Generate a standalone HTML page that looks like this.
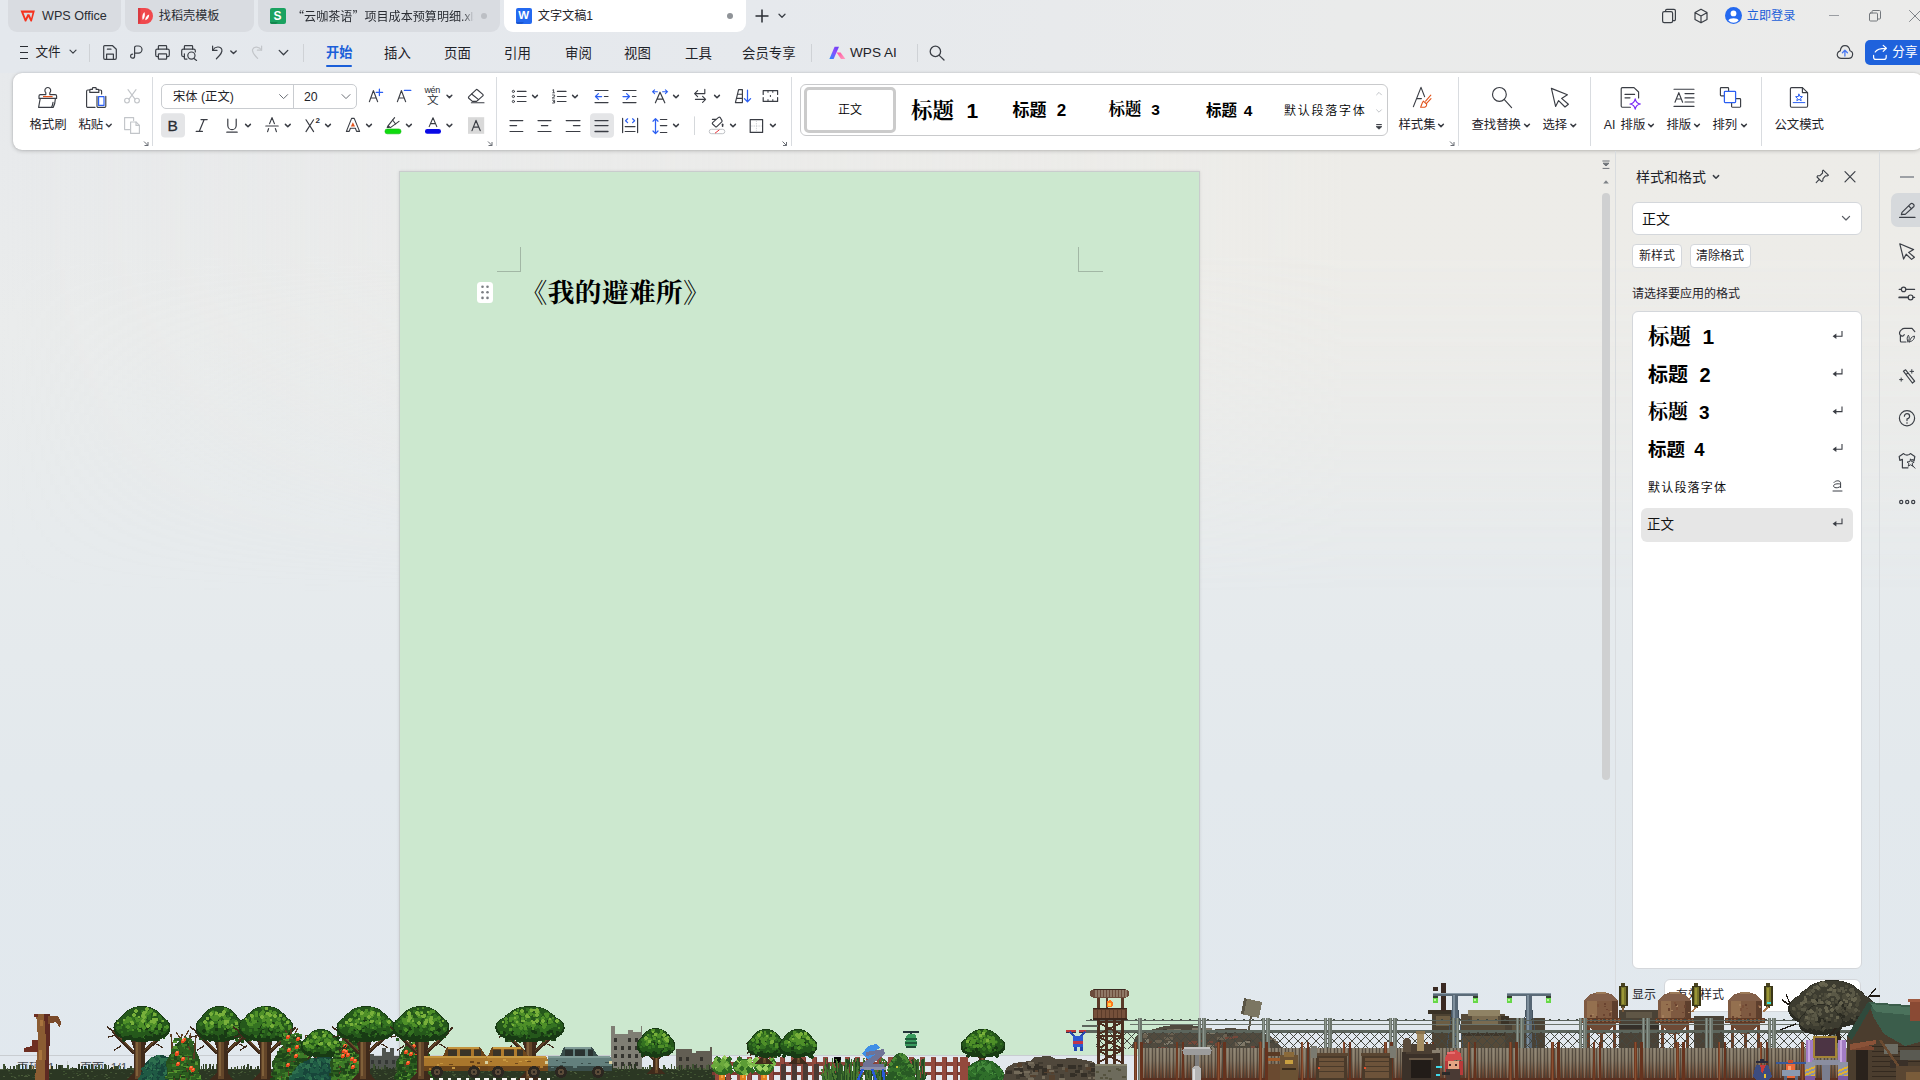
<!DOCTYPE html>
<html lang="zh-CN">
<head>
<meta charset="utf-8">
<title>文字文稿1 - WPS Office</title>
<style>
*{box-sizing:border-box;margin:0;padding:0}
html,body{width:1920px;height:1080px;overflow:hidden}
body{position:relative;font-family:"Liberation Sans","Noto Sans CJK SC",sans-serif;font-size:13px;color:#1f2329;
 background:linear-gradient(180deg,#e6e9ec 0%,#e8eaec 14%,#eaecec 30%,#e7ebed 50%,#e3e9ed 72%,#e1e8ee 100%)}
.abs{position:absolute}
.t{position:absolute;white-space:nowrap;line-height:1}
svg{position:absolute;overflow:visible}
.ic{fill:none;stroke:#3b3f46;stroke-width:1.2;stroke-linecap:round;stroke-linejoin:round}
/* ---------- tab row ---------- */
.tab{position:absolute;top:0;height:32px;background:#d9dce1;border-radius:0 0 9px 9px}
.tab.act{background:#fff}
.mt{top:46.6px;font-size:13.4px;color:#1f2329;margin-left:-1px}
/* ---------- ribbon ---------- */
#ribbon{position:absolute;left:13px;top:73px;width:1910px;height:77px;background:#fff;border-radius:9px;
 box-shadow:0 1px 4px rgba(0,0,0,.20),0 0 2px rgba(0,0,0,.12)}
.vsep{position:absolute;width:1px;background:#d9dce0}
.lbl{position:absolute;white-space:nowrap;font-size:12.4px;line-height:1;color:#1f2329}
/* ---------- document ---------- */
#page{position:absolute;left:399px;top:171px;width:801px;height:920px;background:#cce8cf;border:1px solid #c9cccd;
 box-shadow:0 0 3px rgba(0,0,0,.10)}
/* ---------- right panel ---------- */
#panel{position:absolute;left:1615px;top:151px;width:265px;height:933px;border-left:1px solid #d9dcdf;border-right:1px solid #d9dcdf;
 background:transparent}
.wbox{position:absolute;background:#fff;border:1px solid #d4d7db;border-radius:5px}
</style>
</head>
<body>

<div id="topbg" class="abs" style="left:0;top:0;width:1920px;height:73px;background:linear-gradient(90deg,#e4e8ed 0%,#e6e9ed 40%,#eaebeb 70%,#ebebea 100%)"></div>
<div id="warmbg" class="abs" style="left:0;top:73px;width:1920px;height:520px;background:linear-gradient(90deg,rgba(237,236,232,0) 0%,rgba(237,236,232,.55) 35%,rgba(237,236,232,.95) 70%,rgba(237,236,232,.95) 100%);-webkit-mask-image:linear-gradient(180deg,#000 0%,#000 35%,transparent 100%);mask-image:linear-gradient(180deg,#000 0%,#000 35%,transparent 100%)"></div>
<!-- ================= TAB ROW ================= -->
<div id="tabrow">
  <div class="tab" style="left:8px;width:113px"></div>
  <div class="tab" style="left:125px;width:129px"></div>
  <div class="tab" style="left:258px;width:242px"></div>
  <div class="tab act" style="left:504px;width:242px"></div>

  <!-- WPS logo -->
  <svg style="left:20.2px;top:10px" width="15.4" height="11.6" viewBox="0 0 17 13.4">
    <path d="M0.3 0.5 H16.7 L13.2 12.8 L9.6 6.6 L6 12.8 L3.2 6.2 M2.2 3.6 L6.2 8.6 L8 4.6 H11 L13 8.4 L14.4 3.6 Z" fill="none"/>
    <path d="M0.2 0.6 H16.8 L13.3 13.2 H11.9 L9.3 8.2 L6.7 13.2 H5.3 Z M3.6 3.2 L6.1 9.4 L8.2 5 H10.4 L12.5 9.4 L14 3.2 Z" fill="#f5321e" fill-rule="evenodd"/>
  </svg>
  <span class="t" style="left:42px;top:9.5px;font-size:12.6px;color:#2a2d33">WPS Office</span>

  <!-- docer icon -->
  <svg style="left:138px;top:8px" width="15" height="16" viewBox="0 0 15 16">
    <path d="M0 0 H7 A8 8 0 0 1 7 16 H0 Z" fill="#f0484d"/>
    <path d="M0 0 H2.4 V14.2 L0 16 Z" fill="#d93a40"/>
    <path d="M4.8 12 C3.6 8.6 4.8 5.6 6.4 4 C7.4 6.8 7 9.8 4.8 12 Z M7.2 12.2 C7.2 9.4 8.8 7.2 11.2 6.4 C11.2 9.2 9.8 11.4 7.2 12.2 Z" fill="#fff"/>
  </svg>
  <span class="t" style="left:158.8px;top:10px;font-size:12.15px;color:#2a2d33">找稻壳模板</span>

  <!-- S icon -->
  <svg style="left:270px;top:8px" width="16" height="16" viewBox="0 0 16 16">
    <rect width="16" height="16" rx="2" fill="#1aa260"/>
    <path d="M0 14 H8 L6 16 H2 A2 2 0 0 1 0 14 Z" fill="#12864d"/>
  </svg>
  <span class="t" style="left:273.6px;top:10px;font-size:12px;font-weight:bold;color:#fff">S</span>
  <span class="t" style="left:292px;top:10px;font-size:12.08px;color:#2a2d33;width:181.5px;height:15px;overflow:hidden;-webkit-mask-image:linear-gradient(90deg,#000 94%,transparent 100%)"><span style="font-family:'Noto Sans CJK SC',sans-serif">“</span>云咖茶语<span style="font-family:'Noto Sans CJK SC',sans-serif">”</span>项目成本预算明细.xlsx</span>
  <div class="abs" style="left:480.8px;top:12.8px;width:6px;height:6px;border-radius:50%;background:#bcbfc4"></div>

  <!-- W icon -->
  <svg style="left:516px;top:8px" width="16" height="16" viewBox="0 0 16 16">
    <rect width="16" height="16" rx="2" fill="#2469f0"/>
    <path d="M0 14 H8 L6 16 H2 A2 2 0 0 1 0 14 Z" fill="#1a55d0"/>
  </svg>
  <span class="t" style="left:518.2px;top:9.6px;font-size:11.5px;font-weight:bold;color:#fff">W</span>
  <span class="t" style="left:537.8px;top:10px;font-size:12.15px;color:#1f2329">文字文稿1</span>
  <div class="abs" style="left:727px;top:13px;width:6px;height:6px;border-radius:50%;background:#8f9398"></div>

  <!-- plus / chevron -->
  <svg style="left:755px;top:9px" width="14" height="14" viewBox="0 0 14 14"><path d="M7 0.5V13.5M0.5 7H13.5" stroke="#2a2d33" stroke-width="1.5" fill="none"/></svg>
  <svg style="left:778px;top:13px" width="8" height="6" viewBox="0 0 8 6"><path d="M1 1.2L4 4.2L7 1.2" class="ic" style="stroke-width:1.3"/></svg>

  <!-- right controls -->
  <svg style="left:1661px;top:8px" width="16" height="16" viewBox="0 0 16 16"><rect x="1.6" y="3.6" width="10" height="11" rx="1.6" class="ic"/><path d="M4.6 3.4V2.6A1.2 1.2 0 0 1 5.8 1.4H13A1.4 1.4 0 0 1 14.4 2.8V11.4A1.2 1.2 0 0 1 13.2 12.6H12" class="ic"/></svg>
  <svg style="left:1693px;top:8px" width="16" height="16" viewBox="0 0 16 16"><path d="M8 1.2L14 4.6V11.4L8 14.8L2 11.4V4.6Z M2.2 4.8L8 8L13.8 4.8M8 8V14.6" class="ic"/></svg>
  <svg style="left:1725px;top:7px" width="17" height="17" viewBox="0 0 17 17"><circle cx="8.5" cy="8.5" r="8.5" fill="#2469f0"/><circle cx="8.5" cy="6.4" r="2.9" fill="#fff"/><path d="M3.4 13.6C4 10.6 13 10.6 13.6 13.6A7 7 0 0 1 3.4 13.6Z" fill="#fff"/></svg>
  <span class="t" style="left:1746.8px;top:10px;font-size:12.15px;color:#1b5fd9">立即登录</span>
  <div class="abs" style="left:1829px;top:15px;width:10px;height:1px;background:#9a9da2"></div>
  <svg style="left:1869px;top:10px" width="12" height="12" viewBox="0 0 12 12"><rect x="0.5" y="3" width="8" height="8" rx="1" class="ic" style="stroke:#74787d;stroke-width:1"/><path d="M3 3V1.5A1 1 0 0 1 4 0.5H10.5A1 1 0 0 1 11.5 1.5V8A1 1 0 0 1 10.5 9H8.5" class="ic" style="stroke:#74787d;stroke-width:1"/></svg>
  <svg style="left:1909px;top:10px" width="12" height="12" viewBox="0 0 12 12"><path d="M0.5 0.5L11.5 11.5M11.5 0.5L0.5 11.5" class="ic" style="stroke:#7f8388;stroke-width:1"/></svg>
</div>

<!-- ================= MENU ROW ================= -->
<div id="menurow">
  <svg style="left:20px;top:45px" width="9" height="14" viewBox="0 0 9 14"><path d="M0 1.5H8M0 7.5H8M0 13.5H8" stroke="#2a2d33" stroke-width="1.1" fill="none"/></svg>
  <span class="t" style="left:35.5px;top:46px;font-size:12.6px;color:#1f2329">文件</span>
  <svg style="left:69px;top:49px" width="8" height="6" viewBox="0 0 8 6"><path d="M1 1.2L4 4.2L7 1.2" class="ic" style="stroke-width:1.2"/></svg>
  <div class="vsep" style="left:89px;top:44px;height:18px;background:#cfd2d6"></div>

  <!-- save -->
  <svg style="left:103px;top:45px" width="14" height="15" viewBox="0 0 14 15"><path d="M1.6 0.7H9.6L13.3 4.2V13A1.3 1.3 0 0 1 12 14.3H2A1.3 1.3 0 0 1 0.7 13V1.6A0.9 0.9 0 0 1 1.6 0.7Z" class="ic"/><path d="M3.6 14V9.2H10.4V14M4.4 4.2H8" class="ic"/></svg>
  <!-- pdf/link -->
  <svg style="left:130px;top:45px" width="13" height="15" viewBox="0 0 13 15"><path d="M4.6 8.2H8.4A3.6 3.6 0 0 0 8.4 1H6.2A1.6 1.6 0 0 0 4.6 2.6V11.2A2 2 0 1 1 2.6 9.2" class="ic"/></svg>
  <!-- print -->
  <svg style="left:155px;top:45px" width="15" height="15" viewBox="0 0 15 15"><path d="M3.4 4.2V1.4A0.8 0.8 0 0 1 4.2 0.6H10.8A0.8 0.8 0 0 1 11.6 1.4V4.2" class="ic"/><rect x="0.7" y="4.2" width="13.6" height="7.4" rx="1.6" class="ic"/><rect x="3.4" y="8.8" width="8.2" height="5.4" rx="0.6" class="ic" style="fill:#e6e9ee"/></svg>
  <!-- print preview -->
  <svg style="left:181px;top:45px" width="17" height="16" viewBox="0 0 17 16"><path d="M3.4 4.2V1.4A0.8 0.8 0 0 1 4.2 0.6H10.8A0.8 0.8 0 0 1 11.6 1.4V4.2" class="ic"/><path d="M3.4 11.6H2.2A1.5 1.5 0 0 1 0.7 10.1V5.8A1.6 1.6 0 0 1 2.3 4.2H12.7A1.6 1.6 0 0 1 14.3 5.8V7" class="ic"/><path d="M3.4 8.8V13.4A0.7 0.7 0 0 0 4.1 14.1H6" class="ic"/><circle cx="10.4" cy="10.6" r="3.6" class="ic"/><path d="M13 13.4L15.6 15.4" class="ic"/></svg>
  <!-- undo -->
  <svg style="left:211px;top:45px" width="13" height="15" viewBox="0 0 13 15"><path d="M1.6 1V5.4H6" class="ic"/><path d="M1.8 5.2C4 1.4 9.4 0.8 10.8 4.4C12 7.6 8.4 11 5.4 13.8" class="ic"/></svg>
  <svg style="left:229.5px;top:49.5px" width="7" height="5" viewBox="0 0 7 5"><path d="M0.8 1L3.5 3.6L6.2 1" class="ic" style="stroke-width:1.4"/></svg>
  <!-- redo (disabled) -->
  <svg style="left:251px;top:45px" width="12" height="15" viewBox="0 0 12 15"><path d="M10.6 1V5.2H6.4" class="ic" style="stroke:#c3c6ca"/><path d="M10.4 5C8.4 1.6 3 1 1.6 4.4C0.6 7.4 3.8 10.6 6.6 13.4" class="ic" style="stroke:#c3c6ca"/></svg>
  <svg style="left:277.5px;top:48.5px" width="11" height="8" viewBox="0 0 11 8"><path d="M1.2 1.4L5.5 5.8L9.8 1.4" class="ic" style="stroke-width:1.3"/></svg>
  <div class="vsep" style="left:303px;top:44px;height:18px;background:#cfd2d6"></div>

  <span class="t" style="left:326px;top:46.4px;font-size:13.2px;color:#1b5fd9;font-weight:bold">开始</span>
  <div class="abs" style="left:326px;top:65px;width:26px;height:2px;background:#1b5fd9;border-radius:1px"></div>
  <span class="t mt" style="left:385px">插入</span>
  <span class="t mt" style="left:445px">页面</span>
  <span class="t mt" style="left:505px">引用</span>
  <span class="t mt" style="left:566px">审阅</span>
  <span class="t mt" style="left:625px">视图</span>
  <span class="t mt" style="left:686px">工具</span>
  <span class="t mt" style="left:743px">会员专享</span>
  <div class="vsep" style="left:811px;top:44px;height:18px;background:#cfd2d6"></div>
  <!-- AI logo -->
  <svg style="left:829px;top:46px" width="17" height="14" viewBox="0 0 17 14">
    <defs><linearGradient id="ai1" x1="0" y1="1" x2="1" y2="0"><stop offset="0" stop-color="#1f8cff"/><stop offset="0.55" stop-color="#8a4dff"/><stop offset="1" stop-color="#6a3cf0"/></linearGradient>
    <linearGradient id="ai2" x1="0" y1="0" x2="1" y2="1"><stop offset="0" stop-color="#ff4fa0"/><stop offset="1" stop-color="#ffa0c0"/></linearGradient></defs>
    <path d="M0.4 13L5.6 0.8H10L4.6 13Z" fill="url(#ai1)"/>
    <path d="M7.6 6.6H11.6L16.4 13H12Z" fill="url(#ai2)"/>
  </svg>
  <span class="t" style="left:850px;top:46px;font-size:13.6px;color:#1f2329">WPS AI</span>
  <div class="vsep" style="left:917px;top:44px;height:18px;background:#cfd2d6"></div>
  <svg style="left:929px;top:45px" width="16" height="16" viewBox="0 0 16 16"><circle cx="6.4" cy="6.4" r="5.2" class="ic" style="stroke-width:1.3"/><path d="M10.2 10.4L15 15" class="ic" style="stroke-width:1.3"/></svg>

  <!-- cloud + share -->
  <svg style="left:1830px;top:40px" width="30" height="26" viewBox="1830 40 30 26"><path d="M1841 58.3C1838 58.3 1836.6 55.6 1837.5 53.3C1838 51.9 1839.2 51.2 1840.3 50.9C1840.6 47.9 1842.5 45.6 1845 45.6C1847.6 45.6 1849.5 47.8 1849.9 50.7C1851.8 51.2 1852.8 52.8 1852.6 54.6C1852.4 56.8 1850.8 58.3 1848.6 58.3Z" class="ic" style="stroke-width:1.15"/><path d="M1844.9 56V50.6M1842.4 52.8L1844.9 50.3L1847.4 52.8" fill="none" stroke="#4a78f0" stroke-width="1.3" stroke-linecap="round" stroke-linejoin="round"/></svg>
  <div class="abs" style="left:1865px;top:40px;width:62px;height:25px;background:#1f62dc;border-radius:5px"></div>
  <svg style="left:1865px;top:40px" width="30" height="25" viewBox="1865 40 30 25"><path d="M1873.6 55.4V57.2A2.2 2.2 0 0 0 1875.8 59.4H1884A2.2 2.2 0 0 0 1886.2 57.2V55.4" fill="none" stroke="#fff" stroke-width="1.2" stroke-linecap="round"/><path d="M1875.2 52C1876.4 49.6 1879.4 48.3 1886.2 48.3M1883.2 45.4L1886.4 48.3L1883.2 51.4" fill="none" stroke="#fff" stroke-width="1.2" stroke-linecap="round" stroke-linejoin="round"/></svg>
  <span class="t" style="left:1892.3px;top:46px;font-size:12.6px;color:#fff">分享</span>
</div>

<!-- ================= RIBBON ================= -->
<div id="ribbon">
  <div class="vsep" style="left:139px;top:4px;height:69px"></div>
  <div class="vsep" style="left:483px;top:4px;height:69px"></div>
  <div class="vsep" style="left:778px;top:4px;height:69px"></div>
  <div class="vsep" style="left:1445px;top:4px;height:69px"></div>
  <div class="vsep" style="left:1577px;top:4px;height:69px"></div>
  <div class="vsep" style="left:1748px;top:4px;height:69px"></div>
  <!-- font combos -->
  <div class="abs" style="left:148px;top:11px;width:196px;height:25px;border:1px solid #c9ccd0;border-radius:5px"></div>
  <div class="abs" style="left:280px;top:11px;width:1px;height:25px;background:#c9ccd0"></div>
  <!-- style gallery -->
  <div class="abs" style="left:787px;top:11px;width:588px;height:52px;border:1px solid #c9cacc;border-radius:6px"></div>
  <div class="abs" style="left:790.5px;top:14.4px;width:92px;height:45.2px;border:3.8px solid #cbcbcb;border-radius:5px"></div>
</div>
<svg id="ribsvg" style="left:0;top:0" width="1920" height="160" viewBox="0 0 1920 160">
<style>.k{fill:none;stroke:#3a3d44;stroke-width:1.15;stroke-linecap:round;stroke-linejoin:round}.b{fill:none;stroke:#2b5ff2;stroke-width:1.25;stroke-linecap:round;stroke-linejoin:round}.g{fill:none;stroke:#c2c5c9;stroke-width:1.15;stroke-linecap:round;stroke-linejoin:round}</style>
<g transform="translate(38,87)"><path d="M7.8 7.6V5.6C6.6 4.6 6.6 2.4 7.8 1.4A2.7 2.7 0 0 1 11.8 1.4C13 2.4 13 4.6 11.8 5.6V7.6H17.2A1.4 1.4 0 0 1 18.6 9V11.4H1V9A1.4 1.4 0 0 1 2.4 7.6Z" class="k"/><path d="M2.2 11.6L0.6 20.4H15.2C16.6 18 17.2 15 17.4 11.6" class="k"/><path d="M13.6 20.2C14.4 18.6 14.8 17 15 15.4" class="k"/><path d="M5 9.6H14.6" stroke="#e2541c" stroke-width="1.2" fill="none"/></g>
<g transform="translate(86,87)"><path d="M3.6 3H1.8A1.2 1.2 0 0 0 0.6 4.2V19.2A1.2 1.2 0 0 0 1.8 20.4H9" class="k"/><path d="M13.4 3H14.4A1.2 1.2 0 0 1 15.6 4.2V7" class="k"/><path d="M3.8 5.4V3.2A0.8 0.8 0 0 1 4.6 2.4H6.4V1.4A0.8 0.8 0 0 1 7.2 0.6H9.4A0.8 0.8 0 0 1 10.2 1.4V2.4H12A0.8 0.8 0 0 1 12.8 3.2V5.4Z" class="k"/><path d="M11 9.4V19.2A1.2 1.2 0 0 0 12.2 20.4H18.6A1.2 1.2 0 0 0 19.8 19.2V9.4" class="k"/><rect x="12.6" y="9.6" width="5.4" height="8.8" class="b" style="stroke-width:1.2"/></g>
<g transform="translate(124,89)"><path d="M4 0.6L11 10.2M12 0.6L5 10.2" class="g"/><circle cx="3" cy="11.6" r="2.4" class="g"/><circle cx="13" cy="11.6" r="2.4" class="g"/></g>
<g transform="translate(124,117)"><path d="M5.6 12.6H0.6V0.6H9.6V3.4" class="g"/><path d="M6.6 5H12L15.4 8.4V16.4H6.6Z" class="g"/><path d="M12 5V8.4H15.4" class="g"/></g>
<path d="M144.0 141.5L148.0 145.5M144.5 145.5H148.0V142" stroke="#6a6e75" stroke-width="1" fill="none"/>
<path d="M369.4 101.6L373.4 90.6L377.6 101.6M370.8 98H376.2" class="k" style="stroke-width:1.2"/>
<path d="M379.4 89.2V95.6M376.2 92.4H382.6" class="b"/>
<path d="M397.4 101.6L401.4 90.6L405.6 101.6M398.8 98H404.2" class="k" style="stroke-width:1.2"/>
<path d="M404.4 90.4H410.8" class="b"/>
<g transform="translate(468,89)"><path d="M9.4 0.8L14.8 5.4A1 1 0 0 1 14.8 6.9L8.6 12.4H4.4L0.8 9.2A1 1 0 0 1 0.8 7.7L8 0.8A1 1 0 0 1 9.4 0.8Z" class="k"/><path d="M3.6 5L10.6 10.6" class="k"/><path d="M3.4 13.7H16" class="k"/></g>
<path d="M447 95.2L449.4 97.6L451.8 95.2" class="k" style="stroke-width:1.5"/>
<rect x="161" y="113.2" width="24" height="24.4" rx="4" fill="#e4e5e7"/>
<path d="M201 119.6H207.2M196.2 131.4H202.4M204.2 119.6L199.2 131.4" class="k" style="stroke-width:1.2"/>
<path d="M227.8 119.2V125.4A4.2 4.2 0 0 0 236.2 125.4V119.2" class="k" style="stroke-width:1.2"/><path d="M226.8 132.2H237.2" class="k" style="stroke-width:1.2"/>
<path d="M245.6 124.4L248 126.8L250.4 124.4" class="k" style="stroke-width:1.5"/>
<path d="M267.6 131.6L268.6 128.6M276.4 131.6L275.4 128.6M269.6 123.6L272 117.6L274.4 123.6" class="k" style="stroke-width:1.2"/><path d="M265.8 126H278.2" class="k" style="stroke-width:1.2"/>
<path d="M285.4 124.4L287.8 126.8L290.2 124.4" class="k" style="stroke-width:1.5"/>
<path d="M306 119.8L313.6 131.6M313.6 119.8L306 131.6" class="k" style="stroke-width:1.2"/>
<path d="M325.6 124.4L328 126.8L330.4 124.4" class="k" style="stroke-width:1.5"/>
<path d="M346.4 131.4L351.6 118.4H354.2L359.6 131.4H356.6L355.4 128.2H350.4L349.2 131.4Z" class="k" style="stroke-width:1.1"/>
<path d="M352.9 122.2L355 126.6H350.8Z" fill="#e2541c"/>
<path d="M366.6 124.4L369 126.8L371.4 124.4" class="k" style="stroke-width:1.5"/>
<path d="M394.6 117.6L388 125.8L390.4 127.6L399 121.4M388 125.8L387.2 127.4L389 127.4" class="k" style="stroke-width:1.1"/><path d="M392.6 120L395.6 124" class="k" style="stroke-width:1.1"/>
<rect x="385" y="129" width="16" height="4.8" rx="2.2" fill="#0fdc0f" stroke="#08b808" stroke-width="0.6"/>
<path d="M406.5 124.4L408.9 126.8L411.3 124.4" class="k" style="stroke-width:1.5"/>
<path d="M429.2 126.6L433 117.8L436.8 126.6M430.6 123.6H435.4" class="k" style="stroke-width:1.1"/>
<rect x="425" y="129" width="16" height="4.8" rx="2.2" fill="#0a0ae6"/>
<path d="M447 124.4L449.4 126.8L451.8 124.4" class="k" style="stroke-width:1.5"/>
<rect x="468" y="117.2" width="16.2" height="16.6" fill="#d9d9d9"/>
<path d="M472 130.6L476 120.4L480.2 130.6M473.4 127.2H478.8" class="k" style="stroke-width:1.2"/>
<path d="M488.0 141.5L492.0 145.5M488.5 145.5H492.0V142" stroke="#6a6e75" stroke-width="1" fill="none"/>
<circle cx="513.4" cy="91.4" r="1.1" class="k" style="stroke-width:1"/><path d="M517.4 91.4H526" class="k" style="stroke-width:1.2"/>
<circle cx="513.4" cy="96.5" r="1.1" class="k" style="stroke-width:1"/><path d="M517.4 96.5H526" class="k" style="stroke-width:1.2"/>
<circle cx="513.4" cy="101.5" r="1.1" class="k" style="stroke-width:1"/><path d="M517.4 101.5H526" class="k" style="stroke-width:1.2"/>
<path d="M532.6 95.4L535 97.8L537.4 95.4" class="k" style="stroke-width:1.5"/>
<path d="M557.4 91.4H566" class="k" style="stroke-width:1.2"/>
<path d="M557.4 96.5H566" class="k" style="stroke-width:1.2"/>
<path d="M557.4 101.5H566" class="k" style="stroke-width:1.2"/>
<path d="M552.4 90.2L553.6 89.6V92.6M552.4 92.8H554.8" fill="none" stroke="#3a3d44" stroke-width="0.9"/>
<path d="M552.2 95H554.6V96.4L552.2 98H554.8" fill="none" stroke="#3a3d44" stroke-width="0.9"/>
<path d="M552.2 100.2H554.6V103H552.2M553 101.6H554.6" fill="none" stroke="#3a3d44" stroke-width="0.9"/>
<path d="M572.6 95.4L575 97.8L577.4 95.4" class="k" style="stroke-width:1.5"/>
<path d="M595 90.5H608M595 102.6H608M604.4 96.5H608" class="k" style="stroke-width:1.2"/>
<path d="M595.6 96.5H601.6M598.4 93.6L595.5 96.5L598.4 99.4" class="b"/>
<path d="M623 90.5H636M623 102.6H636M632.4 96.5H636" class="k" style="stroke-width:1.2"/>
<path d="M623 96.5H629.4M626.6 93.6L629.5 96.5L626.6 99.4" class="b"/>
<path d="M655.4 102.8L660 92.2L664.8 102.8M657 99.2H663.2" class="k" style="stroke-width:1.2"/>
<path d="M652.6 91.7H657.4M654.6 89.8L652.6 91.7L654.6 93.6M662.6 91.7H667.6M665.4 89.8L667.4 91.7L665.4 93.6" class="b" style="stroke-width:1.1"/>
<path d="M673.6 95.4L676 97.8L678.4 95.4" class="k" style="stroke-width:1.5"/>
<path d="M704.8 89.4V93.6H694.6M697.6 90.6L694.6 93.6L697.6 96.6" class="k"/>
<path d="M695.4 99.3H705.6M702.6 96.3L705.6 99.3L702.6 102.3" class="k"/>
<path d="M714.6 95.4L717 97.8L719.4 95.4" class="k" style="stroke-width:1.5"/>
<path d="M738.6 89.6H742.4V102.6H735.4Z M737.6 94.2H742.4M736.6 98.4H742.4" class="k"/>
<path d="M747.5 90.2V101.6M744.4 98.6L747.5 101.8L750.6 98.6" class="b"/>
<path d="M763.2 94.4V90.6H777.6V94.4M763.2 97.6V101.4H777.6V97.6" class="k" style="stroke-width:1.2"/>
<path d="M768 90.6V92.4M772.8 90.6V92.4M768 101.4V99.6M772.8 101.4V99.6M770.4 95.4V96.6" class="k" style="stroke-width:1"/>
<path d="M510 120.6H522.8M510 125.6H516.6M510 131.5H522.8" class="k" style="stroke-width:1.2"/>
<path d="M538 120.6H551M541.4 125.6H547.8M538 131.5H551" class="k" style="stroke-width:1.2"/>
<path d="M566.2 120.6H580M573.4 125.6H580M566.2 131.5H580" class="k" style="stroke-width:1.2"/>
<rect x="590" y="113.2" width="24" height="24.6" rx="4" fill="#e4e5e7"/>
<path d="M595 120.6H608M595 125.6H608M595 131.5H608" class="k" style="stroke-width:1.3"/>
<path d="M622.6 118.4V132.6M637.6 118.4V132.6M625.2 126.6H635M625.2 131.5H635" class="k" style="stroke-width:1.2"/>
<path d="M627.6 118.8L625.6 120.7L627.6 122.6M632.6 118.8L634.6 120.7L632.6 122.6" class="b"/>
<path d="M660.4 119.5H666.8M660.4 125.6H666.8M660.4 132.5H666.8" class="k" style="stroke-width:1.2"/>
<path d="M655.5 118.8V133.4M653 121.2L655.5 118.6L658 121.2M653 131L655.5 133.6L658 131" class="b"/>
<path d="M673.6 124.4L676 126.8L678.4 124.4" class="k" style="stroke-width:1.5"/>
<path d="M694.5 116.4V135" stroke="#d5d8db" stroke-width="1" fill="none"/>
<path d="M712.4 119.4H716.2M716.2 119.4L718.6 117.4A1.2 1.2 0 0 1 720.2 117.5L722 120.6M716.2 119.4L712.6 122.6A1 1 0 0 0 712.6 124L715.4 126.6A1 1 0 0 0 716.8 126.6L722 121.6V120.4" class="k"/>
<path d="M722.6 124.2V126.2" stroke="#3a3d44" stroke-width="1.6" fill="none" stroke-linecap="round"/>
<rect x="709.2" y="129.3" width="15.6" height="4.4" rx="2.2" fill="#fff" stroke="#b9bbbf" stroke-width="0.9"/><path d="M715 133.2L719.4 129.8" stroke="#e8373e" stroke-width="1" fill="none"/>
<path d="M730.6 124.4L733 126.8L735.4 124.4" class="k" style="stroke-width:1.5"/>
<rect x="750.2" y="119.6" width="12.4" height="12.8" class="k" style="stroke-width:1.2"/><path d="M756.4 120.6V131.6M751.2 126H761.6" stroke="#c4c6ca" stroke-width="0.8" stroke-dasharray="1.4 1" fill="none"/>
<path d="M770.5 124.4L772.9 126.8L775.3 124.4" class="k" style="stroke-width:1.5"/>
<path d="M782.5 141.5L786.5 145.5M783 145.5H786.5V142" stroke="#6a6e75" stroke-width="1" fill="none"/>
<path d="M106.4 124.3L108.8 126.7L111.2 124.3" class="k" style="stroke-width:1.5"/><path d="M279.6 94.6L283.6 98.6L287.6 94.6" class="k" style="stroke-width:1;stroke:#6a6e75"/><path d="M342 94.6L346 98.6L350 94.6" class="k" style="stroke-width:1;stroke:#6a6e75"/>
<path d="M1376.6 94.8L1379 92.4L1381.4 94.8" class="g" style="stroke-width:1"/>
<path d="M1376.6 109.8L1379 112.2L1381.4 109.8" class="g" style="stroke-width:1"/>
<path d="M1376.2 124.6H1381.8" stroke="#3a3d44" stroke-width="1.1" fill="none"/><path d="M1376.2 126.6L1379 129.2L1381.8 126.6Z" fill="#3a3d44" stroke="#3a3d44" stroke-width="0.8" stroke-linejoin="round"/>
<path d="M1413.4 106.6L1421 87.4L1424.6 96.6M1416.6 98.6H1421.4" class="k"/>
<path d="M1430.8 95.2L1425.6 101.2M1423.4 101.2L1426.6 104A2.6 2.6 0 0 1 1424.6 107.2H1420.6C1421.6 105.6 1421.6 103.4 1423.4 101.2ZM1431 98.6L1426.8 103.2" fill="none" stroke="#e2541c" stroke-width="1.1" stroke-linecap="round" stroke-linejoin="round"/>
<path d="M1438.6 124.2L1441 126.6L1443.4 124.2" class="k" style="stroke-width:1.5"/>
<path d="M1450.0 141.5L1454.0 145.5M1450.5 145.5H1454.0V142" stroke="#6a6e75" stroke-width="1" fill="none"/>
<circle cx="1499.4" cy="94.4" r="6.9" class="k"/><path d="M1504.4 99.6L1511.6 107.6" class="k"/>
<path d="M1524.6 124.2L1527 126.6L1529.4 124.2" class="k" style="stroke-width:1.5"/>
<path d="M1551.4 88.4L1567.4 94.8L1561.6 98.4L1568.4 104.2L1565 107L1558.6 100.6L1555.6 106.4Z" class="k"/>
<path d="M1570.9 124.2L1573.3 126.6L1575.7 124.2" class="k" style="stroke-width:1.5"/>
<path d="M1630.4 107.2H1622.4A1.2 1.2 0 0 1 1621.2 106V88.8A1.2 1.2 0 0 1 1622.4 87.6H1634L1638.6 92V98" class="k"/><path d="M1625 94.4H1634.6M1625 97.8H1630" class="k"/>
<path d="M1635.2 98.8C1635.8 102.2 1637 103.4 1640.4 104C1637 104.6 1635.8 105.8 1635.2 109.2C1634.6 105.8 1633.4 104.6 1630 104C1633.4 103.4 1634.6 102.2 1635.2 98.8Z" fill="#fff" stroke="#7a2cf5" stroke-width="1.2" stroke-linejoin="round"/>
<path d="M1648.6 124.2L1651 126.6L1653.4 124.2" class="k" style="stroke-width:1.5"/>
<path d="M1674 89.2H1694M1674 106.4H1694M1685 93.6H1694M1685 97.9H1694M1685 102H1694" class="k"/>
<path d="M1675 102.2L1678.8 92.6L1682.6 102.2M1676.4 99H1681.2" class="k"/>
<path d="M1694.6 124.2L1697 126.6L1699.4 124.2" class="k" style="stroke-width:1.5"/>
<path d="M1724.4 95.8H1721.2A0.8 0.8 0 0 1 1720.4 95V88.4A0.8 0.8 0 0 1 1721.2 87.6H1727.8A0.8 0.8 0 0 1 1728.6 88.4V91.2" class="k"/>
<path d="M1735.6 98.6H1739.8A0.8 0.8 0 0 1 1740.6 99.4V106.4A0.8 0.8 0 0 1 1739.8 107.2H1732.4A0.8 0.8 0 0 1 1731.6 106.4V102.6" class="k"/>
<rect x="1724.4" y="91.3" width="11.2" height="11.2" rx="0.8" class="b" style="fill:#fff"/>
<path d="M1741.6 124.2L1744 126.6L1746.4 124.2" class="k" style="stroke-width:1.5"/>
<path d="M1791.6 87.6H1802.4L1807.6 92.6V106A1.2 1.2 0 0 1 1806.4 107.2H1791.6A1.2 1.2 0 0 1 1790.4 106V88.8A1.2 1.2 0 0 1 1791.6 87.6Z" class="k"/><path d="M1802.4 87.8V92.6H1807.4" class="k"/>
<path d="M1799 94.2L1800 96.5L1802.4 96.7L1800.6 98.3L1801.2 100.7L1799 99.4L1796.8 100.7L1797.4 98.3L1795.6 96.7L1798 96.5Z" class="b" style="stroke-width:1"/><path d="M1793.2 102.6H1804.8" class="b" style="stroke-width:1"/>
</svg>
<div id="riblabels">
  <span class="lbl" style="left:29.4px;top:119.4px">格式刷</span>
  <span class="lbl" style="left:78.4px;top:119.4px">粘贴</span>
  <span class="lbl" style="left:173px;top:90.6px;font-size:12.3px">宋体 (正文)</span>
  <span class="lbl" style="left:304px;top:90.6px;font-size:12.3px">20</span>
  <span class="t" style="left:167.5px;top:118.2px;font-size:15.5px;color:#2a2d33;-webkit-text-stroke:0.3px #2a2d33">B</span>
  <span class="t" style="left:424.4px;top:86.2px;font-size:9px;color:#2a2d33;letter-spacing:-0.3px">wén</span>
  <span class="t" style="left:427px;top:95px;font-size:11.5px;color:#2a2d33">文</span>
  <span class="t" style="left:315.4px;top:116.6px;font-size:8px;color:#2a2d33;font-weight:bold">2</span>
  <span class="t" style="left:838px;top:104px;font-size:12px;font-weight:350;font-family:'Liberation Sans','Noto Sans CJK SC',sans-serif;color:#000">正文</span>
  <span class="t" style="left:911px;top:99.5px;font-size:21.5px;word-spacing:7px;font-weight:bold;font-family:'Liberation Serif','Noto Serif CJK SC',serif;color:#000">标题 <b style="font-family:'Liberation Sans',sans-serif;font-size:21px">1</b></span>
  <span class="t" style="left:1012.5px;top:102px;font-size:17px;word-spacing:5.5px;font-weight:bold;font-family:'Liberation Sans','Noto Sans CJK SC',sans-serif;color:#000">标题 2</span>
  <span class="t" style="left:1108.5px;top:102px;font-size:16.5px;word-spacing:5.5px;font-weight:bold;font-family:'Liberation Serif','Noto Serif CJK SC',serif;color:#000">标题 <b style="font-family:'Liberation Sans',sans-serif;font-size:15.5px">3</b></span>
  <span class="t" style="left:1206px;top:102.5px;font-size:15.5px;word-spacing:2.5px;font-weight:bold;font-family:'Liberation Sans','Noto Sans CJK SC',sans-serif;color:#000">标题 4</span>
  <span class="t" style="left:1284px;top:104.6px;font-size:12px;letter-spacing:1.75px;font-weight:350;font-family:'Liberation Sans','Noto Sans CJK SC',sans-serif;color:#000">默认段落字体</span>
  <span class="lbl" style="left:1398.4px;top:119.4px">样式集</span>
  <span class="lbl" style="left:1471.4px;top:119.4px">查找替换</span>
  <span class="lbl" style="left:1542.4px;top:119.4px">选择</span>
  <span class="lbl" style="left:1603.8px;top:119.4px;word-spacing:1.6px">AI 排版</span>
  <span class="lbl" style="left:1666.4px;top:119.4px">排版</span>
  <span class="lbl" style="left:1712.4px;top:119.4px">排列</span>
  <span class="lbl" style="left:1774.4px;top:119.4px">公文模式</span>
</div>


<!-- ================= DOCUMENT ================= -->
<div id="page">
  <div class="abs" style="left:97px;top:99px;width:24px;height:1px;background:#a2b7a5"></div>
  <div class="abs" style="left:120px;top:75px;width:1px;height:25px;background:#a2b7a5"></div>
  <div class="abs" style="left:678px;top:99px;width:25px;height:1px;background:#a2b7a5"></div>
  <div class="abs" style="left:678px;top:75px;width:1px;height:25px;background:#a2b7a5"></div>
  <div class="abs" style="left:77px;top:110px;width:16px;height:21px;background:#fff;border-radius:3.5px"></div>
  <svg style="left:77px;top:110px" width="16" height="21" viewBox="0 0 16 21"><g fill="#7b7e83"><circle cx="5.5" cy="4.8" r="1.3"/><circle cx="10.5" cy="4.8" r="1.3"/><circle cx="5.5" cy="10.3" r="1.3"/><circle cx="10.5" cy="10.3" r="1.3"/><circle cx="5.5" cy="15.9" r="1.3"/><circle cx="10.5" cy="15.9" r="1.3"/></g></svg>
  <span class="t" style="left:120.6px;top:108px;font-size:26.67px;letter-spacing:0.45px;font-weight:bold;color:#000;font-family:'Liberation Serif','Noto Serif CJK SC',serif">《我的避难所》</span>
</div>

<!-- scrollbar -->
<svg style="left:1600px;top:158px" width="12" height="30" viewBox="0 0 12 30"><path d="M2.4 3H9.6M3 5.2L6 8L9 5.2Z M2.6 10.4H9.4" stroke="#6f7378" stroke-width="1" fill="#6f7378"/><path d="M3.2 25.4L6 22.2L8.8 25.4Z" fill="#7d8186"/></svg>
<div class="abs" style="left:1602px;top:193px;width:8px;height:587px;border-radius:4px;background:#cfd0d1"></div>


<!-- ================= RIGHT PANEL ================= -->
<div id="panel"></div>
<div id="panelc">
  <span class="t" style="left:1636px;top:170px;font-size:14px;color:#1f2329">样式和格式</span>
  
  <div class="wbox" style="left:1632px;top:202px;width:230px;height:33px;border-radius:6px"></div>
  <span class="t" style="left:1642px;top:212px;font-size:14px;color:#111;font-family:'Liberation Sans','Noto Sans CJK SC',sans-serif">正文</span>
  <svg style="left:1838px;top:212px" width="16" height="12" viewBox="0 0 16 12"><path d="M4.4 4.4L8 8L11.6 4.4" class="ic" style="stroke-width:1.1"/></svg>
  <div class="wbox" style="left:1632px;top:244px;width:50px;height:24px;border-radius:4px"></div>
  <span class="t" style="left:1639px;top:250px;font-size:12px">新样式</span>
  <div class="wbox" style="left:1690px;top:244px;width:61px;height:24px;border-radius:4px"></div>
  <span class="t" style="left:1696px;top:250px;font-size:12px">清除格式</span>
  <span class="t" style="left:1632px;top:288px;font-size:12px">请选择要应用的格式</span>
  <div class="wbox" style="left:1632px;top:311px;width:230px;height:658px;border-radius:6px"></div>
  <div class="abs" style="left:1641px;top:508px;width:212px;height:34px;border-radius:6px;background:#e6e6e6"></div>
  <span class="t" style="left:1648px;top:326px;font-size:21.5px;word-spacing:6px;font-weight:bold;font-family:'Liberation Serif','Noto Serif CJK SC',serif;color:#000">标题 <b style="font-family:'Liberation Sans',sans-serif;font-size:21px">1</b></span>
  <span class="t" style="left:1648px;top:364.5px;font-size:20px;word-spacing:6px;font-weight:bold;font-family:'Liberation Sans','Noto Sans CJK SC',sans-serif;color:#000">标题 2</span>
  <span class="t" style="left:1648px;top:402px;font-size:20px;word-spacing:6px;font-weight:bold;font-family:'Liberation Serif','Noto Serif CJK SC',serif;color:#000">标题 <b style="font-family:'Liberation Sans',sans-serif;font-size:19px">3</b></span>
  <span class="t" style="left:1648px;top:441px;font-size:18.5px;word-spacing:4px;font-weight:bold;font-family:'Liberation Sans','Noto Sans CJK SC',sans-serif;color:#000">标题 4</span>
  <span class="t" style="left:1648px;top:481.5px;font-size:12px;letter-spacing:1.2px;color:#111">默认段落字体</span>
  <span class="t" style="left:1647px;top:518px;font-size:13.5px;color:#111">正文</span>
  <span class="t" style="left:1632px;top:989px;font-size:12px;color:#1f2329">显示</span>
  <div class="wbox" style="left:1664px;top:979px;width:197px;height:33px;border-radius:6px"></div>
  <span class="t" style="left:1676px;top:989px;font-size:12px;color:#1f2329">有效样式</span>
  <svg style="left:1600px;top:150px" width="320" height="420" viewBox="1600 150 320 420">
    <path d="M1713.4 175.6L1716 178.2L1718.6 175.6" class="ic" style="stroke-width:1.5"/>
    <path d="M1823.2 170.2L1828.4 175.2L1827 176L1825.4 175.8L1823 178.6L1822.8 181L1821.6 181.6L1817 177L1817.6 175.8L1820 175.6L1822.6 173L1822.4 171.2Z M1819.2 179.4L1816.2 182.6" class="ic" style="stroke-width:1.1"/>
    <path d="M1845 171.6L1855 181.8M1855 171.6L1845 181.8" class="ic" style="stroke-width:1.2"/>
    <path d="M1842.4 216.4L1846 220L1849.6 216.4" class="ic" style="stroke-width:1;stroke:#5a5e65"/>
    <path d="M1842 331.0V336.20000000000005H1834.4" stroke="#3a3d44" stroke-width="1.1" fill="none"/><path d="M1836.4 333.40000000000003L1832.6 336.20000000000005L1836.4 339.0Z" fill="#3a3d44"/><path d="M1842 368.7V373.90000000000003H1834.4" stroke="#3a3d44" stroke-width="1.1" fill="none"/><path d="M1836.4 371.1L1832.6 373.90000000000003L1836.4 376.7Z" fill="#3a3d44"/><path d="M1842 406.4V411.6H1834.4" stroke="#3a3d44" stroke-width="1.1" fill="none"/><path d="M1836.4 408.8L1832.6 411.6L1836.4 414.4Z" fill="#3a3d44"/><path d="M1842 444.0V449.20000000000005H1834.4" stroke="#3a3d44" stroke-width="1.1" fill="none"/><path d="M1836.4 446.40000000000003L1832.6 449.20000000000005L1836.4 452.0Z" fill="#3a3d44"/><path d="M1842 518.6V523.8000000000001H1834.4" stroke="#3a3d44" stroke-width="1.1" fill="none"/><path d="M1836.4 521.0L1832.6 523.8000000000001L1836.4 526.6Z" fill="#3a3d44"/>
    <path d="M1834 482.4C1835.6 480.2 1840.6 480 1840.6 483.2V487.6M1840.6 484C1837 483.4 1833.6 484 1833.6 486C1833.6 488.4 1838.6 488.4 1840.6 486.2" class="ic" style="stroke-width:1"/><path d="M1833 491H1842" class="ic" style="stroke-width:1"/>
  </svg>
</div>


<!-- ================= SIDEBAR ================= -->
<div id="sidebar">
  
  <div class="abs" style="left:1900px;top:176px;width:14px;height:2px;background:#9da0a5"></div>
  <div class="abs" style="left:1891px;top:193px;width:40px;height:34px;border-radius:7px;background:#d6d9dc"></div>
  <svg style="left:1880px;top:150px" width="40" height="380" viewBox="1880 150 40 380">
    <!-- pen -->
    <path d="M1903.2 214.4L1901.4 214.6L1902 212.4L1910.6 203.8A1.6 1.6 0 0 1 1912.9 203.8L1913.6 204.5A1.6 1.6 0 0 1 1913.6 206.8L1905.2 214.4Z M1908.6 205.8L1911.6 208.8" class="ic"/><path d="M1899.6 217.4H1915" class="ic"/>
    <!-- cursor -->
    <path d="M1899.8 243.8L1913.6 249.6L1908.6 252.4L1914.4 257.2L1911.6 259.4L1906.2 254.2L1903.6 259Z" class="ic"/>
    <!-- sliders -->
    <path d="M1899.2 289.4H1901.4M1905.8 289.4H1914.6" class="ic"/><circle cx="1903.6" cy="289.4" r="2.2" class="ic"/>
    <path d="M1899.2 297.4H1908.2" class="ic" style="stroke-width:1.8"/><path d="M1912.8 297.4H1914.6" class="ic"/><circle cx="1910.6" cy="297.4" r="2.4" class="ic"/>
    <!-- docer shop -->
    <path d="M1906 342H1901.4A1 1 0 0 1 1900.4 341V335.4C1898.6 333.6 1899.6 331.4 1901.6 329.6C1902.6 328.6 1903.6 328.4 1904.6 328.4H1912L1914.8 331.6" class="ic"/><path d="M1904.2 334.6A2 2 0 0 1 1900.6 335.2" class="ic"/>
    <path d="M1908 341.8C1906.6 339.2 1907 336.8 1908.4 335.2C1909.6 337.4 1909.6 339.6 1908 341.8ZM1909.6 341.8C1909.8 339 1911.6 336.6 1914.4 336C1914.6 338.8 1913 341.2 1909.6 341.8Z" class="ic" style="stroke-width:1"/>
    <!-- magic wand -->
    <path d="M1903.4 371.2L1905.6 369.8L1914.6 381.2L1912.4 383Z M1906.2 374.4L1908.2 372.8" class="ic"/>
    <path d="M1911.8 369.6V373.2M1910 371.4H1913.6M1901.2 378V381.2M1899.6 379.6H1902.8" class="ic" style="stroke-width:1"/>
    <!-- help -->
    <circle cx="1907" cy="418.3" r="7.6" class="ic"/><path d="M1904.4 416.2A2.6 2.6 0 1 1 1907 418.8V420.6" class="ic"/><circle cx="1907" cy="423" r="0.8" fill="#3b3f46"/>
    <!-- shirt -->
    <path d="M1908 467.8H1902.4V459.4L1899.8 460.4L1899.2 456.4L1903.6 453.6C1904.6 455.6 1909.4 455.6 1910.4 453.6L1914.8 456.4L1914.2 460.4L1911.8 459.6" class="ic"/>
    <path d="M1910.6 459.2L1911.6 461.6L1914.2 462L1912.2 463.6L1912.8 466.2L1910.6 464.8L1908.2 466.2L1909 463.6L1907 462L1909.6 461.6Z M1912.4 465.4L1915 468.2" class="ic" style="stroke-width:1"/>
    <!-- dots -->
    <circle cx="1901.2" cy="502" r="1.6" class="ic"/><circle cx="1907.2" cy="502" r="1.6" class="ic"/><circle cx="1913.2" cy="502" r="1.6" class="ic"/>
  </svg>
</div>


<!-- ================= STATUS BAR ================= -->
<div id="status" class="abs" style="left:0;top:1055px;width:1616px;height:25px;background:#e2e8ee;border-top:1px solid #c9cdd1">
  <span class="t" style="left:17px;top:6px;font-size:12px;color:#4a4e55">页码: 1</span>
  <div class="abs" style="left:67px;top:5px;width:1px;height:13px;background:#c9ccd0"></div>
  <span class="t" style="left:80px;top:6px;font-size:12px;color:#4a4e55">页面: 1/1</span>
</div>

<!-- ================= GAME OVERLAY ================= -->
<div id="game"><svg id="gamesvg" style="left:0;top:970px" width="1920" height="110" viewBox="0 0 1920 110" shape-rendering="crispEdges"><rect x="368" y="86" width="32" height="22" fill="#50544f"/><rect x="368" y="84" width="6" height="2" fill="#50544f"/><rect x="374" y="86" width="8" height="0" fill="#50544f"/><rect x="382" y="78" width="4" height="8" fill="#50544f"/><rect x="386" y="82" width="4" height="4" fill="#50544f"/><rect x="390" y="78" width="4" height="8" fill="#50544f"/><rect x="394" y="86" width="5" height="0" fill="#50544f"/><rect x="399" y="80" width="1" height="6" fill="#50544f"/><rect x="371" y="90" width="3" height="4" fill="#343734"/><rect x="378" y="90" width="3" height="4" fill="#343734"/><rect x="385" y="90" width="3" height="4" fill="#343734"/><rect x="392" y="90" width="3" height="4" fill="#343734"/><rect x="371" y="98" width="3" height="4" fill="#343734"/><rect x="385" y="98" width="3" height="4" fill="#343734"/><rect x="392" y="98" width="3" height="4" fill="#343734"/><rect x="611" y="64" width="31" height="44" fill="#7f7e74"/><rect x="611" y="56" width="4" height="8" fill="#7f7e74"/><rect x="615" y="64" width="8" height="0" fill="#7f7e74"/><rect x="623" y="64" width="5" height="0" fill="#7f7e74"/><rect x="628" y="60" width="5" height="4" fill="#7f7e74"/><rect x="633" y="62" width="8" height="2" fill="#7f7e74"/><rect x="641" y="56" width="1" height="8" fill="#7f7e74"/><rect x="614" y="68" width="3" height="4" fill="#34342f"/><rect x="628" y="68" width="3" height="4" fill="#34342f"/><rect x="635" y="68" width="3" height="4" fill="#34342f"/><rect x="614" y="76" width="3" height="4" fill="#34342f"/><rect x="621" y="76" width="3" height="4" fill="#34342f"/><rect x="628" y="76" width="3" height="4" fill="#34342f"/><rect x="635" y="76" width="3" height="4" fill="#34342f"/><rect x="614" y="84" width="3" height="4" fill="#34342f"/><rect x="621" y="84" width="3" height="4" fill="#34342f"/><rect x="628" y="84" width="3" height="4" fill="#34342f"/><rect x="635" y="84" width="3" height="4" fill="#34342f"/><rect x="614" y="92" width="3" height="4" fill="#34342f"/><rect x="621" y="92" width="3" height="4" fill="#34342f"/><rect x="628" y="92" width="3" height="4" fill="#34342f"/><rect x="635" y="92" width="3" height="4" fill="#34342f"/><rect x="621" y="100" width="3" height="4" fill="#34342f"/><rect x="628" y="100" width="3" height="4" fill="#34342f"/><rect x="635" y="100" width="3" height="4" fill="#34342f"/><rect x="676" y="83" width="36" height="25" fill="#625e53"/><rect x="676" y="79" width="8" height="4" fill="#625e53"/><rect x="684" y="79" width="8" height="4" fill="#625e53"/><rect x="692" y="83" width="4" height="0" fill="#625e53"/><rect x="696" y="81" width="8" height="2" fill="#625e53"/><rect x="704" y="81" width="6" height="2" fill="#625e53"/><rect x="710" y="77" width="2" height="6" fill="#625e53"/><rect x="679" y="87" width="3" height="4" fill="#35332d"/><rect x="686" y="87" width="3" height="4" fill="#35332d"/><rect x="700" y="87" width="3" height="4" fill="#35332d"/><rect x="679" y="95" width="3" height="4" fill="#35332d"/><rect x="686" y="95" width="3" height="4" fill="#35332d"/><rect x="693" y="95" width="3" height="4" fill="#35332d"/><rect x="700" y="95" width="3" height="4" fill="#35332d"/><rect x="707" y="95" width="3" height="4" fill="#35332d"/><rect x="0" y="99" width="720" height="11" fill="#2b3723"/><path fill="#4a5a3a" d="M0 99h2v1h-2zM1 99h2v1h-2zM7 98h1v2h-1zM16 95h2v5h-2zM27 99h1v1h-1zM30 96h2v4h-2zM33 96h1v4h-1zM47 97h2v3h-2zM48 99h2v1h-2zM68 99h2v1h-2zM70 98h2v2h-2zM79 96h1v4h-1zM106 95h1v5h-1zM118 95h1v5h-1zM120 96h1v4h-1zM132 98h2v2h-2zM138 95h2v5h-2zM143 97h1v3h-1zM145 96h1v4h-1zM166 99h1v1h-1zM168 96h1v4h-1zM200 99h1v1h-1zM213 94h1v6h-1zM216 94h1v6h-1zM220 98h2v2h-2zM234 97h2v3h-2zM241 96h1v4h-1zM252 99h2v1h-2zM255 97h1v3h-1zM279 94h2v6h-2zM281 94h2v6h-2zM287 97h2v3h-2zM289 97h2v3h-2zM295 97h2v3h-2zM302 99h2v1h-2zM305 94h1v6h-1zM307 97h1v3h-1zM314 96h2v4h-2zM319 94h2v6h-2zM320 99h2v1h-2zM325 98h1v2h-1zM330 94h2v6h-2zM334 99h2v1h-2zM336 97h1v3h-1zM342 98h2v2h-2zM343 97h1v3h-1zM353 98h1v2h-1zM381 97h2v3h-2zM400 99h2v1h-2zM403 97h2v3h-2zM410 95h1v5h-1zM417 98h1v2h-1zM422 98h2v2h-2zM447 95h1v5h-1zM466 94h1v6h-1zM477 96h1v4h-1zM482 95h1v5h-1zM487 99h1v1h-1zM497 95h1v5h-1zM502 95h1v5h-1zM510 97h1v3h-1zM513 94h2v6h-2zM519 96h1v4h-1zM522 98h2v2h-2zM526 97h1v3h-1zM539 97h2v3h-2zM552 94h2v6h-2zM557 97h1v3h-1zM583 94h2v6h-2zM587 99h1v1h-1zM598 94h1v6h-1zM618 97h1v3h-1zM650 96h1v4h-1zM673 99h2v1h-2zM676 97h2v3h-2zM678 96h1v4h-1zM682 95h1v5h-1zM684 98h2v2h-2zM699 97h2v3h-2zM703 98h2v2h-2zM704 99h2v1h-2zM706 95h2v5h-2zM707 98h2v2h-2zM708 94h1v6h-1zM714 94h1v6h-1zM373.838 100.809h2v1h-2zM369.93 107.462h2v1h-2zM452.567 105.399h2v1h-2zM190.913 101.795h2v1h-2zM337.033 102.355h2v1h-2zM488.749 103.853h2v1h-2zM575.217 102.864h2v1h-2zM570.006 101.343h2v1h-2zM438.024 106.25h2v1h-2zM649.183 104.388h2v1h-2zM603.938 101.579h2v1h-2zM177.528 101.317h2v1h-2zM336.931 104.501h2v1h-2zM129.974 102.883h2v1h-2zM20.5413 104.877h2v1h-2zM24.4058 105.745h2v1h-2zM91.3691 100.756h2v1h-2zM263.634 103.796h2v1h-2zM313.336 103.379h2v1h-2zM595.969 103.23h2v1h-2zM564.635 100.32h2v1h-2zM399.092 103.248h2v1h-2zM438.254 105.264h2v1h-2zM655.072 104.894h2v1h-2zM105.877 105.39h2v1h-2zM28.4214 105.069h2v1h-2zM557.12 103.369h2v1h-2zM489.573 104.751h2v1h-2zM307.44 100.075h2v1h-2zM263.429 105.978h2v1h-2zM8.2087 100.118h2v1h-2zM689.543 106.679h2v1h-2zM43.0409 102.941h2v1h-2zM680.344 106.277h2v1h-2zM240.398 102.239h2v1h-2zM701.245 105.626h2v1h-2zM271.207 105.479h2v1h-2zM207.735 101.125h2v1h-2zM105.839 107.803h2v1h-2zM574.12 101.603h2v1h-2zM670.84 101.872h2v1h-2zM41.4437 103.164h2v1h-2zM138.466 101.446h2v1h-2zM269.309 100.849h2v1h-2zM429.993 102.759h2v1h-2zM306.684 107.572h2v1h-2zM406.423 105.125h2v1h-2zM267.056 101.881h2v1h-2zM677.641 100.474h2v1h-2zM185.69 104.107h2v1h-2zM424.646 103.53h2v1h-2zM672.463 106.934h2v1h-2zM299.258 101.298h2v1h-2zM704.543 101.155h2v1h-2zM367.765 103.544h2v1h-2zM656.627 101.746h2v1h-2zM130.094 106.747h2v1h-2zM432.469 106.632h2v1h-2zM148.343 104.899h2v1h-2zM145.649 100.526h2v1h-2zM26.403 105.618h2v1h-2zM428.324 100.037h2v1h-2zM560.97 106.945h2v1h-2zM686.917 103.958h2v1h-2zM14.0048 107.41h2v1h-2zM140.461 100.141h2v1h-2zM105.999 104.583h2v1h-2zM515.181 106.744h2v1h-2zM610.294 100.428h2v1h-2zM179.485 103.377h2v1h-2zM49.8702 103.464h2v1h-2zM660.909 104.988h2v1h-2zM390.423 107.395h2v1h-2zM86.6745 104.754h2v1h-2zM649.023 100.676h2v1h-2zM415.688 102.193h2v1h-2zM439.166 104.561h2v1h-2zM331.836 104.384h2v1h-2zM174.423 101.773h2v1h-2zM40.9734 100.174h2v1h-2zM254.962 106.103h2v1h-2zM162.12 107.674h2v1h-2zM672.444 103.334h2v1h-2zM253.767 105.403h2v1h-2zM439.745 102.214h2v1h-2zM193.452 105.045h2v1h-2zM3.11314 106.125h2v1h-2zM84.5624 103.18h2v1h-2zM378.808 104.763h2v1h-2zM274.085 102.4h2v1h-2zM218.904 101.16h2v1h-2zM387.72 107.987h2v1h-2zM280.453 102.862h2v1h-2zM294.854 104.007h2v1h-2zM552.476 107.193h2v1h-2zM454.393 104.192h2v1h-2zM131.335 105.041h2v1h-2zM76.7666 104.559h2v1h-2zM7.72829 100.022h2v1h-2zM553.656 104.536h2v1h-2zM104.655 104.147h2v1h-2zM468.072 105.477h2v1h-2zM198.322 100.263h2v1h-2zM71.6081 107.231h2v1h-2zM45.3762 101.533h2v1h-2zM705.27 100.54h2v1h-2zM297.716 103.189h2v1h-2zM170.766 100.279h2v1h-2zM392.304 106.3h2v1h-2zM114.64 102.823h2v1h-2zM291.71 105.035h2v1h-2zM149.802 107.608h2v1h-2zM147.201 106.867h2v1h-2zM384.956 103.233h2v1h-2zM10.8003 105.686h2v1h-2zM404.633 102.892h2v1h-2zM546.087 101.543h2v1h-2z"/><path fill="#3e5230" d="M3 94h2v6h-2zM25 95h1v5h-1zM53 99h2v1h-2zM67 95h2v5h-2zM96 97h1v3h-1zM98 95h2v5h-2zM101 98h1v2h-1zM112 98h1v2h-1zM126 99h1v1h-1zM134 96h1v4h-1zM139 96h2v4h-2zM149 96h1v4h-1zM150 94h1v6h-1zM155 95h2v5h-2zM163 96h1v4h-1zM171 95h2v5h-2zM177 99h1v1h-1zM189 97h2v3h-2zM193 98h1v2h-1zM196 99h2v1h-2zM201 96h1v4h-1zM205 94h2v6h-2zM211 99h1v1h-1zM223 99h2v1h-2zM226 97h2v3h-2zM246 97h1v3h-1zM259 99h2v1h-2zM267 96h1v4h-1zM270 97h1v3h-1zM273 97h2v3h-2zM285 96h2v4h-2zM300 98h2v2h-2zM328 98h1v2h-1zM331 99h1v1h-1zM347 94h2v6h-2zM350 98h1v2h-1zM368 96h2v4h-2zM369 99h1v1h-1zM373 94h2v6h-2zM395 97h2v3h-2zM396 97h2v3h-2zM409 97h2v3h-2zM416 99h1v1h-1zM424 94h1v6h-1zM426 97h2v3h-2zM435 99h2v1h-2zM443 98h2v2h-2zM451 98h1v2h-1zM468 96h2v4h-2zM471 99h2v1h-2zM474 96h1v4h-1zM478 99h2v1h-2zM506 99h1v1h-1zM507 96h2v4h-2zM523 99h1v1h-1zM537 99h2v1h-2zM543 95h1v5h-1zM548 98h2v2h-2zM553 97h2v3h-2zM559 98h1v2h-1zM562 98h1v2h-1zM568 99h1v1h-1zM610 94h2v6h-2zM624 94h1v6h-1zM629 95h1v5h-1zM637 99h1v1h-1zM642 97h2v3h-2zM645 97h1v3h-1zM647 97h1v3h-1zM649 95h2v5h-2zM653 94h1v6h-1zM657 99h1v1h-1zM663 95h2v5h-2zM671 94h1v6h-1zM674 96h1v4h-1zM680 95h1v5h-1zM692 94h2v6h-2zM712 96h2v4h-2zM716 96h1v4h-1zM328.885 101.64h2v1h-2zM368.778 105.114h2v1h-2zM375.616 103.283h2v1h-2zM151.264 105.475h2v1h-2zM9.582 103.349h2v1h-2zM715.846 107.687h2v1h-2zM582.892 105.074h2v1h-2zM254.255 105.11h2v1h-2zM467.717 106.239h2v1h-2zM255.417 106.805h2v1h-2zM507.024 105.5h2v1h-2zM217.311 103.836h2v1h-2zM448.822 100.683h2v1h-2zM109.982 102.425h2v1h-2zM41.0853 106.623h2v1h-2zM564.508 101.123h2v1h-2zM151.02 100.576h2v1h-2zM615.005 101.485h2v1h-2zM249.44 101.221h2v1h-2zM153.433 100.629h2v1h-2zM340.734 104.458h2v1h-2zM336.308 101.155h2v1h-2zM621.272 100.053h2v1h-2zM213.709 103.726h2v1h-2zM398.97 107.299h2v1h-2zM37.9586 102.313h2v1h-2zM708.686 106.984h2v1h-2zM238.245 102.537h2v1h-2zM33.4056 106.576h2v1h-2zM658.14 105.246h2v1h-2zM627.784 101.11h2v1h-2zM404.713 102.064h2v1h-2zM706.165 103.804h2v1h-2zM395.14 100.663h2v1h-2zM157.137 100.971h2v1h-2zM211.063 104.46h2v1h-2zM331.617 107.459h2v1h-2zM494.38 104.946h2v1h-2zM104.333 106.379h2v1h-2zM686.803 101.312h2v1h-2zM343.413 106.225h2v1h-2zM598.528 104.809h2v1h-2zM555.441 101.875h2v1h-2zM203.983 100.013h2v1h-2zM492.94 107.31h2v1h-2zM384.881 104.32h2v1h-2zM167.664 104.637h2v1h-2zM637.268 104.175h2v1h-2zM208.653 104.623h2v1h-2zM177.339 107.381h2v1h-2zM333.672 100.654h2v1h-2zM713.091 106.929h2v1h-2zM422.432 101.709h2v1h-2zM589.558 107.708h2v1h-2zM401.314 106.965h2v1h-2zM508.591 100.72h2v1h-2zM159.64 100.309h2v1h-2zM676.354 105.415h2v1h-2zM75.9024 102.591h2v1h-2zM280.835 103h2v1h-2zM658.295 107.137h2v1h-2zM452.427 103.619h2v1h-2zM529.965 101.442h2v1h-2zM18.3024 104.568h2v1h-2zM240.846 101.342h2v1h-2zM78.6512 103.649h2v1h-2zM185.611 101.613h2v1h-2zM666.057 100.781h2v1h-2zM11.5405 106.456h2v1h-2zM452.48 101.537h2v1h-2zM373.291 102.781h2v1h-2zM606.174 106.916h2v1h-2zM65.0376 103.276h2v1h-2zM133.958 106.653h2v1h-2zM86.9558 105.717h2v1h-2zM445.737 101.343h2v1h-2zM334.689 104.687h2v1h-2zM675.058 103.11h2v1h-2zM284.856 107.53h2v1h-2zM243.755 101.923h2v1h-2zM579.152 107.302h2v1h-2zM105.573 105.441h2v1h-2zM481.781 101.804h2v1h-2zM698.181 106.213h2v1h-2zM24.749 105.133h2v1h-2zM312.258 107.607h2v1h-2zM368.375 107.082h2v1h-2zM63.25 104.371h2v1h-2zM278.389 104.389h2v1h-2zM393.059 107.757h2v1h-2zM233.246 102.604h2v1h-2zM205.07 107.9h2v1h-2zM48.0951 106.97h2v1h-2zM473.557 104.136h2v1h-2zM68.4373 106.85h2v1h-2zM107.736 106.8h2v1h-2zM628.388 104.859h2v1h-2zM613.213 105.541h2v1h-2zM520.604 102.343h2v1h-2zM231.836 106.297h2v1h-2zM271.439 101.855h2v1h-2zM690.31 101.634h2v1h-2zM34.1583 104.519h2v1h-2zM215.87 104.292h2v1h-2zM594.487 105.817h2v1h-2zM694.419 103.894h2v1h-2zM472.267 102.359h2v1h-2zM590.799 107.922h2v1h-2zM149.612 107.145h2v1h-2zM458.289 100.339h2v1h-2zM497.302 100.031h2v1h-2zM481.037 101.573h2v1h-2zM682.442 103.923h2v1h-2zM232.432 105.724h2v1h-2zM277.673 100.437h2v1h-2zM419.517 107.677h2v1h-2zM226.651 107.191h2v1h-2zM218.647 104.82h2v1h-2zM62.9753 101.359h2v1h-2zM134.318 107.772h2v1h-2zM285.139 102.903h2v1h-2zM384.3 103.085h2v1h-2zM468.923 107.69h2v1h-2zM278.902 103.736h2v1h-2zM508.227 100.741h2v1h-2zM94.2803 105.652h2v1h-2zM429.086 103.523h2v1h-2zM488.055 100.732h2v1h-2zM473.415 104.541h2v1h-2zM127.474 106.808h2v1h-2z"/><path fill="#34432b" d="M4 96h2v4h-2zM5 96h1v4h-1zM10 96h1v4h-1zM13 96h2v4h-2zM18 94h2v6h-2zM20 99h1v1h-1zM29 95h2v5h-2zM45 95h2v5h-2zM58 95h2v5h-2zM61 95h2v5h-2zM63 98h2v2h-2zM65 98h2v2h-2zM72 97h1v3h-1zM73 98h2v2h-2zM88 95h2v5h-2zM91 94h2v6h-2zM95 96h1v4h-1zM104 94h2v6h-2zM108 95h1v5h-1zM114 96h2v4h-2zM116 96h2v4h-2zM123 97h1v3h-1zM127 98h2v2h-2zM129 98h2v2h-2zM130 96h2v4h-2zM159 97h1v3h-1zM161 97h2v3h-2zM173 98h2v2h-2zM183 95h2v5h-2zM185 99h2v1h-2zM191 99h2v1h-2zM208 98h2v2h-2zM209 94h2v6h-2zM218 99h2v1h-2zM231 97h1v3h-1zM237 96h1v4h-1zM243 96h1v4h-1zM244 95h1v5h-1zM247 94h2v6h-2zM271 99h2v1h-2zM282 95h1v5h-1zM292 95h2v5h-2zM297 95h1v5h-1zM309 95h2v5h-2zM311 99h2v1h-2zM323 98h1v2h-1zM333 96h2v4h-2zM351 98h2v2h-2zM358 95h1v5h-1zM361 96h1v4h-1zM378 96h1v4h-1zM382 99h2v1h-2zM384 95h2v5h-2zM407 94h1v6h-1zM413 96h2v4h-2zM420 94h2v6h-2zM428 94h2v6h-2zM431 98h1v2h-1zM433 98h2v2h-2zM453 98h1v2h-1zM457 96h2v4h-2zM465 99h2v1h-2zM476 96h2v4h-2zM483 95h2v5h-2zM485 97h2v3h-2zM490 98h2v2h-2zM494 99h1v1h-1zM504 99h1v1h-1zM533 95h1v5h-1zM535 96h2v4h-2zM541 97h2v3h-2zM545 99h1v1h-1zM555 96h2v4h-2zM570 99h2v1h-2zM573 95h2v5h-2zM575 97h2v3h-2zM577 99h1v1h-1zM580 99h1v1h-1zM590 99h1v1h-1zM593 98h2v2h-2zM613 98h2v2h-2zM615 98h2v2h-2zM626 96h1v4h-1zM633 99h2v1h-2zM655 96h1v4h-1zM660 99h2v1h-2zM665 97h1v3h-1zM686 95h1v5h-1zM688 96h1v4h-1zM690 97h1v3h-1zM694 98h2v2h-2zM696 94h1v6h-1zM697 98h2v2h-2zM711 98h1v2h-1zM373.142 105.289h2v1h-2zM644.036 102.624h2v1h-2zM279.87 103.919h2v1h-2zM27.4648 104.347h2v1h-2zM515.676 107.611h2v1h-2zM708.817 102.844h2v1h-2zM181.77 103.055h2v1h-2zM288.344 107.629h2v1h-2zM152.649 101.034h2v1h-2zM462.383 105.766h2v1h-2zM455.877 100.12h2v1h-2zM180.019 100.812h2v1h-2zM483.285 100.936h2v1h-2zM190.436 101.873h2v1h-2zM301.548 107.685h2v1h-2zM530.31 107.992h2v1h-2zM367.65 103.877h2v1h-2zM701.997 105.236h2v1h-2zM91.8509 107.782h2v1h-2zM35.7837 102.403h2v1h-2zM429.342 105.448h2v1h-2zM549.126 100.811h2v1h-2zM625.828 103.373h2v1h-2zM133.039 100.274h2v1h-2zM310.086 105.134h2v1h-2zM358.391 104.177h2v1h-2zM661.413 103.572h2v1h-2zM152.839 101.214h2v1h-2zM87.603 107.731h2v1h-2zM12.7995 105.755h2v1h-2zM324.559 105.954h2v1h-2zM615.956 105.838h2v1h-2zM657.735 100.421h2v1h-2zM223.965 105.836h2v1h-2zM523.992 103.758h2v1h-2zM239.069 104.847h2v1h-2zM420.961 107.811h2v1h-2zM192.977 101.258h2v1h-2zM148.742 102.038h2v1h-2zM569.999 103.678h2v1h-2zM386.029 102.841h2v1h-2zM364.441 101.615h2v1h-2zM289.794 104.138h2v1h-2zM437.138 100.753h2v1h-2zM607.498 102.711h2v1h-2zM272.305 100.22h2v1h-2zM350.522 106.765h2v1h-2zM621.339 105.119h2v1h-2zM364.681 101.461h2v1h-2zM651.292 106.698h2v1h-2zM465.614 107.883h2v1h-2zM72.7609 102.541h2v1h-2zM121.376 101.908h2v1h-2zM516.403 101.561h2v1h-2zM113.008 106.663h2v1h-2zM100.629 103.578h2v1h-2zM666.677 103.081h2v1h-2zM232.247 101.871h2v1h-2zM452.292 101.142h2v1h-2zM398.429 101.158h2v1h-2zM191.806 103.294h2v1h-2zM82.2011 107.829h2v1h-2zM454.321 106.301h2v1h-2zM403.159 106.682h2v1h-2zM311.083 102.092h2v1h-2zM206.204 102.881h2v1h-2zM554.721 105.693h2v1h-2zM526.212 106.09h2v1h-2zM374.085 106.729h2v1h-2zM95.963 105.324h2v1h-2zM671.126 107.75h2v1h-2zM540.948 100.49h2v1h-2zM18.4621 106.436h2v1h-2zM14.8952 107.739h2v1h-2zM180.33 106.537h2v1h-2zM458.523 103.712h2v1h-2zM505.905 100.823h2v1h-2zM516.311 100.361h2v1h-2zM79.2288 100.972h2v1h-2zM389.95 101.819h2v1h-2zM285.561 107.586h2v1h-2zM429.869 104.822h2v1h-2zM8.31923 100.872h2v1h-2zM455.912 106.474h2v1h-2zM72.363 100.974h2v1h-2zM81.3916 102.78h2v1h-2zM384.359 101.187h2v1h-2zM344.056 106.551h2v1h-2zM8.55227 102.821h2v1h-2zM658.587 101.018h2v1h-2zM233.184 106.747h2v1h-2zM641.703 107.647h2v1h-2zM486.883 103.625h2v1h-2zM487.064 104.202h2v1h-2zM404.164 104.592h2v1h-2zM247.161 104.241h2v1h-2zM122.92 102.545h2v1h-2zM594.741 104.101h2v1h-2zM286.248 100.788h2v1h-2zM644.807 104.115h2v1h-2zM413.617 103.289h2v1h-2zM76.7852 100.801h2v1h-2zM441.363 106.453h2v1h-2zM39.3008 101.906h2v1h-2zM31.6647 107.447h2v1h-2zM280.653 105.748h2v1h-2zM348.76 106.342h2v1h-2zM594.594 102.81h2v1h-2zM18.2046 106.439h2v1h-2zM319.182 106.691h2v1h-2zM153.03 106.979h2v1h-2zM529.876 106.119h2v1h-2zM135.586 107.131h2v1h-2z"/><path fill="#2b3723" d="M22 94h1v6h-1zM36 99h1v1h-1zM38 96h1v4h-1zM40 95h1v5h-1zM41 95h1v5h-1zM43 95h1v5h-1zM51 96h2v4h-2zM56 94h1v6h-1zM59 95h2v5h-2zM75 98h2v2h-2zM78 94h2v6h-2zM81 96h2v4h-2zM84 96h2v4h-2zM86 98h1v2h-1zM93 99h1v1h-1zM110 98h2v2h-2zM111 97h2v3h-2zM113 99h2v1h-2zM136 99h2v1h-2zM140 99h1v1h-1zM141 97h2v3h-2zM147 99h2v1h-2zM151 95h1v5h-1zM153 99h2v1h-2zM157 99h1v1h-1zM165 99h2v1h-2zM175 96h2v4h-2zM180 98h1v2h-1zM187 97h2v3h-2zM198 98h1v2h-1zM203 94h1v6h-1zM210 94h1v6h-1zM212 96h2v4h-2zM215 99h2v1h-2zM224 95h1v5h-1zM228 99h2v1h-2zM239 99h2v1h-2zM250 96h2v4h-2zM257 96h2v4h-2zM262 99h1v1h-1zM264 97h2v3h-2zM275 97h2v3h-2zM278 95h1v5h-1zM290 98h1v2h-1zM298 98h2v2h-2zM316 99h1v1h-1zM326 95h1v5h-1zM338 95h1v5h-1zM341 94h2v6h-2zM345 98h2v2h-2zM355 97h2v3h-2zM364 99h1v1h-1zM366 96h1v4h-1zM371 98h2v2h-2zM375 96h1v4h-1zM376 99h2v1h-2zM386 97h2v3h-2zM389 98h2v2h-2zM392 99h2v1h-2zM393 97h1v3h-1zM398 99h1v1h-1zM405 96h1v4h-1zM412 98h2v2h-2zM437 95h1v5h-1zM440 99h1v1h-1zM444 97h1v3h-1zM445 98h1v2h-1zM449 94h1v6h-1zM455 99h1v1h-1zM459 99h1v1h-1zM462 95h2v5h-2zM481 98h1v2h-1zM491 96h2v4h-2zM499 95h1v5h-1zM516 98h1v2h-1zM527 99h1v1h-1zM529 94h1v6h-1zM532 94h1v6h-1zM551 98h2v2h-2zM561 97h2v3h-2zM565 96h2v4h-2zM567 96h1v4h-1zM582 96h2v4h-2zM586 98h1v2h-1zM589 98h1v2h-1zM595 99h2v1h-2zM601 94h2v6h-2zM604 98h1v2h-1zM606 98h1v2h-1zM608 94h2v6h-2zM612 94h1v6h-1zM621 96h1v4h-1zM628 99h1v1h-1zM631 94h1v6h-1zM632 98h1v2h-1zM634 94h2v6h-2zM636 98h1v2h-1zM640 99h1v1h-1zM651 97h2v3h-2zM668 98h1v2h-1zM701 98h1v2h-1zM719 96h2v4h-2z"/><polygon points="36,44 50,44 49,60 48,110 35,110 38,70 37,54" fill="#8b5c32"/><polygon points="44,44 50,44 49,110 45,110 46,70" fill="#5e2a22"/><polygon points="48,46 58,46 61,52 60,58 56,52 48,54" fill="#7a4a2a"/><polygon points="24,78 32,76 32,70 38,70 38,82 24,82" fill="#6e2f22"/><rect x="34" y="44" width="4" height="3" fill="#6e2f22"/><rect x="40" y="50" width="3" height="6" fill="#a8743e"/><rect x="39" y="80" width="3" height="10" fill="#a8743e"/><polygon points="129.1,64 148.9,64 144.5,77.8 144.5,103 150.5,110 126.5,110 133.5,103 133.5,77.8" fill="#3f2a1b"/><rect x="135" y="66" width="6.05" height="43" fill="#634529"/><rect x="136" y="70" width="2.42" height="36" fill="#80603a"/><line x1="134.5" y1="83.32" x2="112.6" y2="61" stroke="#3f2a1b" stroke-width="3.6"/><line x1="143.5" y1="82.4" x2="165.4" y2="62" stroke="#3f2a1b" stroke-width="3.6"/><line x1="134.5" y1="82.4" x2="113.7" y2="61" stroke="#634529" stroke-width="1.2"/><line x1="143.5" y1="81.48" x2="164.3" y2="62" stroke="#634529" stroke-width="1.2"/><line x1="135.7" y1="72" x2="124.7" y2="58" stroke="#3f2a1b" stroke-width="2.6"/><line x1="142.3" y1="72" x2="152.2" y2="58" stroke="#3f2a1b" stroke-width="2.6"/><line x1="112.6" y1="61" x2="107.1" y2="57" stroke="#3f2a1b" stroke-width="1.6"/><line x1="117" y1="65" x2="108.2" y2="67" stroke="#3f2a1b" stroke-width="1.3"/><line x1="121.4" y1="75.5" x2="113.7" y2="80.56" stroke="#3f2a1b" stroke-width="1.3"/><line x1="165.4" y1="62" x2="169.8" y2="57" stroke="#3f2a1b" stroke-width="1.6"/><line x1="156.6" y1="74.12" x2="163.2" y2="77.8" stroke="#3f2a1b" stroke-width="1.3"/><path fill="#1f4a18" d="M128 63h2v2h-2zM132.5 63.5h3v3h-3zM121 63h2v1h1v2h-1v1h-2v-1h-1v-2h1zM130 64h2v1h1v2h-1v1h-2v-1h-1v-2h1zM126 66h2v2h-2zM151 65h2v1h1v2h-1v1h-2v-1h-1v-2h1zM161 66h2v2h-2zM137.5 65.5h3v3h-3zM134 67h2v1h1v2h-1v1h-2v-1h-1v-2h1zM161.5 64.5h3v3h-3zM138 66h2v1h1v2h-1v1h-2v-1h-1v-2h1z"/><path fill="#25581b" d="M158 69h2v2h-2zM148.5 62.5h3v3h-3zM134 68h2v2h-2zM163 67h2v2h-2zM155 64h2v2h-2zM134 66h2v2h-2z"/><path fill="#183a14" d="M158.5 61.5h3v3h-3zM147 64h2v1h1v2h-1v1h-2v-1h-1v-2h1zM148 64h2v2h-2zM155.5 67.5h3v3h-3zM158 65h2v1h1v2h-1v1h-2v-1h-1v-2h1zM123 68h2v1h1v2h-1v1h-2v-1h-1v-2h1zM136 60h2v1h1v2h-1v1h-2v-1h-1v-2h1z"/><ellipse cx="142" cy="48.1" rx="18.82" ry="12.1" fill="#183a14"/><ellipse cx="128.5" cy="57.72" rx="15.04" ry="12.1" fill="#183a14"/><ellipse cx="155.5" cy="57.72" rx="15.04" ry="12.1" fill="#183a14"/><ellipse cx="142" cy="59.94" rx="22.6" ry="12.1" fill="#183a14"/><ellipse cx="135.52" cy="51.8" rx="16.12" ry="12.1" fill="#183a14"/><ellipse cx="148.48" cy="51.8" rx="16.12" ry="12.1" fill="#183a14"/><ellipse cx="142" cy="46.6" rx="17.32" ry="10.1" fill="#25581b"/><ellipse cx="128.5" cy="56.22" rx="13.54" ry="10.1" fill="#25581b"/><ellipse cx="155.5" cy="56.22" rx="13.54" ry="10.1" fill="#25581b"/><ellipse cx="142" cy="58.44" rx="21.1" ry="10.1" fill="#25581b"/><ellipse cx="135.52" cy="50.3" rx="14.62" ry="10.1" fill="#25581b"/><ellipse cx="148.48" cy="50.3" rx="14.62" ry="10.1" fill="#25581b"/><path fill="#25581b" d="M140 56h2v1h1v2h-1v1h-2v-1h-1v-2h1zM153 62h2v2h-2zM135 56h2v1h1v2h-1v1h-2v-1h-1v-2h1zM146 55h2v2h-2zM126 48h2v2h-2zM136.5 59.5h3v3h-3zM126 60h2v2h-2zM152 48h2v2h-2zM116 59h2v2h-2zM156.5 56.5h3v3h-3zM130 48h2v1h1v2h-1v1h-2v-1h-1v-2h1zM118.5 56.5h3v3h-3zM153 50h2v1h1v2h-1v1h-2v-1h-1v-2h1zM132 64h2v2h-2zM143 63h2v1h1v2h-1v1h-2v-1h-1v-2h1zM139 48h2v1h1v2h-1v1h-2v-1h-1v-2h1zM133 55h2v2h-2zM158 57h2v1h1v2h-1v1h-2v-1h-1v-2h1zM130 55h2v1h1v2h-1v1h-2v-1h-1v-2h1zM140.5 51.5h3v3h-3zM137.5 50.5h3v3h-3zM141 54h2v1h1v2h-1v1h-2v-1h-1v-2h1zM150 50h2v2h-2zM133 56h2v2h-2zM147 58h2v1h1v2h-1v1h-2v-1h-1v-2h1zM149 58h2v2h-2zM127 63h2v2h-2zM122 63h2v1h1v2h-1v1h-2v-1h-1v-2h1zM159 50h2v1h1v2h-1v1h-2v-1h-1v-2h1zM137.5 54.5h3v3h-3zM160 62h2v2h-2zM130 63h2v2h-2zM122 55h2v1h1v2h-1v1h-2v-1h-1v-2h1zM149 50h2v1h1v2h-1v1h-2v-1h-1v-2h1zM137 49h2v1h1v2h-1v1h-2v-1h-1v-2h1zM135.5 62.5h3v3h-3zM122 50h2v2h-2zM141.5 57.5h3v3h-3zM140.5 49.5h3v3h-3zM130.5 52.5h3v3h-3zM125 52h2v2h-2zM145.5 61.5h3v3h-3zM132 55h2v1h1v2h-1v1h-2v-1h-1v-2h1zM155 63h2v1h1v2h-1v1h-2v-1h-1v-2h1zM147.5 47.5h3v3h-3zM131 48h2v1h1v2h-1v1h-2v-1h-1v-2h1zM145 53h2v2h-2zM142 49h2v2h-2zM150 54h2v1h1v2h-1v1h-2v-1h-1v-2h1zM153 58h2v1h1v2h-1v1h-2v-1h-1v-2h1zM156 61h2v1h1v2h-1v1h-2v-1h-1v-2h1zM136 53h2v2h-2zM144 49h2v2h-2zM142.5 53.5h3v3h-3zM138 62h2v2h-2zM145.5 49.5h3v3h-3zM141 64h2v1h1v2h-1v1h-2v-1h-1v-2h1z"/><path fill="#183a14" d="M154.5 57.5h3v3h-3zM145 53h2v1h1v2h-1v1h-2v-1h-1v-2h1zM144.5 56.5h3v3h-3zM135 56h2v2h-2zM142 52h2v1h1v2h-1v1h-2v-1h-1v-2h1zM144 51h2v1h1v2h-1v1h-2v-1h-1v-2h1zM139.5 49.5h3v3h-3zM159 52h2v1h1v2h-1v1h-2v-1h-1v-2h1zM154 63h2v1h1v2h-1v1h-2v-1h-1v-2h1zM147.5 55.5h3v3h-3zM138.5 56.5h3v3h-3zM127 55h2v2h-2zM161 58h2v1h1v2h-1v1h-2v-1h-1v-2h1zM142 57h2v2h-2zM138 49h2v2h-2zM150 60h2v1h1v2h-1v1h-2v-1h-1v-2h1zM159 63h2v2h-2z"/><path fill="#347221" d="M137 55h2v1h1v2h-1v1h-2v-1h-1v-2h1zM153 51h2v1h1v2h-1v1h-2v-1h-1v-2h1zM148 42h2v1h1v2h-1v1h-2v-1h-1v-2h1zM132 56h2v2h-2zM139 49h2v1h1v2h-1v1h-2v-1h-1v-2h1zM118.5 55.5h3v3h-3zM131 48h2v2h-2zM149 39h2v2h-2zM145 44h2v1h1v2h-1v1h-2v-1h-1v-2h1zM147.5 51.5h3v3h-3zM143 45h2v1h1v2h-1v1h-2v-1h-1v-2h1zM143 42h2v1h1v2h-1v1h-2v-1h-1v-2h1zM121 61h2v2h-2zM139.5 46.5h3v3h-3zM154.5 59.5h3v3h-3zM127 60h2v2h-2zM124 53h2v2h-2zM148 45h2v2h-2zM138 49h2v2h-2zM151.5 48.5h3v3h-3zM124.5 54.5h3v3h-3zM126.5 51.5h3v3h-3zM133 45h2v1h1v2h-1v1h-2v-1h-1v-2h1zM132 56h2v2h-2zM124.5 53.5h3v3h-3zM129 54h2v1h1v2h-1v1h-2v-1h-1v-2h1zM134 55h2v1h1v2h-1v1h-2v-1h-1v-2h1zM129.5 55.5h3v3h-3zM147.5 46.5h3v3h-3zM137 51h2v1h1v2h-1v1h-2v-1h-1v-2h1zM148 59h2v2h-2zM157.5 44.5h3v3h-3zM162.5 57.5h3v3h-3zM140 56h2v2h-2zM150 57h2v1h1v2h-1v1h-2v-1h-1v-2h1zM147.5 44.5h3v3h-3zM126 52h2v1h1v2h-1v1h-2v-1h-1v-2h1zM132 49h2v1h1v2h-1v1h-2v-1h-1v-2h1zM129 50h2v2h-2zM158.5 46.5h3v3h-3zM130 65h2v2h-2zM154 52h2v1h1v2h-1v1h-2v-1h-1v-2h1zM131 47h2v1h1v2h-1v1h-2v-1h-1v-2h1zM143.5 49.5h3v3h-3zM145 54h2v1h1v2h-1v1h-2v-1h-1v-2h1zM140.5 39.5h3v3h-3zM152 45h2v2h-2zM155 62h2v2h-2zM128.5 57.5h3v3h-3zM155 61h2v1h1v2h-1v1h-2v-1h-1v-2h1zM141 53h2v1h1v2h-1v1h-2v-1h-1v-2h1zM129.5 48.5h3v3h-3zM145 55h2v2h-2zM132.5 49.5h3v3h-3zM137 46h2v1h1v2h-1v1h-2v-1h-1v-2h1zM134 47h2v2h-2zM144 65h2v1h1v2h-1v1h-2v-1h-1v-2h1zM143 60h2v2h-2zM148.5 53.5h3v3h-3zM150 55h2v2h-2zM144 42h2v1h1v2h-1v1h-2v-1h-1v-2h1zM117 56h2v1h1v2h-1v1h-2v-1h-1v-2h1zM163.5 56.5h3v3h-3zM137 53h2v2h-2zM144 49h2v2h-2zM133 50h2v1h1v2h-1v1h-2v-1h-1v-2h1zM135.5 47.5h3v3h-3zM126 52h2v1h1v2h-1v1h-2v-1h-1v-2h1zM151 58h2v1h1v2h-1v1h-2v-1h-1v-2h1z"/><path fill="#4e8f28" d="M137 58h2v2h-2zM145 41h2v1h1v2h-1v1h-2v-1h-1v-2h1zM141 53h2v1h1v2h-1v1h-2v-1h-1v-2h1zM147 53h2v2h-2zM150.5 56.5h3v3h-3zM166 55h2v1h1v2h-1v1h-2v-1h-1v-2h1zM144 46h2v1h1v2h-1v1h-2v-1h-1v-2h1zM122.5 50.5h3v3h-3zM121 54h2v2h-2zM132 59h2v2h-2zM127 55h2v1h1v2h-1v1h-2v-1h-1v-2h1zM151 51h2v1h1v2h-1v1h-2v-1h-1v-2h1zM153.5 49.5h3v3h-3zM125 49h2v1h1v2h-1v1h-2v-1h-1v-2h1zM164 56h2v2h-2zM153 42h2v2h-2zM135.5 48.5h3v3h-3zM153.5 48.5h3v3h-3zM139 52h2v2h-2zM140.5 51.5h3v3h-3zM145.5 41.5h3v3h-3zM145 53h2v2h-2zM126 47h2v2h-2zM159 53h2v1h1v2h-1v1h-2v-1h-1v-2h1zM150 39h2v1h1v2h-1v1h-2v-1h-1v-2h1zM143 56h2v1h1v2h-1v1h-2v-1h-1v-2h1zM151 50h2v2h-2zM129 47h2v1h1v2h-1v1h-2v-1h-1v-2h1zM142.5 48.5h3v3h-3zM128 49h2v2h-2zM124 51h2v2h-2zM153.5 42.5h3v3h-3zM143 47h2v2h-2zM127 46h2v2h-2zM143 43h2v2h-2zM139 54h2v1h1v2h-1v1h-2v-1h-1v-2h1zM145 40h2v1h1v2h-1v1h-2v-1h-1v-2h1zM141 44h2v2h-2zM134.5 46.5h3v3h-3zM141 47h2v1h1v2h-1v1h-2v-1h-1v-2h1zM157.5 56.5h3v3h-3zM153 52h2v2h-2zM144 44h2v1h1v2h-1v1h-2v-1h-1v-2h1zM160 56h2v2h-2zM149 51h2v1h1v2h-1v1h-2v-1h-1v-2h1zM137.5 58.5h3v3h-3zM127 49h2v1h1v2h-1v1h-2v-1h-1v-2h1zM146.5 40.5h3v3h-3zM145 44h2v2h-2zM140 48h2v1h1v2h-1v1h-2v-1h-1v-2h1zM153 54h2v1h1v2h-1v1h-2v-1h-1v-2h1zM158 56h2v2h-2zM131 50h2v1h1v2h-1v1h-2v-1h-1v-2h1zM128 49h2v2h-2zM153.5 51.5h3v3h-3zM161 50h2v2h-2z"/><path fill="#78b03a" d="M145 41h2v2h-2zM152.5 42.5h3v3h-3zM143 45h2v1h1v2h-1v1h-2v-1h-1v-2h1zM117 52h2v2h-2zM143 41h2v1h1v2h-1v1h-2v-1h-1v-2h1zM130.5 51.5h3v3h-3zM133 43h2v1h1v2h-1v1h-2v-1h-1v-2h1zM162 50h2v2h-2zM138 46h2v2h-2zM146 37h2v1h1v2h-1v1h-2v-1h-1v-2h1zM135 41h2v2h-2zM142 49h2v1h1v2h-1v1h-2v-1h-1v-2h1zM153 51h2v2h-2zM154.5 47.5h3v3h-3zM130 51h2v2h-2zM147 54h2v1h1v2h-1v1h-2v-1h-1v-2h1zM153 50h2v1h1v2h-1v1h-2v-1h-1v-2h1zM135 39h2v1h1v2h-1v1h-2v-1h-1v-2h1zM142 44h2v1h1v2h-1v1h-2v-1h-1v-2h1zM149.5 49.5h3v3h-3zM131 51h2v2h-2zM123 49h2v2h-2zM151.5 47.5h3v3h-3z"/><path fill="#183a14" d="M128.5 64.5h3v3h-3zM149.5 66.5h3v3h-3zM156.5 64.5h3v3h-3zM140.5 67.5h3v3h-3zM148.5 65.5h3v3h-3zM126.5 65.5h3v3h-3zM137.5 66.5h3v3h-3zM131.5 67.5h3v3h-3zM147.5 65.5h3v3h-3zM144.5 67.5h3v3h-3zM154 64h2v1h1v2h-1v1h-2v-1h-1v-2h1zM160.5 64.5h3v3h-3zM154 65h2v1h1v2h-1v1h-2v-1h-1v-2h1zM145 65h2v1h1v2h-1v1h-2v-1h-1v-2h1zM159 65h2v1h1v2h-1v1h-2v-1h-1v-2h1zM121.5 67.5h3v3h-3zM150.5 67.5h3v3h-3zM152.5 67.5h3v3h-3z"/><ellipse cx="160" cy="112" rx="20" ry="27" fill="#17453a"/><path fill="#2d6f4e" d="M147 94h2v1h1v2h-1v1h-2v-1h-1v-2h1zM178 109h2v2h-2zM170 91h2v1h1v2h-1v1h-2v-1h-1v-2h1zM145 108h2v2h-2zM155 87h2v1h1v2h-1v1h-2v-1h-1v-2h1zM156 100h2v2h-2zM151.5 90.5h3v3h-3zM142.5 99.5h3v3h-3zM165.5 87.5h3v3h-3zM147.5 106.5h3v3h-3zM155 86h2v2h-2zM153 89h2v2h-2zM176 108h2v2h-2zM159.5 92.5h3v3h-3zM153 100h2v1h1v2h-1v1h-2v-1h-1v-2h1zM170.5 91.5h3v3h-3zM175 105h2v2h-2zM175 100h2v2h-2zM171 97h2v2h-2zM169 92h2v2h-2zM146 97h2v2h-2zM164 107h2v2h-2zM176 104h2v1h1v2h-1v1h-2v-1h-1v-2h1zM150 99h2v2h-2zM150 95h2v1h1v2h-1v1h-2v-1h-1v-2h1zM156.5 84.5h3v3h-3zM174 95h2v1h1v2h-1v1h-2v-1h-1v-2h1zM143 98h2v1h1v2h-1v1h-2v-1h-1v-2h1zM163.5 101.5h3v3h-3zM167 90h2v1h1v2h-1v1h-2v-1h-1v-2h1zM175.5 100.5h3v3h-3zM139 108h2v1h1v2h-1v1h-2v-1h-1v-2h1zM156 89h2v1h1v2h-1v1h-2v-1h-1v-2h1zM174.5 105.5h3v3h-3zM144 103h2v1h1v2h-1v1h-2v-1h-1v-2h1zM150 88h2v1h1v2h-1v1h-2v-1h-1v-2h1zM171.5 93.5h3v3h-3zM164 93h2v1h1v2h-1v1h-2v-1h-1v-2h1zM161.5 89.5h3v3h-3zM169.5 89.5h3v3h-3zM143 97h2v1h1v2h-1v1h-2v-1h-1v-2h1zM177 104h2v2h-2zM164.5 98.5h3v3h-3zM178 108h2v2h-2zM153 91h2v2h-2zM152.5 89.5h3v3h-3zM151 87h2v1h1v2h-1v1h-2v-1h-1v-2h1zM153 107h2v2h-2zM157.5 86.5h3v3h-3zM160 91h2v2h-2zM150 104h2v1h1v2h-1v1h-2v-1h-1v-2h1zM168 91h2v2h-2zM145 95h2v2h-2zM152.5 98.5h3v3h-3zM162.5 87.5h3v3h-3zM157 99h2v2h-2zM162 102h2v2h-2zM165 101h2v1h1v2h-1v1h-2v-1h-1v-2h1zM145 108h2v2h-2zM140.5 104.5h3v3h-3zM141 105h2v2h-2zM159 108h2v2h-2zM155 86h2v2h-2zM146 100h2v2h-2zM154 93h2v2h-2zM166.5 99.5h3v3h-3zM167.5 87.5h3v3h-3zM170.5 90.5h3v3h-3zM148.5 90.5h3v3h-3zM146 107h2v1h1v2h-1v1h-2v-1h-1v-2h1zM159.5 87.5h3v3h-3z"/><path fill="#17453a" d="M159 103h2v1h1v2h-1v1h-2v-1h-1v-2h1zM177 106h2v2h-2zM161.5 106.5h3v3h-3zM150.5 99.5h3v3h-3zM165 105h2v2h-2zM154 107h2v1h1v2h-1v1h-2v-1h-1v-2h1zM176.5 103.5h3v3h-3zM144.5 101.5h3v3h-3zM161 94h2v1h1v2h-1v1h-2v-1h-1v-2h1zM171 99h2v2h-2zM145 107h2v2h-2zM170.5 105.5h3v3h-3zM166 106h2v1h1v2h-1v1h-2v-1h-1v-2h1zM165.5 103.5h3v3h-3zM165.5 107.5h3v3h-3zM139.5 106.5h3v3h-3zM161 103h2v1h1v2h-1v1h-2v-1h-1v-2h1zM173 106h2v2h-2zM176.5 103.5h3v3h-3zM138.5 108.5h3v3h-3zM170 107h2v2h-2zM147 97h2v2h-2zM169 107h2v2h-2zM161 99h2v1h1v2h-1v1h-2v-1h-1v-2h1zM160 100h2v1h1v2h-1v1h-2v-1h-1v-2h1zM149 107h2v2h-2zM163.5 93.5h3v3h-3z"/><path fill="#1f5a44" d="M163.5 90.5h3v3h-3zM149 103h2v2h-2zM168.5 105.5h3v3h-3zM154 100h2v1h1v2h-1v1h-2v-1h-1v-2h1zM178 108h2v2h-2zM148.5 100.5h3v3h-3zM165.5 94.5h3v3h-3zM163 105h2v2h-2zM172.5 102.5h3v3h-3zM150 108h2v2h-2zM159 108h2v2h-2zM177 103h2v1h1v2h-1v1h-2v-1h-1v-2h1zM144 99h2v1h1v2h-1v1h-2v-1h-1v-2h1zM146 101h2v1h1v2h-1v1h-2v-1h-1v-2h1zM168.5 94.5h3v3h-3zM165 96h2v1h1v2h-1v1h-2v-1h-1v-2h1zM159.5 105.5h3v3h-3zM162 107h2v1h1v2h-1v1h-2v-1h-1v-2h1zM165.5 94.5h3v3h-3zM163 94h2v2h-2zM172.5 104.5h3v3h-3zM155 104h2v2h-2zM171 106h2v2h-2zM175 104h2v1h1v2h-1v1h-2v-1h-1v-2h1zM147.5 93.5h3v3h-3zM147.5 98.5h3v3h-3zM154 107h2v1h1v2h-1v1h-2v-1h-1v-2h1zM149.5 91.5h3v3h-3zM169.5 104.5h3v3h-3zM147 103h2v1h1v2h-1v1h-2v-1h-1v-2h1zM170 90h2v2h-2zM153 95h2v1h1v2h-1v1h-2v-1h-1v-2h1zM152.5 105.5h3v3h-3zM158 105h2v2h-2zM153 100h2v1h1v2h-1v1h-2v-1h-1v-2h1zM169.5 93.5h3v3h-3zM155 100h2v1h1v2h-1v1h-2v-1h-1v-2h1zM167 105h2v2h-2zM155 103h2v1h1v2h-1v1h-2v-1h-1v-2h1zM169 102h2v2h-2zM175 99h2v2h-2zM158 94h2v1h1v2h-1v1h-2v-1h-1v-2h1zM145 102h2v2h-2zM142 97h2v1h1v2h-1v1h-2v-1h-1v-2h1zM140.5 104.5h3v3h-3zM144 103h2v1h1v2h-1v1h-2v-1h-1v-2h1zM156 87h2v1h1v2h-1v1h-2v-1h-1v-2h1zM159 99h2v2h-2zM139 107h2v1h1v2h-1v1h-2v-1h-1v-2h1zM178 108h2v1h1v2h-1v1h-2v-1h-1v-2h1zM169 90h2v2h-2zM139.5 104.5h3v3h-3zM171.5 108.5h3v3h-3zM170.5 90.5h3v3h-3zM148 107h2v2h-2zM170 105h2v2h-2z"/><polygon points="168,110 166,92 174.5,76 181,70 186,68 193.2,74 200,90 199,110" fill="#27501d"/><line x1="174.5" y1="110" x2="171.111" y2="64.2473" stroke="#5a3b22" stroke-width="1.6"/><line x1="180.28" y1="110" x2="181.779" y2="64.3073" stroke="#5a3b22" stroke-width="1.6"/><line x1="186.06" y1="110" x2="190.439" y2="63.26" stroke="#5a3b22" stroke-width="1.6"/><line x1="191.84" y1="110" x2="195.978" y2="65.5184" stroke="#5a3b22" stroke-width="1.6"/><line x1="183" y1="72" x2="176" y2="62" stroke="#5a3b22" stroke-width="1.2"/><line x1="183" y1="70" x2="189" y2="60" stroke="#5a3b22" stroke-width="1.2"/><path fill="#3d7a27" d="M171.5 77.5h3v3h-3zM188.5 108.5h3v3h-3zM186.5 94.5h5v3h-5zM176.5 68h5v2h-5zM180.5 107.5h5v3h-5zM173.5 83h5v2h-5zM180.5 85.5h3v3h-3zM188.5 68.5h3v3h-3zM181.5 79h3v2h-3zM187.5 80.5h3v3h-3zM179.5 98h5v2h-5zM187 71h4v2h-4zM174.5 79h3v2h-3zM181 107h4v2h-4zM172.5 101.5h3v3h-3zM170.5 83.5h3v3h-3zM181.5 102h5v2h-5zM171.5 93.5h5v3h-5zM192.5 107h5v2h-5zM186.5 96h5v2h-5zM172.5 83.5h3v3h-3zM191.5 95h5v2h-5zM194.5 91h3v2h-3zM168.5 106h3v2h-3zM175 87.5h4v3h-4zM183.5 72.5h5v3h-5zM179.5 97.5h5v3h-5zM189.5 100.5h5v3h-5zM179.5 76h5v2h-5zM176.5 84.5h5v3h-5zM167.5 106h3v2h-3zM185.5 77.5h3v3h-3zM172.5 97.5h5v3h-5zM191 98h4v2h-4zM193.5 104h3v2h-3zM195 96.5h4v3h-4zM183.5 84h5v2h-5zM194 109h4v2h-4zM173.5 79h5v2h-5zM182.5 87h5v2h-5zM183.5 67h3v2h-3zM180.5 90.5h3v3h-3zM191.5 94.5h3v3h-3zM181 72.5h4v3h-4zM181 107h4v2h-4zM193 96.5h4v3h-4zM195.5 99.5h3v3h-3zM183.5 106h3v2h-3zM182.5 94.5h3v3h-3zM184 89h4v2h-4zM170.5 86.5h5v3h-5zM186.5 81.5h3v3h-3zM167.5 102h3v2h-3zM168.5 94.5h5v3h-5zM194 104.5h4v3h-4zM181 76.5h4v3h-4zM180 106.5h4v3h-4zM189.5 105.5h5v3h-5zM173.5 96h5v2h-5zM184 94h4v2h-4zM185.5 71.5h5v3h-5zM169 104.5h4v3h-4zM180.5 89.5h5v3h-5zM172.5 93.5h3v3h-3zM188.5 84h3v2h-3zM188.5 94h3v2h-3zM173.5 95h3v2h-3z"/><path fill="#55932e" d="M172.5 76h3v2h-3zM192.5 93h5v2h-5zM174.5 82h3v2h-3zM172.5 87h5v2h-5zM173.5 90h3v2h-3zM175.5 88h5v2h-5zM189 92h4v2h-4zM197.5 104.5h3v3h-3zM180.5 103.5h5v3h-5zM177 107h4v2h-4zM186.5 71.5h3v3h-3zM173.5 77h3v2h-3zM164.5 106h3v2h-3zM182.5 97h3v2h-3zM174.5 99.5h5v3h-5zM188.5 88h3v2h-3zM174.5 85.5h5v3h-5zM181.5 71h5v2h-5zM174.5 99h3v2h-3zM192 98h4v2h-4zM176 75.5h4v3h-4zM188.5 102h5v2h-5zM189.5 99h5v2h-5zM197 106.5h4v3h-4zM175.5 81h5v2h-5zM189.5 100h5v2h-5zM184.5 105h3v2h-3zM176 83.5h4v3h-4zM184.5 72h5v2h-5zM181 97h4v2h-4zM177.5 93.5h5v3h-5zM182.5 104.5h5v3h-5zM173 69.5h4v3h-4zM179.5 80.5h3v3h-3zM188 92.5h4v3h-4zM193.5 92h3v2h-3zM169 109h4v2h-4zM178 86h4v2h-4zM171.5 87h3v2h-3zM184 96h4v2h-4zM173.5 98.5h3v3h-3zM167.5 102h5v2h-5z"/><path fill="#1f4519" d="M175 74h4v2h-4zM187.5 101.5h3v3h-3zM195 104.5h4v3h-4zM176 86h4v2h-4zM181.5 85.5h3v3h-3zM173 106h4v2h-4zM185.5 94h5v2h-5zM195.5 108.5h3v3h-3zM173 106h4v2h-4zM179.5 100.5h3v3h-3zM174.5 107.5h3v3h-3zM182 97h4v2h-4zM191.5 102h3v2h-3zM195.5 100h3v2h-3zM189 103h4v2h-4zM175 68h4v2h-4zM175.5 96.5h3v3h-3zM178.5 100.5h3v3h-3zM173.5 87.5h5v3h-5zM182.5 70.5h5v3h-5zM178 88h4v2h-4zM184.5 71h3v2h-3zM176.5 81.5h3v3h-3zM168.5 103h5v2h-5zM183 99.5h4v3h-4zM174.5 81.5h5v3h-5zM181 106h4v2h-4zM176.5 105.5h3v3h-3zM177.5 75.5h3v3h-3zM191 89.5h4v3h-4zM184 80h4v2h-4zM196.5 97.5h3v3h-3zM168.5 97.5h3v3h-3zM177 92h4v2h-4zM175 108h4v2h-4zM179.5 103h3v2h-3zM180 81.5h4v3h-4zM187 72.5h4v3h-4zM173.5 84.5h3v3h-3zM178.5 102h3v2h-3z"/><path fill="#2c5e1f" d="M192.5 99.5h5v3h-5zM185.5 102h3v2h-3zM191 93.5h4v3h-4zM184 68h4v2h-4zM188.5 70.5h5v3h-5zM176.5 88h3v2h-3zM176.5 80.5h5v3h-5zM191.5 93h3v2h-3zM190.5 107h5v2h-5zM184.5 104.5h3v3h-3zM176.5 85.5h3v3h-3zM180 78.5h4v3h-4zM177.5 95.5h5v3h-5zM178.5 89.5h5v3h-5zM173 89.5h4v3h-4zM166.5 103.5h5v3h-5zM175 104.5h4v3h-4zM188 81.5h4v3h-4zM176 95.5h4v3h-4zM172.5 90.5h3v3h-3zM180.5 71h5v2h-5zM166.5 93.5h5v3h-5zM171 97h4v2h-4zM170.5 78.5h5v3h-5zM174.5 79h3v2h-3zM196 104h4v2h-4zM182.5 102h3v2h-3zM176.5 100.5h5v3h-5zM169 102.5h4v3h-4zM175 103.5h4v3h-4zM185 82h4v2h-4zM190.5 109h5v2h-5zM186 82h4v2h-4zM182.5 79.5h3v3h-3zM176.5 76h3v2h-3zM194.5 105h3v2h-3zM189 73.5h4v3h-4zM191 106.5h4v3h-4zM164.5 107h3v2h-3zM172.5 98h3v2h-3zM186 68h4v2h-4zM196.5 109h5v2h-5zM195.5 104.5h3v3h-3zM178 90.5h4v3h-4zM191.5 89h3v2h-3zM181.5 83h5v2h-5zM172 102.5h4v3h-4zM175 93h4v2h-4zM192.5 100h5v2h-5zM183 94h4v2h-4zM178.5 77h5v2h-5zM177 82h4v2h-4zM172.5 97h5v2h-5zM193.5 98h5v2h-5zM188.5 92.5h3v3h-3zM177.5 95h3v2h-3zM187 80h4v2h-4zM187.5 91.5h3v3h-3zM185.5 89.5h5v3h-5zM174 67.5h4v3h-4zM183.5 103h5v2h-5zM184.5 103.5h3v3h-3zM170 87h4v2h-4zM177 94h4v2h-4zM176 69h4v2h-4zM183.5 78.5h3v3h-3zM181.5 103h5v2h-5zM193.5 94.5h5v3h-5zM169.5 91h3v2h-3zM179.5 98h5v2h-5zM178.5 75h3v2h-3zM167.5 97.5h3v3h-3zM182.5 97.5h3v3h-3zM167 94.5h4v3h-4z"/><circle cx="184" cy="70" r="2" fill="#e2481c"/><rect x="183" y="68" width="1.5" height="1.5" fill="#ff8248"/><circle cx="193" cy="100" r="2" fill="#e2481c"/><rect x="192" y="98" width="1.5" height="1.5" fill="#ff8248"/><circle cx="183" cy="71" r="2" fill="#e2481c"/><rect x="182" y="69" width="1.5" height="1.5" fill="#ff8248"/><circle cx="177" cy="84" r="2" fill="#e2481c"/><rect x="176" y="82" width="1.5" height="1.5" fill="#ff8248"/><circle cx="183" cy="89" r="2" fill="#e2481c"/><rect x="182" y="87" width="1.5" height="1.5" fill="#ff8248"/><circle cx="178" cy="94" r="2" fill="#e2481c"/><rect x="177" y="92" width="1.5" height="1.5" fill="#ff8248"/><circle cx="191" cy="98" r="2" fill="#e2481c"/><rect x="190" y="96" width="1.5" height="1.5" fill="#ff8248"/><circle cx="177" cy="83" r="2" fill="#e2481c"/><rect x="176" y="81" width="1.5" height="1.5" fill="#ff8248"/><polygon points="212.1,64 231.9,64 227.5,77.8 227.5,103 233.5,110 209.5,110 216.5,103 216.5,77.8" fill="#3f2a1b"/><rect x="218" y="66" width="6.05" height="43" fill="#634529"/><rect x="219" y="70" width="2.42" height="36" fill="#80603a"/><line x1="217.5" y1="83.32" x2="195.6" y2="61" stroke="#3f2a1b" stroke-width="3.6"/><line x1="226.5" y1="82.4" x2="248.4" y2="62" stroke="#3f2a1b" stroke-width="3.6"/><line x1="217.5" y1="82.4" x2="196.7" y2="61" stroke="#634529" stroke-width="1.2"/><line x1="226.5" y1="81.48" x2="247.3" y2="62" stroke="#634529" stroke-width="1.2"/><line x1="218.7" y1="72" x2="207.7" y2="58" stroke="#3f2a1b" stroke-width="2.6"/><line x1="225.3" y1="72" x2="235.2" y2="58" stroke="#3f2a1b" stroke-width="2.6"/><line x1="195.6" y1="61" x2="190.1" y2="57" stroke="#3f2a1b" stroke-width="1.6"/><line x1="200" y1="65" x2="191.2" y2="67" stroke="#3f2a1b" stroke-width="1.3"/><line x1="204.4" y1="75.5" x2="196.7" y2="80.56" stroke="#3f2a1b" stroke-width="1.3"/><line x1="248.4" y1="62" x2="252.8" y2="57" stroke="#3f2a1b" stroke-width="1.6"/><line x1="239.6" y1="74.12" x2="246.2" y2="77.8" stroke="#3f2a1b" stroke-width="1.3"/><path fill="#183a14" d="M220 61h2v1h1v2h-1v1h-2v-1h-1v-2h1zM231 65h2v1h1v2h-1v1h-2v-1h-1v-2h1zM236 68h2v2h-2zM237.5 64.5h3v3h-3zM246 65h2v2h-2zM205.5 61.5h3v3h-3zM210 64h2v1h1v2h-1v1h-2v-1h-1v-2h1z"/><path fill="#1f4a18" d="M237 63h2v2h-2zM245 63h2v2h-2zM199 68h2v2h-2zM242.5 66.5h3v3h-3zM201 68h2v2h-2zM240.5 69.5h3v3h-3zM246 66h2v1h1v2h-1v1h-2v-1h-1v-2h1zM204.5 65.5h3v3h-3zM212 63h2v1h1v2h-1v1h-2v-1h-1v-2h1zM225.5 62.5h3v3h-3zM236 66h2v2h-2zM242.5 65.5h3v3h-3zM238 64h2v1h1v2h-1v1h-2v-1h-1v-2h1z"/><path fill="#25581b" d="M236 68h2v1h1v2h-1v1h-2v-1h-1v-2h1zM220.5 65.5h3v3h-3zM230 62h2v1h1v2h-1v1h-2v-1h-1v-2h1zM209 67h2v1h1v2h-1v1h-2v-1h-1v-2h1z"/><ellipse cx="219.5" cy="48.1" rx="15.85" ry="12.1" fill="#183a14"/><ellipse cx="208.25" cy="57.72" rx="12.7" ry="12.1" fill="#183a14"/><ellipse cx="230.75" cy="57.72" rx="12.7" ry="12.1" fill="#183a14"/><ellipse cx="219.5" cy="59.94" rx="19" ry="12.1" fill="#183a14"/><ellipse cx="214.1" cy="51.8" rx="13.6" ry="12.1" fill="#183a14"/><ellipse cx="224.9" cy="51.8" rx="13.6" ry="12.1" fill="#183a14"/><ellipse cx="219.5" cy="46.6" rx="14.35" ry="10.1" fill="#25581b"/><ellipse cx="208.25" cy="56.22" rx="11.2" ry="10.1" fill="#25581b"/><ellipse cx="230.75" cy="56.22" rx="11.2" ry="10.1" fill="#25581b"/><ellipse cx="219.5" cy="58.44" rx="17.5" ry="10.1" fill="#25581b"/><ellipse cx="214.1" cy="50.3" rx="12.1" ry="10.1" fill="#25581b"/><ellipse cx="224.9" cy="50.3" rx="12.1" ry="10.1" fill="#25581b"/><path fill="#25581b" d="M235 59h2v2h-2zM227.5 57.5h3v3h-3zM225 57h2v1h1v2h-1v1h-2v-1h-1v-2h1zM212 63h2v2h-2zM211 61h2v1h1v2h-1v1h-2v-1h-1v-2h1zM234 58h2v1h1v2h-1v1h-2v-1h-1v-2h1zM209 56h2v1h1v2h-1v1h-2v-1h-1v-2h1zM220 52h2v1h1v2h-1v1h-2v-1h-1v-2h1zM213.5 52.5h3v3h-3zM219 46h2v1h1v2h-1v1h-2v-1h-1v-2h1zM212.5 59.5h3v3h-3zM232.5 51.5h3v3h-3zM216.5 56.5h3v3h-3zM204 60h2v1h1v2h-1v1h-2v-1h-1v-2h1zM226.5 49.5h3v3h-3zM224 54h2v2h-2zM224 50h2v2h-2zM227 63h2v2h-2zM215.5 46.5h3v3h-3zM215.5 58.5h3v3h-3zM227.5 52.5h3v3h-3zM220.5 48.5h3v3h-3zM222 53h2v2h-2zM213 56h2v2h-2zM230 45h2v2h-2zM225 59h2v1h1v2h-1v1h-2v-1h-1v-2h1zM238 57h2v1h1v2h-1v1h-2v-1h-1v-2h1zM208 52h2v1h1v2h-1v1h-2v-1h-1v-2h1zM217 44h2v1h1v2h-1v1h-2v-1h-1v-2h1zM233 53h2v1h1v2h-1v1h-2v-1h-1v-2h1zM211.5 44.5h3v3h-3zM212 52h2v1h1v2h-1v1h-2v-1h-1v-2h1zM216.5 66.5h3v3h-3zM212.5 48.5h3v3h-3zM214 51h2v1h1v2h-1v1h-2v-1h-1v-2h1zM218 62h2v1h1v2h-1v1h-2v-1h-1v-2h1zM231.5 48.5h3v3h-3zM216 51h2v2h-2zM215.5 64.5h3v3h-3zM220.5 49.5h3v3h-3zM228.5 49.5h3v3h-3zM213 54h2v2h-2zM216 54h2v2h-2zM218.5 53.5h3v3h-3zM207 55h2v1h1v2h-1v1h-2v-1h-1v-2h1zM224.5 51.5h3v3h-3zM206 56h2v2h-2zM210 52h2v1h1v2h-1v1h-2v-1h-1v-2h1zM237.5 52.5h3v3h-3zM215 53h2v2h-2zM208.5 62.5h3v3h-3zM215 53h2v2h-2zM221 63h2v2h-2zM232 55h2v1h1v2h-1v1h-2v-1h-1v-2h1zM220 48h2v2h-2zM221 52h2v1h1v2h-1v1h-2v-1h-1v-2h1zM233 52h2v1h1v2h-1v1h-2v-1h-1v-2h1zM219 56h2v2h-2z"/><path fill="#183a14" d="M217.5 47.5h3v3h-3zM209 49h2v2h-2zM223.5 60.5h3v3h-3zM215 65h2v1h1v2h-1v1h-2v-1h-1v-2h1zM214 51h2v1h1v2h-1v1h-2v-1h-1v-2h1zM217.5 54.5h3v3h-3zM215 53h2v2h-2zM203 59h2v1h1v2h-1v1h-2v-1h-1v-2h1zM225 59h2v1h1v2h-1v1h-2v-1h-1v-2h1zM214.5 57.5h3v3h-3zM226 57h2v1h1v2h-1v1h-2v-1h-1v-2h1zM223.5 63.5h3v3h-3z"/><path fill="#347221" d="M214 50h2v2h-2zM227.5 53.5h3v3h-3zM205.5 57.5h3v3h-3zM225.5 38.5h3v3h-3zM215 42h2v1h1v2h-1v1h-2v-1h-1v-2h1zM219 48h2v2h-2zM208.5 55.5h3v3h-3zM231.5 48.5h3v3h-3zM227 45h2v2h-2zM230 55h2v1h1v2h-1v1h-2v-1h-1v-2h1zM207 52h2v2h-2zM214 52h2v2h-2zM215 49h2v1h1v2h-1v1h-2v-1h-1v-2h1zM219 45h2v1h1v2h-1v1h-2v-1h-1v-2h1zM223 54h2v1h1v2h-1v1h-2v-1h-1v-2h1zM223 52h2v2h-2zM211 61h2v2h-2zM200 52h2v1h1v2h-1v1h-2v-1h-1v-2h1zM204.5 63.5h3v3h-3zM225 51h2v2h-2zM216.5 46.5h3v3h-3zM215 48h2v2h-2zM207 61h2v2h-2zM230 65h2v2h-2zM208.5 52.5h3v3h-3zM222 50h2v2h-2zM212.5 41.5h3v3h-3zM212 48h2v2h-2zM229 50h2v1h1v2h-1v1h-2v-1h-1v-2h1zM228 47h2v2h-2zM224 49h2v1h1v2h-1v1h-2v-1h-1v-2h1zM223 45h2v1h1v2h-1v1h-2v-1h-1v-2h1zM225 55h2v2h-2zM228 49h2v2h-2zM212.5 47.5h3v3h-3zM210 50h2v1h1v2h-1v1h-2v-1h-1v-2h1zM211 43h2v1h1v2h-1v1h-2v-1h-1v-2h1zM211 50h2v1h1v2h-1v1h-2v-1h-1v-2h1zM227.5 50.5h3v3h-3zM208 53h2v2h-2zM220.5 43.5h3v3h-3zM214 46h2v1h1v2h-1v1h-2v-1h-1v-2h1zM225.5 46.5h3v3h-3zM207 53h2v2h-2zM212 53h2v2h-2zM216.5 46.5h3v3h-3zM233.5 57.5h3v3h-3zM211 42h2v1h1v2h-1v1h-2v-1h-1v-2h1zM212 40h2v1h1v2h-1v1h-2v-1h-1v-2h1zM208.5 51.5h3v3h-3zM207 58h2v1h1v2h-1v1h-2v-1h-1v-2h1zM205 57h2v2h-2zM212 49h2v2h-2zM227 62h2v2h-2zM225 48h2v1h1v2h-1v1h-2v-1h-1v-2h1zM225 38h2v1h1v2h-1v1h-2v-1h-1v-2h1zM229 61h2v1h1v2h-1v1h-2v-1h-1v-2h1zM209.5 49.5h3v3h-3zM231 50h2v1h1v2h-1v1h-2v-1h-1v-2h1zM215 50h2v1h1v2h-1v1h-2v-1h-1v-2h1zM209 51h2v2h-2z"/><path fill="#4e8f28" d="M224 58h2v2h-2zM229.5 42.5h3v3h-3zM215 41h2v2h-2zM233.5 55.5h3v3h-3zM205.5 56.5h3v3h-3zM220 51h2v2h-2zM227 52h2v2h-2zM210.5 40.5h3v3h-3zM224 46h2v1h1v2h-1v1h-2v-1h-1v-2h1zM217 45h2v1h1v2h-1v1h-2v-1h-1v-2h1zM217.5 54.5h3v3h-3zM227 48h2v1h1v2h-1v1h-2v-1h-1v-2h1zM217.5 52.5h3v3h-3zM210 51h2v1h1v2h-1v1h-2v-1h-1v-2h1zM213 47h2v1h1v2h-1v1h-2v-1h-1v-2h1zM206 52h2v2h-2zM225.5 49.5h3v3h-3zM229 47h2v2h-2zM227 55h2v1h1v2h-1v1h-2v-1h-1v-2h1zM231.5 58.5h3v3h-3zM213.5 43.5h3v3h-3zM213.5 46.5h3v3h-3zM223 44h2v1h1v2h-1v1h-2v-1h-1v-2h1zM206 52h2v2h-2zM214.5 47.5h3v3h-3zM211 45h2v1h1v2h-1v1h-2v-1h-1v-2h1zM219 52h2v1h1v2h-1v1h-2v-1h-1v-2h1zM204.5 53.5h3v3h-3zM211 54h2v1h1v2h-1v1h-2v-1h-1v-2h1zM235 50h2v1h1v2h-1v1h-2v-1h-1v-2h1zM224 45h2v2h-2zM219 50h2v2h-2zM210.5 51.5h3v3h-3zM217.5 50.5h3v3h-3zM235.5 55.5h3v3h-3zM222 50h2v1h1v2h-1v1h-2v-1h-1v-2h1zM204 51h2v2h-2zM223.5 37.5h3v3h-3zM231 54h2v1h1v2h-1v1h-2v-1h-1v-2h1zM209 57h2v2h-2z"/><path fill="#78b03a" d="M205.5 46.5h3v3h-3zM211 51h2v1h1v2h-1v1h-2v-1h-1v-2h1zM204 50h2v1h1v2h-1v1h-2v-1h-1v-2h1zM223.5 51.5h3v3h-3zM223.5 49.5h3v3h-3zM203 51h2v2h-2zM214.5 41.5h3v3h-3zM210 42h2v1h1v2h-1v1h-2v-1h-1v-2h1zM225.5 49.5h3v3h-3zM234.5 51.5h3v3h-3zM231 54h2v2h-2zM223 40h2v1h1v2h-1v1h-2v-1h-1v-2h1zM219 43h2v1h1v2h-1v1h-2v-1h-1v-2h1zM222 42h2v1h1v2h-1v1h-2v-1h-1v-2h1z"/><path fill="#183a14" d="M202 65h2v1h1v2h-1v1h-2v-1h-1v-2h1zM202.5 64.5h3v3h-3zM214.5 66.5h3v3h-3zM213 64h2v1h1v2h-1v1h-2v-1h-1v-2h1zM205.5 65.5h3v3h-3zM221 64h2v1h1v2h-1v1h-2v-1h-1v-2h1zM218.5 64.5h3v3h-3zM209 68h2v1h1v2h-1v1h-2v-1h-1v-2h1zM209 64h2v1h1v2h-1v1h-2v-1h-1v-2h1zM205 67h2v1h1v2h-1v1h-2v-1h-1v-2h1zM223 67h2v1h1v2h-1v1h-2v-1h-1v-2h1zM234.5 64.5h3v3h-3zM211.5 67.5h3v3h-3zM230 66h2v1h1v2h-1v1h-2v-1h-1v-2h1zM228.5 66.5h3v3h-3z"/><polygon points="255.1,64 274.9,64 270.5,77.8 270.5,103 276.5,110 252.5,110 259.5,103 259.5,77.8" fill="#3f2a1b"/><rect x="261" y="66" width="6.05" height="43" fill="#634529"/><rect x="262" y="70" width="2.42" height="36" fill="#80603a"/><line x1="260.5" y1="83.32" x2="238.6" y2="61" stroke="#3f2a1b" stroke-width="3.6"/><line x1="269.5" y1="82.4" x2="291.4" y2="62" stroke="#3f2a1b" stroke-width="3.6"/><line x1="260.5" y1="82.4" x2="239.7" y2="61" stroke="#634529" stroke-width="1.2"/><line x1="269.5" y1="81.48" x2="290.3" y2="62" stroke="#634529" stroke-width="1.2"/><line x1="261.7" y1="72" x2="250.7" y2="58" stroke="#3f2a1b" stroke-width="2.6"/><line x1="268.3" y1="72" x2="278.2" y2="58" stroke="#3f2a1b" stroke-width="2.6"/><line x1="238.6" y1="61" x2="233.1" y2="57" stroke="#3f2a1b" stroke-width="1.6"/><line x1="243" y1="65" x2="234.2" y2="67" stroke="#3f2a1b" stroke-width="1.3"/><line x1="247.4" y1="75.5" x2="239.7" y2="80.56" stroke="#3f2a1b" stroke-width="1.3"/><line x1="291.4" y1="62" x2="295.8" y2="57" stroke="#3f2a1b" stroke-width="1.6"/><line x1="282.6" y1="74.12" x2="289.2" y2="77.8" stroke="#3f2a1b" stroke-width="1.3"/><path fill="#183a14" d="M245 69h2v2h-2zM274 61h2v2h-2zM279.5 65.5h3v3h-3zM243 65h2v2h-2zM249 69h2v2h-2zM286 65h2v2h-2zM260.5 60.5h3v3h-3zM279 65h2v1h1v2h-1v1h-2v-1h-1v-2h1zM254 67h2v2h-2zM277 68h2v1h1v2h-1v1h-2v-1h-1v-2h1z"/><path fill="#25581b" d="M278.5 67.5h3v3h-3zM243 63h2v1h1v2h-1v1h-2v-1h-1v-2h1zM250 67h2v1h1v2h-1v1h-2v-1h-1v-2h1zM283.5 61.5h3v3h-3zM252.5 61.5h3v3h-3zM261 62h2v1h1v2h-1v1h-2v-1h-1v-2h1zM260.5 65.5h3v3h-3zM275 66h2v1h1v2h-1v1h-2v-1h-1v-2h1zM247.5 60.5h3v3h-3zM253.5 65.5h3v3h-3zM261 64h2v1h1v2h-1v1h-2v-1h-1v-2h1z"/><path fill="#1f4a18" d="M261.5 60.5h3v3h-3zM264 65h2v2h-2zM257 61h2v1h1v2h-1v1h-2v-1h-1v-2h1z"/><ellipse cx="266" cy="48.1" rx="18.16" ry="12.1" fill="#183a14"/><ellipse cx="253" cy="57.72" rx="14.52" ry="12.1" fill="#183a14"/><ellipse cx="279" cy="57.72" rx="14.52" ry="12.1" fill="#183a14"/><ellipse cx="266" cy="59.94" rx="21.8" ry="12.1" fill="#183a14"/><ellipse cx="259.76" cy="51.8" rx="15.56" ry="12.1" fill="#183a14"/><ellipse cx="272.24" cy="51.8" rx="15.56" ry="12.1" fill="#183a14"/><ellipse cx="266" cy="46.6" rx="16.66" ry="10.1" fill="#25581b"/><ellipse cx="253" cy="56.22" rx="13.02" ry="10.1" fill="#25581b"/><ellipse cx="279" cy="56.22" rx="13.02" ry="10.1" fill="#25581b"/><ellipse cx="266" cy="58.44" rx="20.3" ry="10.1" fill="#25581b"/><ellipse cx="259.76" cy="50.3" rx="14.06" ry="10.1" fill="#25581b"/><ellipse cx="272.24" cy="50.3" rx="14.06" ry="10.1" fill="#25581b"/><path fill="#25581b" d="M260.5 59.5h3v3h-3zM258 53h2v2h-2zM268.5 53.5h3v3h-3zM283 59h2v1h1v2h-1v1h-2v-1h-1v-2h1zM248.5 56.5h3v3h-3zM271.5 60.5h3v3h-3zM281 55h2v2h-2zM264 48h2v1h1v2h-1v1h-2v-1h-1v-2h1zM268.5 65.5h3v3h-3zM269 64h2v1h1v2h-1v1h-2v-1h-1v-2h1zM275 62h2v2h-2zM248 53h2v1h1v2h-1v1h-2v-1h-1v-2h1zM263 56h2v1h1v2h-1v1h-2v-1h-1v-2h1zM282.5 52.5h3v3h-3zM278 56h2v2h-2zM257 60h2v2h-2zM272 43h2v1h1v2h-1v1h-2v-1h-1v-2h1zM259 47h2v1h1v2h-1v1h-2v-1h-1v-2h1zM279.5 63.5h3v3h-3zM259.5 52.5h3v3h-3zM273.5 62.5h3v3h-3zM248 59h2v2h-2zM262 46h2v1h1v2h-1v1h-2v-1h-1v-2h1zM278 58h2v2h-2zM246 60h2v1h1v2h-1v1h-2v-1h-1v-2h1zM263 53h2v2h-2zM278 56h2v1h1v2h-1v1h-2v-1h-1v-2h1zM260 60h2v2h-2zM253 57h2v1h1v2h-1v1h-2v-1h-1v-2h1zM263.5 52.5h3v3h-3zM278 56h2v2h-2zM266.5 53.5h3v3h-3zM261.5 46.5h3v3h-3zM274 57h2v2h-2zM259 48h2v1h1v2h-1v1h-2v-1h-1v-2h1zM267.5 56.5h3v3h-3zM272 45h2v1h1v2h-1v1h-2v-1h-1v-2h1zM249 46h2v1h1v2h-1v1h-2v-1h-1v-2h1zM267.5 47.5h3v3h-3zM270 57h2v1h1v2h-1v1h-2v-1h-1v-2h1zM271.5 53.5h3v3h-3zM263 55h2v2h-2zM252 61h2v2h-2zM246 63h2v2h-2z"/><path fill="#183a14" d="M254.5 51.5h3v3h-3zM270 54h2v1h1v2h-1v1h-2v-1h-1v-2h1zM267 66h2v2h-2zM262 59h2v1h1v2h-1v1h-2v-1h-1v-2h1zM262 60h2v1h1v2h-1v1h-2v-1h-1v-2h1zM263 54h2v2h-2zM259.5 60.5h3v3h-3zM269 61h2v1h1v2h-1v1h-2v-1h-1v-2h1zM272 52h2v1h1v2h-1v1h-2v-1h-1v-2h1zM271 61h2v2h-2zM242 59h2v2h-2zM283 63h2v1h1v2h-1v1h-2v-1h-1v-2h1zM258.5 54.5h3v3h-3zM267.5 57.5h3v3h-3zM255 50h2v1h1v2h-1v1h-2v-1h-1v-2h1zM278 60h2v2h-2zM256 54h2v2h-2zM277 61h2v2h-2zM258 57h2v2h-2zM258.5 62.5h3v3h-3z"/><path fill="#347221" d="M256 46h2v1h1v2h-1v1h-2v-1h-1v-2h1zM270.5 46.5h3v3h-3zM268 62h2v1h1v2h-1v1h-2v-1h-1v-2h1zM267 54h2v1h1v2h-1v1h-2v-1h-1v-2h1zM270 52h2v1h1v2h-1v1h-2v-1h-1v-2h1zM260 64h2v2h-2zM258 56h2v2h-2zM267 51h2v1h1v2h-1v1h-2v-1h-1v-2h1zM269 46h2v1h1v2h-1v1h-2v-1h-1v-2h1zM270 50h2v2h-2zM275 47h2v1h1v2h-1v1h-2v-1h-1v-2h1zM258 54h2v2h-2zM280 58h2v1h1v2h-1v1h-2v-1h-1v-2h1zM278 51h2v1h1v2h-1v1h-2v-1h-1v-2h1zM265 44h2v1h1v2h-1v1h-2v-1h-1v-2h1zM283 47h2v2h-2zM254 41h2v1h1v2h-1v1h-2v-1h-1v-2h1zM252.5 49.5h3v3h-3zM277.5 49.5h3v3h-3zM283 47h2v2h-2zM278.5 63.5h3v3h-3zM251 45h2v2h-2zM249.5 50.5h3v3h-3zM261.5 59.5h3v3h-3zM259.5 42.5h3v3h-3zM274.5 50.5h3v3h-3zM262.5 54.5h3v3h-3zM252 44h2v1h1v2h-1v1h-2v-1h-1v-2h1zM257.5 51.5h3v3h-3zM253.5 64.5h3v3h-3zM248.5 54.5h3v3h-3zM253.5 57.5h3v3h-3zM248.5 58.5h3v3h-3zM276.5 50.5h3v3h-3zM262 55h2v1h1v2h-1v1h-2v-1h-1v-2h1zM253.5 53.5h3v3h-3zM275 63h2v2h-2zM277 50h2v2h-2zM260 51h2v2h-2zM241.5 57.5h3v3h-3zM269 51h2v2h-2zM247 51h2v2h-2zM264 46h2v1h1v2h-1v1h-2v-1h-1v-2h1zM270.5 46.5h3v3h-3zM268.5 52.5h3v3h-3zM254 46h2v1h1v2h-1v1h-2v-1h-1v-2h1zM288 56h2v2h-2zM267.5 53.5h3v3h-3zM276 46h2v1h1v2h-1v1h-2v-1h-1v-2h1zM251.5 54.5h3v3h-3zM262 48h2v2h-2zM270 54h2v2h-2zM270 57h2v1h1v2h-1v1h-2v-1h-1v-2h1zM275.5 58.5h3v3h-3zM271 50h2v2h-2zM254 49h2v2h-2zM289 55h2v1h1v2h-1v1h-2v-1h-1v-2h1zM275 63h2v2h-2zM262 36h2v1h1v2h-1v1h-2v-1h-1v-2h1zM262.5 53.5h3v3h-3zM269 50h2v2h-2zM273 48h2v1h1v2h-1v1h-2v-1h-1v-2h1zM273 56h2v2h-2zM256 52h2v1h1v2h-1v1h-2v-1h-1v-2h1zM256.5 54.5h3v3h-3zM260 64h2v1h1v2h-1v1h-2v-1h-1v-2h1zM256 59h2v2h-2zM274 55h2v1h1v2h-1v1h-2v-1h-1v-2h1zM263 48h2v1h1v2h-1v1h-2v-1h-1v-2h1zM283.5 52.5h3v3h-3zM251.5 53.5h3v3h-3zM266 48h2v1h1v2h-1v1h-2v-1h-1v-2h1zM284 54h2v2h-2zM267 52h2v2h-2zM248 47h2v2h-2zM252 44h2v2h-2zM255 56h2v2h-2zM272 47h2v1h1v2h-1v1h-2v-1h-1v-2h1zM272 45h2v1h1v2h-1v1h-2v-1h-1v-2h1zM279 54h2v2h-2zM254.5 40.5h3v3h-3zM259.5 50.5h3v3h-3zM258 53h2v1h1v2h-1v1h-2v-1h-1v-2h1zM259 48h2v1h1v2h-1v1h-2v-1h-1v-2h1zM282 57h2v1h1v2h-1v1h-2v-1h-1v-2h1z"/><path fill="#4e8f28" d="M263 48h2v1h1v2h-1v1h-2v-1h-1v-2h1zM263.5 44.5h3v3h-3zM261.5 44.5h3v3h-3zM245.5 48.5h3v3h-3zM249.5 52.5h3v3h-3zM246.5 51.5h3v3h-3zM250.5 47.5h3v3h-3zM262 40h2v1h1v2h-1v1h-2v-1h-1v-2h1zM268.5 50.5h3v3h-3zM248 54h2v2h-2zM277.5 51.5h3v3h-3zM287.5 56.5h3v3h-3zM278.5 53.5h3v3h-3zM264 49h2v2h-2zM268 43h2v1h1v2h-1v1h-2v-1h-1v-2h1zM266.5 49.5h3v3h-3zM273.5 44.5h3v3h-3zM252 51h2v2h-2zM265.5 43.5h3v3h-3zM264.5 42.5h3v3h-3zM281 56h2v1h1v2h-1v1h-2v-1h-1v-2h1zM273 41h2v1h1v2h-1v1h-2v-1h-1v-2h1zM278 47h2v1h1v2h-1v1h-2v-1h-1v-2h1zM262 45h2v2h-2zM273 54h2v2h-2zM260 42h2v1h1v2h-1v1h-2v-1h-1v-2h1zM258.5 42.5h3v3h-3zM287 50h2v1h1v2h-1v1h-2v-1h-1v-2h1zM272 56h2v2h-2zM254.5 43.5h3v3h-3zM276 51h2v1h1v2h-1v1h-2v-1h-1v-2h1zM268.5 43.5h3v3h-3zM274 41h2v1h1v2h-1v1h-2v-1h-1v-2h1zM279 55h2v2h-2zM254.5 40.5h3v3h-3zM283 47h2v1h1v2h-1v1h-2v-1h-1v-2h1zM261 42h2v1h1v2h-1v1h-2v-1h-1v-2h1zM274.5 52.5h3v3h-3zM251.5 50.5h3v3h-3zM252 46h2v2h-2zM268.5 39.5h3v3h-3zM266.5 46.5h3v3h-3zM284 53h2v2h-2zM272 44h2v2h-2zM261.5 48.5h3v3h-3zM263 53h2v1h1v2h-1v1h-2v-1h-1v-2h1zM287.5 54.5h3v3h-3zM266.5 45.5h3v3h-3zM265.5 48.5h3v3h-3zM253.5 49.5h3v3h-3zM267 53h2v1h1v2h-1v1h-2v-1h-1v-2h1z"/><path fill="#78b03a" d="M278.5 43.5h3v3h-3zM265.5 41.5h3v3h-3zM261 45h2v1h1v2h-1v1h-2v-1h-1v-2h1zM249.5 43.5h3v3h-3zM245 48h2v2h-2zM264.5 36.5h3v3h-3zM270 49h2v2h-2zM274 44h2v1h1v2h-1v1h-2v-1h-1v-2h1zM269 43h2v1h1v2h-1v1h-2v-1h-1v-2h1zM251 44h2v1h1v2h-1v1h-2v-1h-1v-2h1zM271 54h2v1h1v2h-1v1h-2v-1h-1v-2h1zM285.5 50.5h3v3h-3zM265 38h2v2h-2z"/><path fill="#183a14" d="M283 67h2v1h1v2h-1v1h-2v-1h-1v-2h1zM244.5 64.5h3v3h-3zM265.5 65.5h3v3h-3zM253 67h2v1h1v2h-1v1h-2v-1h-1v-2h1zM257.5 65.5h3v3h-3zM266.5 65.5h3v3h-3zM281.5 68.5h3v3h-3zM246.5 65.5h3v3h-3zM246 68h2v1h1v2h-1v1h-2v-1h-1v-2h1zM274.5 65.5h3v3h-3zM282 67h2v1h1v2h-1v1h-2v-1h-1v-2h1zM251 64h2v1h1v2h-1v1h-2v-1h-1v-2h1zM258 65h2v1h1v2h-1v1h-2v-1h-1v-2h1zM246 65h2v1h1v2h-1v1h-2v-1h-1v-2h1zM245.5 67.5h3v3h-3zM280.5 67.5h3v3h-3zM266 67h2v1h1v2h-1v1h-2v-1h-1v-2h1z"/><polygon points="274,110 272,92 282,76 290,68 295,66 304,74 312,90 311,110" fill="#27501d"/><line x1="282" y1="110" x2="285.094" y2="64.315" stroke="#5a3b22" stroke-width="1.6"/><line x1="288.8" y1="110" x2="291.717" y2="58.9666" stroke="#5a3b22" stroke-width="1.6"/><line x1="295.6" y1="110" x2="290.734" y2="58.7428" stroke="#5a3b22" stroke-width="1.6"/><line x1="302.4" y1="110" x2="305.824" y2="64.6337" stroke="#5a3b22" stroke-width="1.6"/><line x1="292" y1="70" x2="285" y2="60" stroke="#5a3b22" stroke-width="1.2"/><line x1="292" y1="68" x2="298" y2="58" stroke="#5a3b22" stroke-width="1.2"/><path fill="#55932e" d="M291.5 74h3v2h-3zM282.5 62.5h5v3h-5zM287 69h4v2h-4zM278.5 107.5h3v3h-3zM291.5 85h5v2h-5zM281.5 104.5h5v3h-5zM282.5 69.5h5v3h-5zM285.5 84.5h5v3h-5zM298.5 89h5v2h-5zM287 74.5h4v3h-4zM298.5 96h3v2h-3zM272.5 103h3v2h-3zM301.5 84.5h3v3h-3zM293 66h4v2h-4zM274.5 107h5v2h-5zM283.5 65h5v2h-5zM305.5 102h5v2h-5zM302.5 102h3v2h-3zM275 88h4v2h-4zM302 101h4v2h-4zM296.5 82.5h5v3h-5zM282.5 69h5v2h-5zM287.5 72h3v2h-3zM303.5 86h5v2h-5zM279.5 101h3v2h-3zM279 104h4v2h-4zM299.5 108h5v2h-5zM286 106h4v2h-4zM287.5 106.5h5v3h-5zM278 96h4v2h-4zM302.5 99h5v2h-5zM275.5 103.5h3v3h-3zM290.5 105h3v2h-3zM272.5 107h3v2h-3zM295.5 69.5h5v3h-5zM289.5 80.5h3v3h-3zM297.5 78h3v2h-3zM281.5 95h3v2h-3zM274.5 98.5h5v3h-5zM293.5 68.5h3v3h-3zM302.5 104h5v2h-5zM297.5 81.5h3v3h-3zM286 85.5h4v3h-4zM288.5 102h3v2h-3zM286 106.5h4v3h-4z"/><path fill="#3d7a27" d="M300.5 100h5v2h-5zM300 72.5h4v3h-4zM298.5 64h3v2h-3zM296.5 69h3v2h-3zM278.5 101h3v2h-3zM294.5 93.5h5v3h-5zM295.5 92h5v2h-5zM300.5 73.5h5v3h-5zM299.5 72.5h5v3h-5zM289.5 96.5h3v3h-3zM281 94h4v2h-4zM291.5 76.5h3v3h-3zM289 75.5h4v3h-4zM301 77.5h4v3h-4zM285 81h4v2h-4zM282 81.5h4v3h-4zM281.5 105.5h3v3h-3zM301.5 85h3v2h-3zM278.5 78h5v2h-5zM273.5 95h5v2h-5zM302 98h4v2h-4zM293.5 63h5v2h-5zM289.5 64h3v2h-3zM287.5 65.5h5v3h-5zM289.5 76.5h5v3h-5zM291 101.5h4v3h-4zM292 105h4v2h-4zM284.5 63.5h3v3h-3zM294 78h4v2h-4zM282.5 105h5v2h-5zM292 75h4v2h-4zM294.5 85h5v2h-5zM281.5 101.5h5v3h-5zM285.5 84.5h3v3h-3zM286.5 79.5h3v3h-3zM283.5 95h5v2h-5zM297.5 94.5h3v3h-3zM278.5 91.5h3v3h-3zM303.5 87.5h5v3h-5zM278.5 86.5h3v3h-3zM300 82.5h4v3h-4zM290.5 68.5h5v3h-5zM295.5 77.5h3v3h-3zM291.5 95.5h5v3h-5zM285 108h4v2h-4zM308.5 102.5h5v3h-5zM292.5 75.5h3v3h-3zM275.5 106h5v2h-5zM291.5 82h5v2h-5zM307.5 98.5h5v3h-5zM292.5 69h3v2h-3zM295.5 90.5h5v3h-5zM303.5 85h3v2h-3zM297.5 70.5h5v3h-5zM291 63.5h4v3h-4zM274.5 97.5h5v3h-5zM300 100h4v2h-4zM303.5 85.5h3v3h-3zM297 72h4v2h-4zM274.5 93h3v2h-3zM287.5 88h5v2h-5zM291 65h4v2h-4zM281 90.5h4v3h-4zM273.5 96h3v2h-3zM282.5 101.5h5v3h-5zM298 73h4v2h-4zM288.5 79h5v2h-5zM301.5 87h3v2h-3zM290.5 85.5h5v3h-5zM279.5 100h5v2h-5zM290.5 107.5h5v3h-5zM303.5 95h5v2h-5zM295.5 71h5v2h-5zM302.5 99.5h3v3h-3zM299.5 82h3v2h-3zM274.5 105h3v2h-3zM299.5 102h5v2h-5zM280.5 104h5v2h-5zM290.5 102h3v2h-3zM273.5 100h5v2h-5zM304.5 99h5v2h-5zM279 100h4v2h-4zM290.5 95h5v2h-5zM306 107h4v2h-4zM297.5 84.5h5v3h-5zM283.5 83.5h5v3h-5zM272.5 103h5v2h-5zM273.5 96h5v2h-5zM276.5 99.5h5v3h-5zM288.5 109h3v2h-3zM277 102h4v2h-4zM293.5 98h3v2h-3zM300.5 97.5h5v3h-5zM277.5 102.5h3v3h-3zM283.5 108h5v2h-5zM299.5 74h3v2h-3zM307.5 107h5v2h-5zM279.5 100.5h5v3h-5zM291.5 84.5h5v3h-5zM291.5 107.5h5v3h-5z"/><path fill="#2c5e1f" d="M301.5 106h3v2h-3zM291 91.5h4v3h-4zM281 69.5h4v3h-4zM288 107h4v2h-4zM276 87.5h4v3h-4zM288.5 100h5v2h-5zM288.5 107.5h3v3h-3zM278 102.5h4v3h-4zM279.5 88.5h5v3h-5zM280 82h4v2h-4zM291.5 71h3v2h-3zM291.5 96h5v2h-5zM289.5 85.5h5v3h-5zM273 103.5h4v3h-4zM292 108h4v2h-4zM288.5 89h3v2h-3zM281.5 103.5h3v3h-3zM276.5 97h5v2h-5zM275 103.5h4v3h-4zM289 103.5h4v3h-4zM304.5 105h3v2h-3zM298 72h4v2h-4zM289.5 84.5h3v3h-3zM274.5 86.5h5v3h-5zM288.5 68.5h5v3h-5zM287.5 75h5v2h-5zM280.5 107.5h3v3h-3zM291.5 99h3v2h-3zM289.5 84.5h5v3h-5zM282.5 74h5v2h-5zM293.5 73h3v2h-3zM279.5 93h3v2h-3zM279.5 99.5h5v3h-5zM292.5 107.5h5v3h-5zM271 102.5h4v3h-4zM284 74.5h4v3h-4zM304 93.5h4v3h-4zM297.5 90h3v2h-3zM277.5 91.5h5v3h-5zM284.5 94h3v2h-3zM297.5 106h5v2h-5zM289 100h4v2h-4zM297.5 104h5v2h-5zM293 105h4v2h-4zM282 67h4v2h-4zM301.5 92.5h5v3h-5zM296.5 102h5v2h-5zM292 69h4v2h-4zM282 79.5h4v3h-4zM291.5 86.5h3v3h-3zM291.5 101h5v2h-5zM273 106.5h4v3h-4zM288 106.5h4v3h-4zM284 79h4v2h-4zM277 93h4v2h-4zM296.5 66.5h3v3h-3zM285 87h4v2h-4zM295.5 63.5h3v3h-3zM305 90h4v2h-4zM277 82h4v2h-4zM293.5 84.5h3v3h-3zM305.5 101h5v2h-5zM290.5 66h3v2h-3zM288.5 91.5h3v3h-3zM284.5 91h5v2h-5zM291 95.5h4v3h-4zM278.5 84.5h5v3h-5zM304.5 97h3v2h-3zM275.5 93.5h5v3h-5zM306.5 104h5v2h-5zM301 89h4v2h-4zM291.5 89h3v2h-3zM306 95h4v2h-4zM273.5 100.5h3v3h-3zM298.5 103h3v2h-3zM290 72.5h4v3h-4zM305 100h4v2h-4zM290.5 86.5h5v3h-5zM286.5 78h5v2h-5zM296.5 106h5v2h-5zM288.5 74.5h5v3h-5zM287.5 87.5h5v3h-5zM306 102.5h4v3h-4zM296.5 101h3v2h-3zM293.5 96.5h5v3h-5zM290.5 103h5v2h-5zM287 96.5h4v3h-4zM284 85.5h4v3h-4zM298.5 79.5h5v3h-5zM301 76h4v2h-4zM307.5 97.5h3v3h-3zM284 70.5h4v3h-4zM299.5 93h3v2h-3zM294.5 67h3v2h-3zM304.5 96h3v2h-3zM272.5 108.5h3v3h-3zM280.5 73h5v2h-5zM279.5 98h5v2h-5zM290 73h4v2h-4zM304.5 99.5h3v3h-3zM291 96.5h4v3h-4zM307 95h4v2h-4zM306 106h4v2h-4zM282.5 74h5v2h-5zM290.5 81.5h5v3h-5zM279.5 88.5h3v3h-3zM307.5 106.5h5v3h-5z"/><path fill="#1f4519" d="M285.5 73.5h5v3h-5zM269.5 108h5v2h-5zM293.5 93h5v2h-5zM304 103h4v2h-4zM296.5 108h3v2h-3zM296.5 89h5v2h-5zM289 102.5h4v3h-4zM299.5 95.5h3v3h-3zM289.5 73h5v2h-5zM293.5 92h5v2h-5zM287.5 86h3v2h-3zM271.5 101.5h5v3h-5zM281.5 90h5v2h-5zM297 70h4v2h-4zM307.5 97.5h3v3h-3zM285.5 81h3v2h-3zM285.5 87h3v2h-3zM305.5 95h3v2h-3zM306.5 101.5h5v3h-5zM305 87.5h4v3h-4zM275.5 84.5h5v3h-5zM303.5 87.5h3v3h-3zM287 86h4v2h-4zM297.5 79h5v2h-5zM308.5 102h3v2h-3zM296.5 92.5h3v3h-3zM277.5 95.5h5v3h-5zM300 72h4v2h-4zM291.5 101.5h5v3h-5zM297 90h4v2h-4zM293 102.5h4v3h-4zM296 89h4v2h-4zM302 90h4v2h-4zM281.5 83h5v2h-5zM294.5 87h3v2h-3zM282.5 88h3v2h-3zM291.5 82h3v2h-3zM271.5 107h3v2h-3zM298.5 65.5h3v3h-3zM299.5 77.5h3v3h-3zM282 82.5h4v3h-4zM294 99h4v2h-4zM304.5 104.5h3v3h-3zM279.5 85h5v2h-5zM301.5 101.5h5v3h-5zM302 88h4v2h-4zM280 84.5h4v3h-4zM286 107h4v2h-4zM276.5 81h5v2h-5zM287.5 64h3v2h-3zM285.5 109h3v2h-3zM289 95.5h4v3h-4zM293 67h4v2h-4zM284.5 97h3v2h-3zM296.5 99h3v2h-3zM280 89h4v2h-4z"/><circle cx="300" cy="98" r="2" fill="#e2481c"/><rect x="299" y="96" width="1.5" height="1.5" fill="#ff8248"/><circle cx="297" cy="77" r="2" fill="#e2481c"/><rect x="296" y="75" width="1.5" height="1.5" fill="#ff8248"/><circle cx="289" cy="80" r="2" fill="#e2481c"/><rect x="288" y="78" width="1.5" height="1.5" fill="#ff8248"/><circle cx="288" cy="67" r="2" fill="#e2481c"/><rect x="287" y="65" width="1.5" height="1.5" fill="#ff8248"/><circle cx="296" cy="86" r="2" fill="#e2481c"/><rect x="295" y="84" width="1.5" height="1.5" fill="#ff8248"/><circle cx="298" cy="69" r="2" fill="#e2481c"/><rect x="297" y="67" width="1.5" height="1.5" fill="#ff8248"/><circle cx="298" cy="98" r="2" fill="#e2481c"/><rect x="297" y="96" width="1.5" height="1.5" fill="#ff8248"/><circle cx="288" cy="95" r="2" fill="#e2481c"/><rect x="287" y="93" width="1.5" height="1.5" fill="#ff8248"/><polygon points="315.6,78 326.4,78 324,87 324,101 330,108 311,108 318,101 318,87" fill="#3f2a1b"/><rect x="319.5" y="80" width="3.3" height="27" fill="#634529"/><rect x="320.5" y="84" width="1.32" height="20" fill="#80603a"/><line x1="319" y1="90.6" x2="306.6" y2="75" stroke="#3f2a1b" stroke-width="3.6"/><line x1="323" y1="90" x2="335.4" y2="76" stroke="#3f2a1b" stroke-width="3.6"/><line x1="319" y1="90" x2="307.2" y2="75" stroke="#634529" stroke-width="1.2"/><line x1="323" y1="89.4" x2="334.8" y2="76" stroke="#634529" stroke-width="1.2"/><line x1="319.2" y1="86" x2="313.2" y2="72" stroke="#3f2a1b" stroke-width="2.6"/><line x1="322.8" y1="86" x2="328.2" y2="72" stroke="#3f2a1b" stroke-width="2.6"/><line x1="306.6" y1="75" x2="303.6" y2="71" stroke="#3f2a1b" stroke-width="1.6"/><line x1="309" y1="79" x2="304.2" y2="81" stroke="#3f2a1b" stroke-width="1.3"/><line x1="311.4" y1="85.5" x2="307.2" y2="88.8" stroke="#3f2a1b" stroke-width="1.3"/><line x1="335.4" y1="76" x2="337.8" y2="71" stroke="#3f2a1b" stroke-width="1.6"/><line x1="330.6" y1="84.6" x2="334.2" y2="87" stroke="#3f2a1b" stroke-width="1.3"/><path fill="#183a14" d="M329 76h2v1h1v2h-1v1h-2v-1h-1v-2h1zM311.5 74.5h3v3h-3zM311 79h2v2h-2z"/><path fill="#1f4a18" d="M312 78h2v2h-2zM314.5 80.5h3v3h-3zM319.5 76.5h3v3h-3z"/><path fill="#25581b" d="M325.5 79.5h3v3h-3zM329.5 81.5h3v3h-3zM316 84h2v2h-2zM319 83h2v1h1v2h-1v1h-2v-1h-1v-2h1zM322 75h2v1h1v2h-1v1h-2v-1h-1v-2h1zM321 77h2v2h-2zM327.5 81.5h3v3h-3z"/><ellipse cx="321" cy="68.7" rx="13.54" ry="9.7" fill="#183a14"/><ellipse cx="311.5" cy="76.24" rx="10.88" ry="9.7" fill="#183a14"/><ellipse cx="330.5" cy="76.24" rx="10.88" ry="9.7" fill="#183a14"/><ellipse cx="321" cy="77.98" rx="16.2" ry="9.7" fill="#183a14"/><ellipse cx="316.44" cy="71.6" rx="11.64" ry="9.7" fill="#183a14"/><ellipse cx="325.56" cy="71.6" rx="11.64" ry="9.7" fill="#183a14"/><ellipse cx="321" cy="67.2" rx="12.04" ry="7.7" fill="#25581b"/><ellipse cx="311.5" cy="74.74" rx="9.38" ry="7.7" fill="#25581b"/><ellipse cx="330.5" cy="74.74" rx="9.38" ry="7.7" fill="#25581b"/><ellipse cx="321" cy="76.48" rx="14.7" ry="7.7" fill="#25581b"/><ellipse cx="316.44" cy="70.1" rx="10.14" ry="7.7" fill="#25581b"/><ellipse cx="325.56" cy="70.1" rx="10.14" ry="7.7" fill="#25581b"/><path fill="#25581b" d="M320.5 78.5h3v3h-3zM317 72h2v2h-2zM327.5 79.5h3v3h-3zM319 70h2v1h1v2h-1v1h-2v-1h-1v-2h1zM317 82h2v2h-2zM322.5 69.5h3v3h-3zM314.5 70.5h3v3h-3zM328.5 66.5h3v3h-3zM318.5 72.5h3v3h-3zM329 72h2v1h1v2h-1v1h-2v-1h-1v-2h1zM324 69h2v1h1v2h-1v1h-2v-1h-1v-2h1zM327 67h2v2h-2zM305.5 75.5h3v3h-3zM332 77h2v2h-2zM326 67h2v2h-2zM317 70h2v2h-2zM316 72h2v1h1v2h-1v1h-2v-1h-1v-2h1zM331.5 66.5h3v3h-3zM322.5 69.5h3v3h-3zM322 73h2v1h1v2h-1v1h-2v-1h-1v-2h1zM312 77h2v1h1v2h-1v1h-2v-1h-1v-2h1zM312 75h2v1h1v2h-1v1h-2v-1h-1v-2h1zM304 78h2v2h-2zM312 65h2v2h-2zM321.5 67.5h3v3h-3zM304.5 76.5h3v3h-3zM309 78h2v2h-2zM328.5 79.5h3v3h-3zM320 68h2v1h1v2h-1v1h-2v-1h-1v-2h1zM322 72h2v1h1v2h-1v1h-2v-1h-1v-2h1zM324 71h2v2h-2zM331 72h2v1h1v2h-1v1h-2v-1h-1v-2h1zM322.5 73.5h3v3h-3zM325 76h2v2h-2zM335 78h2v2h-2zM315 73h2v1h1v2h-1v1h-2v-1h-1v-2h1z"/><path fill="#183a14" d="M329.5 75.5h3v3h-3zM326.5 79.5h3v3h-3zM317 74h2v1h1v2h-1v1h-2v-1h-1v-2h1zM313.5 69.5h3v3h-3zM306.5 77.5h3v3h-3zM318 69h2v1h1v2h-1v1h-2v-1h-1v-2h1zM327.5 70.5h3v3h-3z"/><path fill="#347221" d="M317 69h2v2h-2zM318 77h2v2h-2zM331 67h2v1h1v2h-1v1h-2v-1h-1v-2h1zM326.5 77.5h3v3h-3zM325.5 66.5h3v3h-3zM325 76h2v2h-2zM315 73h2v2h-2zM331.5 77.5h3v3h-3zM320 67h2v1h1v2h-1v1h-2v-1h-1v-2h1zM316 73h2v2h-2zM330 70h2v2h-2zM334.5 73.5h3v3h-3zM306 72h2v2h-2zM321.5 73.5h3v3h-3zM323.5 77.5h3v3h-3zM313.5 64.5h3v3h-3zM306.5 77.5h3v3h-3zM323 67h2v2h-2zM311.5 74.5h3v3h-3zM312.5 79.5h3v3h-3zM331 72h2v2h-2zM324 70h2v1h1v2h-1v1h-2v-1h-1v-2h1zM312 68h2v1h1v2h-1v1h-2v-1h-1v-2h1zM314.5 69.5h3v3h-3zM316 65h2v2h-2zM313 65h2v1h1v2h-1v1h-2v-1h-1v-2h1zM324 67h2v2h-2zM336 71h2v2h-2zM311.5 69.5h3v3h-3zM318 70h2v2h-2zM321.5 72.5h3v3h-3zM317 67h2v1h1v2h-1v1h-2v-1h-1v-2h1zM328 75h2v2h-2zM307 74h2v1h1v2h-1v1h-2v-1h-1v-2h1zM336 71h2v2h-2z"/><path fill="#4e8f28" d="M327 69h2v1h1v2h-1v1h-2v-1h-1v-2h1zM321.5 64.5h3v3h-3zM328.5 64.5h3v3h-3zM314 74h2v2h-2zM325 69h2v1h1v2h-1v1h-2v-1h-1v-2h1zM325 61h2v1h1v2h-1v1h-2v-1h-1v-2h1zM305.5 69.5h3v3h-3zM331 75h2v1h1v2h-1v1h-2v-1h-1v-2h1zM326 68h2v1h1v2h-1v1h-2v-1h-1v-2h1zM307 68h2v2h-2zM318 66h2v1h1v2h-1v1h-2v-1h-1v-2h1zM307 68h2v2h-2zM306 74h2v1h1v2h-1v1h-2v-1h-1v-2h1zM318 69h2v2h-2zM315.5 70.5h3v3h-3zM312 62h2v1h1v2h-1v1h-2v-1h-1v-2h1zM323.5 68.5h3v3h-3zM336.5 73.5h3v3h-3zM329.5 73.5h3v3h-3zM327.5 63.5h3v3h-3zM310.5 75.5h3v3h-3zM334 70h2v1h1v2h-1v1h-2v-1h-1v-2h1zM312 66h2v2h-2zM328 69h2v1h1v2h-1v1h-2v-1h-1v-2h1zM310 69h2v1h1v2h-1v1h-2v-1h-1v-2h1zM316 70h2v1h1v2h-1v1h-2v-1h-1v-2h1zM331.5 74.5h3v3h-3zM318.5 72.5h3v3h-3zM309 74h2v1h1v2h-1v1h-2v-1h-1v-2h1zM314.5 61.5h3v3h-3zM337 71h2v2h-2zM324 76h2v2h-2zM315 63h2v2h-2zM328.5 73.5h3v3h-3z"/><path fill="#78b03a" d="M318 73h2v2h-2zM314 65h2v1h1v2h-1v1h-2v-1h-1v-2h1zM322.5 63.5h3v3h-3zM328 72h2v1h1v2h-1v1h-2v-1h-1v-2h1zM305.5 70.5h3v3h-3zM322 61h2v2h-2zM329 72h2v2h-2zM333.5 70.5h3v3h-3zM302.5 71.5h3v3h-3zM319.5 71.5h3v3h-3z"/><path fill="#183a14" d="M307.5 80.5h3v3h-3zM330 84h2v1h1v2h-1v1h-2v-1h-1v-2h1zM329 80h2v1h1v2h-1v1h-2v-1h-1v-2h1zM323.5 84.5h3v3h-3zM310 83h2v1h1v2h-1v1h-2v-1h-1v-2h1zM332.5 84.5h3v3h-3zM331 83h2v1h1v2h-1v1h-2v-1h-1v-2h1zM306.5 82.5h3v3h-3zM316.5 81.5h3v3h-3zM312.5 82.5h3v3h-3zM313.5 81.5h3v3h-3zM325.5 82.5h3v3h-3z"/><ellipse cx="323.5" cy="112" rx="33.5" ry="25" fill="#17453a"/><path fill="#2d6f4e" d="M338.5 95.5h3v3h-3zM349 97h2v1h1v2h-1v1h-2v-1h-1v-2h1zM293 104h2v2h-2zM326 89h2v1h1v2h-1v1h-2v-1h-1v-2h1zM350 107h2v2h-2zM324.5 88.5h3v3h-3zM303 105h2v2h-2zM311 88h2v1h1v2h-1v1h-2v-1h-1v-2h1zM308 99h2v2h-2zM309 106h2v1h1v2h-1v1h-2v-1h-1v-2h1zM350 100h2v1h1v2h-1v1h-2v-1h-1v-2h1zM333 91h2v2h-2zM333 91h2v1h1v2h-1v1h-2v-1h-1v-2h1zM295.5 97.5h3v3h-3zM335 99h2v1h1v2h-1v1h-2v-1h-1v-2h1zM333 98h2v1h1v2h-1v1h-2v-1h-1v-2h1zM298 96h2v2h-2zM315 105h2v1h1v2h-1v1h-2v-1h-1v-2h1zM340 94h2v2h-2zM293.5 101.5h3v3h-3zM290 105h2v1h1v2h-1v1h-2v-1h-1v-2h1zM317.5 95.5h3v3h-3zM328.5 88.5h3v3h-3zM320 100h2v2h-2zM349 100h2v2h-2zM300.5 92.5h3v3h-3zM311 88h2v1h1v2h-1v1h-2v-1h-1v-2h1zM345.5 95.5h3v3h-3zM353.5 104.5h3v3h-3zM308 96h2v2h-2zM290 107h2v1h1v2h-1v1h-2v-1h-1v-2h1zM312 95h2v2h-2zM289.5 106.5h3v3h-3zM306.5 93.5h3v3h-3zM343 96h2v2h-2zM309.5 89.5h3v3h-3zM300 98h2v1h1v2h-1v1h-2v-1h-1v-2h1zM341.5 92.5h3v3h-3zM334.5 94.5h3v3h-3zM306.5 103.5h3v3h-3zM316.5 88.5h3v3h-3zM333.5 96.5h3v3h-3zM347 96h2v1h1v2h-1v1h-2v-1h-1v-2h1zM354 104h2v2h-2zM307.5 96.5h3v3h-3zM306.5 93.5h3v3h-3zM324.5 94.5h3v3h-3zM313.5 92.5h3v3h-3zM334.5 91.5h3v3h-3zM304 94h2v1h1v2h-1v1h-2v-1h-1v-2h1zM317.5 91.5h3v3h-3zM314 91h2v1h1v2h-1v1h-2v-1h-1v-2h1zM321 107h2v1h1v2h-1v1h-2v-1h-1v-2h1zM329.5 93.5h3v3h-3zM288.5 109.5h3v3h-3zM332 101h2v2h-2zM355.5 108.5h3v3h-3zM356 109h2v2h-2zM334 89h2v1h1v2h-1v1h-2v-1h-1v-2h1zM324.5 94.5h3v3h-3zM332.5 87.5h3v3h-3zM340 92h2v1h1v2h-1v1h-2v-1h-1v-2h1zM311 108h2v2h-2zM335.5 102.5h3v3h-3zM297 96h2v1h1v2h-1v1h-2v-1h-1v-2h1zM349 101h2v2h-2zM307 105h2v2h-2zM318 91h2v2h-2zM353.5 104.5h3v3h-3zM300 93h2v1h1v2h-1v1h-2v-1h-1v-2h1zM351 108h2v1h1v2h-1v1h-2v-1h-1v-2h1zM299 102h2v2h-2zM324 88h2v2h-2zM331 96h2v1h1v2h-1v1h-2v-1h-1v-2h1zM339 101h2v2h-2zM290 108h2v2h-2zM336 90h2v1h1v2h-1v1h-2v-1h-1v-2h1zM337 89h2v1h1v2h-1v1h-2v-1h-1v-2h1zM317.5 93.5h3v3h-3zM313 94h2v1h1v2h-1v1h-2v-1h-1v-2h1zM293.5 100.5h3v3h-3zM295 100h2v1h1v2h-1v1h-2v-1h-1v-2h1zM329 90h2v1h1v2h-1v1h-2v-1h-1v-2h1zM334 92h2v1h1v2h-1v1h-2v-1h-1v-2h1zM347 95h2v1h1v2h-1v1h-2v-1h-1v-2h1zM354 108h2v2h-2zM301.5 95.5h3v3h-3zM329.5 95.5h3v3h-3zM295.5 100.5h3v3h-3zM336.5 93.5h3v3h-3zM332.5 91.5h3v3h-3zM317.5 90.5h3v3h-3zM304 94h2v2h-2zM290.5 108.5h3v3h-3zM338.5 95.5h3v3h-3zM332 93h2v2h-2zM295.5 104.5h3v3h-3zM320 101h2v2h-2zM336.5 108.5h3v3h-3zM346 104h2v1h1v2h-1v1h-2v-1h-1v-2h1zM350 100h2v1h1v2h-1v1h-2v-1h-1v-2h1zM309 105h2v2h-2zM335 100h2v2h-2zM293 101h2v1h1v2h-1v1h-2v-1h-1v-2h1zM325 94h2v1h1v2h-1v1h-2v-1h-1v-2h1zM305.5 95.5h3v3h-3zM350 104h2v1h1v2h-1v1h-2v-1h-1v-2h1z"/><path fill="#17453a" d="M351 103h2v1h1v2h-1v1h-2v-1h-1v-2h1zM354.5 107.5h3v3h-3zM314.5 104.5h3v3h-3zM292 105h2v2h-2zM323 96h2v2h-2zM298.5 108.5h3v3h-3zM335 97h2v1h1v2h-1v1h-2v-1h-1v-2h1zM338 104h2v1h1v2h-1v1h-2v-1h-1v-2h1zM331.5 101.5h3v3h-3zM312 97h2v1h1v2h-1v1h-2v-1h-1v-2h1zM306 100h2v1h1v2h-1v1h-2v-1h-1v-2h1zM318 100h2v2h-2zM301 108h2v2h-2zM345.5 100.5h3v3h-3zM347 107h2v1h1v2h-1v1h-2v-1h-1v-2h1zM316 99h2v2h-2zM300 104h2v2h-2zM312.5 96.5h3v3h-3zM318 96h2v2h-2zM355 108h2v1h1v2h-1v1h-2v-1h-1v-2h1zM320 97h2v2h-2zM336.5 98.5h3v3h-3zM352 105h2v2h-2zM328.5 106.5h3v3h-3zM308 101h2v1h1v2h-1v1h-2v-1h-1v-2h1zM336.5 99.5h3v3h-3zM326.5 96.5h3v3h-3zM312 108h2v2h-2zM308.5 97.5h3v3h-3zM320 102h2v1h1v2h-1v1h-2v-1h-1v-2h1zM304 98h2v1h1v2h-1v1h-2v-1h-1v-2h1zM329 104h2v2h-2zM345.5 99.5h3v3h-3zM323 98h2v2h-2zM342 98h2v1h1v2h-1v1h-2v-1h-1v-2h1zM300.5 105.5h3v3h-3zM326 101h2v2h-2zM292 107h2v1h1v2h-1v1h-2v-1h-1v-2h1zM303.5 98.5h3v3h-3zM346 101h2v2h-2z"/><path fill="#1f5a44" d="M301.5 93.5h3v3h-3zM301 99h2v1h1v2h-1v1h-2v-1h-1v-2h1zM292 106h2v1h1v2h-1v1h-2v-1h-1v-2h1zM350.5 101.5h3v3h-3zM300 102h2v1h1v2h-1v1h-2v-1h-1v-2h1zM326 106h2v2h-2zM323 89h2v1h1v2h-1v1h-2v-1h-1v-2h1zM349 97h2v1h1v2h-1v1h-2v-1h-1v-2h1zM326 98h2v1h1v2h-1v1h-2v-1h-1v-2h1zM331 100h2v1h1v2h-1v1h-2v-1h-1v-2h1zM324 95h2v1h1v2h-1v1h-2v-1h-1v-2h1zM320.5 104.5h3v3h-3zM330.5 103.5h3v3h-3zM318.5 87.5h3v3h-3zM356 108h2v1h1v2h-1v1h-2v-1h-1v-2h1zM297.5 103.5h3v3h-3zM348.5 97.5h3v3h-3zM316 99h2v2h-2zM312 95h2v2h-2zM351 107h2v2h-2zM347 105h2v1h1v2h-1v1h-2v-1h-1v-2h1zM347.5 105.5h3v3h-3zM319 89h2v2h-2zM316 92h2v2h-2zM315.5 95.5h3v3h-3zM331.5 96.5h3v3h-3zM307 103h2v2h-2zM297 105h2v2h-2zM319.5 98.5h3v3h-3zM315.5 93.5h3v3h-3zM314.5 97.5h3v3h-3zM296 103h2v1h1v2h-1v1h-2v-1h-1v-2h1zM344 95h2v2h-2zM317 106h2v2h-2zM300 100h2v1h1v2h-1v1h-2v-1h-1v-2h1zM356 108h2v1h1v2h-1v1h-2v-1h-1v-2h1zM314 91h2v1h1v2h-1v1h-2v-1h-1v-2h1zM297.5 95.5h3v3h-3zM291.5 103.5h3v3h-3zM334 97h2v2h-2zM331 97h2v2h-2zM311 97h2v1h1v2h-1v1h-2v-1h-1v-2h1zM304.5 105.5h3v3h-3zM344 100h2v2h-2zM346 96h2v1h1v2h-1v1h-2v-1h-1v-2h1zM302 94h2v2h-2zM304 93h2v2h-2zM332.5 104.5h3v3h-3zM342 108h2v1h1v2h-1v1h-2v-1h-1v-2h1zM321.5 95.5h3v3h-3zM317.5 106.5h3v3h-3zM317 100h2v1h1v2h-1v1h-2v-1h-1v-2h1zM350.5 103.5h3v3h-3zM339 99h2v1h1v2h-1v1h-2v-1h-1v-2h1zM349 104h2v2h-2zM350.5 102.5h3v3h-3zM355 108h2v2h-2zM299 99h2v1h1v2h-1v1h-2v-1h-1v-2h1zM317 99h2v2h-2zM327 107h2v2h-2zM305.5 103.5h3v3h-3zM344.5 101.5h3v3h-3zM309.5 99.5h3v3h-3zM309 104h2v2h-2zM290 107h2v1h1v2h-1v1h-2v-1h-1v-2h1zM350.5 108.5h3v3h-3zM298.5 97.5h3v3h-3zM316 98h2v2h-2zM314 99h2v2h-2zM316.5 105.5h3v3h-3zM350 101h2v2h-2zM298 104h2v2h-2zM293 106h2v2h-2zM293 104h2v1h1v2h-1v1h-2v-1h-1v-2h1zM319.5 87.5h3v3h-3zM344.5 107.5h3v3h-3zM301 105h2v2h-2zM317 105h2v2h-2zM292.5 104.5h3v3h-3zM342 99h2v1h1v2h-1v1h-2v-1h-1v-2h1zM312.5 99.5h3v3h-3zM353 101h2v1h1v2h-1v1h-2v-1h-1v-2h1zM351 104h2v1h1v2h-1v1h-2v-1h-1v-2h1zM336.5 104.5h3v3h-3zM323 95h2v1h1v2h-1v1h-2v-1h-1v-2h1zM345.5 102.5h3v3h-3zM323.5 103.5h3v3h-3zM316 105h2v1h1v2h-1v1h-2v-1h-1v-2h1zM334.5 99.5h3v3h-3zM336 102h2v1h1v2h-1v1h-2v-1h-1v-2h1zM297 103h2v1h1v2h-1v1h-2v-1h-1v-2h1zM324 94h2v1h1v2h-1v1h-2v-1h-1v-2h1z"/><polygon points="332,110 330,92 339,76 346,72 351,70 358.8,74 366,90 365,110" fill="#27501d"/><line x1="339" y1="110" x2="343.036" y2="64.195" stroke="#5a3b22" stroke-width="1.6"/><line x1="345.12" y1="110" x2="347.836" y2="69.3411" stroke="#5a3b22" stroke-width="1.6"/><line x1="351.24" y1="110" x2="348.377" y2="65.1322" stroke="#5a3b22" stroke-width="1.6"/><line x1="357.36" y1="110" x2="360.065" y2="66.5887" stroke="#5a3b22" stroke-width="1.6"/><line x1="348" y1="74" x2="341" y2="64" stroke="#5a3b22" stroke-width="1.2"/><line x1="348" y1="72" x2="354" y2="62" stroke="#5a3b22" stroke-width="1.2"/><path fill="#2c5e1f" d="M344 73.5h4v3h-4zM334.5 101.5h3v3h-3zM339.5 89.5h5v3h-5zM340.5 104.5h5v3h-5zM335 91h4v2h-4zM347.5 101h5v2h-5zM341 90h4v2h-4zM352.5 80h5v2h-5zM349.5 106.5h5v3h-5zM348 73.5h4v3h-4zM348.5 71.5h5v3h-5zM337.5 105.5h3v3h-3zM344.5 95.5h3v3h-3zM338.5 93h3v2h-3zM348.5 101h5v2h-5zM345 82h4v2h-4zM341.5 93.5h3v3h-3zM356.5 99h3v2h-3zM342.5 75h3v2h-3zM339 91h4v2h-4zM329.5 102.5h5v3h-5zM352 105h4v2h-4zM341.5 96h3v2h-3zM346 82h4v2h-4zM333.5 85h5v2h-5zM353.5 102.5h3v3h-3zM336.5 84.5h5v3h-5zM342.5 101h5v2h-5zM349 91h4v2h-4zM355 83h4v2h-4zM346.5 77.5h3v3h-3zM353.5 106.5h5v3h-5zM342.5 81h3v2h-3zM348.5 85.5h3v3h-3zM353.5 69h3v2h-3zM346.5 86h5v2h-5zM353 82.5h4v3h-4zM341.5 81.5h3v3h-3zM354 77h4v2h-4zM338.5 89h5v2h-5zM354.5 84h3v2h-3zM349 94.5h4v3h-4zM334.5 85h5v2h-5zM342.5 105.5h5v3h-5zM337.5 105.5h5v3h-5zM341 72.5h4v3h-4zM337 77h4v2h-4zM342.5 93h5v2h-5zM343 96h4v2h-4zM346.5 108.5h3v3h-3zM360.5 96h3v2h-3zM355.5 104h5v2h-5zM354.5 85.5h5v3h-5zM343 77h4v2h-4zM344.5 107.5h3v3h-3zM340.5 72.5h3v3h-3zM343.5 88h5v2h-5zM331 105.5h4v3h-4zM341.5 94h3v2h-3zM355.5 101h3v2h-3zM351.5 106.5h5v3h-5zM334.5 93h3v2h-3zM355.5 77.5h3v3h-3zM357.5 99.5h5v3h-5zM349 79h4v2h-4zM352 78h4v2h-4zM352.5 68h5v2h-5zM335 105h4v2h-4zM338.5 107.5h3v3h-3zM340.5 103h5v2h-5zM338.5 88.5h3v3h-3zM345 83.5h4v3h-4zM354 84h4v2h-4zM356.5 105h3v2h-3zM350.5 78h5v2h-5zM355.5 95h5v2h-5zM349.5 102.5h3v3h-3zM349.5 74.5h3v3h-3zM353 89h4v2h-4zM339.5 109h3v2h-3zM330.5 105.5h3v3h-3zM333 103.5h4v3h-4zM341.5 95.5h5v3h-5zM339.5 75.5h3v3h-3zM335 104.5h4v3h-4zM348.5 107h3v2h-3zM332 108.5h4v3h-4zM350.5 77.5h3v3h-3zM344 99.5h4v3h-4zM341.5 77h5v2h-5zM340.5 107.5h3v3h-3zM343.5 107h3v2h-3zM342.5 85.5h3v3h-3zM349 101.5h4v3h-4zM344 95.5h4v3h-4zM331 101.5h4v3h-4zM344.5 99h3v2h-3zM341.5 100h3v2h-3zM342.5 77h5v2h-5zM345.5 85h3v2h-3zM343.5 79.5h3v3h-3zM340.5 77.5h3v3h-3zM358.5 102h3v2h-3zM334.5 99.5h3v3h-3zM342.5 106.5h5v3h-5zM353.5 83h3v2h-3zM352.5 83.5h3v3h-3zM357.5 100.5h5v3h-5zM335.5 87.5h3v3h-3z"/><path fill="#55932e" d="M353.5 80.5h3v3h-3zM342 105h4v2h-4zM337.5 83.5h5v3h-5zM347.5 81.5h5v3h-5zM345.5 104h3v2h-3zM355.5 88.5h3v3h-3zM343 71h4v2h-4zM345 76.5h4v3h-4zM342.5 75.5h3v3h-3zM342.5 69.5h3v3h-3zM347 94.5h4v3h-4zM362 102h4v2h-4zM349.5 91.5h3v3h-3zM336 92h4v2h-4zM347.5 100.5h3v3h-3zM352 106h4v2h-4zM351.5 81h3v2h-3zM335 81h4v2h-4zM346.5 71h3v2h-3zM345.5 72.5h3v3h-3zM356.5 92h3v2h-3zM339 90.5h4v3h-4zM339.5 86h5v2h-5zM341.5 73h3v2h-3zM333 88.5h4v3h-4zM342.5 71h3v2h-3zM359.5 94h5v2h-5zM346 68.5h4v3h-4zM340.5 93.5h3v3h-3zM352.5 78.5h3v3h-3zM347.5 109h3v2h-3zM355.5 89.5h3v3h-3zM356.5 85.5h5v3h-5z"/><path fill="#3d7a27" d="M348 67.5h4v3h-4zM346.5 86h3v2h-3zM339.5 108h5v2h-5zM336 105.5h4v3h-4zM350 85h4v2h-4zM355 76h4v2h-4zM337.5 103.5h5v3h-5zM347.5 74h5v2h-5zM350.5 86h5v2h-5zM334 84h4v2h-4zM345 95h4v2h-4zM331.5 107h3v2h-3zM340 76h4v2h-4zM332.5 96.5h3v3h-3zM342 106.5h4v3h-4zM350.5 78.5h5v3h-5zM334 93.5h4v3h-4zM346.5 102h3v2h-3zM353.5 105h5v2h-5zM355 94.5h4v3h-4zM355 99h4v2h-4zM353.5 101h3v2h-3zM349.5 107.5h5v3h-5zM337.5 97.5h5v3h-5zM356.5 87h3v2h-3zM350 95.5h4v3h-4zM350 94.5h4v3h-4zM352.5 86h3v2h-3zM333 107.5h4v3h-4zM347.5 69.5h5v3h-5zM339.5 71h5v2h-5zM341.5 91h5v2h-5zM346.5 85.5h3v3h-3zM338.5 91.5h5v3h-5zM338.5 94h3v2h-3zM357.5 84.5h5v3h-5zM354 70h4v2h-4zM360.5 106h3v2h-3zM354.5 96h3v2h-3zM341.5 94.5h3v3h-3zM347.5 98h3v2h-3zM351.5 73h3v2h-3zM345.5 98.5h5v3h-5zM339.5 86.5h3v3h-3zM353 87h4v2h-4zM345 79.5h4v3h-4zM345.5 70.5h5v3h-5zM352 101h4v2h-4zM340.5 98h3v2h-3zM347 88h4v2h-4zM348.5 106h3v2h-3zM335.5 83.5h3v3h-3zM342.5 68.5h3v3h-3zM336.5 89h3v2h-3zM359.5 92h5v2h-5zM335 98.5h4v3h-4zM349.5 108h3v2h-3zM339.5 76.5h3v3h-3zM361.5 97.5h3v3h-3zM356.5 97.5h5v3h-5zM360.5 97.5h5v3h-5zM350 78h4v2h-4zM349.5 89.5h5v3h-5zM357 94h4v2h-4zM336 89h4v2h-4zM361 99.5h4v3h-4zM347 89h4v2h-4zM330.5 107.5h5v3h-5zM344.5 89h3v2h-3zM347.5 72.5h3v3h-3zM349.5 88.5h3v3h-3zM353.5 93h3v2h-3zM339.5 71h5v2h-5zM333.5 104.5h5v3h-5zM337 77.5h4v3h-4zM362 105.5h4v3h-4zM349.5 74h5v2h-5zM342.5 86h3v2h-3zM353.5 100h3v2h-3zM360 92.5h4v3h-4zM335 88.5h4v3h-4zM332.5 93h3v2h-3zM344.5 98.5h5v3h-5zM354.5 78h3v2h-3zM364 105.5h4v3h-4z"/><path fill="#1f4519" d="M341.5 84.5h3v3h-3zM354.5 82h3v2h-3zM355.5 87.5h5v3h-5zM347.5 100.5h5v3h-5zM356.5 86.5h3v3h-3zM332.5 100h5v2h-5zM351 98.5h4v3h-4zM337.5 78h3v2h-3zM334.5 104h5v2h-5zM343 100.5h4v3h-4zM335.5 105h3v2h-3zM346.5 84h5v2h-5zM343.5 83.5h3v3h-3zM345 92.5h4v3h-4zM352.5 85h3v2h-3zM361 104.5h4v3h-4zM350.5 73h5v2h-5zM335.5 76.5h5v3h-5zM341.5 77.5h5v3h-5zM351.5 103h3v2h-3zM336.5 100h3v2h-3zM345 75.5h4v3h-4zM336.5 87h5v2h-5zM348.5 71.5h5v3h-5zM339.5 97.5h5v3h-5zM349.5 99h5v2h-5zM350.5 94h3v2h-3zM336 83h4v2h-4zM347.5 81h5v2h-5zM352.5 71.5h3v3h-3zM344.5 95.5h3v3h-3zM356.5 103h5v2h-5zM329 102.5h4v3h-4zM343.5 100.5h3v3h-3zM351.5 80h3v2h-3zM360.5 96.5h3v3h-3z"/><circle cx="348" cy="85" r="2" fill="#e2481c"/><rect x="347" y="83" width="1.5" height="1.5" fill="#ff8248"/><circle cx="352" cy="89" r="2" fill="#e2481c"/><rect x="351" y="87" width="1.5" height="1.5" fill="#ff8248"/><circle cx="344" cy="81" r="2" fill="#e2481c"/><rect x="343" y="79" width="1.5" height="1.5" fill="#ff8248"/><circle cx="355" cy="91" r="2" fill="#e2481c"/><rect x="354" y="89" width="1.5" height="1.5" fill="#ff8248"/><circle cx="353" cy="97" r="2" fill="#e2481c"/><rect x="352" y="95" width="1.5" height="1.5" fill="#ff8248"/><circle cx="346" cy="82" r="2" fill="#e2481c"/><rect x="345" y="80" width="1.5" height="1.5" fill="#ff8248"/><circle cx="345" cy="76" r="2" fill="#e2481c"/><rect x="344" y="74" width="1.5" height="1.5" fill="#ff8248"/><circle cx="343" cy="86" r="2" fill="#e2481c"/><rect x="342" y="84" width="1.5" height="1.5" fill="#ff8248"/><polygon points="354.1,64 373.9,64 369.5,77.8 369.5,103 375.5,110 351.5,110 358.5,103 358.5,77.8" fill="#3f2a1b"/><rect x="360" y="66" width="6.05" height="43" fill="#634529"/><rect x="361" y="70" width="2.42" height="36" fill="#80603a"/><line x1="359.5" y1="83.32" x2="337.6" y2="61" stroke="#3f2a1b" stroke-width="3.6"/><line x1="368.5" y1="82.4" x2="390.4" y2="62" stroke="#3f2a1b" stroke-width="3.6"/><line x1="359.5" y1="82.4" x2="338.7" y2="61" stroke="#634529" stroke-width="1.2"/><line x1="368.5" y1="81.48" x2="389.3" y2="62" stroke="#634529" stroke-width="1.2"/><line x1="360.7" y1="72" x2="349.7" y2="58" stroke="#3f2a1b" stroke-width="2.6"/><line x1="367.3" y1="72" x2="377.2" y2="58" stroke="#3f2a1b" stroke-width="2.6"/><line x1="337.6" y1="61" x2="332.1" y2="57" stroke="#3f2a1b" stroke-width="1.6"/><line x1="342" y1="65" x2="333.2" y2="67" stroke="#3f2a1b" stroke-width="1.3"/><line x1="346.4" y1="75.5" x2="338.7" y2="80.56" stroke="#3f2a1b" stroke-width="1.3"/><line x1="390.4" y1="62" x2="394.8" y2="57" stroke="#3f2a1b" stroke-width="1.6"/><line x1="381.6" y1="74.12" x2="388.2" y2="77.8" stroke="#3f2a1b" stroke-width="1.3"/><path fill="#25581b" d="M376.5 67.5h3v3h-3zM339.5 64.5h3v3h-3zM348.5 67.5h3v3h-3zM374 66h2v2h-2zM347 63h2v1h1v2h-1v1h-2v-1h-1v-2h1zM357 70h2v2h-2zM386 65h2v1h1v2h-1v1h-2v-1h-1v-2h1zM352 66h2v1h1v2h-1v1h-2v-1h-1v-2h1zM373 68h2v1h1v2h-1v1h-2v-1h-1v-2h1zM336.5 61.5h3v3h-3z"/><path fill="#1f4a18" d="M347.5 63.5h3v3h-3zM350.5 66.5h3v3h-3zM372 66h2v1h1v2h-1v1h-2v-1h-1v-2h1zM376 65h2v1h1v2h-1v1h-2v-1h-1v-2h1zM349 62h2v2h-2zM353 69h2v2h-2zM355 68h2v2h-2zM348.5 68.5h3v3h-3z"/><path fill="#183a14" d="M345 63h2v2h-2zM367.5 61.5h3v3h-3zM386 60h2v1h1v2h-1v1h-2v-1h-1v-2h1zM337 66h2v1h1v2h-1v1h-2v-1h-1v-2h1zM339 61h2v2h-2zM354.5 69.5h3v3h-3z"/><ellipse cx="366" cy="48.1" rx="19.48" ry="12.1" fill="#183a14"/><ellipse cx="352" cy="57.72" rx="15.56" ry="12.1" fill="#183a14"/><ellipse cx="380" cy="57.72" rx="15.56" ry="12.1" fill="#183a14"/><ellipse cx="366" cy="59.94" rx="23.4" ry="12.1" fill="#183a14"/><ellipse cx="359.28" cy="51.8" rx="16.68" ry="12.1" fill="#183a14"/><ellipse cx="372.72" cy="51.8" rx="16.68" ry="12.1" fill="#183a14"/><ellipse cx="366" cy="46.6" rx="17.98" ry="10.1" fill="#25581b"/><ellipse cx="352" cy="56.22" rx="14.06" ry="10.1" fill="#25581b"/><ellipse cx="380" cy="56.22" rx="14.06" ry="10.1" fill="#25581b"/><ellipse cx="366" cy="58.44" rx="21.9" ry="10.1" fill="#25581b"/><ellipse cx="359.28" cy="50.3" rx="15.18" ry="10.1" fill="#25581b"/><ellipse cx="372.72" cy="50.3" rx="15.18" ry="10.1" fill="#25581b"/><path fill="#25581b" d="M349.5 48.5h3v3h-3zM355 59h2v1h1v2h-1v1h-2v-1h-1v-2h1zM375 56h2v1h1v2h-1v1h-2v-1h-1v-2h1zM368 46h2v2h-2zM369 48h2v2h-2zM374.5 61.5h3v3h-3zM343.5 52.5h3v3h-3zM339.5 52.5h3v3h-3zM354.5 62.5h3v3h-3zM352 55h2v2h-2zM369 48h2v1h1v2h-1v1h-2v-1h-1v-2h1zM378.5 54.5h3v3h-3zM356 58h2v1h1v2h-1v1h-2v-1h-1v-2h1zM353 62h2v2h-2zM358 46h2v1h1v2h-1v1h-2v-1h-1v-2h1zM362 54h2v1h1v2h-1v1h-2v-1h-1v-2h1zM371 52h2v2h-2zM343 56h2v1h1v2h-1v1h-2v-1h-1v-2h1zM371 56h2v1h1v2h-1v1h-2v-1h-1v-2h1zM357 48h2v1h1v2h-1v1h-2v-1h-1v-2h1zM368.5 52.5h3v3h-3zM367.5 66.5h3v3h-3zM386 59h2v1h1v2h-1v1h-2v-1h-1v-2h1zM380.5 58.5h3v3h-3zM365 48h2v1h1v2h-1v1h-2v-1h-1v-2h1zM357 58h2v2h-2zM364 57h2v2h-2zM357 64h2v1h1v2h-1v1h-2v-1h-1v-2h1zM359 54h2v1h1v2h-1v1h-2v-1h-1v-2h1zM390 55h2v1h1v2h-1v1h-2v-1h-1v-2h1zM359 49h2v2h-2zM347 61h2v1h1v2h-1v1h-2v-1h-1v-2h1zM367.5 54.5h3v3h-3zM377 62h2v1h1v2h-1v1h-2v-1h-1v-2h1zM377 63h2v2h-2zM363.5 54.5h3v3h-3zM381.5 61.5h3v3h-3zM355.5 51.5h3v3h-3zM352 64h2v1h1v2h-1v1h-2v-1h-1v-2h1zM379 60h2v2h-2zM390 58h2v2h-2zM375 58h2v2h-2zM359 57h2v2h-2zM343 60h2v1h1v2h-1v1h-2v-1h-1v-2h1zM373 51h2v1h1v2h-1v1h-2v-1h-1v-2h1zM366 58h2v2h-2zM356 51h2v1h1v2h-1v1h-2v-1h-1v-2h1zM360 45h2v1h1v2h-1v1h-2v-1h-1v-2h1zM368 47h2v2h-2zM357.5 61.5h3v3h-3zM357.5 60.5h3v3h-3zM381 60h2v1h1v2h-1v1h-2v-1h-1v-2h1zM345 50h2v2h-2zM375.5 64.5h3v3h-3zM356.5 55.5h3v3h-3zM354 53h2v1h1v2h-1v1h-2v-1h-1v-2h1zM372.5 62.5h3v3h-3zM368 45h2v1h1v2h-1v1h-2v-1h-1v-2h1zM340 56h2v1h1v2h-1v1h-2v-1h-1v-2h1zM358 56h2v1h1v2h-1v1h-2v-1h-1v-2h1zM354.5 49.5h3v3h-3zM353 42h2v1h1v2h-1v1h-2v-1h-1v-2h1zM346 53h2v1h1v2h-1v1h-2v-1h-1v-2h1zM389.5 54.5h3v3h-3zM351.5 62.5h3v3h-3zM342 57h2v1h1v2h-1v1h-2v-1h-1v-2h1zM355 55h2v2h-2zM369 59h2v2h-2zM380 54h2v1h1v2h-1v1h-2v-1h-1v-2h1zM367 60h2v2h-2zM364 56h2v2h-2z"/><path fill="#183a14" d="M370 50h2v1h1v2h-1v1h-2v-1h-1v-2h1zM360 60h2v1h1v2h-1v1h-2v-1h-1v-2h1zM362 58h2v2h-2zM374 60h2v1h1v2h-1v1h-2v-1h-1v-2h1zM363.5 49.5h3v3h-3zM360.5 59.5h3v3h-3zM366 63h2v2h-2zM382.5 59.5h3v3h-3zM366 54h2v1h1v2h-1v1h-2v-1h-1v-2h1zM375.5 62.5h3v3h-3zM367.5 47.5h3v3h-3zM363 62h2v1h1v2h-1v1h-2v-1h-1v-2h1zM361.5 52.5h3v3h-3zM380 53h2v2h-2zM362 49h2v2h-2zM380 55h2v2h-2zM355 58h2v1h1v2h-1v1h-2v-1h-1v-2h1zM357 49h2v1h1v2h-1v1h-2v-1h-1v-2h1zM372 61h2v1h1v2h-1v1h-2v-1h-1v-2h1zM370 64h2v2h-2zM361 53h2v1h1v2h-1v1h-2v-1h-1v-2h1z"/><path fill="#347221" d="M353 53h2v2h-2zM357.5 44.5h3v3h-3zM378 49h2v2h-2zM352 52h2v1h1v2h-1v1h-2v-1h-1v-2h1zM360.5 50.5h3v3h-3zM361 54h2v1h1v2h-1v1h-2v-1h-1v-2h1zM382.5 54.5h3v3h-3zM349.5 57.5h3v3h-3zM340 55h2v1h1v2h-1v1h-2v-1h-1v-2h1zM372 49h2v1h1v2h-1v1h-2v-1h-1v-2h1zM362 55h2v2h-2zM347.5 53.5h3v3h-3zM356 60h2v1h1v2h-1v1h-2v-1h-1v-2h1zM389.5 57.5h3v3h-3zM367.5 45.5h3v3h-3zM387 52h2v1h1v2h-1v1h-2v-1h-1v-2h1zM350 57h2v1h1v2h-1v1h-2v-1h-1v-2h1zM370 45h2v1h1v2h-1v1h-2v-1h-1v-2h1zM352 50h2v1h1v2h-1v1h-2v-1h-1v-2h1zM370.5 47.5h3v3h-3zM347.5 59.5h3v3h-3zM375 44h2v1h1v2h-1v1h-2v-1h-1v-2h1zM355 56h2v2h-2zM384 61h2v1h1v2h-1v1h-2v-1h-1v-2h1zM366.5 64.5h3v3h-3zM368 44h2v1h1v2h-1v1h-2v-1h-1v-2h1zM363 54h2v2h-2zM360 43h2v2h-2zM374 56h2v1h1v2h-1v1h-2v-1h-1v-2h1zM389 55h2v2h-2zM375 63h2v2h-2zM359 56h2v1h1v2h-1v1h-2v-1h-1v-2h1zM367 49h2v2h-2zM365 52h2v1h1v2h-1v1h-2v-1h-1v-2h1zM361 50h2v1h1v2h-1v1h-2v-1h-1v-2h1zM368 41h2v1h1v2h-1v1h-2v-1h-1v-2h1zM353 54h2v1h1v2h-1v1h-2v-1h-1v-2h1zM347 53h2v1h1v2h-1v1h-2v-1h-1v-2h1zM377 52h2v1h1v2h-1v1h-2v-1h-1v-2h1zM367.5 40.5h3v3h-3zM345.5 50.5h3v3h-3zM366 53h2v1h1v2h-1v1h-2v-1h-1v-2h1zM367 56h2v2h-2zM355 58h2v2h-2zM357.5 54.5h3v3h-3zM376 52h2v1h1v2h-1v1h-2v-1h-1v-2h1zM356.5 50.5h3v3h-3zM367.5 46.5h3v3h-3zM352 56h2v2h-2zM381.5 61.5h3v3h-3zM390 53h2v2h-2zM369.5 55.5h3v3h-3zM382 46h2v1h1v2h-1v1h-2v-1h-1v-2h1zM355 40h2v1h1v2h-1v1h-2v-1h-1v-2h1zM383.5 52.5h3v3h-3zM360 48h2v1h1v2h-1v1h-2v-1h-1v-2h1zM358.5 46.5h3v3h-3zM379.5 46.5h3v3h-3zM355 54h2v2h-2zM351.5 55.5h3v3h-3zM371 37h2v1h1v2h-1v1h-2v-1h-1v-2h1zM365.5 46.5h3v3h-3zM386 49h2v1h1v2h-1v1h-2v-1h-1v-2h1zM377.5 54.5h3v3h-3zM368 46h2v1h1v2h-1v1h-2v-1h-1v-2h1zM382 61h2v1h1v2h-1v1h-2v-1h-1v-2h1zM371 53h2v1h1v2h-1v1h-2v-1h-1v-2h1zM357 49h2v2h-2zM354 49h2v1h1v2h-1v1h-2v-1h-1v-2h1zM367 47h2v2h-2zM374 47h2v1h1v2h-1v1h-2v-1h-1v-2h1zM384 55h2v2h-2zM349 49h2v2h-2zM383 50h2v1h1v2h-1v1h-2v-1h-1v-2h1zM367.5 42.5h3v3h-3zM371.5 55.5h3v3h-3zM361.5 58.5h3v3h-3zM361 55h2v2h-2z"/><path fill="#4e8f28" d="M359 56h2v2h-2zM357 55h2v1h1v2h-1v1h-2v-1h-1v-2h1zM378 45h2v1h1v2h-1v1h-2v-1h-1v-2h1zM367.5 41.5h3v3h-3zM354 43h2v1h1v2h-1v1h-2v-1h-1v-2h1zM372 57h2v2h-2zM343 55h2v2h-2zM377.5 51.5h3v3h-3zM357 51h2v2h-2zM362 44h2v1h1v2h-1v1h-2v-1h-1v-2h1zM354 53h2v1h1v2h-1v1h-2v-1h-1v-2h1zM367 43h2v1h1v2h-1v1h-2v-1h-1v-2h1zM369 44h2v1h1v2h-1v1h-2v-1h-1v-2h1zM371 44h2v1h1v2h-1v1h-2v-1h-1v-2h1zM358 48h2v2h-2zM362.5 51.5h3v3h-3zM361.5 51.5h3v3h-3zM363 43h2v1h1v2h-1v1h-2v-1h-1v-2h1zM364.5 43.5h3v3h-3zM358 39h2v1h1v2h-1v1h-2v-1h-1v-2h1zM378 49h2v1h1v2h-1v1h-2v-1h-1v-2h1zM365 51h2v1h1v2h-1v1h-2v-1h-1v-2h1zM370.5 41.5h3v3h-3zM371 41h2v1h1v2h-1v1h-2v-1h-1v-2h1zM386 50h2v2h-2zM376 50h2v1h1v2h-1v1h-2v-1h-1v-2h1zM351 48h2v2h-2zM355.5 54.5h3v3h-3zM348 53h2v2h-2zM373 41h2v1h1v2h-1v1h-2v-1h-1v-2h1zM376.5 41.5h3v3h-3zM364 41h2v1h1v2h-1v1h-2v-1h-1v-2h1zM360 45h2v2h-2zM367 50h2v1h1v2h-1v1h-2v-1h-1v-2h1zM360.5 46.5h3v3h-3zM349 48h2v1h1v2h-1v1h-2v-1h-1v-2h1zM338.5 53.5h3v3h-3zM360 52h2v2h-2zM357.5 56.5h3v3h-3zM364.5 38.5h3v3h-3zM370 40h2v2h-2zM356 49h2v1h1v2h-1v1h-2v-1h-1v-2h1zM354 42h2v2h-2z"/><path fill="#78b03a" d="M344.5 50.5h3v3h-3zM349.5 52.5h3v3h-3zM369.5 49.5h3v3h-3zM371 44h2v2h-2zM372 50h2v2h-2zM379 52h2v2h-2zM360 52h2v2h-2zM361 41h2v1h1v2h-1v1h-2v-1h-1v-2h1zM349 48h2v1h1v2h-1v1h-2v-1h-1v-2h1zM388 50h2v1h1v2h-1v1h-2v-1h-1v-2h1zM370.5 40.5h3v3h-3zM368 45h2v1h1v2h-1v1h-2v-1h-1v-2h1zM359.5 41.5h3v3h-3zM358 48h2v2h-2zM355 53h2v2h-2zM369.5 41.5h3v3h-3zM376.5 42.5h3v3h-3z"/><path fill="#183a14" d="M351 64h2v1h1v2h-1v1h-2v-1h-1v-2h1zM376 66h2v1h1v2h-1v1h-2v-1h-1v-2h1zM347.5 64.5h3v3h-3zM365.5 65.5h3v3h-3zM382 66h2v1h1v2h-1v1h-2v-1h-1v-2h1zM382.5 65.5h3v3h-3zM362 64h2v1h1v2h-1v1h-2v-1h-1v-2h1zM367.5 66.5h3v3h-3zM382 64h2v1h1v2h-1v1h-2v-1h-1v-2h1zM381 66h2v1h1v2h-1v1h-2v-1h-1v-2h1zM359.5 67.5h3v3h-3zM364.5 64.5h3v3h-3zM365 66h2v1h1v2h-1v1h-2v-1h-1v-2h1zM350 68h2v1h1v2h-1v1h-2v-1h-1v-2h1zM370 68h2v1h1v2h-1v1h-2v-1h-1v-2h1zM370.5 65.5h3v3h-3zM382 66h2v1h1v2h-1v1h-2v-1h-1v-2h1zM376.5 64.5h3v3h-3z"/><polygon points="398,110 396,92 405,76 412,76 417,74 424.8,74 432,90 431,110" fill="#27501d"/><line x1="405" y1="110" x2="405.844" y2="69.3405" stroke="#5a3b22" stroke-width="1.6"/><line x1="411.12" y1="110" x2="412.559" y2="68.4134" stroke="#5a3b22" stroke-width="1.6"/><line x1="417.24" y1="110" x2="414.407" y2="70.9583" stroke="#5a3b22" stroke-width="1.6"/><line x1="423.36" y1="110" x2="425.29" y2="68.6837" stroke="#5a3b22" stroke-width="1.6"/><line x1="414" y1="78" x2="407" y2="68" stroke="#5a3b22" stroke-width="1.2"/><line x1="414" y1="76" x2="420" y2="66" stroke="#5a3b22" stroke-width="1.2"/><path fill="#3d7a27" d="M400 98.5h4v3h-4zM410.5 88.5h3v3h-3zM400 97.5h4v3h-4zM395.5 102.5h5v3h-5zM407.5 73h3v2h-3zM417 103.5h4v3h-4zM412.5 87h5v2h-5zM400.5 92h5v2h-5zM416 106.5h4v3h-4zM420.5 98h3v2h-3zM426 98h4v2h-4zM424.5 108h3v2h-3zM407.5 88h3v2h-3zM420.5 100.5h5v3h-5zM414.5 79h5v2h-5zM420.5 85h3v2h-3zM410.5 77.5h3v3h-3zM402.5 90h5v2h-5zM405.5 104h5v2h-5zM408.5 83h5v2h-5zM424 100h4v2h-4zM397 103h4v2h-4zM423 85h4v2h-4zM398.5 104h3v2h-3zM418.5 79.5h5v3h-5zM406.5 104h5v2h-5zM402 97.5h4v3h-4zM418.5 96.5h3v3h-3zM405.5 100.5h5v3h-5zM418.5 75.5h3v3h-3zM399 89h4v2h-4zM403 105h4v2h-4zM410.5 92h3v2h-3zM416.5 78h3v2h-3zM428.5 105h3v2h-3zM407.5 107h3v2h-3zM407.5 101.5h3v3h-3zM406.5 91h3v2h-3zM405.5 83.5h5v3h-5zM418.5 86.5h3v3h-3zM404 91h4v2h-4zM424.5 108.5h3v3h-3zM411.5 86h5v2h-5zM408 101.5h4v3h-4zM399.5 92h5v2h-5zM409.5 85.5h5v3h-5zM402 96.5h4v3h-4zM406 102.5h4v3h-4zM401 108.5h4v3h-4zM418.5 82.5h3v3h-3zM397.5 102h3v2h-3zM412.5 102.5h3v3h-3zM418.5 79.5h3v3h-3zM409.5 75.5h5v3h-5zM421.5 86h5v2h-5zM414 102h4v2h-4zM406 76.5h4v3h-4zM408.5 100.5h3v3h-3zM401.5 85.5h5v3h-5zM411.5 104h5v2h-5zM407 77.5h4v3h-4zM419.5 77.5h3v3h-3zM403.5 102h3v2h-3zM423 89.5h4v3h-4zM412 77.5h4v3h-4zM401 107.5h4v3h-4zM418.5 108h5v2h-5zM410 109h4v2h-4zM423.5 90.5h3v3h-3zM398.5 100.5h5v3h-5zM401.5 95.5h3v3h-3zM408.5 95h3v2h-3zM424.5 107h3v2h-3zM402.5 79.5h5v3h-5zM422.5 88.5h3v3h-3zM424.5 97.5h5v3h-5zM428.5 103.5h5v3h-5zM412.5 97h3v2h-3z"/><path fill="#55932e" d="M409.5 102h3v2h-3zM403.5 91h5v2h-5zM419 80.5h4v3h-4zM405.5 83h5v2h-5zM400 91h4v2h-4zM427 100.5h4v3h-4zM418.5 87.5h5v3h-5zM418.5 106h5v2h-5zM414 81.5h4v3h-4zM407.5 101.5h5v3h-5zM402.5 102h3v2h-3zM422 95h4v2h-4zM417.5 78.5h3v3h-3zM395.5 107h5v2h-5zM408.5 95.5h5v3h-5zM417.5 86h5v2h-5zM406.5 87h5v2h-5zM403.5 92h5v2h-5zM411.5 72h3v2h-3zM409.5 106h5v2h-5zM401 85h4v2h-4zM399 91.5h4v3h-4zM399.5 104h3v2h-3zM425 92h4v2h-4zM406 83.5h4v3h-4zM419 75.5h4v3h-4zM405 104.5h4v3h-4zM418.5 86h5v2h-5zM412.5 98h5v2h-5zM415.5 95h3v2h-3zM407 107.5h4v3h-4zM423.5 88.5h5v3h-5zM401.5 99h5v2h-5zM414.5 90.5h5v3h-5zM407 83.5h4v3h-4z"/><path fill="#2c5e1f" d="M407.5 99.5h3v3h-3zM395 103.5h4v3h-4zM411 108h4v2h-4zM416.5 102.5h3v3h-3zM406.5 71.5h3v3h-3zM423 96.5h4v3h-4zM405 77h4v2h-4zM402.5 83h3v2h-3zM408 80h4v2h-4zM424.5 88.5h3v3h-3zM420.5 91.5h3v3h-3zM418.5 98h5v2h-5zM411.5 95.5h3v3h-3zM408.5 92h5v2h-5zM423 90h4v2h-4zM415.5 104.5h5v3h-5zM401 95h4v2h-4zM425 106h4v2h-4zM411.5 76.5h3v3h-3zM426 94.5h4v3h-4zM401 102h4v2h-4zM410.5 85.5h3v3h-3zM415.5 82h3v2h-3zM396.5 102h5v2h-5zM407.5 94.5h5v3h-5zM418.5 86.5h5v3h-5zM415 94h4v2h-4zM407 79h4v2h-4zM430 107.5h4v3h-4zM407.5 94.5h3v3h-3zM405 97.5h4v3h-4zM410.5 93.5h3v3h-3zM402.5 84.5h3v3h-3zM401.5 102h5v2h-5zM409 102h4v2h-4zM418 72.5h4v3h-4zM403 79.5h4v3h-4zM418.5 98h3v2h-3zM403.5 107h5v2h-5zM417.5 105.5h5v3h-5zM419.5 107h5v2h-5zM421 104.5h4v3h-4zM427.5 106.5h3v3h-3zM407.5 77.5h3v3h-3zM405.5 85h3v2h-3zM416.5 107h5v2h-5zM403 90.5h4v3h-4zM408.5 80.5h5v3h-5zM415.5 93.5h5v3h-5zM415 79h4v2h-4zM408.5 84.5h5v3h-5zM423.5 100.5h5v3h-5zM406.5 105.5h5v3h-5zM413.5 107.5h5v3h-5zM402 99h4v2h-4zM419.5 78h3v2h-3zM413.5 93h3v2h-3zM400 97.5h4v3h-4zM409.5 98h3v2h-3zM415.5 79h3v2h-3zM408 73h4v2h-4zM410.5 78.5h3v3h-3zM418.5 99.5h3v3h-3zM414 73.5h4v3h-4zM409.5 105h3v2h-3zM396 108.5h4v3h-4zM426.5 101.5h5v3h-5zM414.5 97h5v2h-5zM406 93.5h4v3h-4zM402.5 99h3v2h-3zM406 90h4v2h-4zM408.5 99.5h3v3h-3zM414.5 95.5h3v3h-3zM406 87.5h4v3h-4zM414.5 90.5h3v3h-3zM406.5 78.5h3v3h-3zM415 72.5h4v3h-4zM411.5 94h3v2h-3zM421.5 89h5v2h-5zM424.5 101.5h3v3h-3zM396 105h4v2h-4z"/><path fill="#1f4519" d="M411 79h4v2h-4zM410.5 102.5h3v3h-3zM401.5 109h5v2h-5zM425.5 104.5h3v3h-3zM404.5 73h5v2h-5zM420.5 83.5h3v3h-3zM410.5 88.5h3v3h-3zM403.5 82.5h3v3h-3zM422.5 88.5h5v3h-5zM399.5 100h5v2h-5zM412 76.5h4v3h-4zM411 107.5h4v3h-4zM397.5 103.5h3v3h-3zM411.5 73.5h3v3h-3zM410.5 89.5h5v3h-5zM415.5 107h5v2h-5zM423 100.5h4v3h-4zM403 107h4v2h-4zM408.5 95.5h3v3h-3zM398 96.5h4v3h-4zM414.5 86.5h3v3h-3zM414 94.5h4v3h-4zM409.5 84.5h3v3h-3zM398.5 93.5h5v3h-5zM408.5 74h3v2h-3zM430 105.5h4v3h-4zM417 90.5h4v3h-4zM415.5 72h5v2h-5zM415 83.5h4v3h-4zM393.5 105.5h5v3h-5zM401.5 102.5h5v3h-5zM402.5 102h5v2h-5zM421 96.5h4v3h-4zM417 87.5h4v3h-4zM413 87.5h4v3h-4zM405 84.5h4v3h-4z"/><circle cx="423" cy="98" r="2" fill="#e2481c"/><rect x="422" y="96" width="1.5" height="1.5" fill="#ff8248"/><circle cx="408" cy="93" r="2" fill="#e2481c"/><rect x="407" y="91" width="1.5" height="1.5" fill="#ff8248"/><circle cx="411" cy="84" r="2" fill="#e2481c"/><rect x="410" y="82" width="1.5" height="1.5" fill="#ff8248"/><circle cx="417" cy="83" r="2" fill="#e2481c"/><rect x="416" y="81" width="1.5" height="1.5" fill="#ff8248"/><circle cx="406" cy="82" r="2" fill="#e2481c"/><rect x="405" y="80" width="1.5" height="1.5" fill="#ff8248"/><circle cx="414" cy="76" r="2" fill="#e2481c"/><rect x="413" y="74" width="1.5" height="1.5" fill="#ff8248"/><circle cx="425" cy="99" r="2" fill="#e2481c"/><rect x="424" y="97" width="1.5" height="1.5" fill="#ff8248"/><circle cx="421" cy="99" r="2" fill="#e2481c"/><rect x="420" y="97" width="1.5" height="1.5" fill="#ff8248"/><polygon points="412.1,64 431.9,64 427.5,77.8 427.5,103 433.5,110 409.5,110 416.5,103 416.5,77.8" fill="#3f2a1b"/><rect x="418" y="66" width="6.05" height="43" fill="#634529"/><rect x="419" y="70" width="2.42" height="36" fill="#80603a"/><line x1="417.5" y1="83.32" x2="395.6" y2="61" stroke="#3f2a1b" stroke-width="3.6"/><line x1="426.5" y1="82.4" x2="448.4" y2="62" stroke="#3f2a1b" stroke-width="3.6"/><line x1="417.5" y1="82.4" x2="396.7" y2="61" stroke="#634529" stroke-width="1.2"/><line x1="426.5" y1="81.48" x2="447.3" y2="62" stroke="#634529" stroke-width="1.2"/><line x1="418.7" y1="72" x2="407.7" y2="58" stroke="#3f2a1b" stroke-width="2.6"/><line x1="425.3" y1="72" x2="435.2" y2="58" stroke="#3f2a1b" stroke-width="2.6"/><line x1="395.6" y1="61" x2="390.1" y2="57" stroke="#3f2a1b" stroke-width="1.6"/><line x1="400" y1="65" x2="391.2" y2="67" stroke="#3f2a1b" stroke-width="1.3"/><line x1="404.4" y1="75.5" x2="396.7" y2="80.56" stroke="#3f2a1b" stroke-width="1.3"/><line x1="448.4" y1="62" x2="452.8" y2="57" stroke="#3f2a1b" stroke-width="1.6"/><line x1="439.6" y1="74.12" x2="446.2" y2="77.8" stroke="#3f2a1b" stroke-width="1.3"/><path fill="#25581b" d="M395.5 67.5h3v3h-3zM425.5 68.5h3v3h-3zM439 61h2v1h1v2h-1v1h-2v-1h-1v-2h1zM413.5 60.5h3v3h-3zM397 63h2v1h1v2h-1v1h-2v-1h-1v-2h1zM436.5 64.5h3v3h-3zM432 64h2v1h1v2h-1v1h-2v-1h-1v-2h1zM425 67h2v1h1v2h-1v1h-2v-1h-1v-2h1zM418 61h2v1h1v2h-1v1h-2v-1h-1v-2h1z"/><path fill="#1f4a18" d="M423 62h2v2h-2zM440.5 64.5h3v3h-3zM442.5 64.5h3v3h-3zM437 68h2v2h-2zM423 60h2v1h1v2h-1v1h-2v-1h-1v-2h1zM420 67h2v1h1v2h-1v1h-2v-1h-1v-2h1zM422 67h2v2h-2z"/><path fill="#183a14" d="M401.5 67.5h3v3h-3zM430.5 67.5h3v3h-3zM435 67h2v1h1v2h-1v1h-2v-1h-1v-2h1zM413.5 65.5h3v3h-3zM416 64h2v2h-2zM410 68h2v1h1v2h-1v1h-2v-1h-1v-2h1zM434.5 60.5h3v3h-3zM413 61h2v1h1v2h-1v1h-2v-1h-1v-2h1z"/><ellipse cx="421" cy="48.1" rx="18.82" ry="12.1" fill="#183a14"/><ellipse cx="407.5" cy="57.72" rx="15.04" ry="12.1" fill="#183a14"/><ellipse cx="434.5" cy="57.72" rx="15.04" ry="12.1" fill="#183a14"/><ellipse cx="421" cy="59.94" rx="22.6" ry="12.1" fill="#183a14"/><ellipse cx="414.52" cy="51.8" rx="16.12" ry="12.1" fill="#183a14"/><ellipse cx="427.48" cy="51.8" rx="16.12" ry="12.1" fill="#183a14"/><ellipse cx="421" cy="46.6" rx="17.32" ry="10.1" fill="#25581b"/><ellipse cx="407.5" cy="56.22" rx="13.54" ry="10.1" fill="#25581b"/><ellipse cx="434.5" cy="56.22" rx="13.54" ry="10.1" fill="#25581b"/><ellipse cx="421" cy="58.44" rx="21.1" ry="10.1" fill="#25581b"/><ellipse cx="414.52" cy="50.3" rx="14.62" ry="10.1" fill="#25581b"/><ellipse cx="427.48" cy="50.3" rx="14.62" ry="10.1" fill="#25581b"/><path fill="#25581b" d="M407.5 43.5h3v3h-3zM417 52h2v1h1v2h-1v1h-2v-1h-1v-2h1zM403 55h2v1h1v2h-1v1h-2v-1h-1v-2h1zM410 55h2v1h1v2h-1v1h-2v-1h-1v-2h1zM400 63h2v2h-2zM412 62h2v1h1v2h-1v1h-2v-1h-1v-2h1zM424.5 51.5h3v3h-3zM422.5 51.5h3v3h-3zM424 51h2v1h1v2h-1v1h-2v-1h-1v-2h1zM429 44h2v2h-2zM429 57h2v2h-2zM420 54h2v1h1v2h-1v1h-2v-1h-1v-2h1zM424.5 51.5h3v3h-3zM430.5 48.5h3v3h-3zM411 58h2v1h1v2h-1v1h-2v-1h-1v-2h1zM427.5 59.5h3v3h-3zM433.5 62.5h3v3h-3zM439 60h2v1h1v2h-1v1h-2v-1h-1v-2h1zM427 51h2v1h1v2h-1v1h-2v-1h-1v-2h1zM428.5 57.5h3v3h-3zM425.5 56.5h3v3h-3zM430.5 51.5h3v3h-3zM417 57h2v2h-2zM436.5 47.5h3v3h-3zM411 54h2v2h-2zM416.5 55.5h3v3h-3zM434.5 52.5h3v3h-3zM415.5 50.5h3v3h-3zM428 56h2v2h-2zM404.5 56.5h3v3h-3zM418 50h2v2h-2zM396 55h2v1h1v2h-1v1h-2v-1h-1v-2h1zM417 58h2v2h-2zM410.5 52.5h3v3h-3zM414 48h2v2h-2zM427.5 54.5h3v3h-3zM403 61h2v1h1v2h-1v1h-2v-1h-1v-2h1zM414 62h2v2h-2zM414 60h2v1h1v2h-1v1h-2v-1h-1v-2h1zM424 54h2v1h1v2h-1v1h-2v-1h-1v-2h1zM424.5 47.5h3v3h-3zM405.5 55.5h3v3h-3zM429 63h2v1h1v2h-1v1h-2v-1h-1v-2h1zM417.5 50.5h3v3h-3zM429 61h2v1h1v2h-1v1h-2v-1h-1v-2h1zM424 48h2v1h1v2h-1v1h-2v-1h-1v-2h1zM417 49h2v2h-2zM416.5 49.5h3v3h-3zM407 64h2v2h-2zM412.5 58.5h3v3h-3zM403.5 62.5h3v3h-3zM419 52h2v1h1v2h-1v1h-2v-1h-1v-2h1zM436 57h2v1h1v2h-1v1h-2v-1h-1v-2h1zM424 59h2v1h1v2h-1v1h-2v-1h-1v-2h1zM408 57h2v2h-2zM433 49h2v2h-2zM401 58h2v1h1v2h-1v1h-2v-1h-1v-2h1zM405 55h2v1h1v2h-1v1h-2v-1h-1v-2h1zM402 57h2v1h1v2h-1v1h-2v-1h-1v-2h1zM433 48h2v1h1v2h-1v1h-2v-1h-1v-2h1zM426 49h2v2h-2zM418.5 54.5h3v3h-3zM404 63h2v1h1v2h-1v1h-2v-1h-1v-2h1zM416 54h2v2h-2zM419.5 55.5h3v3h-3zM409 55h2v2h-2zM429.5 59.5h3v3h-3z"/><path fill="#183a14" d="M419 52h2v1h1v2h-1v1h-2v-1h-1v-2h1zM444.5 57.5h3v3h-3zM434 63h2v1h1v2h-1v1h-2v-1h-1v-2h1zM412 63h2v2h-2zM438 58h2v1h1v2h-1v1h-2v-1h-1v-2h1zM436 60h2v2h-2zM398.5 59.5h3v3h-3zM428.5 56.5h3v3h-3zM405.5 60.5h3v3h-3zM417 56h2v2h-2zM418.5 51.5h3v3h-3zM430 58h2v1h1v2h-1v1h-2v-1h-1v-2h1zM413 54h2v1h1v2h-1v1h-2v-1h-1v-2h1zM411 57h2v1h1v2h-1v1h-2v-1h-1v-2h1zM408.5 56.5h3v3h-3zM432 62h2v1h1v2h-1v1h-2v-1h-1v-2h1zM425 48h2v1h1v2h-1v1h-2v-1h-1v-2h1zM443 59h2v2h-2z"/><path fill="#347221" d="M423 50h2v2h-2zM414.5 47.5h3v3h-3zM427.5 40.5h3v3h-3zM398 51h2v2h-2zM420 47h2v2h-2zM430 56h2v1h1v2h-1v1h-2v-1h-1v-2h1zM426 61h2v2h-2zM416 51h2v2h-2zM416 44h2v2h-2zM420 58h2v1h1v2h-1v1h-2v-1h-1v-2h1zM431.5 47.5h3v3h-3zM413 52h2v2h-2zM415 54h2v2h-2zM437 46h2v1h1v2h-1v1h-2v-1h-1v-2h1zM430 63h2v1h1v2h-1v1h-2v-1h-1v-2h1zM410 53h2v1h1v2h-1v1h-2v-1h-1v-2h1zM409 61h2v1h1v2h-1v1h-2v-1h-1v-2h1zM410 53h2v1h1v2h-1v1h-2v-1h-1v-2h1zM408 52h2v2h-2zM418 53h2v2h-2zM425 46h2v2h-2zM425.5 50.5h3v3h-3zM424 48h2v2h-2zM425.5 50.5h3v3h-3zM400 50h2v1h1v2h-1v1h-2v-1h-1v-2h1zM429 44h2v2h-2zM412 58h2v2h-2zM417.5 47.5h3v3h-3zM422.5 49.5h3v3h-3zM410.5 59.5h3v3h-3zM433.5 46.5h3v3h-3zM425 56h2v2h-2zM401 46h2v1h1v2h-1v1h-2v-1h-1v-2h1zM396 53h2v2h-2zM409 46h2v2h-2zM426 64h2v1h1v2h-1v1h-2v-1h-1v-2h1zM431 53h2v2h-2zM443 57h2v2h-2zM410.5 55.5h3v3h-3zM412.5 39.5h3v3h-3zM435 61h2v1h1v2h-1v1h-2v-1h-1v-2h1zM407 53h2v2h-2zM402.5 56.5h3v3h-3zM411.5 47.5h3v3h-3zM416 48h2v2h-2zM419.5 54.5h3v3h-3zM420 54h2v1h1v2h-1v1h-2v-1h-1v-2h1zM429 56h2v2h-2zM413.5 48.5h3v3h-3zM430 58h2v2h-2zM415 54h2v1h1v2h-1v1h-2v-1h-1v-2h1zM429 52h2v1h1v2h-1v1h-2v-1h-1v-2h1zM409.5 62.5h3v3h-3zM436 61h2v1h1v2h-1v1h-2v-1h-1v-2h1zM430 56h2v2h-2zM444 58h2v1h1v2h-1v1h-2v-1h-1v-2h1zM431.5 46.5h3v3h-3zM429 57h2v1h1v2h-1v1h-2v-1h-1v-2h1zM437 48h2v1h1v2h-1v1h-2v-1h-1v-2h1zM434 44h2v1h1v2h-1v1h-2v-1h-1v-2h1zM414 65h2v1h1v2h-1v1h-2v-1h-1v-2h1zM427.5 45.5h3v3h-3zM426.5 44.5h3v3h-3zM409.5 47.5h3v3h-3zM428 48h2v1h1v2h-1v1h-2v-1h-1v-2h1zM443.5 56.5h3v3h-3z"/><path fill="#4e8f28" d="M409.5 44.5h3v3h-3zM426.5 46.5h3v3h-3zM402 48h2v2h-2zM404 48h2v2h-2zM440 53h2v1h1v2h-1v1h-2v-1h-1v-2h1zM408 49h2v1h1v2h-1v1h-2v-1h-1v-2h1zM439 51h2v2h-2zM423 54h2v1h1v2h-1v1h-2v-1h-1v-2h1zM418.5 44.5h3v3h-3zM423.5 51.5h3v3h-3zM426.5 45.5h3v3h-3zM417 41h2v2h-2zM418 45h2v2h-2zM419 42h2v2h-2zM406 48h2v2h-2zM418 44h2v1h1v2h-1v1h-2v-1h-1v-2h1zM417 38h2v2h-2zM403.5 51.5h3v3h-3zM401.5 48.5h3v3h-3zM412 48h2v2h-2zM407 49h2v2h-2zM409.5 50.5h3v3h-3zM415 55h2v2h-2zM422 37h2v2h-2zM423 52h2v2h-2zM419.5 40.5h3v3h-3zM426 48h2v1h1v2h-1v1h-2v-1h-1v-2h1zM405.5 45.5h3v3h-3zM438 46h2v1h1v2h-1v1h-2v-1h-1v-2h1zM431.5 39.5h3v3h-3zM427.5 41.5h3v3h-3zM398 55h2v2h-2zM431 57h2v1h1v2h-1v1h-2v-1h-1v-2h1zM431.5 48.5h3v3h-3zM404.5 50.5h3v3h-3zM403 48h2v1h1v2h-1v1h-2v-1h-1v-2h1zM431.5 56.5h3v3h-3zM406 49h2v2h-2zM430 46h2v1h1v2h-1v1h-2v-1h-1v-2h1zM443 58h2v2h-2zM403 52h2v2h-2zM407 47h2v2h-2zM405 58h2v1h1v2h-1v1h-2v-1h-1v-2h1zM433.5 47.5h3v3h-3zM430 40h2v1h1v2h-1v1h-2v-1h-1v-2h1zM420 46h2v2h-2zM409 46h2v2h-2zM413 53h2v1h1v2h-1v1h-2v-1h-1v-2h1zM403 51h2v2h-2z"/><path fill="#78b03a" d="M431 51h2v1h1v2h-1v1h-2v-1h-1v-2h1zM423.5 51.5h3v3h-3zM407.5 43.5h3v3h-3zM408 41h2v1h1v2h-1v1h-2v-1h-1v-2h1zM406.5 48.5h3v3h-3zM418 44h2v2h-2zM421.5 44.5h3v3h-3zM430 47h2v1h1v2h-1v1h-2v-1h-1v-2h1zM427 41h2v2h-2zM407 43h2v2h-2zM424.5 48.5h3v3h-3zM421 42h2v2h-2zM425 50h2v1h1v2h-1v1h-2v-1h-1v-2h1zM418 51h2v1h1v2h-1v1h-2v-1h-1v-2h1zM416 41h2v1h1v2h-1v1h-2v-1h-1v-2h1zM421 45h2v2h-2zM412 50h2v2h-2zM428.5 49.5h3v3h-3zM409 46h2v1h1v2h-1v1h-2v-1h-1v-2h1zM442 50h2v2h-2zM429.5 45.5h3v3h-3zM422.5 43.5h3v3h-3z"/><path fill="#183a14" d="M413.5 65.5h3v3h-3zM412 64h2v1h1v2h-1v1h-2v-1h-1v-2h1zM440 65h2v1h1v2h-1v1h-2v-1h-1v-2h1zM439.5 65.5h3v3h-3zM426 65h2v1h1v2h-1v1h-2v-1h-1v-2h1zM405 64h2v1h1v2h-1v1h-2v-1h-1v-2h1zM409.5 67.5h3v3h-3zM421.5 64.5h3v3h-3zM432 65h2v1h1v2h-1v1h-2v-1h-1v-2h1zM408.5 67.5h3v3h-3zM440 67h2v1h1v2h-1v1h-2v-1h-1v-2h1zM418 65h2v1h1v2h-1v1h-2v-1h-1v-2h1zM408.5 67.5h3v3h-3zM435 64h2v1h1v2h-1v1h-2v-1h-1v-2h1zM411.5 68.5h3v3h-3zM410 67h2v1h1v2h-1v1h-2v-1h-1v-2h1zM402.5 67.5h3v3h-3zM405 65h2v1h1v2h-1v1h-2v-1h-1v-2h1z"/><polygon points="520.1,64 539.9,64 535.5,77.8 535.5,103 541.5,110 517.5,110 524.5,103 524.5,77.8" fill="#3f2a1b"/><rect x="526" y="66" width="6.05" height="43" fill="#634529"/><rect x="527" y="70" width="2.42" height="36" fill="#80603a"/><line x1="525.5" y1="83.32" x2="503.6" y2="61" stroke="#3f2a1b" stroke-width="3.6"/><line x1="534.5" y1="82.4" x2="556.4" y2="62" stroke="#3f2a1b" stroke-width="3.6"/><line x1="525.5" y1="82.4" x2="504.7" y2="61" stroke="#634529" stroke-width="1.2"/><line x1="534.5" y1="81.48" x2="555.3" y2="62" stroke="#634529" stroke-width="1.2"/><line x1="526.7" y1="72" x2="515.7" y2="58" stroke="#3f2a1b" stroke-width="2.6"/><line x1="533.3" y1="72" x2="543.2" y2="58" stroke="#3f2a1b" stroke-width="2.6"/><line x1="503.6" y1="61" x2="498.1" y2="57" stroke="#3f2a1b" stroke-width="1.6"/><line x1="508" y1="65" x2="499.2" y2="67" stroke="#3f2a1b" stroke-width="1.3"/><line x1="512.4" y1="75.5" x2="504.7" y2="80.56" stroke="#3f2a1b" stroke-width="1.3"/><line x1="556.4" y1="62" x2="560.8" y2="57" stroke="#3f2a1b" stroke-width="1.6"/><line x1="547.6" y1="74.12" x2="554.2" y2="77.8" stroke="#3f2a1b" stroke-width="1.3"/><path fill="#1f4a18" d="M512 63h2v2h-2zM541.5 68.5h3v3h-3zM539.5 64.5h3v3h-3zM506 65h2v2h-2zM519 69h2v1h1v2h-1v1h-2v-1h-1v-2h1zM551 67h2v1h1v2h-1v1h-2v-1h-1v-2h1zM512 70h2v2h-2zM551 63h2v1h1v2h-1v1h-2v-1h-1v-2h1zM510.5 63.5h3v3h-3zM515 66h2v1h1v2h-1v1h-2v-1h-1v-2h1zM533 64h2v1h1v2h-1v1h-2v-1h-1v-2h1z"/><path fill="#183a14" d="M523 69h2v2h-2zM521.5 66.5h3v3h-3zM507.5 67.5h3v3h-3zM512 67h2v2h-2zM553 61h2v1h1v2h-1v1h-2v-1h-1v-2h1z"/><path fill="#25581b" d="M516 61h2v1h1v2h-1v1h-2v-1h-1v-2h1zM537.5 63.5h3v3h-3zM514 63h2v2h-2zM549 64h2v1h1v2h-1v1h-2v-1h-1v-2h1zM541.5 62.5h3v3h-3zM507.5 68.5h3v3h-3zM533 66h2v2h-2zM509 67h2v1h1v2h-1v1h-2v-1h-1v-2h1z"/><ellipse cx="530" cy="48.1" rx="22.78" ry="12.1" fill="#183a14"/><ellipse cx="513.5" cy="57.72" rx="18.16" ry="12.1" fill="#183a14"/><ellipse cx="546.5" cy="57.72" rx="18.16" ry="12.1" fill="#183a14"/><ellipse cx="530" cy="59.94" rx="27.4" ry="12.1" fill="#183a14"/><ellipse cx="522.08" cy="51.8" rx="19.48" ry="12.1" fill="#183a14"/><ellipse cx="537.92" cy="51.8" rx="19.48" ry="12.1" fill="#183a14"/><ellipse cx="530" cy="46.6" rx="21.28" ry="10.1" fill="#25581b"/><ellipse cx="513.5" cy="56.22" rx="16.66" ry="10.1" fill="#25581b"/><ellipse cx="546.5" cy="56.22" rx="16.66" ry="10.1" fill="#25581b"/><ellipse cx="530" cy="58.44" rx="25.9" ry="10.1" fill="#25581b"/><ellipse cx="522.08" cy="50.3" rx="17.98" ry="10.1" fill="#25581b"/><ellipse cx="537.92" cy="50.3" rx="17.98" ry="10.1" fill="#25581b"/><path fill="#25581b" d="M534.5 60.5h3v3h-3zM535 52h2v2h-2zM509 61h2v1h1v2h-1v1h-2v-1h-1v-2h1zM536 61h2v2h-2zM534 56h2v2h-2zM541.5 51.5h3v3h-3zM515 65h2v2h-2zM522.5 54.5h3v3h-3zM506 61h2v2h-2zM533.5 58.5h3v3h-3zM521.5 57.5h3v3h-3zM529 62h2v2h-2zM540 54h2v1h1v2h-1v1h-2v-1h-1v-2h1zM549.5 60.5h3v3h-3zM542.5 56.5h3v3h-3zM527 50h2v1h1v2h-1v1h-2v-1h-1v-2h1zM511 57h2v2h-2zM531 51h2v2h-2zM545 53h2v1h1v2h-1v1h-2v-1h-1v-2h1zM514.5 62.5h3v3h-3zM516 52h2v1h1v2h-1v1h-2v-1h-1v-2h1zM539.5 55.5h3v3h-3zM517 63h2v1h1v2h-1v1h-2v-1h-1v-2h1zM519.5 54.5h3v3h-3zM499 59h2v2h-2zM527.5 43.5h3v3h-3zM513 58h2v2h-2zM510.5 62.5h3v3h-3zM548.5 55.5h3v3h-3zM519 47h2v2h-2zM527.5 56.5h3v3h-3zM521 65h2v2h-2zM517 45h2v2h-2zM508 49h2v1h1v2h-1v1h-2v-1h-1v-2h1zM529 50h2v1h1v2h-1v1h-2v-1h-1v-2h1zM534 47h2v1h1v2h-1v1h-2v-1h-1v-2h1zM512 49h2v1h1v2h-1v1h-2v-1h-1v-2h1zM537 61h2v1h1v2h-1v1h-2v-1h-1v-2h1zM508 54h2v2h-2zM525.5 59.5h3v3h-3zM538.5 59.5h3v3h-3zM504 54h2v2h-2zM547.5 58.5h3v3h-3zM500.5 56.5h3v3h-3zM516 64h2v2h-2zM531 56h2v1h1v2h-1v1h-2v-1h-1v-2h1zM521.5 58.5h3v3h-3zM550.5 52.5h3v3h-3zM549 53h2v1h1v2h-1v1h-2v-1h-1v-2h1zM520.5 58.5h3v3h-3zM533 53h2v1h1v2h-1v1h-2v-1h-1v-2h1zM527 52h2v2h-2zM524.5 59.5h3v3h-3zM523.5 57.5h3v3h-3zM545 57h2v2h-2zM508.5 62.5h3v3h-3zM525.5 57.5h3v3h-3zM519 55h2v2h-2zM538.5 54.5h3v3h-3zM516 55h2v1h1v2h-1v1h-2v-1h-1v-2h1zM510.5 59.5h3v3h-3zM507 63h2v1h1v2h-1v1h-2v-1h-1v-2h1zM541 62h2v1h1v2h-1v1h-2v-1h-1v-2h1zM507.5 59.5h3v3h-3zM554.5 57.5h3v3h-3zM513 60h2v2h-2zM538 61h2v1h1v2h-1v1h-2v-1h-1v-2h1zM549 62h2v2h-2zM505 64h2v2h-2zM517.5 47.5h3v3h-3zM502 53h2v1h1v2h-1v1h-2v-1h-1v-2h1z"/><path fill="#183a14" d="M549 60h2v1h1v2h-1v1h-2v-1h-1v-2h1zM515 51h2v2h-2zM540 52h2v1h1v2h-1v1h-2v-1h-1v-2h1zM532.5 52.5h3v3h-3zM512 61h2v1h1v2h-1v1h-2v-1h-1v-2h1zM503 61h2v1h1v2h-1v1h-2v-1h-1v-2h1zM522.5 65.5h3v3h-3zM524 54h2v1h1v2h-1v1h-2v-1h-1v-2h1zM518 61h2v2h-2zM551 60h2v2h-2zM532 55h2v1h1v2h-1v1h-2v-1h-1v-2h1zM540.5 61.5h3v3h-3zM519.5 56.5h3v3h-3zM533.5 60.5h3v3h-3zM540.5 65.5h3v3h-3zM555.5 60.5h3v3h-3zM551 62h2v1h1v2h-1v1h-2v-1h-1v-2h1zM528 65h2v2h-2zM545.5 48.5h3v3h-3zM546.5 60.5h3v3h-3zM532 59h2v1h1v2h-1v1h-2v-1h-1v-2h1zM541.5 52.5h3v3h-3zM514 61h2v1h1v2h-1v1h-2v-1h-1v-2h1zM541 53h2v2h-2zM522.5 63.5h3v3h-3zM516.5 61.5h3v3h-3z"/><path fill="#347221" d="M517 45h2v2h-2zM533.5 42.5h3v3h-3zM523 52h2v2h-2zM551 48h2v1h1v2h-1v1h-2v-1h-1v-2h1zM534 53h2v2h-2zM539 46h2v1h1v2h-1v1h-2v-1h-1v-2h1zM539.5 58.5h3v3h-3zM526 47h2v1h1v2h-1v1h-2v-1h-1v-2h1zM545 46h2v1h1v2h-1v1h-2v-1h-1v-2h1zM544.5 56.5h3v3h-3zM546 59h2v2h-2zM549 57h2v2h-2zM523 55h2v1h1v2h-1v1h-2v-1h-1v-2h1zM516.5 58.5h3v3h-3zM525.5 52.5h3v3h-3zM511.5 47.5h3v3h-3zM545 42h2v2h-2zM542 52h2v1h1v2h-1v1h-2v-1h-1v-2h1zM523 43h2v1h1v2h-1v1h-2v-1h-1v-2h1zM540.5 56.5h3v3h-3zM550 63h2v2h-2zM539 43h2v1h1v2h-1v1h-2v-1h-1v-2h1zM521 59h2v2h-2zM518 55h2v2h-2zM512.5 43.5h3v3h-3zM549 48h2v1h1v2h-1v1h-2v-1h-1v-2h1zM535 51h2v2h-2zM517 50h2v1h1v2h-1v1h-2v-1h-1v-2h1zM537 41h2v2h-2zM514 61h2v1h1v2h-1v1h-2v-1h-1v-2h1zM548 55h2v1h1v2h-1v1h-2v-1h-1v-2h1zM531 38h2v1h1v2h-1v1h-2v-1h-1v-2h1zM515.5 40.5h3v3h-3zM536 40h2v1h1v2h-1v1h-2v-1h-1v-2h1zM534.5 54.5h3v3h-3zM535 55h2v1h1v2h-1v1h-2v-1h-1v-2h1zM518.5 41.5h3v3h-3zM550.5 52.5h3v3h-3zM552 52h2v1h1v2h-1v1h-2v-1h-1v-2h1zM556.5 50.5h3v3h-3zM546.5 55.5h3v3h-3zM544 44h2v2h-2zM524 57h2v2h-2zM528 46h2v1h1v2h-1v1h-2v-1h-1v-2h1zM551 54h2v1h1v2h-1v1h-2v-1h-1v-2h1zM544 62h2v2h-2zM526 51h2v1h1v2h-1v1h-2v-1h-1v-2h1zM516.5 61.5h3v3h-3zM536 51h2v2h-2zM528 48h2v1h1v2h-1v1h-2v-1h-1v-2h1zM534.5 47.5h3v3h-3zM523 47h2v1h1v2h-1v1h-2v-1h-1v-2h1zM512.5 51.5h3v3h-3zM522 46h2v1h1v2h-1v1h-2v-1h-1v-2h1zM513 57h2v1h1v2h-1v1h-2v-1h-1v-2h1zM525.5 37.5h3v3h-3zM523 55h2v1h1v2h-1v1h-2v-1h-1v-2h1zM539.5 56.5h3v3h-3zM545.5 54.5h3v3h-3zM518 58h2v2h-2zM548.5 54.5h3v3h-3zM522.5 56.5h3v3h-3zM516 58h2v1h1v2h-1v1h-2v-1h-1v-2h1zM516.5 47.5h3v3h-3zM543 59h2v1h1v2h-1v1h-2v-1h-1v-2h1zM548 65h2v2h-2zM525 61h2v1h1v2h-1v1h-2v-1h-1v-2h1zM524 58h2v2h-2zM511 44h2v1h1v2h-1v1h-2v-1h-1v-2h1zM539 55h2v1h1v2h-1v1h-2v-1h-1v-2h1zM541 47h2v2h-2zM527 45h2v1h1v2h-1v1h-2v-1h-1v-2h1zM522 61h2v1h1v2h-1v1h-2v-1h-1v-2h1zM514.5 53.5h3v3h-3zM527.5 54.5h3v3h-3zM547 42h2v1h1v2h-1v1h-2v-1h-1v-2h1zM505.5 63.5h3v3h-3zM532.5 42.5h3v3h-3zM544 49h2v1h1v2h-1v1h-2v-1h-1v-2h1zM526 53h2v1h1v2h-1v1h-2v-1h-1v-2h1zM553.5 53.5h3v3h-3zM499.5 60.5h3v3h-3zM525 58h2v1h1v2h-1v1h-2v-1h-1v-2h1zM546 57h2v1h1v2h-1v1h-2v-1h-1v-2h1zM527 44h2v2h-2zM517.5 58.5h3v3h-3zM519 56h2v1h1v2h-1v1h-2v-1h-1v-2h1zM514 54h2v1h1v2h-1v1h-2v-1h-1v-2h1zM523.5 66.5h3v3h-3zM546.5 46.5h3v3h-3z"/><path fill="#4e8f28" d="M517 53h2v2h-2zM532 58h2v2h-2zM551 51h2v2h-2zM516 45h2v1h1v2h-1v1h-2v-1h-1v-2h1zM525 51h2v1h1v2h-1v1h-2v-1h-1v-2h1zM547 43h2v2h-2zM535.5 47.5h3v3h-3zM531 52h2v1h1v2h-1v1h-2v-1h-1v-2h1zM534 45h2v2h-2zM513.5 45.5h3v3h-3zM509 47h2v2h-2zM543 55h2v1h1v2h-1v1h-2v-1h-1v-2h1zM504 54h2v1h1v2h-1v1h-2v-1h-1v-2h1zM510.5 46.5h3v3h-3zM546 43h2v2h-2zM558 57h2v2h-2zM536.5 40.5h3v3h-3zM541.5 53.5h3v3h-3zM517 39h2v2h-2zM504.5 50.5h3v3h-3zM516 50h2v1h1v2h-1v1h-2v-1h-1v-2h1zM523.5 56.5h3v3h-3zM520 53h2v2h-2zM530 44h2v2h-2zM521 54h2v2h-2zM521 42h2v1h1v2h-1v1h-2v-1h-1v-2h1zM520 41h2v1h1v2h-1v1h-2v-1h-1v-2h1zM530 38h2v1h1v2h-1v1h-2v-1h-1v-2h1zM511 53h2v2h-2zM524.5 44.5h3v3h-3zM520 56h2v1h1v2h-1v1h-2v-1h-1v-2h1zM530 42h2v1h1v2h-1v1h-2v-1h-1v-2h1zM508.5 48.5h3v3h-3zM529 40h2v1h1v2h-1v1h-2v-1h-1v-2h1zM531 55h2v2h-2zM522 42h2v1h1v2h-1v1h-2v-1h-1v-2h1zM543.5 52.5h3v3h-3zM530 43h2v2h-2zM528 52h2v1h1v2h-1v1h-2v-1h-1v-2h1zM552 47h2v2h-2zM532.5 52.5h3v3h-3zM530 51h2v1h1v2h-1v1h-2v-1h-1v-2h1zM544 43h2v2h-2zM525.5 42.5h3v3h-3zM532.5 43.5h3v3h-3zM517.5 52.5h3v3h-3zM525 47h2v2h-2zM525 48h2v2h-2zM514 47h2v1h1v2h-1v1h-2v-1h-1v-2h1zM532 54h2v1h1v2h-1v1h-2v-1h-1v-2h1zM520.5 46.5h3v3h-3zM505 47h2v1h1v2h-1v1h-2v-1h-1v-2h1zM542 46h2v1h1v2h-1v1h-2v-1h-1v-2h1zM546 44h2v1h1v2h-1v1h-2v-1h-1v-2h1zM540.5 47.5h3v3h-3zM549 48h2v1h1v2h-1v1h-2v-1h-1v-2h1zM512.5 53.5h3v3h-3zM508.5 57.5h3v3h-3zM514 50h2v2h-2zM547.5 50.5h3v3h-3zM541 51h2v1h1v2h-1v1h-2v-1h-1v-2h1zM522.5 53.5h3v3h-3z"/><path fill="#78b03a" d="M528 46h2v2h-2zM533 39h2v2h-2zM516 51h2v2h-2zM512 54h2v2h-2zM521 50h2v2h-2zM536 49h2v1h1v2h-1v1h-2v-1h-1v-2h1zM514 41h2v1h1v2h-1v1h-2v-1h-1v-2h1zM521 39h2v1h1v2h-1v1h-2v-1h-1v-2h1zM502 51h2v2h-2zM531.5 50.5h3v3h-3zM536 43h2v1h1v2h-1v1h-2v-1h-1v-2h1zM516 42h2v2h-2zM514 47h2v2h-2zM536 38h2v1h1v2h-1v1h-2v-1h-1v-2h1zM526 44h2v1h1v2h-1v1h-2v-1h-1v-2h1zM531 50h2v2h-2zM523 50h2v2h-2zM529.5 38.5h3v3h-3zM549 48h2v2h-2zM536 40h2v1h1v2h-1v1h-2v-1h-1v-2h1zM556 49h2v1h1v2h-1v1h-2v-1h-1v-2h1zM542 49h2v1h1v2h-1v1h-2v-1h-1v-2h1z"/><path fill="#183a14" d="M524.5 68.5h3v3h-3zM553 65h2v1h1v2h-1v1h-2v-1h-1v-2h1zM552.5 67.5h3v3h-3zM539 67h2v1h1v2h-1v1h-2v-1h-1v-2h1zM514.5 65.5h3v3h-3zM515.5 68.5h3v3h-3zM512 67h2v1h1v2h-1v1h-2v-1h-1v-2h1zM504.5 68.5h3v3h-3zM521 67h2v1h1v2h-1v1h-2v-1h-1v-2h1zM523 68h2v1h1v2h-1v1h-2v-1h-1v-2h1zM508.5 66.5h3v3h-3zM505.5 66.5h3v3h-3zM541 65h2v1h1v2h-1v1h-2v-1h-1v-2h1zM508 64h2v1h1v2h-1v1h-2v-1h-1v-2h1zM522.5 66.5h3v3h-3zM545 66h2v1h1v2h-1v1h-2v-1h-1v-2h1zM538 67h2v1h1v2h-1v1h-2v-1h-1v-2h1zM504.5 66.5h3v3h-3zM505.5 65.5h3v3h-3zM538 67h2v1h1v2h-1v1h-2v-1h-1v-2h1zM506.5 65.5h3v3h-3zM541.5 66.5h3v3h-3z"/><polygon points="564,77 592,77 598,86 560,86" fill="#3a4e4b"/><rect x="565" y="77" width="26" height="2" fill="#7f9a96"/><rect x="565" y="80" width="28" height="6" fill="#2a3230"/><rect x="572.54" y="79" width="2.5" height="7" fill="#63807d"/><rect x="585.08" y="79" width="2.5" height="7" fill="#63807d"/><polygon points="548,88 551,86 610,86 612,90 612,101 548,101" fill="#63807d"/><rect x="548" y="86" width="62" height="2" fill="#7f9a96"/><rect x="548" y="96" width="64" height="5" fill="#3a4e4b"/><rect x="550.868" y="96.6812" width="3" height="1" fill="#63807d"/><rect x="600.071" y="97.0992" width="3" height="1" fill="#7f9a96"/><rect x="552.763" y="93.1568" width="3" height="1" fill="#63807d"/><rect x="606.345" y="88.3044" width="2" height="1" fill="#63807d"/><rect x="572.743" y="95.5468" width="4" height="2" fill="#63807d"/><rect x="588.253" y="92.7847" width="3" height="1" fill="#3a4e4b"/><rect x="604.605" y="92.4164" width="4" height="1" fill="#3a4e4b"/><rect x="580.587" y="92.5599" width="2" height="1" fill="#3a4e4b"/><rect x="598.154" y="96.8075" width="4" height="1" fill="#7f9a96"/><rect x="560.403" y="95.4948" width="3" height="2" fill="#3a4e4b"/><rect x="552.4" y="97.8373" width="4" height="1" fill="#3a4e4b"/><rect x="555.965" y="89.8451" width="2" height="1" fill="#3a4e4b"/><rect x="561.108" y="90.43" width="4" height="2" fill="#63807d"/><rect x="562.216" y="91.8226" width="4" height="1" fill="#3a4e4b"/><circle cx="561" cy="102" r="6" fill="#2b2620"/><circle cx="561" cy="102" r="3.2" fill="#5a4a38"/><circle cx="561" cy="102" r="1.4" fill="#2b2620"/><circle cx="598" cy="102" r="6" fill="#2b2620"/><circle cx="598" cy="102" r="3.2" fill="#5a4a38"/><circle cx="598" cy="102" r="1.4" fill="#2b2620"/><rect x="609" y="91" width="3" height="3" fill="#d8d0a0"/><polygon points="492,77 522,77 528,86 488,86" fill="#6e471c"/><rect x="493" y="77" width="28" height="2" fill="#c99a42"/><rect x="493" y="80" width="30" height="6" fill="#3a3428"/><rect x="501.2" y="79" width="2.5" height="7" fill="#b07c2e"/><rect x="514.4" y="79" width="2.5" height="7" fill="#b07c2e"/><polygon points="485,88 488,86 546,86 548,90 548,101 485,101" fill="#b07c2e"/><rect x="485" y="86" width="61" height="2" fill="#c99a42"/><rect x="485" y="96" width="63" height="5" fill="#6e471c"/><rect x="524.775" y="97.5144" width="2" height="2" fill="#6e471c"/><rect x="490.273" y="90.7182" width="2" height="1" fill="#6e471c"/><rect x="536.367" y="94.382" width="4" height="2" fill="#b07c2e"/><rect x="526.935" y="91.1871" width="4" height="1" fill="#6e471c"/><rect x="539.448" y="95.4605" width="3" height="1" fill="#b07c2e"/><rect x="539.807" y="88.3374" width="4" height="2" fill="#b07c2e"/><rect x="498.392" y="93.9579" width="2" height="1" fill="#b07c2e"/><rect x="515.185" y="92.5975" width="3" height="1" fill="#6e471c"/><rect x="525.181" y="90.1193" width="3" height="1" fill="#c99a42"/><rect x="502.84" y="89.2107" width="3" height="2" fill="#c99a42"/><rect x="539.659" y="95.9682" width="3" height="2" fill="#b07c2e"/><rect x="505.652" y="90.6496" width="2" height="1" fill="#c99a42"/><rect x="519.294" y="91.4507" width="3" height="1" fill="#c99a42"/><rect x="497.997" y="97.3347" width="2" height="2" fill="#6e471c"/><circle cx="498" cy="102" r="6" fill="#2b2620"/><circle cx="498" cy="102" r="3.2" fill="#5a4a38"/><circle cx="498" cy="102" r="1.4" fill="#2b2620"/><circle cx="534" cy="102" r="6" fill="#2b2620"/><circle cx="534" cy="102" r="3.2" fill="#5a4a38"/><circle cx="534" cy="102" r="1.4" fill="#2b2620"/><rect x="545" y="91" width="3" height="3" fill="#d8d0a0"/><polygon points="447,77 480,77 486,86 443,86" fill="#69431a"/><rect x="448" y="77" width="31" height="2" fill="#c4943e"/><rect x="448" y="80" width="33" height="6" fill="#3a3428"/><rect x="457.19" y="79" width="2.5" height="7" fill="#a9762c"/><rect x="471.38" y="79" width="2.5" height="7" fill="#a9762c"/><polygon points="424,88 427,86 486,86 488,90 488,101 424,101" fill="#a9762c"/><rect x="424" y="86" width="62" height="2" fill="#c4943e"/><rect x="424" y="96" width="64" height="5" fill="#69431a"/><rect x="449.124" y="93.5822" width="4" height="1" fill="#69431a"/><rect x="467.526" y="96.9673" width="4" height="2" fill="#69431a"/><rect x="428.546" y="97.7687" width="2" height="2" fill="#a9762c"/><rect x="477.274" y="97.0635" width="3" height="2" fill="#a9762c"/><rect x="426.696" y="93.7625" width="4" height="2" fill="#a9762c"/><rect x="440.125" y="93.2227" width="3" height="1" fill="#c4943e"/><rect x="451.556" y="97.4764" width="3" height="2" fill="#c4943e"/><rect x="469.119" y="97.9787" width="3" height="2" fill="#a9762c"/><rect x="442.018" y="96.2905" width="2" height="1" fill="#69431a"/><rect x="437.117" y="94.1017" width="2" height="2" fill="#c4943e"/><rect x="469.986" y="90.9116" width="4" height="2" fill="#69431a"/><rect x="476.632" y="92.0977" width="3" height="2" fill="#69431a"/><rect x="472.823" y="95.5569" width="2" height="2" fill="#a9762c"/><rect x="471.634" y="94.8424" width="3" height="1" fill="#69431a"/><circle cx="437" cy="102" r="6" fill="#2b2620"/><circle cx="437" cy="102" r="3.2" fill="#5a4a38"/><circle cx="437" cy="102" r="1.4" fill="#2b2620"/><circle cx="474" cy="102" r="6" fill="#2b2620"/><circle cx="474" cy="102" r="3.2" fill="#5a4a38"/><circle cx="474" cy="102" r="1.4" fill="#2b2620"/><rect x="485" y="91" width="3" height="3" fill="#d8d0a0"/><rect x="430" y="108" width="3" height="2" fill="#f4f4f0"/><rect x="439" y="108" width="4" height="2" fill="#f4f4f0"/><rect x="448" y="108" width="3" height="2" fill="#f4f4f0"/><rect x="457" y="108" width="4" height="2" fill="#f4f4f0"/><rect x="466" y="108" width="3" height="2" fill="#f4f4f0"/><rect x="475" y="108" width="5" height="2" fill="#f4f4f0"/><rect x="484" y="108" width="5" height="2" fill="#f4f4f0"/><rect x="493" y="108" width="3" height="2" fill="#f4f4f0"/><rect x="502" y="108" width="5" height="2" fill="#f4f4f0"/><rect x="511" y="108" width="5" height="2" fill="#f4f4f0"/><rect x="520" y="108" width="5" height="2" fill="#f4f4f0"/><rect x="529" y="108" width="4" height="2" fill="#f4f4f0"/><rect x="538" y="108" width="3" height="2" fill="#f4f4f0"/><rect x="547" y="108" width="3" height="2" fill="#f4f4f0"/><polygon points="650.6,78 661.4,78 659,85.8 659,97 665,104 646,104 653,97 653,85.8" fill="#3f2a1b"/><rect x="654.5" y="80" width="3.3" height="23" fill="#634529"/><rect x="655.5" y="84" width="1.32" height="16" fill="#80603a"/><line x1="654" y1="88.92" x2="641.6" y2="75" stroke="#3f2a1b" stroke-width="3.6"/><line x1="658" y1="88.4" x2="670.4" y2="76" stroke="#3f2a1b" stroke-width="3.6"/><line x1="654" y1="88.4" x2="642.2" y2="75" stroke="#634529" stroke-width="1.2"/><line x1="658" y1="87.88" x2="669.8" y2="76" stroke="#634529" stroke-width="1.2"/><line x1="654.2" y1="86" x2="648.2" y2="72" stroke="#3f2a1b" stroke-width="2.6"/><line x1="657.8" y1="86" x2="663.2" y2="72" stroke="#3f2a1b" stroke-width="2.6"/><line x1="641.6" y1="75" x2="638.6" y2="71" stroke="#3f2a1b" stroke-width="1.6"/><line x1="644" y1="79" x2="639.2" y2="81" stroke="#3f2a1b" stroke-width="1.3"/><line x1="646.4" y1="84.5" x2="642.2" y2="87.36" stroke="#3f2a1b" stroke-width="1.3"/><line x1="670.4" y1="76" x2="672.8" y2="71" stroke="#3f2a1b" stroke-width="1.6"/><line x1="665.6" y1="83.72" x2="669.2" y2="85.8" stroke="#3f2a1b" stroke-width="1.3"/><path fill="#1f4a18" d="M641.5 79.5h3v3h-3zM669 80h2v1h1v2h-1v1h-2v-1h-1v-2h1zM645.5 82.5h3v3h-3zM644.5 77.5h3v3h-3zM645.5 78.5h3v3h-3zM652 80h2v1h1v2h-1v1h-2v-1h-1v-2h1z"/><path fill="#25581b" d="M665.5 76.5h3v3h-3zM644 78h2v1h1v2h-1v1h-2v-1h-1v-2h1z"/><path fill="#183a14" d="M644 80h2v2h-2zM663 79h2v2h-2zM656 80h2v2h-2zM656.5 74.5h3v3h-3zM662 77h2v2h-2z"/><ellipse cx="656" cy="68" rx="12.88" ry="10" fill="#183a14"/><ellipse cx="647" cy="75.8" rx="10.36" ry="10" fill="#183a14"/><ellipse cx="665" cy="75.8" rx="10.36" ry="10" fill="#183a14"/><ellipse cx="656" cy="77.6" rx="15.4" ry="10" fill="#183a14"/><ellipse cx="651.68" cy="71" rx="11.08" ry="10" fill="#183a14"/><ellipse cx="660.32" cy="71" rx="11.08" ry="10" fill="#183a14"/><ellipse cx="656" cy="66.5" rx="11.38" ry="8" fill="#25581b"/><ellipse cx="647" cy="74.3" rx="8.86" ry="8" fill="#25581b"/><ellipse cx="665" cy="74.3" rx="8.86" ry="8" fill="#25581b"/><ellipse cx="656" cy="76.1" rx="13.9" ry="8" fill="#25581b"/><ellipse cx="651.68" cy="69.5" rx="9.58" ry="8" fill="#25581b"/><ellipse cx="660.32" cy="69.5" rx="9.58" ry="8" fill="#25581b"/><path fill="#25581b" d="M644.5 79.5h3v3h-3zM650 71h2v1h1v2h-1v1h-2v-1h-1v-2h1zM652 77h2v1h1v2h-1v1h-2v-1h-1v-2h1zM661.5 74.5h3v3h-3zM660 79h2v1h1v2h-1v1h-2v-1h-1v-2h1zM654 71h2v2h-2zM658 74h2v2h-2zM648 74h2v2h-2zM645 78h2v2h-2zM649 71h2v2h-2zM663.5 74.5h3v3h-3zM650.5 76.5h3v3h-3zM667 75h2v2h-2zM651 73h2v2h-2zM648 73h2v2h-2zM647 80h2v1h1v2h-1v1h-2v-1h-1v-2h1zM671 75h2v1h1v2h-1v1h-2v-1h-1v-2h1zM662.5 75.5h3v3h-3zM664 74h2v2h-2zM664.5 75.5h3v3h-3zM655 74h2v2h-2zM667.5 71.5h3v3h-3zM654 70h2v1h1v2h-1v1h-2v-1h-1v-2h1zM646.5 77.5h3v3h-3zM660.5 73.5h3v3h-3zM669 79h2v1h1v2h-1v1h-2v-1h-1v-2h1zM647 76h2v2h-2zM638 72h2v2h-2zM650 76h2v1h1v2h-1v1h-2v-1h-1v-2h1zM642 76h2v2h-2zM650 68h2v2h-2zM651 81h2v2h-2zM642 78h2v1h1v2h-1v1h-2v-1h-1v-2h1zM647.5 79.5h3v3h-3zM662.5 80.5h3v3h-3zM657.5 70.5h3v3h-3z"/><path fill="#183a14" d="M645 73h2v2h-2zM656.5 71.5h3v3h-3zM653 72h2v1h1v2h-1v1h-2v-1h-1v-2h1zM662.5 77.5h3v3h-3zM658.5 74.5h3v3h-3zM658.5 69.5h3v3h-3zM663 78h2v2h-2zM666.5 70.5h3v3h-3zM661 80h2v1h1v2h-1v1h-2v-1h-1v-2h1z"/><path fill="#347221" d="M642 68h2v1h1v2h-1v1h-2v-1h-1v-2h1zM650 73h2v2h-2zM643 73h2v1h1v2h-1v1h-2v-1h-1v-2h1zM666 66h2v1h1v2h-1v1h-2v-1h-1v-2h1zM664.5 70.5h3v3h-3zM647.5 65.5h3v3h-3zM644 72h2v1h1v2h-1v1h-2v-1h-1v-2h1zM663 80h2v1h1v2h-1v1h-2v-1h-1v-2h1zM663 71h2v1h1v2h-1v1h-2v-1h-1v-2h1zM645 69h2v2h-2zM660 68h2v1h1v2h-1v1h-2v-1h-1v-2h1zM640 76h2v2h-2zM649.5 67.5h3v3h-3zM656 69h2v1h1v2h-1v1h-2v-1h-1v-2h1zM647.5 75.5h3v3h-3zM660.5 74.5h3v3h-3zM659 74h2v1h1v2h-1v1h-2v-1h-1v-2h1zM646.5 70.5h3v3h-3zM667.5 74.5h3v3h-3zM649 72h2v2h-2zM659 70h2v1h1v2h-1v1h-2v-1h-1v-2h1zM666.5 79.5h3v3h-3zM665.5 69.5h3v3h-3zM663 76h2v2h-2zM651.5 74.5h3v3h-3zM655 73h2v2h-2zM661.5 63.5h3v3h-3zM663.5 77.5h3v3h-3zM642 72h2v1h1v2h-1v1h-2v-1h-1v-2h1zM645 72h2v1h1v2h-1v1h-2v-1h-1v-2h1zM666 67h2v1h1v2h-1v1h-2v-1h-1v-2h1zM647.5 63.5h3v3h-3zM670.5 76.5h3v3h-3zM660.5 73.5h3v3h-3zM644 69h2v1h1v2h-1v1h-2v-1h-1v-2h1zM656.5 65.5h3v3h-3zM667 66h2v1h1v2h-1v1h-2v-1h-1v-2h1zM655 62h2v2h-2zM652.5 65.5h3v3h-3z"/><path fill="#4e8f28" d="M660 75h2v2h-2zM650.5 58.5h3v3h-3zM648 70h2v2h-2zM656 63h2v1h1v2h-1v1h-2v-1h-1v-2h1zM652 73h2v2h-2zM652 65h2v2h-2zM647 64h2v2h-2zM657.5 74.5h3v3h-3zM657 66h2v2h-2zM657.5 70.5h3v3h-3zM652.5 66.5h3v3h-3zM648 68h2v2h-2zM665 69h2v1h1v2h-1v1h-2v-1h-1v-2h1zM657.5 64.5h3v3h-3zM665.5 69.5h3v3h-3zM663 67h2v1h1v2h-1v1h-2v-1h-1v-2h1zM660.5 74.5h3v3h-3zM646 72h2v1h1v2h-1v1h-2v-1h-1v-2h1zM663 63h2v2h-2zM647 69h2v1h1v2h-1v1h-2v-1h-1v-2h1zM651.5 58.5h3v3h-3zM649 68h2v1h1v2h-1v1h-2v-1h-1v-2h1zM659.5 59.5h3v3h-3zM658.5 62.5h3v3h-3zM643.5 67.5h3v3h-3zM646.5 69.5h3v3h-3zM664.5 73.5h3v3h-3z"/><path fill="#78b03a" d="M658 70h2v2h-2zM665 67h2v1h1v2h-1v1h-2v-1h-1v-2h1zM652 61h2v2h-2zM645 66h2v1h1v2h-1v1h-2v-1h-1v-2h1zM667 66h2v2h-2zM647.5 69.5h3v3h-3zM653.5 62.5h3v3h-3zM665.5 68.5h3v3h-3zM663 63h2v1h1v2h-1v1h-2v-1h-1v-2h1z"/><path fill="#183a14" d="M645.5 81.5h3v3h-3zM648 82h2v1h1v2h-1v1h-2v-1h-1v-2h1zM668 80h2v1h1v2h-1v1h-2v-1h-1v-2h1zM645 81h2v1h1v2h-1v1h-2v-1h-1v-2h1zM660 83h2v1h1v2h-1v1h-2v-1h-1v-2h1zM649.5 83.5h3v3h-3zM640.5 83.5h3v3h-3zM665 82h2v1h1v2h-1v1h-2v-1h-1v-2h1zM663 82h2v1h1v2h-1v1h-2v-1h-1v-2h1zM653 81h2v1h1v2h-1v1h-2v-1h-1v-2h1zM644.5 81.5h3v3h-3zM653.5 81.5h3v3h-3z"/><rect x="712" y="107" width="18" height="3" fill="#2b3723"/><path fill="#2b3723" d="M712 104h2v4h-2zM718 103h1v5h-1zM721 107h2v1h-2z"/><path fill="#34432b" d="M713 103h2v5h-2zM716 106h2v2h-2zM725 107h2v1h-2zM729 106h1v2h-1zM722.742 108h2v1h-2zM716.561 108h2v1h-2zM723.286 108h2v1h-2zM716.778 108h2v1h-2z"/><path fill="#3e5230" d="M722 105h1v3h-1zM724.604 108h2v1h-2z"/><path fill="#4a5a3a" d="M728 102h1v6h-1zM729.525 108h2v1h-2zM726.391 108h2v1h-2zM717.059 108h2v1h-2zM729.381 108h2v1h-2z"/><rect x="712" y="92" width="258" height="4" fill="#8a4439"/><rect x="712" y="102" width="258" height="3" fill="#7a3b32"/><rect x="715" y="87" width="5" height="23" fill="#93493d"/><rect x="719" y="88" width="1" height="22" fill="#6e342c"/><rect x="725.8" y="87" width="5" height="23" fill="#93493d"/><rect x="729.8" y="88" width="1" height="22" fill="#6e342c"/><rect x="736.6" y="87" width="5" height="23" fill="#93493d"/><rect x="740.6" y="88" width="1" height="22" fill="#6e342c"/><rect x="747.4" y="87" width="5" height="23" fill="#93493d"/><rect x="751.4" y="88" width="1" height="22" fill="#6e342c"/><rect x="758.2" y="87" width="5" height="23" fill="#93493d"/><rect x="762.2" y="88" width="1" height="22" fill="#6e342c"/><rect x="769" y="87" width="5" height="23" fill="#93493d"/><rect x="773" y="88" width="1" height="22" fill="#6e342c"/><rect x="779.8" y="87" width="5" height="23" fill="#93493d"/><rect x="783.8" y="88" width="1" height="22" fill="#6e342c"/><rect x="790.6" y="87" width="5" height="23" fill="#93493d"/><rect x="794.6" y="88" width="1" height="22" fill="#6e342c"/><rect x="801.4" y="87" width="5" height="23" fill="#93493d"/><rect x="805.4" y="88" width="1" height="22" fill="#6e342c"/><rect x="812.2" y="87" width="5" height="23" fill="#93493d"/><rect x="816.2" y="88" width="1" height="22" fill="#6e342c"/><rect x="823" y="87" width="5" height="23" fill="#93493d"/><rect x="827" y="88" width="1" height="22" fill="#6e342c"/><rect x="833.8" y="87" width="5" height="23" fill="#93493d"/><rect x="837.8" y="88" width="1" height="22" fill="#6e342c"/><rect x="844.6" y="87" width="5" height="23" fill="#93493d"/><rect x="848.6" y="88" width="1" height="22" fill="#6e342c"/><rect x="855.4" y="87" width="5" height="23" fill="#93493d"/><rect x="859.4" y="88" width="1" height="22" fill="#6e342c"/><rect x="866.2" y="87" width="5" height="23" fill="#93493d"/><rect x="870.2" y="88" width="1" height="22" fill="#6e342c"/><rect x="877" y="87" width="5" height="23" fill="#93493d"/><rect x="881" y="88" width="1" height="22" fill="#6e342c"/><rect x="887.8" y="87" width="5" height="23" fill="#93493d"/><rect x="891.8" y="88" width="1" height="22" fill="#6e342c"/><rect x="898.6" y="87" width="5" height="23" fill="#93493d"/><rect x="902.6" y="88" width="1" height="22" fill="#6e342c"/><rect x="909.4" y="87" width="5" height="23" fill="#93493d"/><rect x="913.4" y="88" width="1" height="22" fill="#6e342c"/><rect x="920.2" y="87" width="5" height="23" fill="#93493d"/><rect x="924.2" y="88" width="1" height="22" fill="#6e342c"/><rect x="931" y="87" width="5" height="23" fill="#93493d"/><rect x="935" y="88" width="1" height="22" fill="#6e342c"/><rect x="941.8" y="87" width="5" height="23" fill="#93493d"/><rect x="945.8" y="88" width="1" height="22" fill="#6e342c"/><rect x="952.6" y="87" width="5" height="23" fill="#93493d"/><rect x="956.6" y="88" width="1" height="22" fill="#6e342c"/><rect x="963.4" y="87" width="5" height="23" fill="#93493d"/><rect x="967.4" y="88" width="1" height="22" fill="#6e342c"/><rect x="781" y="94" width="5" height="16" fill="#4a3a34"/><rect x="792" y="94" width="5" height="16" fill="#4a3a34"/><rect x="803" y="94" width="5" height="16" fill="#4a3a34"/><rect x="814" y="94" width="5" height="16" fill="#4a3a34"/><rect x="825" y="94" width="5" height="16" fill="#4a3a34"/><ellipse cx="722" cy="97" rx="10" ry="8.5" fill="#2f6a22"/><ellipse cx="722" cy="96" rx="8" ry="6.5" fill="#5c9c36"/><polygon points="730.874,98.5462 733.874,101.546 730.874,104.546 727.874,101.546" fill="#2f6a22"/><polygon points="715.563,92.7469 718.563,95.7469 715.563,98.7469 712.563,95.7469" fill="#9ccf62"/><polygon points="730.066,95.25 733.066,98.25 730.066,101.25 727.066,98.25" fill="#2f6a22"/><polygon points="724.513,85.0434 727.513,88.0434 724.513,91.0434 721.513,88.0434" fill="#9ccf62"/><polygon points="715.676,89.0603 718.676,92.0603 715.676,95.0603 712.676,92.0603" fill="#6aa83c"/><polygon points="717.408,91.4228 720.408,94.4228 717.408,97.4228 714.408,94.4228" fill="#6aa83c"/><polygon points="717.086,85.7175 720.086,88.7175 717.086,91.7175 714.086,88.7175" fill="#2f6a22"/><polygon points="722.332,90.8876 725.332,93.8876 722.332,96.8876 719.332,93.8876" fill="#6aa83c"/><polygon points="725.154,98.8872 728.154,101.887 725.154,104.887 722.154,101.887" fill="#2f6a22"/><polygon points="716.509,86.9123 719.509,89.9123 716.509,92.9123 713.509,89.9123" fill="#7ab648"/><polygon points="724.193,98.186 727.193,101.186 724.193,104.186 721.193,101.186" fill="#2f6a22"/><polygon points="726.501,91.6416 729.501,94.6416 726.501,97.6416 723.501,94.6416" fill="#7ab648"/><polygon points="729.324,86.0402 732.324,89.0402 729.324,92.0402 726.324,89.0402" fill="#2f6a22"/><polygon points="719.289,86.7323 722.289,89.7323 719.289,92.7323 716.289,89.7323" fill="#2f6a22"/><polygon points="713.66,93.1738 716.66,96.1738 713.66,99.1738 710.66,96.1738" fill="#6aa83c"/><polygon points="723.073,87.2775 726.073,90.2775 723.073,93.2775 720.073,90.2775" fill="#6aa83c"/><rect x="719" y="105" width="6" height="5" fill="#e0801e"/><rect x="721" y="105" width="2" height="3" fill="#f4a840"/><ellipse cx="743" cy="97" rx="10" ry="8.5" fill="#2f6a22"/><ellipse cx="743" cy="96" rx="8" ry="6.5" fill="#5c9c36"/><polygon points="741.798,95.4434 744.798,98.4434 741.798,101.443 738.798,98.4434" fill="#2f6a22"/><polygon points="750.604,92.5481 753.604,95.5481 750.604,98.5481 747.604,95.5481" fill="#9ccf62"/><polygon points="748.458,95.5887 751.458,98.5887 748.458,101.589 745.458,98.5887" fill="#2f6a22"/><polygon points="752.215,97.9799 755.215,100.98 752.215,103.98 749.215,100.98" fill="#2f6a22"/><polygon points="745.736,100.751 748.736,103.751 745.736,106.751 742.736,103.751" fill="#9ccf62"/><polygon points="744.046,99.4117 747.046,102.412 744.046,105.412 741.046,102.412" fill="#6aa83c"/><polygon points="738.691,88.2978 741.691,91.2978 738.691,94.2978 735.691,91.2978" fill="#9ccf62"/><polygon points="736.571,94.872 739.571,97.872 736.571,100.872 733.571,97.872" fill="#6aa83c"/><polygon points="736.043,91.7121 739.043,94.7121 736.043,97.7121 733.043,94.7121" fill="#2f6a22"/><polygon points="749.509,90.4746 752.509,93.4746 749.509,96.4746 746.509,93.4746" fill="#7ab648"/><polygon points="746.285,95.781 749.285,98.781 746.285,101.781 743.285,98.781" fill="#6aa83c"/><polygon points="738.422,92.0512 741.422,95.0512 738.422,98.0512 735.422,95.0512" fill="#7ab648"/><polygon points="736.237,90.4122 739.237,93.4122 736.237,96.4122 733.237,93.4122" fill="#2f6a22"/><polygon points="750.289,87.3428 753.289,90.3428 750.289,93.3428 747.289,90.3428" fill="#9ccf62"/><polygon points="748.577,95.7473 751.577,98.7473 748.577,101.747 745.577,98.7473" fill="#2f6a22"/><polygon points="739.399,86.1346 742.399,89.1346 739.399,92.1346 736.399,89.1346" fill="#2f6a22"/><rect x="740" y="105" width="6" height="5" fill="#e0801e"/><rect x="742" y="105" width="2" height="3" fill="#f4a840"/><ellipse cx="764" cy="97" rx="10" ry="8.5" fill="#2f6a22"/><ellipse cx="764" cy="96" rx="8" ry="6.5" fill="#5c9c36"/><polygon points="764.253,98.3532 767.253,101.353 764.253,104.353 761.253,101.353" fill="#2f6a22"/><polygon points="756.793,86.022 759.793,89.022 756.793,92.022 753.793,89.022" fill="#9ccf62"/><polygon points="762.685,85.7386 765.685,88.7386 762.685,91.7386 759.685,88.7386" fill="#9ccf62"/><polygon points="764.157,94.2838 767.157,97.2838 764.157,100.284 761.157,97.2838" fill="#2f6a22"/><polygon points="767.944,92.0663 770.944,95.0663 767.944,98.0663 764.944,95.0663" fill="#2f6a22"/><polygon points="771.731,86.5928 774.731,89.5928 771.731,92.5928 768.731,89.5928" fill="#6aa83c"/><polygon points="757.988,88.8895 760.988,91.8895 757.988,94.8895 754.988,91.8895" fill="#9ccf62"/><polygon points="758.608,94.5276 761.608,97.5276 758.608,100.528 755.608,97.5276" fill="#9ccf62"/><polygon points="754.831,87.3717 757.831,90.3717 754.831,93.3717 751.831,90.3717" fill="#7ab648"/><polygon points="766.391,90.767 769.391,93.767 766.391,96.767 763.391,93.767" fill="#9ccf62"/><polygon points="754.094,91.8118 757.094,94.8118 754.094,97.8118 751.094,94.8118" fill="#7ab648"/><polygon points="765.386,96.226 768.386,99.226 765.386,102.226 762.386,99.226" fill="#9ccf62"/><polygon points="773.754,88.8544 776.754,91.8544 773.754,94.8544 770.754,91.8544" fill="#2f6a22"/><polygon points="765.583,95.05 768.583,98.05 765.583,101.05 762.583,98.05" fill="#9ccf62"/><polygon points="760.159,95.5055 763.159,98.5055 760.159,101.506 757.159,98.5055" fill="#9ccf62"/><polygon points="773.702,91.1791 776.702,94.1791 773.702,97.1791 770.702,94.1791" fill="#7ab648"/><rect x="761" y="105" width="6" height="5" fill="#e0801e"/><rect x="763" y="105" width="2" height="3" fill="#f4a840"/><polygon points="758.6,80 769.4,80 767,84.2 767,87 773,94 754,94 761,87 761,84.2" fill="#3f2a1b"/><rect x="762.5" y="82" width="3.3" height="11" fill="#634529"/><rect x="763.5" y="86" width="1.32" height="4" fill="#80603a"/><line x1="762" y1="85.88" x2="749.6" y2="77" stroke="#3f2a1b" stroke-width="3.6"/><line x1="766" y1="85.6" x2="778.4" y2="78" stroke="#3f2a1b" stroke-width="3.6"/><line x1="762" y1="85.6" x2="750.2" y2="77" stroke="#634529" stroke-width="1.2"/><line x1="766" y1="85.32" x2="777.8" y2="78" stroke="#634529" stroke-width="1.2"/><line x1="762.2" y1="88" x2="756.2" y2="74" stroke="#3f2a1b" stroke-width="2.6"/><line x1="765.8" y1="88" x2="771.2" y2="74" stroke="#3f2a1b" stroke-width="2.6"/><line x1="749.6" y1="77" x2="746.6" y2="73" stroke="#3f2a1b" stroke-width="1.6"/><line x1="752" y1="81" x2="747.2" y2="83" stroke="#3f2a1b" stroke-width="1.3"/><line x1="754.4" y1="83.5" x2="750.2" y2="85.04" stroke="#3f2a1b" stroke-width="1.3"/><line x1="778.4" y1="78" x2="780.8" y2="73" stroke="#3f2a1b" stroke-width="1.6"/><line x1="773.6" y1="83.08" x2="777.2" y2="84.2" stroke="#3f2a1b" stroke-width="1.3"/><path fill="#25581b" d="M753 82h2v2h-2zM763 79h2v2h-2zM771.5 80.5h3v3h-3zM776.5 82.5h3v3h-3z"/><path fill="#1f4a18" d="M771 82h2v2h-2zM766 80h2v1h1v2h-1v1h-2v-1h-1v-2h1zM771 84h2v1h1v2h-1v1h-2v-1h-1v-2h1zM773.5 84.5h3v3h-3zM761 77h2v1h1v2h-1v1h-2v-1h-1v-2h1z"/><path fill="#183a14" d="M777 81h2v2h-2zM772 79h2v1h1v2h-1v1h-2v-1h-1v-2h1zM770 83h2v2h-2zM761 81h2v1h1v2h-1v1h-2v-1h-1v-2h1z"/><polygon points="792.6,80 803.4,80 801,84.2 801,87 807,94 788,94 795,87 795,84.2" fill="#3f2a1b"/><rect x="796.5" y="82" width="3.3" height="11" fill="#634529"/><rect x="797.5" y="86" width="1.32" height="4" fill="#80603a"/><line x1="796" y1="85.88" x2="783.6" y2="77" stroke="#3f2a1b" stroke-width="3.6"/><line x1="800" y1="85.6" x2="812.4" y2="78" stroke="#3f2a1b" stroke-width="3.6"/><line x1="796" y1="85.6" x2="784.2" y2="77" stroke="#634529" stroke-width="1.2"/><line x1="800" y1="85.32" x2="811.8" y2="78" stroke="#634529" stroke-width="1.2"/><line x1="796.2" y1="88" x2="790.2" y2="74" stroke="#3f2a1b" stroke-width="2.6"/><line x1="799.8" y1="88" x2="805.2" y2="74" stroke="#3f2a1b" stroke-width="2.6"/><line x1="783.6" y1="77" x2="780.6" y2="73" stroke="#3f2a1b" stroke-width="1.6"/><line x1="786" y1="81" x2="781.2" y2="83" stroke="#3f2a1b" stroke-width="1.3"/><line x1="788.4" y1="83.5" x2="784.2" y2="85.04" stroke="#3f2a1b" stroke-width="1.3"/><line x1="812.4" y1="78" x2="814.8" y2="73" stroke="#3f2a1b" stroke-width="1.6"/><line x1="807.6" y1="83.08" x2="811.2" y2="84.2" stroke="#3f2a1b" stroke-width="1.3"/><path fill="#1f4a18" d="M802 83h2v2h-2zM786.5 81.5h3v3h-3zM811 77h2v1h1v2h-1v1h-2v-1h-1v-2h1zM796.5 81.5h3v3h-3zM809 84h2v1h1v2h-1v1h-2v-1h-1v-2h1zM800 84h2v2h-2zM805 82h2v1h1v2h-1v1h-2v-1h-1v-2h1zM811 85h2v1h1v2h-1v1h-2v-1h-1v-2h1zM808 78h2v1h1v2h-1v1h-2v-1h-1v-2h1z"/><path fill="#183a14" d="M783 84h2v1h1v2h-1v1h-2v-1h-1v-2h1zM806 81h2v2h-2zM791 82h2v1h1v2h-1v1h-2v-1h-1v-2h1z"/><path fill="#25581b" d="M804 79h2v1h1v2h-1v1h-2v-1h-1v-2h1z"/><ellipse cx="766" cy="68.7" rx="12.88" ry="9.7" fill="#183a14"/><ellipse cx="757" cy="76.24" rx="10.36" ry="9.7" fill="#183a14"/><ellipse cx="775" cy="76.24" rx="10.36" ry="9.7" fill="#183a14"/><ellipse cx="766" cy="77.98" rx="15.4" ry="9.7" fill="#183a14"/><ellipse cx="761.68" cy="71.6" rx="11.08" ry="9.7" fill="#183a14"/><ellipse cx="770.32" cy="71.6" rx="11.08" ry="9.7" fill="#183a14"/><ellipse cx="766" cy="67.2" rx="11.38" ry="7.7" fill="#25581b"/><ellipse cx="757" cy="74.74" rx="8.86" ry="7.7" fill="#25581b"/><ellipse cx="775" cy="74.74" rx="8.86" ry="7.7" fill="#25581b"/><ellipse cx="766" cy="76.48" rx="13.9" ry="7.7" fill="#25581b"/><ellipse cx="761.68" cy="70.1" rx="9.58" ry="7.7" fill="#25581b"/><ellipse cx="770.32" cy="70.1" rx="9.58" ry="7.7" fill="#25581b"/><path fill="#25581b" d="M773 73h2v1h1v2h-1v1h-2v-1h-1v-2h1zM769 77h2v2h-2zM766.5 71.5h3v3h-3zM760.5 65.5h3v3h-3zM753 77h2v2h-2zM750 77h2v1h1v2h-1v1h-2v-1h-1v-2h1zM762 67h2v1h1v2h-1v1h-2v-1h-1v-2h1zM774 71h2v2h-2zM768.5 74.5h3v3h-3zM753.5 66.5h3v3h-3zM761 78h2v2h-2zM752.5 74.5h3v3h-3zM767.5 67.5h3v3h-3zM776.5 79.5h3v3h-3zM772 80h2v2h-2zM773.5 67.5h3v3h-3zM749.5 75.5h3v3h-3zM766.5 74.5h3v3h-3zM761.5 81.5h3v3h-3zM779 74h2v2h-2zM770 76h2v1h1v2h-1v1h-2v-1h-1v-2h1zM759 75h2v1h1v2h-1v1h-2v-1h-1v-2h1zM758.5 77.5h3v3h-3zM771.5 79.5h3v3h-3zM766.5 73.5h3v3h-3zM755.5 67.5h3v3h-3zM774 81h2v2h-2zM769 71h2v2h-2zM762 81h2v1h1v2h-1v1h-2v-1h-1v-2h1zM771 72h2v1h1v2h-1v1h-2v-1h-1v-2h1zM764.5 79.5h3v3h-3zM769 74h2v1h1v2h-1v1h-2v-1h-1v-2h1z"/><path fill="#183a14" d="M776.5 75.5h3v3h-3zM758 79h2v2h-2zM765 72h2v2h-2zM764 71h2v1h1v2h-1v1h-2v-1h-1v-2h1zM776 80h2v2h-2zM758 70h2v2h-2zM756.5 73.5h3v3h-3zM765 72h2v2h-2z"/><path fill="#347221" d="M761 65h2v2h-2zM764 66h2v1h1v2h-1v1h-2v-1h-1v-2h1zM776 75h2v1h1v2h-1v1h-2v-1h-1v-2h1zM760.5 75.5h3v3h-3zM767 64h2v2h-2zM767 66h2v1h1v2h-1v1h-2v-1h-1v-2h1zM763 74h2v1h1v2h-1v1h-2v-1h-1v-2h1zM774.5 66.5h3v3h-3zM765.5 68.5h3v3h-3zM763 75h2v1h1v2h-1v1h-2v-1h-1v-2h1zM760.5 75.5h3v3h-3zM761 74h2v1h1v2h-1v1h-2v-1h-1v-2h1zM761.5 72.5h3v3h-3zM753 73h2v1h1v2h-1v1h-2v-1h-1v-2h1zM772 78h2v2h-2zM765 69h2v2h-2zM768 71h2v2h-2zM763.5 62.5h3v3h-3zM757 79h2v1h1v2h-1v1h-2v-1h-1v-2h1zM757.5 75.5h3v3h-3zM749 73h2v2h-2zM755.5 74.5h3v3h-3zM755 80h2v1h1v2h-1v1h-2v-1h-1v-2h1zM770 74h2v1h1v2h-1v1h-2v-1h-1v-2h1zM763 67h2v2h-2zM779.5 70.5h3v3h-3zM777.5 68.5h3v3h-3zM771 76h2v2h-2zM771 72h2v2h-2zM772.5 76.5h3v3h-3zM768 68h2v2h-2zM767 71h2v1h1v2h-1v1h-2v-1h-1v-2h1zM763 74h2v2h-2zM775 67h2v1h1v2h-1v1h-2v-1h-1v-2h1zM769 75h2v2h-2zM765.5 71.5h3v3h-3zM767 80h2v1h1v2h-1v1h-2v-1h-1v-2h1zM753 78h2v2h-2zM756 64h2v1h1v2h-1v1h-2v-1h-1v-2h1zM760.5 63.5h3v3h-3zM769.5 72.5h3v3h-3zM759 66h2v1h1v2h-1v1h-2v-1h-1v-2h1zM756 70h2v1h1v2h-1v1h-2v-1h-1v-2h1z"/><path fill="#4e8f28" d="M757 65h2v1h1v2h-1v1h-2v-1h-1v-2h1zM757.5 63.5h3v3h-3zM755.5 69.5h3v3h-3zM764 63h2v2h-2zM762 70h2v2h-2zM762 71h2v2h-2zM761 62h2v2h-2zM774.5 72.5h3v3h-3zM761 67h2v1h1v2h-1v1h-2v-1h-1v-2h1zM770 67h2v2h-2zM764 61h2v2h-2zM757 75h2v1h1v2h-1v1h-2v-1h-1v-2h1zM762 70h2v1h1v2h-1v1h-2v-1h-1v-2h1zM769.5 66.5h3v3h-3zM773 62h2v1h1v2h-1v1h-2v-1h-1v-2h1zM773 66h2v1h1v2h-1v1h-2v-1h-1v-2h1zM765.5 64.5h3v3h-3zM764 72h2v1h1v2h-1v1h-2v-1h-1v-2h1zM770 67h2v1h1v2h-1v1h-2v-1h-1v-2h1zM771.5 63.5h3v3h-3zM763 68h2v1h1v2h-1v1h-2v-1h-1v-2h1zM765 66h2v1h1v2h-1v1h-2v-1h-1v-2h1zM765 69h2v2h-2zM756 66h2v1h1v2h-1v1h-2v-1h-1v-2h1zM752 68h2v1h1v2h-1v1h-2v-1h-1v-2h1zM774.5 74.5h3v3h-3z"/><path fill="#78b03a" d="M766 65h2v2h-2zM760 61h2v2h-2zM769.5 70.5h3v3h-3zM770.5 69.5h3v3h-3zM770 62h2v2h-2zM759 63h2v2h-2zM758 63h2v1h1v2h-1v1h-2v-1h-1v-2h1z"/><path fill="#183a14" d="M754.5 83.5h3v3h-3zM774 81h2v1h1v2h-1v1h-2v-1h-1v-2h1zM769.5 82.5h3v3h-3zM756.5 81.5h3v3h-3zM763.5 82.5h3v3h-3zM763.5 83.5h3v3h-3zM767 82h2v1h1v2h-1v1h-2v-1h-1v-2h1zM778 83h2v1h1v2h-1v1h-2v-1h-1v-2h1zM760.5 82.5h3v3h-3zM760.5 83.5h3v3h-3zM759.5 80.5h3v3h-3zM759.5 81.5h3v3h-3z"/><ellipse cx="798" cy="68.7" rx="12.88" ry="9.7" fill="#183a14"/><ellipse cx="789" cy="76.24" rx="10.36" ry="9.7" fill="#183a14"/><ellipse cx="807" cy="76.24" rx="10.36" ry="9.7" fill="#183a14"/><ellipse cx="798" cy="77.98" rx="15.4" ry="9.7" fill="#183a14"/><ellipse cx="793.68" cy="71.6" rx="11.08" ry="9.7" fill="#183a14"/><ellipse cx="802.32" cy="71.6" rx="11.08" ry="9.7" fill="#183a14"/><ellipse cx="798" cy="67.2" rx="11.38" ry="7.7" fill="#25581b"/><ellipse cx="789" cy="74.74" rx="8.86" ry="7.7" fill="#25581b"/><ellipse cx="807" cy="74.74" rx="8.86" ry="7.7" fill="#25581b"/><ellipse cx="798" cy="76.48" rx="13.9" ry="7.7" fill="#25581b"/><ellipse cx="793.68" cy="70.1" rx="9.58" ry="7.7" fill="#25581b"/><ellipse cx="802.32" cy="70.1" rx="9.58" ry="7.7" fill="#25581b"/><path fill="#25581b" d="M806.5 73.5h3v3h-3zM800 73h2v1h1v2h-1v1h-2v-1h-1v-2h1zM804 71h2v1h1v2h-1v1h-2v-1h-1v-2h1zM806.5 73.5h3v3h-3zM794.5 71.5h3v3h-3zM808 81h2v2h-2zM800 76h2v2h-2zM810.5 76.5h3v3h-3zM804.5 79.5h3v3h-3zM805 68h2v1h1v2h-1v1h-2v-1h-1v-2h1zM783 79h2v2h-2zM798 66h2v1h1v2h-1v1h-2v-1h-1v-2h1zM805 73h2v2h-2zM787 77h2v2h-2zM804 73h2v1h1v2h-1v1h-2v-1h-1v-2h1zM799 67h2v2h-2zM800.5 78.5h3v3h-3zM807 80h2v2h-2zM788.5 77.5h3v3h-3zM805.5 67.5h3v3h-3zM781 74h2v2h-2zM808 75h2v1h1v2h-1v1h-2v-1h-1v-2h1zM796.5 73.5h3v3h-3zM794.5 68.5h3v3h-3zM785 74h2v2h-2zM798.5 72.5h3v3h-3zM782.5 72.5h3v3h-3zM804 75h2v2h-2zM797 68h2v1h1v2h-1v1h-2v-1h-1v-2h1zM807 73h2v2h-2zM800 81h2v2h-2zM794.5 71.5h3v3h-3zM801 71h2v2h-2zM808 74h2v2h-2zM795 68h2v1h1v2h-1v1h-2v-1h-1v-2h1z"/><path fill="#183a14" d="M792 76h2v1h1v2h-1v1h-2v-1h-1v-2h1zM790.5 76.5h3v3h-3zM793 69h2v2h-2zM798 75h2v2h-2zM804 72h2v1h1v2h-1v1h-2v-1h-1v-2h1zM799 69h2v2h-2z"/><path fill="#347221" d="M794 65h2v1h1v2h-1v1h-2v-1h-1v-2h1zM794 70h2v1h1v2h-1v1h-2v-1h-1v-2h1zM796.5 68.5h3v3h-3zM794 66h2v2h-2zM788 71h2v1h1v2h-1v1h-2v-1h-1v-2h1zM792.5 67.5h3v3h-3zM788.5 71.5h3v3h-3zM813.5 73.5h3v3h-3zM800 71h2v2h-2zM796.5 64.5h3v3h-3zM809.5 68.5h3v3h-3zM800 73h2v1h1v2h-1v1h-2v-1h-1v-2h1zM792.5 67.5h3v3h-3zM801 69h2v1h1v2h-1v1h-2v-1h-1v-2h1zM804.5 65.5h3v3h-3zM783.5 72.5h3v3h-3zM789 75h2v2h-2zM781 73h2v2h-2zM811 72h2v1h1v2h-1v1h-2v-1h-1v-2h1zM806 73h2v1h1v2h-1v1h-2v-1h-1v-2h1zM791 73h2v1h1v2h-1v1h-2v-1h-1v-2h1zM791.5 67.5h3v3h-3zM801 77h2v2h-2zM793.5 75.5h3v3h-3zM811.5 77.5h3v3h-3zM799 71h2v2h-2zM802 71h2v2h-2zM795 71h2v1h1v2h-1v1h-2v-1h-1v-2h1zM795 71h2v2h-2zM795 61h2v1h1v2h-1v1h-2v-1h-1v-2h1z"/><path fill="#4e8f28" d="M801.5 64.5h3v3h-3zM794 63h2v1h1v2h-1v1h-2v-1h-1v-2h1zM804 64h2v2h-2zM798 65h2v1h1v2h-1v1h-2v-1h-1v-2h1zM797.5 65.5h3v3h-3zM796.5 63.5h3v3h-3zM797 69h2v1h1v2h-1v1h-2v-1h-1v-2h1zM797 64h2v1h1v2h-1v1h-2v-1h-1v-2h1zM787.5 72.5h3v3h-3zM801 73h2v2h-2zM790 67h2v1h1v2h-1v1h-2v-1h-1v-2h1zM783.5 70.5h3v3h-3zM787 76h2v2h-2zM795.5 71.5h3v3h-3zM797.5 65.5h3v3h-3zM794 68h2v1h1v2h-1v1h-2v-1h-1v-2h1zM791 65h2v2h-2zM796 65h2v1h1v2h-1v1h-2v-1h-1v-2h1zM799 68h2v1h1v2h-1v1h-2v-1h-1v-2h1zM812.5 73.5h3v3h-3zM799 70h2v1h1v2h-1v1h-2v-1h-1v-2h1zM788 71h2v1h1v2h-1v1h-2v-1h-1v-2h1zM802.5 64.5h3v3h-3zM802 69h2v1h1v2h-1v1h-2v-1h-1v-2h1zM808.5 68.5h3v3h-3zM810 70h2v1h1v2h-1v1h-2v-1h-1v-2h1zM806 73h2v2h-2zM784.5 69.5h3v3h-3zM790.5 68.5h3v3h-3zM805.5 66.5h3v3h-3zM805 64h2v1h1v2h-1v1h-2v-1h-1v-2h1zM801.5 72.5h3v3h-3zM798 76h2v1h1v2h-1v1h-2v-1h-1v-2h1zM797.5 62.5h3v3h-3zM792.5 60.5h3v3h-3zM811.5 70.5h3v3h-3z"/><path fill="#78b03a" d="M788 71h2v2h-2zM800 62h2v1h1v2h-1v1h-2v-1h-1v-2h1zM805 62h2v2h-2zM798 65h2v1h1v2h-1v1h-2v-1h-1v-2h1zM808 68h2v2h-2zM796 63h2v1h1v2h-1v1h-2v-1h-1v-2h1zM792 68h2v2h-2zM803.5 61.5h3v3h-3zM807 66h2v1h1v2h-1v1h-2v-1h-1v-2h1z"/><path fill="#183a14" d="M803.5 81.5h3v3h-3zM794.5 84.5h3v3h-3zM809.5 82.5h3v3h-3zM792.5 81.5h3v3h-3zM804.5 82.5h3v3h-3zM794 83h2v1h1v2h-1v1h-2v-1h-1v-2h1zM809.5 84.5h3v3h-3zM790.5 80.5h3v3h-3zM792.5 84.5h3v3h-3zM810 82h2v1h1v2h-1v1h-2v-1h-1v-2h1zM802.5 82.5h3v3h-3zM801.5 82.5h3v3h-3z"/><rect x="834" y="87" width="7" height="6" fill="#050505"/><line x1="907.095" y1="110" x2="907.683" y2="95.3475" stroke="#2c5426" stroke-width="1.3"/><line x1="845.947" y1="110" x2="848.074" y2="93.8327" stroke="#3a6a2c" stroke-width="1.3"/><line x1="917.914" y1="110" x2="916.102" y2="101.352" stroke="#244a22" stroke-width="1.3"/><line x1="840.735" y1="110" x2="840.246" y2="89.7634" stroke="#2c5426" stroke-width="1.3"/><line x1="885.28" y1="110" x2="884.414" y2="99.8783" stroke="#2c5426" stroke-width="1.3"/><line x1="843.537" y1="110" x2="841.088" y2="94.0901" stroke="#244a22" stroke-width="1.3"/><line x1="833.615" y1="110" x2="835.28" y2="97.5279" stroke="#3a6a2c" stroke-width="1.3"/><line x1="830.936" y1="110" x2="831.186" y2="99.6475" stroke="#2c5426" stroke-width="1.3"/><line x1="912.177" y1="110" x2="913.182" y2="96.2716" stroke="#244a22" stroke-width="1.3"/><line x1="893.644" y1="110" x2="893.258" y2="97.7363" stroke="#4a7a30" stroke-width="1.3"/><line x1="891.888" y1="110" x2="893.951" y2="103.891" stroke="#4a7a30" stroke-width="1.3"/><line x1="900.89" y1="110" x2="900.246" y2="95.8235" stroke="#4a7a30" stroke-width="1.3"/><line x1="892.66" y1="110" x2="893.672" y2="91.9215" stroke="#3a6a2c" stroke-width="1.3"/><line x1="856.92" y1="110" x2="858.478" y2="96.7196" stroke="#244a22" stroke-width="1.3"/><line x1="842.119" y1="110" x2="839.214" y2="92.6199" stroke="#3a6a2c" stroke-width="1.3"/><line x1="898.82" y1="110" x2="897.701" y2="100.891" stroke="#2c5426" stroke-width="1.3"/><line x1="843.508" y1="110" x2="842.424" y2="97.488" stroke="#3a6a2c" stroke-width="1.3"/><line x1="833.794" y1="110" x2="831.363" y2="105.354" stroke="#2c5426" stroke-width="1.3"/><line x1="918.208" y1="110" x2="916.326" y2="105.079" stroke="#4a7a30" stroke-width="1.3"/><line x1="839.728" y1="110" x2="842.635" y2="95.2668" stroke="#3a6a2c" stroke-width="1.3"/><line x1="836.412" y1="110" x2="834.495" y2="101.249" stroke="#244a22" stroke-width="1.3"/><line x1="856.132" y1="110" x2="858.615" y2="94.6424" stroke="#4a7a30" stroke-width="1.3"/><line x1="913.212" y1="110" x2="912.59" y2="93.6932" stroke="#2c5426" stroke-width="1.3"/><line x1="891.541" y1="110" x2="889.043" y2="93.7544" stroke="#244a22" stroke-width="1.3"/><line x1="831.533" y1="110" x2="832.502" y2="88.2359" stroke="#3a6a2c" stroke-width="1.3"/><line x1="922.969" y1="110" x2="920.11" y2="95.7023" stroke="#244a22" stroke-width="1.3"/><line x1="855.852" y1="110" x2="858.263" y2="100.085" stroke="#3a6a2c" stroke-width="1.3"/><line x1="841.953" y1="110" x2="843.719" y2="101.187" stroke="#3a6a2c" stroke-width="1.3"/><line x1="920.364" y1="110" x2="917.961" y2="100.701" stroke="#244a22" stroke-width="1.3"/><line x1="904.446" y1="110" x2="906.013" y2="95.9074" stroke="#3a6a2c" stroke-width="1.3"/><line x1="876.991" y1="110" x2="876.06" y2="98.0853" stroke="#4a7a30" stroke-width="1.3"/><line x1="900.683" y1="110" x2="901.595" y2="103.592" stroke="#4a7a30" stroke-width="1.3"/><line x1="855.296" y1="110" x2="856.289" y2="88.9951" stroke="#4a7a30" stroke-width="1.3"/><line x1="826.866" y1="110" x2="827.261" y2="104.598" stroke="#2c5426" stroke-width="1.3"/><line x1="904.576" y1="110" x2="906.036" y2="99.0501" stroke="#244a22" stroke-width="1.3"/><line x1="896.403" y1="110" x2="894.66" y2="100.198" stroke="#244a22" stroke-width="1.3"/><line x1="853.116" y1="110" x2="852.233" y2="105.314" stroke="#244a22" stroke-width="1.3"/><line x1="854.065" y1="110" x2="853.893" y2="92.1585" stroke="#3a6a2c" stroke-width="1.3"/><line x1="910.178" y1="110" x2="912.962" y2="99.4383" stroke="#4a7a30" stroke-width="1.3"/><line x1="846.625" y1="110" x2="847.1" y2="102.826" stroke="#3a6a2c" stroke-width="1.3"/><line x1="860.98" y1="110" x2="862.32" y2="95.7395" stroke="#4a7a30" stroke-width="1.3"/><line x1="892.412" y1="110" x2="890.748" y2="96.9085" stroke="#244a22" stroke-width="1.3"/><line x1="878.594" y1="110" x2="880.312" y2="91.7683" stroke="#244a22" stroke-width="1.3"/><line x1="894.779" y1="110" x2="894.279" y2="93.6938" stroke="#244a22" stroke-width="1.3"/><line x1="835.463" y1="110" x2="832.56" y2="101.269" stroke="#3a6a2c" stroke-width="1.3"/><line x1="882.765" y1="110" x2="881.725" y2="98.2556" stroke="#244a22" stroke-width="1.3"/><line x1="866.228" y1="110" x2="863.659" y2="98.0929" stroke="#244a22" stroke-width="1.3"/><line x1="857.526" y1="110" x2="855.434" y2="94.9015" stroke="#4a7a30" stroke-width="1.3"/><line x1="843.808" y1="110" x2="842.569" y2="104.626" stroke="#2c5426" stroke-width="1.3"/><line x1="823.232" y1="110" x2="826.05" y2="88.555" stroke="#3a6a2c" stroke-width="1.3"/><line x1="924.635" y1="110" x2="924.646" y2="88.4168" stroke="#3a6a2c" stroke-width="1.3"/><line x1="879.795" y1="110" x2="879.621" y2="100.64" stroke="#2c5426" stroke-width="1.3"/><line x1="901.372" y1="110" x2="903.029" y2="93.6836" stroke="#244a22" stroke-width="1.3"/><line x1="896.249" y1="110" x2="897.266" y2="88.7876" stroke="#3a6a2c" stroke-width="1.3"/><line x1="877.142" y1="110" x2="879.836" y2="90.246" stroke="#3a6a2c" stroke-width="1.3"/><line x1="833.677" y1="110" x2="833.939" y2="97.1988" stroke="#4a7a30" stroke-width="1.3"/><line x1="924.234" y1="110" x2="927.111" y2="103.449" stroke="#244a22" stroke-width="1.3"/><line x1="851.865" y1="110" x2="851.221" y2="95.1594" stroke="#2c5426" stroke-width="1.3"/><line x1="881.169" y1="110" x2="878.566" y2="94.4324" stroke="#3a6a2c" stroke-width="1.3"/><line x1="823.173" y1="110" x2="826.056" y2="103.331" stroke="#4a7a30" stroke-width="1.3"/><line x1="888.011" y1="110" x2="889.253" y2="95.6422" stroke="#244a22" stroke-width="1.3"/><line x1="867.596" y1="110" x2="866.317" y2="93.2218" stroke="#244a22" stroke-width="1.3"/><line x1="845.053" y1="110" x2="844.844" y2="99.6472" stroke="#244a22" stroke-width="1.3"/><line x1="865.599" y1="110" x2="866.13" y2="98.3147" stroke="#2c5426" stroke-width="1.3"/><line x1="846.734" y1="110" x2="848.884" y2="89.9285" stroke="#2c5426" stroke-width="1.3"/><line x1="867.182" y1="110" x2="867.06" y2="103.564" stroke="#3a6a2c" stroke-width="1.3"/><line x1="823.798" y1="110" x2="825.726" y2="103.062" stroke="#4a7a30" stroke-width="1.3"/><line x1="861.527" y1="110" x2="863.979" y2="88.4198" stroke="#4a7a30" stroke-width="1.3"/><line x1="923.38" y1="110" x2="923.061" y2="89.1121" stroke="#244a22" stroke-width="1.3"/><line x1="891.681" y1="110" x2="889.384" y2="98.4521" stroke="#3a6a2c" stroke-width="1.3"/><line x1="826.856" y1="110" x2="825.803" y2="98.4691" stroke="#4a7a30" stroke-width="1.3"/><line x1="824.831" y1="110" x2="825.184" y2="105.292" stroke="#2c5426" stroke-width="1.3"/><line x1="882.954" y1="110" x2="883.944" y2="89.1861" stroke="#3a6a2c" stroke-width="1.3"/><line x1="881.208" y1="110" x2="880.095" y2="105.582" stroke="#4a7a30" stroke-width="1.3"/><line x1="861.717" y1="110" x2="860.366" y2="101.522" stroke="#4a7a30" stroke-width="1.3"/><line x1="857.432" y1="110" x2="858.088" y2="88.2691" stroke="#2c5426" stroke-width="1.3"/><line x1="850.09" y1="110" x2="850.62" y2="92.2993" stroke="#3a6a2c" stroke-width="1.3"/><line x1="919.694" y1="110" x2="917.363" y2="95.7097" stroke="#2c5426" stroke-width="1.3"/><line x1="856.786" y1="110" x2="854.21" y2="88.4777" stroke="#244a22" stroke-width="1.3"/><line x1="846.006" y1="110" x2="844.432" y2="95.4323" stroke="#3a6a2c" stroke-width="1.3"/><line x1="860.409" y1="110" x2="861.888" y2="96.2408" stroke="#3a6a2c" stroke-width="1.3"/><line x1="878.711" y1="110" x2="880.937" y2="94.5885" stroke="#2c5426" stroke-width="1.3"/><line x1="895.758" y1="110" x2="893.068" y2="93.5276" stroke="#2c5426" stroke-width="1.3"/><line x1="873.633" y1="110" x2="874.689" y2="102.669" stroke="#3a6a2c" stroke-width="1.3"/><line x1="900.356" y1="110" x2="899.291" y2="102.492" stroke="#4a7a30" stroke-width="1.3"/><line x1="902.968" y1="110" x2="903.167" y2="92.2468" stroke="#2c5426" stroke-width="1.3"/><line x1="882.217" y1="110" x2="883.715" y2="103.146" stroke="#2c5426" stroke-width="1.3"/><line x1="847.223" y1="110" x2="849.397" y2="88.3471" stroke="#244a22" stroke-width="1.3"/><line x1="835.676" y1="110" x2="837.39" y2="91.495" stroke="#4a7a30" stroke-width="1.3"/><line x1="866.979" y1="110" x2="869.232" y2="99.2787" stroke="#4a7a30" stroke-width="1.3"/><line x1="858.355" y1="110" x2="857.349" y2="96.6378" stroke="#4a7a30" stroke-width="1.3"/><line x1="905.352" y1="110" x2="903.849" y2="88.3251" stroke="#244a22" stroke-width="1.3"/><line x1="912.573" y1="110" x2="914.021" y2="90.9964" stroke="#244a22" stroke-width="1.3"/><line x1="890.424" y1="110" x2="889.928" y2="92.6544" stroke="#3a6a2c" stroke-width="1.3"/><line x1="824.654" y1="110" x2="824.711" y2="99.2987" stroke="#2c5426" stroke-width="1.3"/><line x1="876.397" y1="110" x2="875.01" y2="93.9228" stroke="#2c5426" stroke-width="1.3"/><line x1="892.714" y1="110" x2="890.537" y2="103.8" stroke="#3a6a2c" stroke-width="1.3"/><line x1="831.961" y1="110" x2="829.184" y2="95.3328" stroke="#2c5426" stroke-width="1.3"/><line x1="847.744" y1="110" x2="845.635" y2="96.5887" stroke="#4a7a30" stroke-width="1.3"/><line x1="828.14" y1="110" x2="828.466" y2="92.8504" stroke="#2c5426" stroke-width="1.3"/><line x1="831.5" y1="110" x2="833.151" y2="93.6075" stroke="#4a7a30" stroke-width="1.3"/><line x1="894.013" y1="110" x2="891.21" y2="90.9518" stroke="#4a7a30" stroke-width="1.3"/><line x1="850.162" y1="110" x2="849.975" y2="103.06" stroke="#3a6a2c" stroke-width="1.3"/><line x1="846.556" y1="110" x2="847.478" y2="98.2532" stroke="#4a7a30" stroke-width="1.3"/><line x1="917.796" y1="110" x2="915.099" y2="89.3218" stroke="#2c5426" stroke-width="1.3"/><line x1="913.113" y1="110" x2="911.19" y2="102.355" stroke="#3a6a2c" stroke-width="1.3"/><line x1="826.831" y1="110" x2="826.774" y2="96.7967" stroke="#3a6a2c" stroke-width="1.3"/><line x1="838.84" y1="110" x2="841.401" y2="104.825" stroke="#4a7a30" stroke-width="1.3"/><line x1="919.172" y1="110" x2="917.859" y2="89.4688" stroke="#3a6a2c" stroke-width="1.3"/><line x1="894.93" y1="110" x2="891.948" y2="93.9622" stroke="#4a7a30" stroke-width="1.3"/><line x1="845.685" y1="110" x2="847.829" y2="105.446" stroke="#3a6a2c" stroke-width="1.3"/><line x1="917.381" y1="110" x2="914.498" y2="96.1353" stroke="#3a6a2c" stroke-width="1.3"/><line x1="912.975" y1="110" x2="912.558" y2="89.5937" stroke="#2c5426" stroke-width="1.3"/><line x1="826.748" y1="110" x2="825.268" y2="89.5741" stroke="#3a6a2c" stroke-width="1.3"/><line x1="845.519" y1="110" x2="847.287" y2="88.692" stroke="#3a6a2c" stroke-width="1.3"/><line x1="883.011" y1="110" x2="885.491" y2="90.1422" stroke="#4a7a30" stroke-width="1.3"/><line x1="895.681" y1="110" x2="892.782" y2="97.3046" stroke="#4a7a30" stroke-width="1.3"/><line x1="855.776" y1="110" x2="857.939" y2="98.6627" stroke="#3a6a2c" stroke-width="1.3"/><line x1="827.033" y1="110" x2="824.612" y2="94.8485" stroke="#4a7a30" stroke-width="1.3"/><line x1="832.254" y1="110" x2="833.334" y2="104.18" stroke="#4a7a30" stroke-width="1.3"/><line x1="895.486" y1="110" x2="896.075" y2="97.6994" stroke="#2c5426" stroke-width="1.3"/><line x1="838.513" y1="110" x2="835.984" y2="88.8907" stroke="#4a7a30" stroke-width="1.3"/><line x1="862.486" y1="110" x2="860.259" y2="104.213" stroke="#4a7a30" stroke-width="1.3"/><line x1="830.319" y1="110" x2="829.645" y2="94.9909" stroke="#4a7a30" stroke-width="1.3"/><line x1="912.579" y1="110" x2="910.672" y2="97.8229" stroke="#2c5426" stroke-width="1.3"/><line x1="829.28" y1="110" x2="829.725" y2="92.6051" stroke="#3a6a2c" stroke-width="1.3"/><line x1="854.62" y1="110" x2="855.442" y2="100.91" stroke="#2c5426" stroke-width="1.3"/><line x1="868.951" y1="110" x2="866.104" y2="92.1426" stroke="#4a7a30" stroke-width="1.3"/><line x1="912.02" y1="110" x2="913.68" y2="105.547" stroke="#4a7a30" stroke-width="1.3"/><line x1="853.763" y1="110" x2="853.148" y2="105.232" stroke="#3a6a2c" stroke-width="1.3"/><line x1="860.826" y1="110" x2="861.005" y2="103.63" stroke="#2c5426" stroke-width="1.3"/><line x1="912.502" y1="110" x2="909.647" y2="91.9519" stroke="#4a7a30" stroke-width="1.3"/><line x1="830.556" y1="110" x2="827.556" y2="99.2971" stroke="#3a6a2c" stroke-width="1.3"/><line x1="867.507" y1="110" x2="870.04" y2="100.858" stroke="#244a22" stroke-width="1.3"/><line x1="892.371" y1="110" x2="895.019" y2="105.198" stroke="#2c5426" stroke-width="1.3"/><line x1="879.131" y1="110" x2="881.861" y2="105.323" stroke="#4a7a30" stroke-width="1.3"/><line x1="869.751" y1="110" x2="870.902" y2="99.21" stroke="#3a6a2c" stroke-width="1.3"/><line x1="895.801" y1="110" x2="896.979" y2="100.779" stroke="#4a7a30" stroke-width="1.3"/><line x1="892.42" y1="110" x2="894.921" y2="98.212" stroke="#2c5426" stroke-width="1.3"/><line x1="849.806" y1="110" x2="852.063" y2="93.8118" stroke="#244a22" stroke-width="1.3"/><line x1="837.762" y1="110" x2="835.802" y2="92.7671" stroke="#244a22" stroke-width="1.3"/><line x1="824.169" y1="110" x2="821.39" y2="103.914" stroke="#3a6a2c" stroke-width="1.3"/><line x1="907.808" y1="110" x2="905.354" y2="90.5241" stroke="#2c5426" stroke-width="1.3"/><line x1="915.059" y1="110" x2="912.45" y2="100.003" stroke="#3a6a2c" stroke-width="1.3"/><line x1="921.497" y1="110" x2="921.767" y2="89.6617" stroke="#2c5426" stroke-width="1.3"/><line x1="917.844" y1="110" x2="915.998" y2="89.6909" stroke="#3a6a2c" stroke-width="1.3"/><line x1="899.266" y1="110" x2="901.652" y2="88.2552" stroke="#244a22" stroke-width="1.3"/><line x1="848.219" y1="110" x2="848.039" y2="96.7146" stroke="#4a7a30" stroke-width="1.3"/><line x1="840.083" y1="110" x2="839.995" y2="95.2886" stroke="#2c5426" stroke-width="1.3"/><line x1="856.773" y1="110" x2="857.075" y2="89.6251" stroke="#4a7a30" stroke-width="1.3"/><line x1="914.613" y1="110" x2="914.553" y2="88.0042" stroke="#4a7a30" stroke-width="1.3"/><line x1="855.958" y1="110" x2="853.592" y2="90.1965" stroke="#4a7a30" stroke-width="1.3"/><line x1="855.187" y1="110" x2="857.392" y2="89.7888" stroke="#3a6a2c" stroke-width="1.3"/><line x1="844.711" y1="110" x2="844.502" y2="94.988" stroke="#244a22" stroke-width="1.3"/><line x1="914.009" y1="110" x2="915.805" y2="95.7708" stroke="#3a6a2c" stroke-width="1.3"/><line x1="853.794" y1="110" x2="852.179" y2="101.214" stroke="#2c5426" stroke-width="1.3"/><line x1="880.049" y1="110" x2="878.205" y2="102.263" stroke="#244a22" stroke-width="1.3"/><line x1="867.062" y1="110" x2="869.913" y2="88.5133" stroke="#2c5426" stroke-width="1.3"/><line x1="902.801" y1="110" x2="902.26" y2="94.8049" stroke="#2c5426" stroke-width="1.3"/><line x1="851.424" y1="110" x2="851.195" y2="89.4478" stroke="#3a6a2c" stroke-width="1.3"/><line x1="914.465" y1="110" x2="914.538" y2="98.8574" stroke="#3a6a2c" stroke-width="1.3"/><line x1="868.711" y1="110" x2="866.034" y2="102.516" stroke="#4a7a30" stroke-width="1.3"/><line x1="828.569" y1="110" x2="828.37" y2="101.701" stroke="#4a7a30" stroke-width="1.3"/><line x1="898.817" y1="110" x2="897.209" y2="102.076" stroke="#3a6a2c" stroke-width="1.3"/><line x1="880.353" y1="110" x2="882.133" y2="88.147" stroke="#4a7a30" stroke-width="1.3"/><line x1="823.022" y1="110" x2="821.975" y2="99.0908" stroke="#4a7a30" stroke-width="1.3"/><line x1="891.824" y1="110" x2="889.368" y2="102.573" stroke="#3a6a2c" stroke-width="1.3"/><line x1="909.54" y1="110" x2="910.292" y2="94.2484" stroke="#244a22" stroke-width="1.3"/><line x1="882.504" y1="110" x2="883.364" y2="95.8878" stroke="#2c5426" stroke-width="1.3"/><line x1="881.639" y1="110" x2="883.654" y2="105.573" stroke="#244a22" stroke-width="1.3"/><line x1="890.54" y1="110" x2="891.61" y2="103.68" stroke="#4a7a30" stroke-width="1.3"/><line x1="897.641" y1="110" x2="900.42" y2="89.9327" stroke="#244a22" stroke-width="1.3"/><line x1="902.09" y1="110" x2="900.203" y2="98.1282" stroke="#3a6a2c" stroke-width="1.3"/><line x1="871.788" y1="110" x2="872.172" y2="92.4196" stroke="#244a22" stroke-width="1.3"/><line x1="893.601" y1="110" x2="892.7" y2="103.135" stroke="#4a7a30" stroke-width="1.3"/><line x1="883.624" y1="110" x2="886.623" y2="91.2933" stroke="#2c5426" stroke-width="1.3"/><line x1="823.478" y1="110" x2="822.452" y2="104.916" stroke="#3a6a2c" stroke-width="1.3"/><line x1="855.035" y1="110" x2="856.196" y2="91.4376" stroke="#244a22" stroke-width="1.3"/><line x1="852.492" y1="110" x2="855.401" y2="105.511" stroke="#2c5426" stroke-width="1.3"/><line x1="877.936" y1="110" x2="875.384" y2="102.376" stroke="#2c5426" stroke-width="1.3"/><line x1="870.55" y1="110" x2="871.004" y2="89.7485" stroke="#4a7a30" stroke-width="1.3"/><line x1="901.398" y1="110" x2="902.743" y2="99.8379" stroke="#2c5426" stroke-width="1.3"/><line x1="846.659" y1="110" x2="847.038" y2="89.1757" stroke="#244a22" stroke-width="1.3"/><line x1="913.996" y1="110" x2="913.877" y2="105.334" stroke="#3a6a2c" stroke-width="1.3"/><line x1="845.177" y1="110" x2="846.436" y2="93.4098" stroke="#4a7a30" stroke-width="1.3"/><line x1="902.074" y1="110" x2="904.473" y2="102.146" stroke="#4a7a30" stroke-width="1.3"/><line x1="854.443" y1="110" x2="853.645" y2="100.363" stroke="#3a6a2c" stroke-width="1.3"/><line x1="879.296" y1="110" x2="881.667" y2="98.271" stroke="#4a7a30" stroke-width="1.3"/><line x1="835.116" y1="110" x2="832.531" y2="97.4277" stroke="#4a7a30" stroke-width="1.3"/><line x1="870.202" y1="110" x2="869.323" y2="94.8151" stroke="#3a6a2c" stroke-width="1.3"/><line x1="847.823" y1="110" x2="845.105" y2="88.7557" stroke="#3a6a2c" stroke-width="1.3"/><line x1="900.799" y1="110" x2="899.638" y2="103.426" stroke="#3a6a2c" stroke-width="1.3"/><line x1="897.624" y1="110" x2="897.856" y2="89.4727" stroke="#3a6a2c" stroke-width="1.3"/><line x1="860.761" y1="110" x2="859.58" y2="92.2087" stroke="#244a22" stroke-width="1.3"/><line x1="907.394" y1="110" x2="908.873" y2="103.198" stroke="#2c5426" stroke-width="1.3"/><line x1="842.736" y1="110" x2="841.098" y2="97.1779" stroke="#2c5426" stroke-width="1.3"/><line x1="888.595" y1="110" x2="888.52" y2="96.2954" stroke="#2c5426" stroke-width="1.3"/><line x1="826.394" y1="110" x2="823.999" y2="101.55" stroke="#4a7a30" stroke-width="1.3"/><line x1="834.129" y1="110" x2="831.857" y2="103.099" stroke="#244a22" stroke-width="1.3"/><line x1="877.74" y1="110" x2="878.854" y2="103.416" stroke="#3a6a2c" stroke-width="1.3"/><line x1="915.945" y1="110" x2="917.374" y2="91.5488" stroke="#2c5426" stroke-width="1.3"/><line x1="875.007" y1="110" x2="875.057" y2="97.7226" stroke="#4a7a30" stroke-width="1.3"/><line x1="841.5" y1="110" x2="841.585" y2="104.184" stroke="#4a7a30" stroke-width="1.3"/><line x1="891.015" y1="110" x2="888.102" y2="103.378" stroke="#4a7a30" stroke-width="1.3"/><line x1="865.966" y1="110" x2="864.22" y2="90.2142" stroke="#2c5426" stroke-width="1.3"/><line x1="838.347" y1="110" x2="839.565" y2="92.061" stroke="#2c5426" stroke-width="1.3"/><line x1="831.309" y1="110" x2="831.328" y2="104.408" stroke="#3a6a2c" stroke-width="1.3"/><line x1="830.001" y1="110" x2="832.213" y2="97.941" stroke="#3a6a2c" stroke-width="1.3"/><line x1="840.632" y1="110" x2="839.23" y2="94.9606" stroke="#2c5426" stroke-width="1.3"/><line x1="897.301" y1="110" x2="899.742" y2="99.309" stroke="#3a6a2c" stroke-width="1.3"/><line x1="883.456" y1="110" x2="885.213" y2="103.376" stroke="#2c5426" stroke-width="1.3"/><line x1="913.638" y1="110" x2="912.075" y2="105.139" stroke="#4a7a30" stroke-width="1.3"/><line x1="901.694" y1="110" x2="901.468" y2="105.249" stroke="#2c5426" stroke-width="1.3"/><line x1="918.916" y1="110" x2="920.363" y2="97.9362" stroke="#3a6a2c" stroke-width="1.3"/><line x1="853.224" y1="110" x2="853.868" y2="97.3665" stroke="#4a7a30" stroke-width="1.3"/><line x1="916.517" y1="110" x2="916.703" y2="91.935" stroke="#244a22" stroke-width="1.3"/><line x1="910.293" y1="110" x2="909.914" y2="95.3065" stroke="#244a22" stroke-width="1.3"/><line x1="851.865" y1="110" x2="851.606" y2="97.6234" stroke="#4a7a30" stroke-width="1.3"/><line x1="904.163" y1="110" x2="903.932" y2="88.911" stroke="#4a7a30" stroke-width="1.3"/><line x1="907.829" y1="110" x2="910.819" y2="100.552" stroke="#3a6a2c" stroke-width="1.3"/><line x1="904.387" y1="110" x2="904.018" y2="93.7181" stroke="#3a6a2c" stroke-width="1.3"/><line x1="881.33" y1="110" x2="882.843" y2="93.932" stroke="#244a22" stroke-width="1.3"/><line x1="912.091" y1="110" x2="913.307" y2="99.1721" stroke="#244a22" stroke-width="1.3"/><line x1="914.929" y1="110" x2="911.99" y2="89.4662" stroke="#244a22" stroke-width="1.3"/><ellipse cx="900.5" cy="112" rx="13.5" ry="29" fill="#285a24"/><path fill="#4a8a34" d="M886.5 105.5h3v3h-3zM886 109h2v2h-2zM900.5 101.5h3v3h-3zM912 106h2v2h-2zM900 83h2v1h1v2h-1v1h-2v-1h-1v-2h1zM897.5 102.5h3v3h-3zM894 87h2v1h1v2h-1v1h-2v-1h-1v-2h1zM888 98h2v1h1v2h-1v1h-2v-1h-1v-2h1zM896.5 101.5h3v3h-3zM902 88h2v2h-2zM912 104h2v2h-2zM908 94h2v2h-2zM906.5 94.5h3v3h-3zM912 99h2v1h1v2h-1v1h-2v-1h-1v-2h1zM892.5 87.5h3v3h-3zM895.5 96.5h3v3h-3zM892.5 104.5h3v3h-3zM908 95h2v1h1v2h-1v1h-2v-1h-1v-2h1zM910.5 97.5h3v3h-3zM899 96h2v2h-2zM887 108h2v2h-2zM896 108h2v2h-2zM907.5 103.5h3v3h-3zM898.5 101.5h3v3h-3zM903.5 86.5h3v3h-3zM887.5 100.5h3v3h-3zM903 87h2v1h1v2h-1v1h-2v-1h-1v-2h1zM911 107h2v1h1v2h-1v1h-2v-1h-1v-2h1zM910 101h2v1h1v2h-1v1h-2v-1h-1v-2h1zM897 96h2v2h-2zM902 85h2v1h1v2h-1v1h-2v-1h-1v-2h1zM913 107h2v2h-2zM887.5 108.5h3v3h-3zM903 84h2v1h1v2h-1v1h-2v-1h-1v-2h1zM905 107h2v2h-2zM910 94h2v1h1v2h-1v1h-2v-1h-1v-2h1zM890 92h2v1h1v2h-1v1h-2v-1h-1v-2h1zM910 97h2v2h-2zM892 89h2v2h-2zM907.5 93.5h3v3h-3zM904 91h2v2h-2zM906 89h2v1h1v2h-1v1h-2v-1h-1v-2h1z"/><path fill="#34702a" d="M903 89h2v2h-2zM886 109h2v2h-2zM886.5 105.5h3v3h-3zM892 104h2v1h1v2h-1v1h-2v-1h-1v-2h1zM894 101h2v2h-2zM893 91h2v2h-2zM906.5 105.5h3v3h-3zM891 97h2v1h1v2h-1v1h-2v-1h-1v-2h1zM902.5 104.5h3v3h-3zM903 95h2v2h-2zM895.5 94.5h3v3h-3zM895 89h2v2h-2zM905.5 108.5h3v3h-3zM908 103h2v2h-2zM893 109h2v2h-2zM891.5 102.5h3v3h-3zM912 107h2v1h1v2h-1v1h-2v-1h-1v-2h1zM897 94h2v1h1v2h-1v1h-2v-1h-1v-2h1zM907 98h2v1h1v2h-1v1h-2v-1h-1v-2h1zM908 101h2v1h1v2h-1v1h-2v-1h-1v-2h1zM898 103h2v2h-2zM901 95h2v1h1v2h-1v1h-2v-1h-1v-2h1zM910 107h2v1h1v2h-1v1h-2v-1h-1v-2h1zM887.5 99.5h3v3h-3zM894 98h2v1h1v2h-1v1h-2v-1h-1v-2h1zM904 90h2v2h-2zM890 100h2v2h-2zM912 103h2v2h-2zM910 102h2v2h-2zM910.5 100.5h3v3h-3zM907 100h2v1h1v2h-1v1h-2v-1h-1v-2h1zM903 108h2v1h1v2h-1v1h-2v-1h-1v-2h1zM896.5 98.5h3v3h-3zM910 104h2v2h-2zM896 98h2v1h1v2h-1v1h-2v-1h-1v-2h1zM895 100h2v2h-2zM902 91h2v1h1v2h-1v1h-2v-1h-1v-2h1zM901 84h2v2h-2zM897 97h2v1h1v2h-1v1h-2v-1h-1v-2h1zM902 100h2v1h1v2h-1v1h-2v-1h-1v-2h1zM895.5 95.5h3v3h-3zM899.5 103.5h3v3h-3zM888.5 104.5h3v3h-3z"/><path fill="#285a24" d="M908.5 101.5h3v3h-3zM911.5 102.5h3v3h-3zM893.5 107.5h3v3h-3zM895.5 105.5h3v3h-3zM899 106h2v2h-2zM909 97h2v1h1v2h-1v1h-2v-1h-1v-2h1zM887.5 107.5h3v3h-3zM910 99h2v1h1v2h-1v1h-2v-1h-1v-2h1zM891 109h2v2h-2zM889 105h2v1h1v2h-1v1h-2v-1h-1v-2h1zM896 93h2v1h1v2h-1v1h-2v-1h-1v-2h1zM891 105h2v1h1v2h-1v1h-2v-1h-1v-2h1zM895.5 105.5h3v3h-3zM888.5 101.5h3v3h-3zM905.5 100.5h3v3h-3zM886 106h2v1h1v2h-1v1h-2v-1h-1v-2h1zM886.5 107.5h3v3h-3zM902 101h2v1h1v2h-1v1h-2v-1h-1v-2h1zM887.5 104.5h3v3h-3zM894 102h2v1h1v2h-1v1h-2v-1h-1v-2h1zM907.5 103.5h3v3h-3zM902 92h2v1h1v2h-1v1h-2v-1h-1v-2h1zM888 104h2v1h1v2h-1v1h-2v-1h-1v-2h1zM906 96h2v2h-2zM889.5 105.5h3v3h-3zM890.5 102.5h3v3h-3z"/><rect x="896" y="96" width="2" height="2" fill="#c8c838"/><polygon points="868,76 876,74 880,78 872,82 878,86 868,90 862,84" fill="#3f8fe6"/><polygon points="866,82 884,79 885,84 872,94 884,94 884,98 862,98 864,92 876,84 866,86" fill="#6f7396"/><rect x="860" y="97" width="26" height="3" fill="#8a8ea8"/><line x1="863" y1="99" x2="858" y2="110" stroke="#2a5ad6" stroke-width="2.5"/><line x1="872" y1="99" x2="876" y2="110" stroke="#2a5ad6" stroke-width="2.5"/><line x1="883" y1="99" x2="884" y2="110" stroke="#2a5ad6" stroke-width="2.5"/><rect x="903" y="61" width="16" height="2" fill="#24343a"/><rect x="910" y="63" width="2" height="2" fill="#24343a"/><polygon points="906,66 908,64 914,64 916,66 917,76 905,76" fill="#3a9a5e"/><rect x="905" y="68" width="12" height="1.5" fill="#1f5a3a"/><rect x="905" y="72" width="12" height="1.5" fill="#1f5a3a"/><rect x="906" y="76" width="10" height="1.5" fill="#1f4a34"/><polygon points="976.6,80 987.4,80 985,84.8 985,89 991,96 972,96 979,89 979,84.8" fill="#3f2a1b"/><rect x="980.5" y="82" width="3.3" height="13" fill="#634529"/><rect x="981.5" y="86" width="1.32" height="6" fill="#80603a"/><line x1="980" y1="86.72" x2="967.6" y2="77" stroke="#3f2a1b" stroke-width="3.6"/><line x1="984" y1="86.4" x2="996.4" y2="78" stroke="#3f2a1b" stroke-width="3.6"/><line x1="980" y1="86.4" x2="968.2" y2="77" stroke="#634529" stroke-width="1.2"/><line x1="984" y1="86.08" x2="995.8" y2="78" stroke="#634529" stroke-width="1.2"/><line x1="980.2" y1="88" x2="974.2" y2="74" stroke="#3f2a1b" stroke-width="2.6"/><line x1="983.8" y1="88" x2="989.2" y2="74" stroke="#3f2a1b" stroke-width="2.6"/><line x1="967.6" y1="77" x2="964.6" y2="73" stroke="#3f2a1b" stroke-width="1.6"/><line x1="970" y1="81" x2="965.2" y2="83" stroke="#3f2a1b" stroke-width="1.3"/><line x1="972.4" y1="84" x2="968.2" y2="85.76" stroke="#3f2a1b" stroke-width="1.3"/><line x1="996.4" y1="78" x2="998.8" y2="73" stroke="#3f2a1b" stroke-width="1.6"/><line x1="991.6" y1="83.52" x2="995.2" y2="84.8" stroke="#3f2a1b" stroke-width="1.3"/><path fill="#1f4a18" d="M981.5 83.5h3v3h-3zM978 81h2v2h-2zM969 77h2v1h1v2h-1v1h-2v-1h-1v-2h1zM967 84h2v1h1v2h-1v1h-2v-1h-1v-2h1z"/><path fill="#183a14" d="M974 82h2v2h-2zM969.5 82.5h3v3h-3zM980 78h2v1h1v2h-1v1h-2v-1h-1v-2h1zM968 79h2v1h1v2h-1v1h-2v-1h-1v-2h1zM994 77h2v1h1v2h-1v1h-2v-1h-1v-2h1z"/><path fill="#25581b" d="M980 84h2v1h1v2h-1v1h-2v-1h-1v-2h1zM974 78h2v1h1v2h-1v1h-2v-1h-1v-2h1zM981.5 77.5h3v3h-3zM979 79h2v1h1v2h-1v1h-2v-1h-1v-2h1z"/><ellipse cx="983" cy="68.7" rx="14.86" ry="9.7" fill="#183a14"/><ellipse cx="972.5" cy="76.24" rx="11.92" ry="9.7" fill="#183a14"/><ellipse cx="993.5" cy="76.24" rx="11.92" ry="9.7" fill="#183a14"/><ellipse cx="983" cy="77.98" rx="17.8" ry="9.7" fill="#183a14"/><ellipse cx="977.96" cy="71.6" rx="12.76" ry="9.7" fill="#183a14"/><ellipse cx="988.04" cy="71.6" rx="12.76" ry="9.7" fill="#183a14"/><ellipse cx="983" cy="67.2" rx="13.36" ry="7.7" fill="#25581b"/><ellipse cx="972.5" cy="74.74" rx="10.42" ry="7.7" fill="#25581b"/><ellipse cx="993.5" cy="74.74" rx="10.42" ry="7.7" fill="#25581b"/><ellipse cx="983" cy="76.48" rx="16.3" ry="7.7" fill="#25581b"/><ellipse cx="977.96" cy="70.1" rx="11.26" ry="7.7" fill="#25581b"/><ellipse cx="988.04" cy="70.1" rx="11.26" ry="7.7" fill="#25581b"/><path fill="#25581b" d="M969 75h2v1h1v2h-1v1h-2v-1h-1v-2h1zM985.5 77.5h3v3h-3zM987 78h2v2h-2zM983.5 82.5h3v3h-3zM986.5 72.5h3v3h-3zM980 68h2v1h1v2h-1v1h-2v-1h-1v-2h1zM973 76h2v2h-2zM991 70h2v2h-2zM974 79h2v1h1v2h-1v1h-2v-1h-1v-2h1zM983.5 74.5h3v3h-3zM985 73h2v1h1v2h-1v1h-2v-1h-1v-2h1zM994.5 71.5h3v3h-3zM990 68h2v1h1v2h-1v1h-2v-1h-1v-2h1zM982.5 66.5h3v3h-3zM991 78h2v2h-2zM977 71h2v2h-2zM982 72h2v2h-2zM990.5 71.5h3v3h-3zM962.5 75.5h3v3h-3zM993 78h2v2h-2zM996.5 77.5h3v3h-3zM972.5 68.5h3v3h-3zM973.5 69.5h3v3h-3zM993.5 73.5h3v3h-3zM974.5 78.5h3v3h-3zM981 69h2v2h-2zM984 82h2v2h-2zM982.5 80.5h3v3h-3zM978.5 77.5h3v3h-3zM977 79h2v2h-2zM965.5 75.5h3v3h-3zM981 76h2v2h-2zM983 78h2v1h1v2h-1v1h-2v-1h-1v-2h1z"/><path fill="#183a14" d="M992 79h2v2h-2zM974.5 77.5h3v3h-3zM974 70h2v2h-2zM975.5 80.5h3v3h-3zM968.5 71.5h3v3h-3zM965 77h2v1h1v2h-1v1h-2v-1h-1v-2h1zM978.5 71.5h3v3h-3zM979 73h2v2h-2zM978 72h2v2h-2zM984.5 71.5h3v3h-3zM972 80h2v1h1v2h-1v1h-2v-1h-1v-2h1zM988 72h2v2h-2zM995 76h2v1h1v2h-1v1h-2v-1h-1v-2h1zM976 70h2v1h1v2h-1v1h-2v-1h-1v-2h1z"/><path fill="#347221" d="M973.5 73.5h3v3h-3zM973 64h2v1h1v2h-1v1h-2v-1h-1v-2h1zM969.5 74.5h3v3h-3zM974 69h2v1h1v2h-1v1h-2v-1h-1v-2h1zM980 70h2v1h1v2h-1v1h-2v-1h-1v-2h1zM994 79h2v2h-2zM979.5 71.5h3v3h-3zM967 78h2v1h1v2h-1v1h-2v-1h-1v-2h1zM974.5 73.5h3v3h-3zM994 70h2v2h-2zM989 76h2v1h1v2h-1v1h-2v-1h-1v-2h1zM965.5 73.5h3v3h-3zM995 71h2v2h-2zM985 68h2v2h-2zM975.5 65.5h3v3h-3zM991.5 73.5h3v3h-3zM986 67h2v1h1v2h-1v1h-2v-1h-1v-2h1zM984 65h2v2h-2zM977 64h2v2h-2zM981 68h2v2h-2zM984 71h2v2h-2zM980 68h2v2h-2zM983 77h2v1h1v2h-1v1h-2v-1h-1v-2h1zM990 66h2v1h1v2h-1v1h-2v-1h-1v-2h1zM990 63h2v2h-2zM979 64h2v2h-2zM977 69h2v1h1v2h-1v1h-2v-1h-1v-2h1zM981.5 82.5h3v3h-3zM995 70h2v1h1v2h-1v1h-2v-1h-1v-2h1zM984 67h2v2h-2zM971 64h2v1h1v2h-1v1h-2v-1h-1v-2h1zM977.5 61.5h3v3h-3zM965 79h2v2h-2zM1000 73h2v2h-2zM985.5 66.5h3v3h-3zM968.5 80.5h3v3h-3zM989 78h2v1h1v2h-1v1h-2v-1h-1v-2h1zM991 70h2v2h-2zM987 72h2v1h1v2h-1v1h-2v-1h-1v-2h1zM965.5 70.5h3v3h-3zM989.5 66.5h3v3h-3zM979 73h2v2h-2zM970.5 66.5h3v3h-3z"/><path fill="#4e8f28" d="M981.5 63.5h3v3h-3zM985.5 69.5h3v3h-3zM982.5 69.5h3v3h-3zM976 68h2v2h-2zM980 74h2v1h1v2h-1v1h-2v-1h-1v-2h1zM977 74h2v1h1v2h-1v1h-2v-1h-1v-2h1zM995 71h2v2h-2zM968.5 72.5h3v3h-3zM992 66h2v1h1v2h-1v1h-2v-1h-1v-2h1zM980 67h2v2h-2zM992 69h2v1h1v2h-1v1h-2v-1h-1v-2h1zM991.5 68.5h3v3h-3zM988 70h2v1h1v2h-1v1h-2v-1h-1v-2h1zM972.5 74.5h3v3h-3zM979 66h2v2h-2zM981 64h2v2h-2zM975 66h2v2h-2zM983 72h2v2h-2zM988 75h2v1h1v2h-1v1h-2v-1h-1v-2h1zM987 65h2v2h-2zM984 59h2v1h1v2h-1v1h-2v-1h-1v-2h1zM986 68h2v1h1v2h-1v1h-2v-1h-1v-2h1zM980.5 63.5h3v3h-3zM991 69h2v1h1v2h-1v1h-2v-1h-1v-2h1zM978 61h2v2h-2zM984 68h2v1h1v2h-1v1h-2v-1h-1v-2h1zM991.5 71.5h3v3h-3zM968 67h2v1h1v2h-1v1h-2v-1h-1v-2h1zM974 66h2v2h-2zM987.5 65.5h3v3h-3zM972.5 68.5h3v3h-3zM971.5 70.5h3v3h-3zM986 69h2v2h-2zM970.5 69.5h3v3h-3zM978 60h2v1h1v2h-1v1h-2v-1h-1v-2h1zM970 72h2v2h-2zM981 64h2v1h1v2h-1v1h-2v-1h-1v-2h1zM971 70h2v1h1v2h-1v1h-2v-1h-1v-2h1zM972 64h2v2h-2zM980 70h2v2h-2zM969.5 66.5h3v3h-3z"/><path fill="#78b03a" d="M985.5 68.5h3v3h-3zM978.5 63.5h3v3h-3zM981.5 61.5h3v3h-3zM965.5 69.5h3v3h-3z"/><path fill="#183a14" d="M967 84h2v1h1v2h-1v1h-2v-1h-1v-2h1zM990 83h2v1h1v2h-1v1h-2v-1h-1v-2h1zM968.5 81.5h3v3h-3zM970 82h2v1h1v2h-1v1h-2v-1h-1v-2h1zM970 82h2v1h1v2h-1v1h-2v-1h-1v-2h1zM976.5 80.5h3v3h-3zM995 81h2v1h1v2h-1v1h-2v-1h-1v-2h1zM973.5 83.5h3v3h-3zM979.5 84.5h3v3h-3zM996 84h2v1h1v2h-1v1h-2v-1h-1v-2h1zM970.5 83.5h3v3h-3zM977.5 82.5h3v3h-3zM985.5 83.5h3v3h-3zM989.5 83.5h3v3h-3z"/><ellipse cx="984" cy="112" rx="22" ry="22" fill="#245a24"/><path fill="#43883a" d="M973 101h2v2h-2zM985.5 95.5h3v3h-3zM980 93h2v1h1v2h-1v1h-2v-1h-1v-2h1zM991.5 99.5h3v3h-3zM975 94h2v2h-2zM1002 103h2v2h-2zM969 97h2v1h1v2h-1v1h-2v-1h-1v-2h1zM963 106h2v2h-2zM964 100h2v2h-2zM978 100h2v1h1v2h-1v1h-2v-1h-1v-2h1zM1004 108h2v2h-2zM986 97h2v1h1v2h-1v1h-2v-1h-1v-2h1zM983 102h2v1h1v2h-1v1h-2v-1h-1v-2h1zM963 105h2v2h-2zM994 103h2v1h1v2h-1v1h-2v-1h-1v-2h1zM1000.5 106.5h3v3h-3zM989.5 96.5h3v3h-3zM976.5 97.5h3v3h-3zM994 97h2v1h1v2h-1v1h-2v-1h-1v-2h1zM1005 109h2v2h-2zM997 98h2v2h-2zM969.5 96.5h3v3h-3zM984 95h2v1h1v2h-1v1h-2v-1h-1v-2h1zM988 99h2v1h1v2h-1v1h-2v-1h-1v-2h1zM995 98h2v1h1v2h-1v1h-2v-1h-1v-2h1zM979 95h2v1h1v2h-1v1h-2v-1h-1v-2h1zM1005 108h2v1h1v2h-1v1h-2v-1h-1v-2h1zM973 101h2v1h1v2h-1v1h-2v-1h-1v-2h1zM964.5 101.5h3v3h-3zM964 107h2v1h1v2h-1v1h-2v-1h-1v-2h1zM990 92h2v2h-2zM987 94h2v2h-2zM982 101h2v1h1v2h-1v1h-2v-1h-1v-2h1zM982 95h2v2h-2zM988 95h2v1h1v2h-1v1h-2v-1h-1v-2h1zM961.5 107.5h3v3h-3zM980.5 90.5h3v3h-3zM1004 106h2v2h-2zM983 95h2v1h1v2h-1v1h-2v-1h-1v-2h1zM977 97h2v2h-2zM979.5 93.5h3v3h-3zM978 92h2v1h1v2h-1v1h-2v-1h-1v-2h1zM990 92h2v1h1v2h-1v1h-2v-1h-1v-2h1zM1000 99h2v2h-2zM974 94h2v2h-2zM993 96h2v2h-2zM962 104h2v1h1v2h-1v1h-2v-1h-1v-2h1zM992 95h2v1h1v2h-1v1h-2v-1h-1v-2h1zM980 94h2v2h-2zM999 107h2v2h-2zM982.5 90.5h3v3h-3zM998 100h2v2h-2zM963 105h2v2h-2zM997 107h2v2h-2zM968 98h2v2h-2zM991.5 103.5h3v3h-3zM989.5 100.5h3v3h-3zM972 96h2v1h1v2h-1v1h-2v-1h-1v-2h1zM972.5 103.5h3v3h-3z"/><path fill="#245a24" d="M978 103h2v2h-2zM990 108h2v2h-2zM963 106h2v1h1v2h-1v1h-2v-1h-1v-2h1zM982 100h2v2h-2zM993 99h2v1h1v2h-1v1h-2v-1h-1v-2h1zM1004 106h2v1h1v2h-1v1h-2v-1h-1v-2h1zM978 106h2v1h1v2h-1v1h-2v-1h-1v-2h1zM965 104h2v2h-2zM963 107h2v1h1v2h-1v1h-2v-1h-1v-2h1zM979.5 101.5h3v3h-3zM984 107h2v2h-2zM996 103h2v1h1v2h-1v1h-2v-1h-1v-2h1zM965 105h2v2h-2zM970 107h2v2h-2zM979 106h2v1h1v2h-1v1h-2v-1h-1v-2h1zM1003 106h2v1h1v2h-1v1h-2v-1h-1v-2h1zM998.5 106.5h3v3h-3zM982 97h2v1h1v2h-1v1h-2v-1h-1v-2h1zM994.5 106.5h3v3h-3z"/><path fill="#2f6e2a" d="M998 102h2v2h-2zM974 105h2v2h-2zM988 103h2v2h-2zM998 103h2v1h1v2h-1v1h-2v-1h-1v-2h1zM970.5 103.5h3v3h-3zM987 108h2v1h1v2h-1v1h-2v-1h-1v-2h1zM986 103h2v1h1v2h-1v1h-2v-1h-1v-2h1zM988.5 99.5h3v3h-3zM985 103h2v2h-2zM978.5 106.5h3v3h-3zM988 108h2v1h1v2h-1v1h-2v-1h-1v-2h1zM981.5 101.5h3v3h-3zM979 100h2v1h1v2h-1v1h-2v-1h-1v-2h1zM983.5 106.5h3v3h-3zM983 90h2v2h-2zM992 96h2v1h1v2h-1v1h-2v-1h-1v-2h1zM981 101h2v2h-2zM976 102h2v2h-2zM993 104h2v1h1v2h-1v1h-2v-1h-1v-2h1zM974 101h2v2h-2zM995 98h2v1h1v2h-1v1h-2v-1h-1v-2h1zM981 108h2v2h-2zM979 108h2v2h-2zM966 105h2v1h1v2h-1v1h-2v-1h-1v-2h1zM1001 107h2v2h-2zM999 101h2v1h1v2h-1v1h-2v-1h-1v-2h1zM974 98h2v2h-2zM985 101h2v1h1v2h-1v1h-2v-1h-1v-2h1zM982 103h2v2h-2zM970 102h2v1h1v2h-1v1h-2v-1h-1v-2h1zM996.5 97.5h3v3h-3zM978.5 92.5h3v3h-3zM961.5 106.5h3v3h-3zM999 108h2v2h-2zM981 105h2v1h1v2h-1v1h-2v-1h-1v-2h1zM985 107h2v2h-2zM968 100h2v2h-2zM998 99h2v2h-2zM967 105h2v1h1v2h-1v1h-2v-1h-1v-2h1zM966 107h2v1h1v2h-1v1h-2v-1h-1v-2h1zM981 102h2v2h-2zM987 106h2v2h-2zM969 101h2v1h1v2h-1v1h-2v-1h-1v-2h1zM974 93h2v1h1v2h-1v1h-2v-1h-1v-2h1zM991 91h2v1h1v2h-1v1h-2v-1h-1v-2h1zM1003 108h2v2h-2zM990.5 91.5h3v3h-3zM971.5 108.5h3v3h-3zM981.5 104.5h3v3h-3zM973 98h2v1h1v2h-1v1h-2v-1h-1v-2h1zM990 105h2v1h1v2h-1v1h-2v-1h-1v-2h1zM992 94h2v1h1v2h-1v1h-2v-1h-1v-2h1zM992 96h2v2h-2zM1004.5 107.5h3v3h-3zM970 101h2v2h-2zM984.5 102.5h3v3h-3zM1005 109h2v1h1v2h-1v1h-2v-1h-1v-2h1zM985 92h2v1h1v2h-1v1h-2v-1h-1v-2h1zM997 101h2v1h1v2h-1v1h-2v-1h-1v-2h1zM973 99h2v1h1v2h-1v1h-2v-1h-1v-2h1z"/><rect x="960" y="87" width="8" height="23" fill="#93493d"/><polygon points="1003,110 1006,98 1014,93 1030,91 1034,87 1050,86 1056,89 1075,88 1094,92 1098,110" fill="#4f473b"/><rect x="1019" y="99" width="3" height="4" fill="#3f392f"/><rect x="1028" y="108" width="6" height="2" fill="#746b5a"/><rect x="1060" y="104" width="3" height="2" fill="#3f392f"/><rect x="1038" y="92" width="5" height="2" fill="#3f392f"/><rect x="1019" y="103" width="6" height="4" fill="#342f27"/><rect x="1057" y="94" width="6" height="3" fill="#342f27"/><rect x="1033" y="94" width="6" height="4" fill="#342f27"/><rect x="1070" y="103" width="5" height="4" fill="#342f27"/><rect x="1020" y="96" width="3" height="3" fill="#746b5a"/><rect x="1060" y="104" width="4" height="4" fill="#3f392f"/><rect x="1088" y="101" width="3" height="3" fill="#3f392f"/><rect x="1030" y="104" width="4" height="3" fill="#655d4e"/><rect x="1029" y="94" width="4" height="2" fill="#342f27"/><rect x="1032" y="101" width="6" height="4" fill="#655d4e"/><rect x="1049" y="105" width="6" height="4" fill="#54412f"/><rect x="1016" y="101" width="6" height="3" fill="#746b5a"/><rect x="1085" y="94" width="3" height="3" fill="#746b5a"/><rect x="1037" y="96" width="6" height="3" fill="#342f27"/><rect x="1049" y="107" width="6" height="3" fill="#54412f"/><rect x="1028" y="98" width="6" height="2" fill="#3f392f"/><rect x="1055" y="101" width="3" height="2" fill="#3f392f"/><rect x="1027" y="95" width="5" height="4" fill="#342f27"/><rect x="1025" y="93" width="5" height="2" fill="#3f392f"/><rect x="1054" y="96" width="4" height="2" fill="#746b5a"/><rect x="1026" y="105" width="4" height="3" fill="#655d4e"/><rect x="1014" y="101" width="3" height="3" fill="#746b5a"/><rect x="1007" y="100" width="5" height="2" fill="#3f392f"/><rect x="1042" y="106" width="3" height="3" fill="#746b5a"/><rect x="1090" y="99" width="3" height="2" fill="#54412f"/><rect x="1078" y="97" width="4" height="4" fill="#3f392f"/><rect x="1028" y="92" width="6" height="3" fill="#746b5a"/><rect x="1086" y="97" width="6" height="3" fill="#54412f"/><rect x="1090" y="92" width="3" height="4" fill="#746b5a"/><rect x="1047" y="95" width="4" height="4" fill="#746b5a"/><rect x="1024" y="101" width="6" height="2" fill="#746b5a"/><rect x="1053" y="96" width="5" height="3" fill="#3f392f"/><rect x="1027" y="106" width="6" height="2" fill="#655d4e"/><rect x="1014" y="97" width="4" height="3" fill="#746b5a"/><rect x="1030" y="105" width="6" height="2" fill="#54412f"/><rect x="1051" y="100" width="3" height="4" fill="#54412f"/><rect x="1016" y="105" width="4" height="4" fill="#3f392f"/><rect x="1062" y="97" width="3" height="3" fill="#655d4e"/><rect x="1033" y="98" width="6" height="4" fill="#342f27"/><rect x="1024" y="103" width="5" height="3" fill="#655d4e"/><rect x="1029" y="94" width="6" height="2" fill="#655d4e"/><rect x="1068" y="95" width="3" height="4" fill="#342f27"/><rect x="1017" y="93" width="5" height="4" fill="#54412f"/><rect x="1088" y="107" width="3" height="2" fill="#746b5a"/><rect x="1070" y="95" width="6" height="4" fill="#342f27"/><rect x="1014" y="98" width="6" height="2" fill="#342f27"/><rect x="1019" y="93" width="3" height="4" fill="#54412f"/><rect x="1042" y="102" width="5" height="3" fill="#342f27"/><rect x="1093" y="107" width="6" height="2" fill="#746b5a"/><rect x="1075" y="100" width="5" height="3" fill="#342f27"/><rect x="1059" y="108" width="6" height="2" fill="#746b5a"/><rect x="1065" y="98" width="3" height="4" fill="#54412f"/><rect x="1006" y="101" width="6" height="3" fill="#342f27"/><rect x="1080" y="100" width="3" height="3" fill="#655d4e"/><rect x="1031" y="96" width="3" height="2" fill="#655d4e"/><rect x="1078" y="95" width="4" height="2" fill="#342f27"/><rect x="1091" y="103" width="6" height="3" fill="#3f392f"/><rect x="1044" y="99" width="6" height="4" fill="#54412f"/><rect x="1020" y="98" width="3" height="4" fill="#342f27"/><rect x="1091" y="98" width="4" height="4" fill="#342f27"/><rect x="1072" y="104" width="5" height="2" fill="#342f27"/><rect x="1035" y="100" width="3" height="2" fill="#54412f"/><rect x="1049" y="100" width="5" height="2" fill="#746b5a"/><rect x="1042" y="98" width="5" height="4" fill="#342f27"/><rect x="1081" y="103" width="6" height="4" fill="#342f27"/><rect x="1090" y="93" width="5" height="4" fill="#3f392f"/><rect x="1066" y="60" width="10" height="1.5" fill="#c03a3a"/><rect x="1079" y="60" width="10" height="1.5" fill="#c03a3a"/><rect x="1066" y="61.5" width="10" height="1" fill="#30304a"/><rect x="1079" y="61.5" width="10" height="1" fill="#30304a"/><line x1="1070" y1="62" x2="1075" y2="67" stroke="#2a4ab0" stroke-width="1.5"/><line x1="1085" y1="62" x2="1080" y2="67" stroke="#2a4ab0" stroke-width="1.5"/><rect x="1073" y="66" width="10" height="5" fill="#2c5ad2"/><rect x="1073" y="71" width="10" height="3" fill="#c2364a"/><rect x="1073" y="74" width="10" height="3" fill="#2c5ad2"/><rect x="1074" y="77" width="3" height="4" fill="#2448b0"/><rect x="1080" y="77" width="3" height="4" fill="#2448b0"/><polygon points="1131,78 1136,66 1150,60 1165,56 1185,54 1196,56 1210,60 1230,58 1252,60 1270,66 1282,78" fill="#514a3e"/><rect x="1224" y="62" width="9" height="4" fill="#403a31"/><rect x="1203" y="59" width="7" height="2" fill="#7f7868"/><rect x="1247" y="70" width="4" height="2" fill="#403a31"/><rect x="1174" y="74" width="7" height="2" fill="#5a4235"/><rect x="1157" y="77" width="9" height="3" fill="#403a31"/><rect x="1269" y="68" width="4" height="3" fill="#6b6151"/><rect x="1192" y="58" width="7" height="4" fill="#7f7868"/><rect x="1205" y="58" width="7" height="4" fill="#7f7868"/><rect x="1168" y="62" width="7" height="3" fill="#6b6151"/><rect x="1208" y="71" width="5" height="2" fill="#74483a"/><rect x="1163" y="59" width="4" height="4" fill="#403a31"/><rect x="1171" y="59" width="5" height="4" fill="#6b6151"/><rect x="1207" y="75" width="7" height="3" fill="#7f7868"/><rect x="1188" y="71" width="9" height="3" fill="#74483a"/><rect x="1251" y="76" width="9" height="2" fill="#74483a"/><rect x="1261" y="78" width="5" height="3" fill="#74483a"/><rect x="1227" y="60" width="5" height="2" fill="#74483a"/><rect x="1241" y="71" width="7" height="4" fill="#4a4537"/><rect x="1217" y="67" width="9" height="3" fill="#6b6151"/><rect x="1176" y="74" width="7" height="2" fill="#4a4537"/><rect x="1231" y="67" width="4" height="3" fill="#4a4537"/><rect x="1215" y="73" width="7" height="3" fill="#74483a"/><rect x="1164" y="73" width="5" height="2" fill="#7f7868"/><rect x="1240" y="74" width="5" height="3" fill="#4a4537"/><rect x="1167" y="59" width="9" height="3" fill="#6b6151"/><rect x="1260" y="71" width="4" height="4" fill="#74483a"/><rect x="1139" y="75" width="4" height="2" fill="#403a31"/><rect x="1233" y="66" width="5" height="2" fill="#74483a"/><rect x="1235" y="72" width="4" height="4" fill="#6b6151"/><rect x="1271" y="69" width="5" height="3" fill="#7f7868"/><rect x="1267" y="70" width="7" height="3" fill="#403a31"/><rect x="1143" y="71" width="9" height="3" fill="#5a4235"/><rect x="1202" y="61" width="9" height="2" fill="#74483a"/><rect x="1143" y="63" width="5" height="3" fill="#7f7868"/><rect x="1212" y="61" width="5" height="2" fill="#6b6151"/><rect x="1145" y="69" width="4" height="4" fill="#7f7868"/><rect x="1238" y="72" width="7" height="4" fill="#7f7868"/><rect x="1158" y="77" width="9" height="2" fill="#74483a"/><rect x="1255" y="76" width="5" height="3" fill="#403a31"/><rect x="1261" y="69" width="7" height="2" fill="#4a4537"/><rect x="1257" y="78" width="9" height="4" fill="#7f7868"/><rect x="1258" y="72" width="5" height="4" fill="#5a4235"/><rect x="1164" y="67" width="9" height="3" fill="#6b6151"/><rect x="1258" y="74" width="7" height="4" fill="#4a4537"/><rect x="1245" y="71" width="5" height="2" fill="#7f7868"/><rect x="1174" y="59" width="7" height="4" fill="#7f7868"/><rect x="1193" y="72" width="5" height="3" fill="#74483a"/><rect x="1153" y="70" width="9" height="3" fill="#6b6151"/><rect x="1273" y="71" width="5" height="2" fill="#6b6151"/><rect x="1207" y="60" width="9" height="4" fill="#7f7868"/><rect x="1182" y="60" width="7" height="2" fill="#5a4235"/><rect x="1177" y="61" width="9" height="2" fill="#4a4537"/><rect x="1225" y="67" width="9" height="2" fill="#74483a"/><rect x="1223" y="64" width="4" height="3" fill="#6b6151"/><rect x="1199" y="70" width="5" height="2" fill="#74483a"/><rect x="1217" y="70" width="4" height="4" fill="#403a31"/><rect x="1143" y="64" width="4" height="4" fill="#6b6151"/><rect x="1168" y="71" width="5" height="3" fill="#7f7868"/><rect x="1271" y="71" width="4" height="2" fill="#4a4537"/><rect x="1263" y="74" width="4" height="3" fill="#74483a"/><polygon points="1244,28 1262,32 1259,48 1241,44" fill="#7b7662"/><polygon points="1244,28 1247,29 1244,44 1241,44" fill="#5a5546"/><line x1="1251" y1="46" x2="1249" y2="60" stroke="#5a5546" stroke-width="2"/><rect x="1432" y="40" width="22" height="38" fill="#4c4232"/><rect x="1428" y="40" width="30" height="4" fill="#3a3226"/><rect x="1436" y="46" width="14" height="10" fill="#6d5d43"/><rect x="1461" y="44" width="44" height="34" fill="#564a38"/><rect x="1468" y="40" width="32" height="6" fill="#8f8264"/><rect x="1472" y="46" width="26" height="8" fill="#7a6b50"/><rect x="1461" y="60" width="44" height="6" fill="#3e362a"/><rect x="1505" y="48" width="40" height="30" fill="#4a4134"/><rect x="1501" y="46" width="8" height="8" fill="#3a3226"/><rect x="1512" y="54" width="20" height="8" fill="#5f5340"/><rect x="1441" y="13" width="5" height="28" fill="#3a2a22"/><rect x="1433" y="17" width="5" height="4" fill="#3a2a22"/><rect x="1433" y="22.5" width="45" height="3" fill="#5b6b78"/><rect x="1433" y="22.5" width="45" height="1" fill="#8a9aa6"/><rect x="1452" y="25" width="6" height="53" fill="#566674"/><rect x="1453" y="25" width="2" height="53" fill="#7d8e9b"/><line x1="1452" y1="40" x2="1447" y2="78" stroke="#44525e" stroke-width="1"/><line x1="1458" y1="40" x2="1463" y2="78" stroke="#44525e" stroke-width="1"/><rect x="1433" y="26" width="5" height="2" fill="#33402e"/><rect x="1433" y="28" width="5" height="5" fill="#66d848"/><rect x="1434" y="29" width="2" height="2" fill="#b8f898"/><rect x="1473" y="26" width="5" height="2" fill="#33402e"/><rect x="1473" y="28" width="5" height="5" fill="#66d848"/><rect x="1474" y="29" width="2" height="2" fill="#b8f898"/><rect x="1507" y="22.5" width="44" height="3" fill="#5b6b78"/><rect x="1507" y="22.5" width="44" height="1" fill="#8a9aa6"/><rect x="1526" y="25" width="6" height="53" fill="#566674"/><rect x="1527" y="25" width="2" height="53" fill="#7d8e9b"/><line x1="1526" y1="40" x2="1521" y2="78" stroke="#44525e" stroke-width="1"/><line x1="1532" y1="40" x2="1537" y2="78" stroke="#44525e" stroke-width="1"/><rect x="1507" y="26" width="5" height="2" fill="#33402e"/><rect x="1507" y="28" width="5" height="5" fill="#66d848"/><rect x="1508" y="29" width="2" height="2" fill="#b8f898"/><rect x="1546" y="26" width="5" height="2" fill="#33402e"/><rect x="1546" y="28" width="5" height="5" fill="#66d848"/><rect x="1547" y="29" width="2" height="2" fill="#b8f898"/><rect x="1619" y="40" width="40" height="38" fill="#4a4236"/><rect x="1626" y="42" width="26" height="6" fill="#5f5646"/><rect x="1619" y="54" width="40" height="5" fill="#35302a"/><rect x="1694" y="46" width="30" height="32" fill="#4a4236"/><rect x="1587" y="52" width="2.5" height="28" fill="#6a3f28"/><rect x="1613" y="52" width="2.5" height="28" fill="#6a3f28"/><rect x="1600" y="60" width="2.5" height="20" fill="#6a3f28"/><polygon points="1585,52 1617,52 1606,64 1596,64" fill="#6e4a36"/><rect x="1584" y="31" width="34" height="18" fill="#7f5a41"/><rect x="1587" y="31" width="10.2" height="18" fill="#94704f"/><rect x="1612" y="31" width="6" height="18" fill="#5e3f2d"/><polygon points="1584,31 1589,25 1597,22 1605,22 1613,25 1618,31" fill="#83604a"/><rect x="1596" y="22" width="10" height="2" fill="#9c7a58"/><rect x="1591.98" y="43.5474" width="2" height="1" fill="#a57f5d"/><rect x="1605.86" y="39.4919" width="2" height="1" fill="#6a4330"/><rect x="1603.71" y="33.46" width="2" height="2" fill="#6a4330"/><rect x="1596" y="46.0589" width="2" height="2" fill="#6a4330"/><rect x="1590.35" y="44.7999" width="2" height="2" fill="#6a4330"/><rect x="1609.15" y="42.555" width="2" height="3" fill="#6a4330"/><rect x="1596.72" y="33.8892" width="2" height="3" fill="#7a5038"/><rect x="1609.99" y="40.6687" width="2" height="1" fill="#a57f5d"/><rect x="1604.13" y="36.268" width="2" height="1" fill="#6a4330"/><rect x="1603.13" y="43.7416" width="2" height="2" fill="#6a4330"/><rect x="1603.8" y="46.5188" width="2" height="1" fill="#7a5038"/><rect x="1608.05" y="40.0253" width="2" height="1" fill="#7a5038"/><rect x="1581" y="48" width="40" height="5" fill="#5e3a26"/><rect x="1582" y="49" width="2" height="3" fill="#8a5a3a"/><rect x="1586" y="49" width="2" height="3" fill="#8a5a3a"/><rect x="1590" y="49" width="2" height="3" fill="#8a5a3a"/><rect x="1594" y="49" width="2" height="3" fill="#8a5a3a"/><rect x="1598" y="49" width="2" height="3" fill="#8a5a3a"/><rect x="1602" y="49" width="2" height="3" fill="#8a5a3a"/><rect x="1606" y="49" width="2" height="3" fill="#8a5a3a"/><rect x="1610" y="49" width="2" height="3" fill="#8a5a3a"/><rect x="1614" y="49" width="2" height="3" fill="#8a5a3a"/><rect x="1618" y="49" width="2" height="3" fill="#8a5a3a"/><rect x="1661" y="52" width="2.5" height="28" fill="#6a3f28"/><rect x="1686" y="52" width="2.5" height="28" fill="#6a3f28"/><rect x="1673.5" y="60" width="2.5" height="20" fill="#6a3f28"/><polygon points="1659,52 1690,52 1679.5,64 1669.5,64" fill="#6e4a36"/><rect x="1658" y="31" width="33" height="18" fill="#7f5a41"/><rect x="1661" y="31" width="9.9" height="18" fill="#94704f"/><rect x="1685" y="31" width="6" height="18" fill="#5e3f2d"/><polygon points="1658,31 1663,25 1670.5,22 1678.5,22 1686,25 1691,31" fill="#83604a"/><rect x="1669.5" y="22" width="10" height="2" fill="#9c7a58"/><rect x="1681.55" y="42.3337" width="2" height="1" fill="#6a4330"/><rect x="1687.75" y="42.0404" width="2" height="1" fill="#a57f5d"/><rect x="1670.85" y="39.6614" width="2" height="1" fill="#a57f5d"/><rect x="1684.47" y="35.335" width="2" height="3" fill="#6a4330"/><rect x="1673.79" y="32.0486" width="2" height="2" fill="#7a5038"/><rect x="1675.72" y="36.8833" width="2" height="3" fill="#7a5038"/><rect x="1665.63" y="33.6458" width="2" height="1" fill="#7a5038"/><rect x="1675.86" y="35.3436" width="2" height="2" fill="#a57f5d"/><rect x="1683.62" y="46.7722" width="2" height="3" fill="#6a4330"/><rect x="1667.54" y="38.3423" width="2" height="3" fill="#6a4330"/><rect x="1661.72" y="45.2369" width="2" height="3" fill="#a57f5d"/><rect x="1675.21" y="33.8719" width="2" height="2" fill="#6a4330"/><rect x="1655" y="48" width="39" height="5" fill="#5e3a26"/><rect x="1656" y="49" width="2" height="3" fill="#8a5a3a"/><rect x="1660" y="49" width="2" height="3" fill="#8a5a3a"/><rect x="1664" y="49" width="2" height="3" fill="#8a5a3a"/><rect x="1668" y="49" width="2" height="3" fill="#8a5a3a"/><rect x="1672" y="49" width="2" height="3" fill="#8a5a3a"/><rect x="1676" y="49" width="2" height="3" fill="#8a5a3a"/><rect x="1680" y="49" width="2" height="3" fill="#8a5a3a"/><rect x="1684" y="49" width="2" height="3" fill="#8a5a3a"/><rect x="1688" y="49" width="2" height="3" fill="#8a5a3a"/><rect x="1692" y="49" width="2" height="3" fill="#8a5a3a"/><rect x="1731" y="52" width="2.5" height="28" fill="#6a3f28"/><rect x="1757" y="52" width="2.5" height="28" fill="#6a3f28"/><rect x="1744" y="60" width="2.5" height="20" fill="#6a3f28"/><polygon points="1729,52 1761,52 1750,64 1740,64" fill="#6e4a36"/><rect x="1728" y="31" width="34" height="18" fill="#7f5a41"/><rect x="1731" y="31" width="10.2" height="18" fill="#94704f"/><rect x="1756" y="31" width="6" height="18" fill="#5e3f2d"/><polygon points="1728,31 1733,25 1741,22 1749,22 1757,25 1762,31" fill="#83604a"/><rect x="1740" y="22" width="10" height="2" fill="#9c7a58"/><rect x="1744.51" y="33.5099" width="2" height="2" fill="#6a4330"/><rect x="1736.18" y="46.8385" width="2" height="1" fill="#7a5038"/><rect x="1741.58" y="34.6638" width="2" height="3" fill="#7a5038"/><rect x="1746.48" y="37.7505" width="2" height="1" fill="#7a5038"/><rect x="1757.89" y="35.3359" width="2" height="2" fill="#7a5038"/><rect x="1741.99" y="34.7294" width="2" height="2" fill="#7a5038"/><rect x="1731.68" y="45.7182" width="2" height="3" fill="#6a4330"/><rect x="1740.3" y="45.0803" width="2" height="1" fill="#6a4330"/><rect x="1749.02" y="43.1955" width="2" height="3" fill="#6a4330"/><rect x="1758.82" y="36.199" width="2" height="2" fill="#a57f5d"/><rect x="1738.89" y="34.3148" width="2" height="2" fill="#a57f5d"/><rect x="1740.23" y="37.7188" width="2" height="3" fill="#7a5038"/><rect x="1725" y="48" width="40" height="5" fill="#5e3a26"/><rect x="1726" y="49" width="2" height="3" fill="#8a5a3a"/><rect x="1730" y="49" width="2" height="3" fill="#8a5a3a"/><rect x="1734" y="49" width="2" height="3" fill="#8a5a3a"/><rect x="1738" y="49" width="2" height="3" fill="#8a5a3a"/><rect x="1742" y="49" width="2" height="3" fill="#8a5a3a"/><rect x="1746" y="49" width="2" height="3" fill="#8a5a3a"/><rect x="1750" y="49" width="2" height="3" fill="#8a5a3a"/><rect x="1754" y="49" width="2" height="3" fill="#8a5a3a"/><rect x="1758" y="49" width="2" height="3" fill="#8a5a3a"/><rect x="1762" y="49" width="2" height="3" fill="#8a5a3a"/><rect x="1621" y="13" width="4" height="3" fill="#4a4420"/><rect x="1619" y="16" width="8.5" height="20" fill="#3a3618"/><rect x="1620.5" y="17" width="5.5" height="18" fill="#77742a"/><rect x="1621.5" y="18" width="2" height="16" fill="#9a9636"/><rect x="1621" y="36" width="4" height="2" fill="#4a4420"/><rect x="1694" y="13" width="4" height="3" fill="#4a4420"/><rect x="1692" y="16" width="8.5" height="20" fill="#3a3618"/><rect x="1693.5" y="17" width="5.5" height="18" fill="#77742a"/><rect x="1694.5" y="18" width="2" height="16" fill="#9a9636"/><rect x="1694" y="36" width="4" height="2" fill="#4a4420"/><rect x="1766" y="13" width="4" height="3" fill="#4a4420"/><rect x="1764" y="16" width="8.5" height="20" fill="#3a3618"/><rect x="1765.5" y="17" width="5.5" height="18" fill="#77742a"/><rect x="1766.5" y="18" width="2" height="16" fill="#9a9636"/><rect x="1766" y="36" width="4" height="2" fill="#4a4420"/><rect x="1766.5" y="32" width="4" height="1.5" fill="#38e0e0"/><line x1="1623" y1="37" x2="1623" y2="42" stroke="#7a5a3a" stroke-width="2"/><line x1="1696" y1="37" x2="1692" y2="42" stroke="#a8764a" stroke-width="2"/><line x1="1768" y1="37" x2="1763" y2="42" stroke="#a8764a" stroke-width="2"/><rect x="1086" y="49.5" width="764" height="1" fill="#59615a"/><rect x="1130" y="53.5" width="720" height="1" fill="#6b736b"/><rect x="1086" y="60" width="764" height="2.5" fill="#5c655c"/><rect x="1090" y="48.5" width="2" height="1" fill="#3f463f"/><rect x="1099" y="48.5" width="2" height="1" fill="#3f463f"/><rect x="1108" y="48.5" width="2" height="1" fill="#3f463f"/><rect x="1117" y="48.5" width="2" height="1" fill="#3f463f"/><rect x="1126" y="48.5" width="2" height="1" fill="#3f463f"/><rect x="1135" y="48.5" width="2" height="1" fill="#3f463f"/><rect x="1144" y="48.5" width="2" height="1" fill="#3f463f"/><rect x="1153" y="48.5" width="2" height="1" fill="#3f463f"/><rect x="1162" y="48.5" width="2" height="1" fill="#3f463f"/><rect x="1171" y="48.5" width="2" height="1" fill="#3f463f"/><rect x="1180" y="48.5" width="2" height="1" fill="#3f463f"/><rect x="1189" y="48.5" width="2" height="1" fill="#3f463f"/><rect x="1198" y="48.5" width="2" height="1" fill="#3f463f"/><rect x="1207" y="48.5" width="2" height="1" fill="#3f463f"/><rect x="1216" y="48.5" width="2" height="1" fill="#3f463f"/><rect x="1225" y="48.5" width="2" height="1" fill="#3f463f"/><rect x="1234" y="48.5" width="2" height="1" fill="#3f463f"/><rect x="1243" y="48.5" width="2" height="1" fill="#3f463f"/><rect x="1252" y="48.5" width="2" height="1" fill="#3f463f"/><rect x="1261" y="48.5" width="2" height="1" fill="#3f463f"/><rect x="1270" y="48.5" width="2" height="1" fill="#3f463f"/><rect x="1279" y="48.5" width="2" height="1" fill="#3f463f"/><rect x="1288" y="48.5" width="2" height="1" fill="#3f463f"/><rect x="1297" y="48.5" width="2" height="1" fill="#3f463f"/><rect x="1306" y="48.5" width="2" height="1" fill="#3f463f"/><rect x="1315" y="48.5" width="2" height="1" fill="#3f463f"/><rect x="1324" y="48.5" width="2" height="1" fill="#3f463f"/><rect x="1333" y="48.5" width="2" height="1" fill="#3f463f"/><rect x="1342" y="48.5" width="2" height="1" fill="#3f463f"/><rect x="1351" y="48.5" width="2" height="1" fill="#3f463f"/><rect x="1360" y="48.5" width="2" height="1" fill="#3f463f"/><rect x="1369" y="48.5" width="2" height="1" fill="#3f463f"/><rect x="1378" y="48.5" width="2" height="1" fill="#3f463f"/><rect x="1387" y="48.5" width="2" height="1" fill="#3f463f"/><rect x="1396" y="48.5" width="2" height="1" fill="#3f463f"/><rect x="1405" y="48.5" width="2" height="1" fill="#3f463f"/><rect x="1414" y="48.5" width="2" height="1" fill="#3f463f"/><rect x="1423" y="48.5" width="2" height="1" fill="#3f463f"/><rect x="1432" y="48.5" width="2" height="1" fill="#3f463f"/><rect x="1441" y="48.5" width="2" height="1" fill="#3f463f"/><rect x="1450" y="48.5" width="2" height="1" fill="#3f463f"/><rect x="1459" y="48.5" width="2" height="1" fill="#3f463f"/><rect x="1468" y="48.5" width="2" height="1" fill="#3f463f"/><rect x="1477" y="48.5" width="2" height="1" fill="#3f463f"/><rect x="1486" y="48.5" width="2" height="1" fill="#3f463f"/><rect x="1495" y="48.5" width="2" height="1" fill="#3f463f"/><rect x="1504" y="48.5" width="2" height="1" fill="#3f463f"/><rect x="1513" y="48.5" width="2" height="1" fill="#3f463f"/><rect x="1522" y="48.5" width="2" height="1" fill="#3f463f"/><rect x="1531" y="48.5" width="2" height="1" fill="#3f463f"/><rect x="1540" y="48.5" width="2" height="1" fill="#3f463f"/><rect x="1549" y="48.5" width="2" height="1" fill="#3f463f"/><rect x="1558" y="48.5" width="2" height="1" fill="#3f463f"/><rect x="1567" y="48.5" width="2" height="1" fill="#3f463f"/><rect x="1576" y="48.5" width="2" height="1" fill="#3f463f"/><rect x="1585" y="48.5" width="2" height="1" fill="#3f463f"/><rect x="1594" y="48.5" width="2" height="1" fill="#3f463f"/><rect x="1603" y="48.5" width="2" height="1" fill="#3f463f"/><rect x="1612" y="48.5" width="2" height="1" fill="#3f463f"/><rect x="1621" y="48.5" width="2" height="1" fill="#3f463f"/><rect x="1630" y="48.5" width="2" height="1" fill="#3f463f"/><rect x="1639" y="48.5" width="2" height="1" fill="#3f463f"/><rect x="1648" y="48.5" width="2" height="1" fill="#3f463f"/><rect x="1657" y="48.5" width="2" height="1" fill="#3f463f"/><rect x="1666" y="48.5" width="2" height="1" fill="#3f463f"/><rect x="1675" y="48.5" width="2" height="1" fill="#3f463f"/><rect x="1684" y="48.5" width="2" height="1" fill="#3f463f"/><rect x="1693" y="48.5" width="2" height="1" fill="#3f463f"/><rect x="1702" y="48.5" width="2" height="1" fill="#3f463f"/><rect x="1711" y="48.5" width="2" height="1" fill="#3f463f"/><rect x="1720" y="48.5" width="2" height="1" fill="#3f463f"/><rect x="1729" y="48.5" width="2" height="1" fill="#3f463f"/><rect x="1738" y="48.5" width="2" height="1" fill="#3f463f"/><rect x="1747" y="48.5" width="2" height="1" fill="#3f463f"/><rect x="1756" y="48.5" width="2" height="1" fill="#3f463f"/><rect x="1765" y="48.5" width="2" height="1" fill="#3f463f"/><rect x="1774" y="48.5" width="2" height="1" fill="#3f463f"/><rect x="1783" y="48.5" width="2" height="1" fill="#3f463f"/><rect x="1792" y="48.5" width="2" height="1" fill="#3f463f"/><rect x="1801" y="48.5" width="2" height="1" fill="#3f463f"/><rect x="1810" y="48.5" width="2" height="1" fill="#3f463f"/><rect x="1819" y="48.5" width="2" height="1" fill="#3f463f"/><rect x="1828" y="48.5" width="2" height="1" fill="#3f463f"/><rect x="1837" y="48.5" width="2" height="1" fill="#3f463f"/><rect x="1846" y="48.5" width="2" height="1" fill="#3f463f"/><defs><pattern id="mesh" width="9" height="9" patternUnits="userSpaceOnUse" patternTransform="translate(2 62)"><path d="M0 0L4.5 4.5L9 0M0 9L4.5 4.5L9 9" stroke="#45473f" stroke-width="1.15" fill="none"/></pattern></defs><rect x="1096" y="62" width="754" height="17" fill="url(#mesh)"/><rect x="1138" y="48" width="4" height="62" fill="#6c756c"/><rect x="1139" y="48" width="1.2" height="62" fill="#8d968d"/><rect x="1198" y="48" width="3.2" height="32" fill="#6c756c"/><rect x="1202.4" y="48" width="3.2" height="32" fill="#6c756c"/><rect x="1199" y="48" width="1" height="32" fill="#8d968d"/><rect x="1203.4" y="48" width="1" height="32" fill="#8d968d"/><rect x="1262" y="48" width="3.2" height="32" fill="#6c756c"/><rect x="1266.4" y="48" width="3.2" height="32" fill="#6c756c"/><rect x="1263" y="48" width="1" height="32" fill="#8d968d"/><rect x="1267.4" y="48" width="1" height="32" fill="#8d968d"/><rect x="1324" y="48" width="3.2" height="32" fill="#6c756c"/><rect x="1328.4" y="48" width="3.2" height="32" fill="#6c756c"/><rect x="1325" y="48" width="1" height="32" fill="#8d968d"/><rect x="1329.4" y="48" width="1" height="32" fill="#8d968d"/><rect x="1389" y="48" width="3.2" height="32" fill="#6c756c"/><rect x="1393.4" y="48" width="3.2" height="32" fill="#6c756c"/><rect x="1390" y="48" width="1" height="32" fill="#8d968d"/><rect x="1394.4" y="48" width="1" height="32" fill="#8d968d"/><rect x="1451.5" y="48" width="3.2" height="32" fill="#6c756c"/><rect x="1455.9" y="48" width="3.2" height="32" fill="#6c756c"/><rect x="1452.5" y="48" width="1" height="32" fill="#8d968d"/><rect x="1456.9" y="48" width="1" height="32" fill="#8d968d"/><rect x="1516" y="48" width="3.2" height="32" fill="#6c756c"/><rect x="1520.4" y="48" width="3.2" height="32" fill="#6c756c"/><rect x="1517" y="48" width="1" height="32" fill="#8d968d"/><rect x="1521.4" y="48" width="1" height="32" fill="#8d968d"/><rect x="1579" y="48" width="3.2" height="32" fill="#6c756c"/><rect x="1583.4" y="48" width="3.2" height="32" fill="#6c756c"/><rect x="1580" y="48" width="1" height="32" fill="#8d968d"/><rect x="1584.4" y="48" width="1" height="32" fill="#8d968d"/><rect x="1642" y="48" width="3.2" height="32" fill="#6c756c"/><rect x="1646.4" y="48" width="3.2" height="32" fill="#6c756c"/><rect x="1643" y="48" width="1" height="32" fill="#8d968d"/><rect x="1647.4" y="48" width="1" height="32" fill="#8d968d"/><rect x="1705" y="48" width="3.2" height="32" fill="#6c756c"/><rect x="1709.4" y="48" width="3.2" height="32" fill="#6c756c"/><rect x="1706" y="48" width="1" height="32" fill="#8d968d"/><rect x="1710.4" y="48" width="1" height="32" fill="#8d968d"/><rect x="1768" y="48" width="3.2" height="32" fill="#6c756c"/><rect x="1772.4" y="48" width="3.2" height="32" fill="#6c756c"/><rect x="1769" y="48" width="1" height="32" fill="#8d968d"/><rect x="1773.4" y="48" width="1" height="32" fill="#8d968d"/><rect x="1831" y="48" width="3.2" height="32" fill="#6c756c"/><rect x="1835.4" y="48" width="3.2" height="32" fill="#6c756c"/><rect x="1832" y="48" width="1" height="32" fill="#8d968d"/><rect x="1836.4" y="48" width="1" height="32" fill="#8d968d"/><polygon points="1090,21 1094,19 1125,19 1129,21 1129,26 1125,28 1094,28 1090,26" fill="#6b4c3b"/><rect x="1094" y="18.5" width="31" height="1.5" fill="#3a2820"/><rect x="1095" y="20" width="1.5" height="7" fill="#8f7966"/><rect x="1098" y="20" width="1.5" height="7" fill="#8f7966"/><rect x="1101" y="20" width="1.5" height="7" fill="#8f7966"/><rect x="1104" y="20" width="1.5" height="7" fill="#8f7966"/><rect x="1107" y="20" width="1.5" height="7" fill="#8f7966"/><rect x="1110" y="20" width="1.5" height="7" fill="#8f7966"/><rect x="1113" y="20" width="1.5" height="7" fill="#8f7966"/><rect x="1116" y="20" width="1.5" height="7" fill="#8f7966"/><rect x="1119" y="20" width="1.5" height="7" fill="#8f7966"/><rect x="1122" y="20" width="1.5" height="7" fill="#8f7966"/><rect x="1125" y="20" width="1.5" height="7" fill="#8f7966"/><rect x="1097" y="28" width="2.5" height="10" fill="#5a3a28"/><rect x="1121" y="28" width="2.5" height="10" fill="#5a3a28"/><rect x="1106" y="28" width="1.5" height="10" fill="#5a3a28"/><circle cx="1109.7" cy="34" r="3.2" fill="#ff7a1e"/><circle cx="1109.7" cy="34.6" r="1.8" fill="#ffd24a"/><rect x="1108.7" y="30" width="2" height="2" fill="#ff7a1e"/><rect x="1092.5" y="37.5" width="34" height="12" fill="#5c3c2a"/><rect x="1092.5" y="37.5" width="34" height="1.5" fill="#3a261c"/><rect x="1092.5" y="47.5" width="34" height="2" fill="#3a261c"/><rect x="1094" y="39.5" width="2.5" height="8" fill="#75503a"/><rect x="1098" y="39.5" width="2.5" height="8" fill="#75503a"/><rect x="1102" y="39.5" width="2.5" height="8" fill="#75503a"/><rect x="1106" y="39.5" width="2.5" height="8" fill="#75503a"/><rect x="1110" y="39.5" width="2.5" height="8" fill="#75503a"/><rect x="1114" y="39.5" width="2.5" height="8" fill="#75503a"/><rect x="1118" y="39.5" width="2.5" height="8" fill="#75503a"/><rect x="1122" y="39.5" width="2.5" height="8" fill="#75503a"/><rect x="1097" y="49.5" width="2.5" height="45" fill="#4a2e20"/><rect x="1105" y="49.5" width="2.5" height="45" fill="#4a2e20"/><rect x="1113" y="49.5" width="2.5" height="45" fill="#4a2e20"/><rect x="1121" y="49.5" width="2.5" height="45" fill="#4a2e20"/><line x1="1097" y1="52" x2="1123" y2="65" stroke="#4a2e20" stroke-width="1.6"/><line x1="1123" y1="52" x2="1097" y2="65" stroke="#4a2e20" stroke-width="1.6"/><rect x="1097" y="51" width="26" height="1.8" fill="#4a2e20"/><line x1="1097" y1="66" x2="1123" y2="79" stroke="#4a2e20" stroke-width="1.6"/><line x1="1123" y1="66" x2="1097" y2="79" stroke="#4a2e20" stroke-width="1.6"/><rect x="1097" y="65" width="26" height="1.8" fill="#4a2e20"/><line x1="1097" y1="80" x2="1123" y2="93" stroke="#4a2e20" stroke-width="1.6"/><line x1="1123" y1="80" x2="1097" y2="93" stroke="#4a2e20" stroke-width="1.6"/><rect x="1097" y="79" width="26" height="1.8" fill="#4a2e20"/><rect x="1095" y="94" width="32" height="16" fill="#6d6b5c"/><rect x="1095" y="94" width="32" height="2" fill="#86846f"/><rect x="1096.29" y="101.051" width="3" height="2" fill="#55533f"/><rect x="1123.32" y="105.734" width="3" height="2" fill="#55533f"/><rect x="1102.83" y="103.727" width="3" height="2" fill="#55533f"/><rect x="1108.67" y="107.764" width="3" height="2" fill="#55533f"/><rect x="1122.33" y="105.597" width="3" height="2" fill="#55533f"/><rect x="1117.61" y="98.5632" width="3" height="2" fill="#55533f"/><rect x="1116.04" y="98.0113" width="3" height="2" fill="#55533f"/><rect x="1100.46" y="106.721" width="3" height="2" fill="#55533f"/><rect x="1105.17" y="107.142" width="3" height="2" fill="#55533f"/><rect x="1107.72" y="99.571" width="3" height="2" fill="#55533f"/><line x1="1082" y1="56" x2="1098" y2="56" stroke="#5c655c" stroke-width="1.5"/><defs><linearGradient id="rust" x1="0" y1="0" x2="0" y2="1"><stop offset="0" stop-color="#857b6a"/><stop offset="0.4" stop-color="#7c6f5d"/><stop offset="0.75" stop-color="#6c4d39"/><stop offset="1" stop-color="#5a3423"/></linearGradient></defs><rect x="1141" y="78" width="709" height="32" fill="url(#rust)"/><defs><pattern id="corr" width="7" height="32" patternUnits="userSpaceOnUse" patternTransform="translate(1141 78)"><rect x="0" y="0" width="1" height="32" fill="#463f35" fill-opacity=".75"/><rect x="2" y="0" width="1" height="32" fill="#a39a88" fill-opacity=".45"/><rect x="3.5" y="0" width="1" height="32" fill="#463f35" fill-opacity=".75"/></pattern></defs><rect x="1141" y="78" width="709" height="32" fill="url(#corr)"/><rect x="1141" y="108" width="709" height="2" fill="#5a3020"/><rect x="1134" y="72" width="2.5" height="38" fill="#6f3a22"/><rect x="1140" y="72" width="2.5" height="38" fill="#66331e"/><rect x="1134.8" y="72" width="0.9" height="38" fill="#8c4f30"/><rect x="1175.7" y="72" width="2.5" height="38" fill="#6f3a22"/><rect x="1181.7" y="72" width="2.5" height="38" fill="#66331e"/><rect x="1176.5" y="72" width="0.9" height="38" fill="#8c4f30"/><rect x="1217.4" y="72" width="2.5" height="38" fill="#6f3a22"/><rect x="1223.4" y="72" width="2.5" height="38" fill="#66331e"/><rect x="1218.2" y="72" width="0.9" height="38" fill="#8c4f30"/><rect x="1259.1" y="72" width="2.5" height="38" fill="#6f3a22"/><rect x="1265.1" y="72" width="2.5" height="38" fill="#66331e"/><rect x="1259.9" y="72" width="0.9" height="38" fill="#8c4f30"/><rect x="1300.8" y="72" width="2.5" height="38" fill="#6f3a22"/><rect x="1306.8" y="72" width="2.5" height="38" fill="#66331e"/><rect x="1301.6" y="72" width="0.9" height="38" fill="#8c4f30"/><rect x="1342.5" y="72" width="2.5" height="38" fill="#6f3a22"/><rect x="1348.5" y="72" width="2.5" height="38" fill="#66331e"/><rect x="1343.3" y="72" width="0.9" height="38" fill="#8c4f30"/><rect x="1384.2" y="72" width="2.5" height="38" fill="#6f3a22"/><rect x="1390.2" y="72" width="2.5" height="38" fill="#66331e"/><rect x="1385" y="72" width="0.9" height="38" fill="#8c4f30"/><rect x="1425.9" y="72" width="2.5" height="38" fill="#6f3a22"/><rect x="1431.9" y="72" width="2.5" height="38" fill="#66331e"/><rect x="1426.7" y="72" width="0.9" height="38" fill="#8c4f30"/><rect x="1467.6" y="72" width="2.5" height="38" fill="#6f3a22"/><rect x="1473.6" y="72" width="2.5" height="38" fill="#66331e"/><rect x="1468.4" y="72" width="0.9" height="38" fill="#8c4f30"/><rect x="1509.3" y="72" width="2.5" height="38" fill="#6f3a22"/><rect x="1515.3" y="72" width="2.5" height="38" fill="#66331e"/><rect x="1510.1" y="72" width="0.9" height="38" fill="#8c4f30"/><rect x="1551" y="72" width="2.5" height="38" fill="#6f3a22"/><rect x="1557" y="72" width="2.5" height="38" fill="#66331e"/><rect x="1551.8" y="72" width="0.9" height="38" fill="#8c4f30"/><rect x="1592.7" y="72" width="2.5" height="38" fill="#6f3a22"/><rect x="1598.7" y="72" width="2.5" height="38" fill="#66331e"/><rect x="1593.5" y="72" width="0.9" height="38" fill="#8c4f30"/><rect x="1634.4" y="72" width="2.5" height="38" fill="#6f3a22"/><rect x="1640.4" y="72" width="2.5" height="38" fill="#66331e"/><rect x="1635.2" y="72" width="0.9" height="38" fill="#8c4f30"/><rect x="1676.1" y="72" width="2.5" height="38" fill="#6f3a22"/><rect x="1682.1" y="72" width="2.5" height="38" fill="#66331e"/><rect x="1676.9" y="72" width="0.9" height="38" fill="#8c4f30"/><rect x="1717.8" y="72" width="2.5" height="38" fill="#6f3a22"/><rect x="1723.8" y="72" width="2.5" height="38" fill="#66331e"/><rect x="1718.6" y="72" width="0.9" height="38" fill="#8c4f30"/><rect x="1759.5" y="72" width="2.5" height="38" fill="#6f3a22"/><rect x="1765.5" y="72" width="2.5" height="38" fill="#66331e"/><rect x="1760.3" y="72" width="0.9" height="38" fill="#8c4f30"/><rect x="1801.2" y="72" width="2.5" height="38" fill="#6f3a22"/><rect x="1807.2" y="72" width="2.5" height="38" fill="#66331e"/><rect x="1802" y="72" width="0.9" height="38" fill="#8c4f30"/><rect x="1842.9" y="72" width="2.5" height="38" fill="#6f3a22"/><rect x="1848.9" y="72" width="2.5" height="38" fill="#66331e"/><rect x="1843.7" y="72" width="0.9" height="38" fill="#8c4f30"/><polygon points="1182,80 1186,77 1208,77 1212,80 1210,85 1184,85" fill="#9c9c9c"/><rect x="1184" y="77" width="26" height="2" fill="#c4c4c4"/><rect x="1195" y="85" width="4" height="12" fill="#7e7e7e"/><polygon points="1192,99 1194,96 1199,96 1201,99 1201,110 1192,110" fill="#b4b4b4"/><rect x="1193" y="99" width="2" height="11" fill="#dcdcdc"/><rect x="1268" y="82" width="12" height="4" fill="#5a3a24"/><rect x="1268" y="88" width="12" height="3" fill="#a05a28"/><rect x="1268" y="94" width="12" height="16" fill="#6a4a30"/><rect x="1280" y="85" width="18" height="25" fill="#6b5234"/><rect x="1284" y="82" width="10" height="5" fill="#8a6a3a"/><rect x="1285" y="90" width="8" height="4" fill="#c8a040"/><rect x="1282" y="98" width="14" height="2" fill="#3a2c1c"/><rect x="1316" y="85" width="31" height="25" fill="#4a3a2a"/><rect x="1319" y="88" width="25" height="20" fill="#6d533a"/><rect x="1319" y="91" width="25" height="1" fill="#4a3a2a"/><rect x="1319" y="96" width="25" height="1" fill="#4a3a2a"/><rect x="1319" y="101" width="25" height="1" fill="#4a3a2a"/><rect x="1315" y="83" width="33" height="3" fill="#5a4632"/><rect x="1318" y="97" width="2" height="2" fill="#e8502a"/><rect x="1362" y="85" width="30" height="25" fill="#4a3a2a"/><rect x="1365" y="88" width="24" height="20" fill="#6d533a"/><rect x="1365" y="91" width="24" height="1" fill="#4a3a2a"/><rect x="1365" y="96" width="24" height="1" fill="#4a3a2a"/><rect x="1365" y="101" width="24" height="1" fill="#4a3a2a"/><rect x="1361" y="83" width="32" height="3" fill="#5a4632"/><rect x="1364" y="97" width="2" height="2" fill="#e8502a"/><rect x="1311" y="76" width="6" height="12" fill="#7a7a70"/><rect x="1390" y="76" width="6" height="12" fill="#7a7a70"/><rect x="1402" y="82" width="38" height="28" fill="#3b3129"/><rect x="1406" y="74" width="30" height="10" fill="#4a3e32"/><rect x="1417" y="63" width="7" height="18" fill="#a38c62"/><rect x="1416" y="61" width="9" height="3" fill="#8a744e"/><rect x="1411" y="90" width="20" height="18" fill="#221c18"/><rect x="1409" y="88" width="24" height="2" fill="#6a5a48"/><rect x="1403" y="72" width="8" height="10" fill="#5a4c3c"/><circle cx="1407" cy="72" r="4" fill="#5a4c3c"/><rect x="1432" y="80" width="8" height="3" fill="#8a8070"/><rect x="1436" y="96" width="6" height="2" fill="#40d8e8"/><rect x="1436" y="104" width="4" height="2" fill="#40d8e8"/><polygon points="1445,88 1448,82 1456,80 1461,83 1462,90 1445,91" fill="#d24a4a"/><rect x="1447" y="82" width="8" height="2" fill="#e87070"/><rect x="1447" y="91" width="12" height="8" fill="#e2a482"/><rect x="1449" y="94" width="2" height="2" fill="#40282a"/><rect x="1455" y="94" width="2" height="2" fill="#40282a"/><rect x="1445" y="91" width="3" height="12" fill="#b83a3a"/><rect x="1459" y="91" width="4" height="14" fill="#b83a3a"/><rect x="1446" y="99" width="14" height="11" fill="#4a3a34"/><rect x="1442" y="102" width="8" height="3" fill="#2a2a2a"/><line x1="1840" y1="76" x2="1836" y2="50" stroke="#2b241c" stroke-width="4"/><line x1="1836" y1="54" x2="1815" y2="38" stroke="#2b241c" stroke-width="2.5"/><line x1="1838" y1="50" x2="1858" y2="34" stroke="#2b241c" stroke-width="2.5"/><line x1="1800" y1="42" x2="1782" y2="30" stroke="#1f1a14" stroke-width="1.5"/><line x1="1790" y1="34" x2="1786" y2="24" stroke="#1f1a14" stroke-width="1.2"/><line x1="1796" y1="54" x2="1780" y2="60" stroke="#1f1a14" stroke-width="1.3"/><line x1="1866" y1="30" x2="1876" y2="18" stroke="#1f1a14" stroke-width="1.3"/><line x1="1870" y1="26" x2="1880" y2="26" stroke="#1f1a14" stroke-width="1.2"/><ellipse cx="1832" cy="26" rx="28.72" ry="16" fill="#2b2b22"/><ellipse cx="1811" cy="39" rx="22.84" ry="16" fill="#2b2b22"/><ellipse cx="1853" cy="39" rx="22.84" ry="16" fill="#2b2b22"/><ellipse cx="1832" cy="42" rx="34.6" ry="16" fill="#2b2b22"/><ellipse cx="1821.92" cy="31" rx="24.52" ry="16" fill="#2b2b22"/><ellipse cx="1842.08" cy="31" rx="24.52" ry="16" fill="#2b2b22"/><ellipse cx="1832" cy="24.5" rx="27.22" ry="14" fill="#3d3c30"/><ellipse cx="1811" cy="37.5" rx="21.34" ry="14" fill="#3d3c30"/><ellipse cx="1853" cy="37.5" rx="21.34" ry="14" fill="#3d3c30"/><ellipse cx="1832" cy="40.5" rx="33.1" ry="14" fill="#3d3c30"/><ellipse cx="1821.92" cy="29.5" rx="23.02" ry="14" fill="#3d3c30"/><ellipse cx="1842.08" cy="29.5" rx="23.02" ry="14" fill="#3d3c30"/><path fill="#3d3c30" d="M1839 42h2v2h-2zM1853.5 35.5h3v3h-3zM1848 27h2v1h1v2h-1v1h-2v-1h-1v-2h1zM1860.5 46.5h3v3h-3zM1836 31h2v2h-2zM1796.5 33.5h3v3h-3zM1847 42h2v1h1v2h-1v1h-2v-1h-1v-2h1zM1863 34h2v2h-2zM1826 27h2v1h1v2h-1v1h-2v-1h-1v-2h1zM1855 49h2v2h-2zM1804 31h2v1h1v2h-1v1h-2v-1h-1v-2h1zM1852.5 37.5h3v3h-3zM1822.5 30.5h3v3h-3zM1832 35h2v1h1v2h-1v1h-2v-1h-1v-2h1zM1821.5 46.5h3v3h-3zM1823 34h2v2h-2zM1833.5 33.5h3v3h-3zM1862 42h2v2h-2zM1809 35h2v2h-2zM1817.5 33.5h3v3h-3zM1837 34h2v1h1v2h-1v1h-2v-1h-1v-2h1zM1832 50h2v2h-2zM1846 31h2v2h-2zM1836 36h2v2h-2zM1798 46h2v2h-2zM1814 48h2v1h1v2h-1v1h-2v-1h-1v-2h1zM1813.5 35.5h3v3h-3zM1843 29h2v2h-2zM1815 24h2v1h1v2h-1v1h-2v-1h-1v-2h1zM1836 32h2v2h-2zM1848 38h2v1h1v2h-1v1h-2v-1h-1v-2h1zM1805.5 35.5h3v3h-3zM1843 43h2v2h-2zM1837.5 50.5h3v3h-3zM1814.5 24.5h3v3h-3zM1808 33h2v2h-2zM1833 30h2v2h-2zM1813.5 33.5h3v3h-3zM1815.5 30.5h3v3h-3zM1804.5 45.5h3v3h-3zM1852 47h2v2h-2zM1814.5 39.5h3v3h-3zM1829.5 38.5h3v3h-3zM1846.5 29.5h3v3h-3zM1807.5 37.5h3v3h-3zM1832 28h2v1h1v2h-1v1h-2v-1h-1v-2h1zM1825 23h2v2h-2zM1836 51h2v1h1v2h-1v1h-2v-1h-1v-2h1zM1836 34h2v2h-2zM1840 34h2v2h-2zM1851.5 36.5h3v3h-3zM1822 34h2v1h1v2h-1v1h-2v-1h-1v-2h1zM1853 43h2v1h1v2h-1v1h-2v-1h-1v-2h1zM1823.5 35.5h3v3h-3zM1853 33h2v1h1v2h-1v1h-2v-1h-1v-2h1zM1809.5 37.5h3v3h-3zM1836 51h2v1h1v2h-1v1h-2v-1h-1v-2h1zM1859 28h2v2h-2zM1831.5 49.5h3v3h-3z"/><path fill="#2b2b22" d="M1840 47h2v2h-2zM1809 45h2v1h1v2h-1v1h-2v-1h-1v-2h1zM1829 37h2v2h-2zM1819 47h2v2h-2zM1841.5 44.5h3v3h-3zM1839 43h2v1h1v2h-1v1h-2v-1h-1v-2h1zM1827 41h2v2h-2zM1835 34h2v2h-2zM1849.5 47.5h3v3h-3zM1843.5 36.5h3v3h-3zM1855.5 45.5h3v3h-3zM1816 29h2v1h1v2h-1v1h-2v-1h-1v-2h1zM1826.5 49.5h3v3h-3zM1847 35h2v2h-2zM1839 30h2v1h1v2h-1v1h-2v-1h-1v-2h1zM1849.5 38.5h3v3h-3zM1838 34h2v2h-2zM1812 39h2v1h1v2h-1v1h-2v-1h-1v-2h1zM1841.5 33.5h3v3h-3z"/><path fill="#4c4a3a" d="M1853 48h2v2h-2zM1852 23h2v2h-2zM1855.5 27.5h3v3h-3zM1826.5 40.5h3v3h-3zM1845 23h2v1h1v2h-1v1h-2v-1h-1v-2h1zM1848.5 26.5h3v3h-3zM1804 36h2v1h1v2h-1v1h-2v-1h-1v-2h1zM1840 48h2v2h-2zM1837 24h2v1h1v2h-1v1h-2v-1h-1v-2h1zM1821.5 13.5h3v3h-3zM1834.5 29.5h3v3h-3zM1814 24h2v1h1v2h-1v1h-2v-1h-1v-2h1zM1851 47h2v2h-2zM1826 32h2v2h-2zM1855.5 30.5h3v3h-3zM1805 31h2v2h-2zM1823 28h2v2h-2zM1858 40h2v2h-2zM1840 37h2v2h-2zM1810 39h2v2h-2zM1838 37h2v1h1v2h-1v1h-2v-1h-1v-2h1zM1845 51h2v2h-2zM1806.5 30.5h3v3h-3zM1797.5 33.5h3v3h-3zM1849 24h2v2h-2zM1811 29h2v2h-2zM1855 30h2v2h-2zM1820 44h2v1h1v2h-1v1h-2v-1h-1v-2h1zM1858 28h2v1h1v2h-1v1h-2v-1h-1v-2h1zM1857 25h2v1h1v2h-1v1h-2v-1h-1v-2h1zM1819 43h2v2h-2zM1849 39h2v1h1v2h-1v1h-2v-1h-1v-2h1zM1811.5 48.5h3v3h-3zM1849 31h2v2h-2zM1825 38h2v1h1v2h-1v1h-2v-1h-1v-2h1zM1837 18h2v1h1v2h-1v1h-2v-1h-1v-2h1zM1845 26h2v1h1v2h-1v1h-2v-1h-1v-2h1zM1832 32h2v2h-2zM1814 25h2v1h1v2h-1v1h-2v-1h-1v-2h1zM1843 40h2v2h-2zM1815 35h2v1h1v2h-1v1h-2v-1h-1v-2h1zM1843 26h2v1h1v2h-1v1h-2v-1h-1v-2h1zM1821.5 26.5h3v3h-3zM1846 39h2v2h-2zM1818 17h2v1h1v2h-1v1h-2v-1h-1v-2h1zM1837 39h2v1h1v2h-1v1h-2v-1h-1v-2h1zM1858 28h2v2h-2zM1798 35h2v2h-2zM1849 33h2v1h1v2h-1v1h-2v-1h-1v-2h1zM1808.5 18.5h3v3h-3zM1852 37h2v1h1v2h-1v1h-2v-1h-1v-2h1zM1843 24h2v1h1v2h-1v1h-2v-1h-1v-2h1zM1820 13h2v1h1v2h-1v1h-2v-1h-1v-2h1zM1792.5 37.5h3v3h-3zM1797.5 36.5h3v3h-3zM1802 38h2v2h-2zM1843.5 33.5h3v3h-3zM1809 43h2v2h-2zM1832 28h2v2h-2zM1832 37h2v1h1v2h-1v1h-2v-1h-1v-2h1zM1797.5 44.5h3v3h-3zM1836 40h2v1h1v2h-1v1h-2v-1h-1v-2h1zM1842.5 24.5h3v3h-3zM1838.5 39.5h3v3h-3zM1853 40h2v1h1v2h-1v1h-2v-1h-1v-2h1zM1829 24h2v2h-2zM1827 32h2v2h-2zM1856 33h2v1h1v2h-1v1h-2v-1h-1v-2h1zM1808 20h2v1h1v2h-1v1h-2v-1h-1v-2h1zM1849 39h2v1h1v2h-1v1h-2v-1h-1v-2h1zM1800 33h2v1h1v2h-1v1h-2v-1h-1v-2h1zM1817.5 38.5h3v3h-3zM1815 33h2v2h-2zM1842 39h2v2h-2zM1803 38h2v1h1v2h-1v1h-2v-1h-1v-2h1zM1796.5 41.5h3v3h-3zM1823.5 22.5h3v3h-3zM1825.5 36.5h3v3h-3zM1813 36h2v1h1v2h-1v1h-2v-1h-1v-2h1zM1816.5 39.5h3v3h-3zM1823.5 25.5h3v3h-3zM1821 23h2v2h-2zM1797 34h2v1h1v2h-1v1h-2v-1h-1v-2h1zM1854 38h2v2h-2zM1854 45h2v2h-2zM1849 50h2v2h-2zM1847 36h2v1h1v2h-1v1h-2v-1h-1v-2h1zM1831 39h2v1h1v2h-1v1h-2v-1h-1v-2h1zM1845 42h2v1h1v2h-1v1h-2v-1h-1v-2h1zM1826 34h2v1h1v2h-1v1h-2v-1h-1v-2h1zM1820 35h2v1h1v2h-1v1h-2v-1h-1v-2h1zM1844.5 14.5h3v3h-3zM1831 47h2v1h1v2h-1v1h-2v-1h-1v-2h1zM1809 31h2v2h-2z"/><path fill="#5a5846" d="M1812.5 15.5h3v3h-3zM1821 31h2v1h1v2h-1v1h-2v-1h-1v-2h1zM1850.5 18.5h3v3h-3zM1837.5 33.5h3v3h-3zM1816.5 31.5h3v3h-3zM1814 33h2v2h-2zM1827 24h2v1h1v2h-1v1h-2v-1h-1v-2h1zM1845 19h2v2h-2zM1851 24h2v1h1v2h-1v1h-2v-1h-1v-2h1zM1828 38h2v2h-2zM1814 34h2v1h1v2h-1v1h-2v-1h-1v-2h1zM1818.5 31.5h3v3h-3zM1828.5 22.5h3v3h-3zM1832.5 21.5h3v3h-3zM1851.5 22.5h3v3h-3zM1851.5 20.5h3v3h-3zM1801 34h2v2h-2zM1828 38h2v1h1v2h-1v1h-2v-1h-1v-2h1zM1821 13h2v2h-2zM1803 30h2v1h1v2h-1v1h-2v-1h-1v-2h1zM1826 30h2v1h1v2h-1v1h-2v-1h-1v-2h1zM1830.5 27.5h3v3h-3zM1850 18h2v1h1v2h-1v1h-2v-1h-1v-2h1zM1847.5 35.5h3v3h-3zM1845 19h2v2h-2zM1835 23h2v1h1v2h-1v1h-2v-1h-1v-2h1zM1836 36h2v1h1v2h-1v1h-2v-1h-1v-2h1zM1840 17h2v2h-2zM1837 26h2v1h1v2h-1v1h-2v-1h-1v-2h1zM1820.5 13.5h3v3h-3zM1855 38h2v1h1v2h-1v1h-2v-1h-1v-2h1zM1832 21h2v2h-2zM1869.5 37.5h3v3h-3zM1802.5 37.5h3v3h-3zM1853.5 26.5h3v3h-3zM1848 35h2v1h1v2h-1v1h-2v-1h-1v-2h1zM1817.5 36.5h3v3h-3zM1830 17h2v1h1v2h-1v1h-2v-1h-1v-2h1zM1819 25h2v2h-2zM1848 28h2v2h-2zM1791.5 36.5h3v3h-3zM1817.5 28.5h3v3h-3zM1837.5 18.5h3v3h-3zM1856 23h2v2h-2zM1830.5 22.5h3v3h-3zM1813.5 37.5h3v3h-3zM1800.5 37.5h3v3h-3zM1831.5 18.5h3v3h-3zM1822 38h2v2h-2zM1812 19h2v1h1v2h-1v1h-2v-1h-1v-2h1zM1840.5 16.5h3v3h-3zM1850.5 17.5h3v3h-3zM1815 31h2v1h1v2h-1v1h-2v-1h-1v-2h1zM1811.5 38.5h3v3h-3zM1816 15h2v2h-2zM1841.5 19.5h3v3h-3zM1809 22h2v1h1v2h-1v1h-2v-1h-1v-2h1z"/><path fill="#66634e" d="M1803.5 27.5h3v3h-3zM1799.5 31.5h3v3h-3zM1811 29h2v2h-2zM1819.5 30.5h3v3h-3zM1828.5 17.5h3v3h-3zM1827.5 22.5h3v3h-3zM1853 30h2v2h-2zM1833 14h2v1h1v2h-1v1h-2v-1h-1v-2h1zM1832.5 18.5h3v3h-3zM1822 11h2v1h1v2h-1v1h-2v-1h-1v-2h1zM1817 16h2v1h1v2h-1v1h-2v-1h-1v-2h1zM1805 31h2v2h-2zM1820 12h2v1h1v2h-1v1h-2v-1h-1v-2h1zM1813 29h2v1h1v2h-1v1h-2v-1h-1v-2h1zM1825 13h2v1h1v2h-1v1h-2v-1h-1v-2h1zM1804 26h2v2h-2zM1840 31h2v1h1v2h-1v1h-2v-1h-1v-2h1zM1844.5 29.5h3v3h-3zM1846 30h2v2h-2zM1848.5 32.5h3v3h-3zM1812 29h2v1h1v2h-1v1h-2v-1h-1v-2h1zM1833 19h2v2h-2zM1828 31h2v1h1v2h-1v1h-2v-1h-1v-2h1zM1847 23h2v1h1v2h-1v1h-2v-1h-1v-2h1zM1850.5 27.5h3v3h-3zM1803 32h2v2h-2zM1830 35h2v2h-2zM1843 29h2v2h-2zM1827 19h2v2h-2zM1854 27h2v1h1v2h-1v1h-2v-1h-1v-2h1zM1806 23h2v2h-2z"/><path fill="#2b2b22" d="M1810 52h2v1h1v2h-1v1h-2v-1h-1v-2h1zM1834.5 50.5h3v3h-3zM1841 51h2v1h1v2h-1v1h-2v-1h-1v-2h1zM1851.5 51.5h3v3h-3zM1840.5 50.5h3v3h-3zM1844.5 51.5h3v3h-3zM1861 52h2v1h1v2h-1v1h-2v-1h-1v-2h1zM1846.5 50.5h3v3h-3zM1815 51h2v1h1v2h-1v1h-2v-1h-1v-2h1zM1811 52h2v1h1v2h-1v1h-2v-1h-1v-2h1zM1849.5 51.5h3v3h-3zM1854.5 51.5h3v3h-3zM1862 52h2v1h1v2h-1v1h-2v-1h-1v-2h1zM1859.5 49.5h3v3h-3zM1808.5 53.5h3v3h-3zM1826 52h2v1h1v2h-1v1h-2v-1h-1v-2h1zM1850 49h2v1h1v2h-1v1h-2v-1h-1v-2h1zM1835.5 51.5h3v3h-3zM1821 50h2v1h1v2h-1v1h-2v-1h-1v-2h1zM1803.5 50.5h3v3h-3zM1843.5 52.5h3v3h-3zM1843 51h2v1h1v2h-1v1h-2v-1h-1v-2h1zM1801.5 52.5h3v3h-3zM1831 49h2v1h1v2h-1v1h-2v-1h-1v-2h1zM1855.5 53.5h3v3h-3zM1843.5 52.5h3v3h-3zM1822 51h2v1h1v2h-1v1h-2v-1h-1v-2h1zM1807 50h2v1h1v2h-1v1h-2v-1h-1v-2h1z"/><ellipse cx="1821" cy="44.6" rx="14.86" ry="10.6" fill="#2b2b22"/><ellipse cx="1810.5" cy="52.92" rx="11.92" ry="10.6" fill="#2b2b22"/><ellipse cx="1831.5" cy="52.92" rx="11.92" ry="10.6" fill="#2b2b22"/><ellipse cx="1821" cy="54.84" rx="17.8" ry="10.6" fill="#2b2b22"/><ellipse cx="1815.96" cy="47.8" rx="12.76" ry="10.6" fill="#2b2b22"/><ellipse cx="1826.04" cy="47.8" rx="12.76" ry="10.6" fill="#2b2b22"/><ellipse cx="1821" cy="43.1" rx="13.36" ry="8.6" fill="#3d3c30"/><ellipse cx="1810.5" cy="51.42" rx="10.42" ry="8.6" fill="#3d3c30"/><ellipse cx="1831.5" cy="51.42" rx="10.42" ry="8.6" fill="#3d3c30"/><ellipse cx="1821" cy="53.34" rx="16.3" ry="8.6" fill="#3d3c30"/><ellipse cx="1815.96" cy="46.3" rx="11.26" ry="8.6" fill="#3d3c30"/><ellipse cx="1826.04" cy="46.3" rx="11.26" ry="8.6" fill="#3d3c30"/><path fill="#3d3c30" d="M1823 50h2v2h-2zM1816.5 48.5h3v3h-3zM1833.5 46.5h3v3h-3zM1829.5 45.5h3v3h-3zM1816 48h2v1h1v2h-1v1h-2v-1h-1v-2h1zM1822 47h2v1h1v2h-1v1h-2v-1h-1v-2h1zM1816 54h2v2h-2zM1807.5 44.5h3v3h-3zM1836 49h2v2h-2zM1816 47h2v2h-2zM1831 44h2v2h-2zM1818 57h2v1h1v2h-1v1h-2v-1h-1v-2h1zM1816.5 50.5h3v3h-3zM1831.5 50.5h3v3h-3zM1826 46h2v2h-2zM1825 43h2v1h1v2h-1v1h-2v-1h-1v-2h1zM1807 48h2v2h-2zM1828.5 39.5h3v3h-3zM1809.5 58.5h3v3h-3z"/><path fill="#2b2b22" d="M1827.5 49.5h3v3h-3zM1822 48h2v2h-2zM1811.5 44.5h3v3h-3zM1820.5 55.5h3v3h-3zM1818 47h2v1h1v2h-1v1h-2v-1h-1v-2h1zM1808.5 49.5h3v3h-3zM1820 48h2v2h-2zM1818 49h2v1h1v2h-1v1h-2v-1h-1v-2h1zM1816 47h2v2h-2zM1824 50h2v2h-2z"/><path fill="#4c4a3a" d="M1811 44h2v1h1v2h-1v1h-2v-1h-1v-2h1zM1825 47h2v2h-2zM1811 46h2v1h1v2h-1v1h-2v-1h-1v-2h1zM1808.5 40.5h3v3h-3zM1821 51h2v1h1v2h-1v1h-2v-1h-1v-2h1zM1833.5 48.5h3v3h-3zM1809 48h2v1h1v2h-1v1h-2v-1h-1v-2h1zM1812 50h2v1h1v2h-1v1h-2v-1h-1v-2h1zM1824.5 38.5h3v3h-3zM1814.5 40.5h3v3h-3zM1808 44h2v1h1v2h-1v1h-2v-1h-1v-2h1zM1816 39h2v2h-2zM1812.5 52.5h3v3h-3zM1827.5 47.5h3v3h-3zM1814 47h2v1h1v2h-1v1h-2v-1h-1v-2h1zM1826 49h2v2h-2zM1812 45h2v2h-2zM1820 43h2v2h-2zM1826.5 39.5h3v3h-3zM1815 46h2v2h-2zM1830 57h2v2h-2zM1803.5 47.5h3v3h-3zM1821 49h2v2h-2zM1823 57h2v1h1v2h-1v1h-2v-1h-1v-2h1zM1801 52h2v1h1v2h-1v1h-2v-1h-1v-2h1zM1815.5 52.5h3v3h-3z"/><path fill="#5a5846" d="M1826 47h2v2h-2zM1819 38h2v1h1v2h-1v1h-2v-1h-1v-2h1zM1816 47h2v2h-2zM1829.5 43.5h3v3h-3zM1806.5 46.5h3v3h-3zM1814.5 47.5h3v3h-3zM1829.5 43.5h3v3h-3zM1815 46h2v2h-2zM1807 51h2v1h1v2h-1v1h-2v-1h-1v-2h1zM1816 37h2v2h-2zM1827 40h2v2h-2zM1814 43h2v1h1v2h-1v1h-2v-1h-1v-2h1zM1814 42h2v2h-2zM1812 45h2v2h-2zM1811 48h2v2h-2zM1819 42h2v1h1v2h-1v1h-2v-1h-1v-2h1zM1807 40h2v1h1v2h-1v1h-2v-1h-1v-2h1zM1812 48h2v2h-2z"/><path fill="#66634e" d="M1810 39h2v1h1v2h-1v1h-2v-1h-1v-2h1zM1826 39h2v1h1v2h-1v1h-2v-1h-1v-2h1zM1812 41h2v2h-2zM1804.5 45.5h3v3h-3zM1831 38h2v1h1v2h-1v1h-2v-1h-1v-2h1zM1835.5 45.5h3v3h-3zM1825 36h2v1h1v2h-1v1h-2v-1h-1v-2h1z"/><path fill="#2b2b22" d="M1828 59h2v1h1v2h-1v1h-2v-1h-1v-2h1zM1807.5 58.5h3v3h-3zM1809 58h2v1h1v2h-1v1h-2v-1h-1v-2h1zM1833 61h2v1h1v2h-1v1h-2v-1h-1v-2h1zM1820 61h2v1h1v2h-1v1h-2v-1h-1v-2h1zM1833.5 59.5h3v3h-3zM1829.5 58.5h3v3h-3zM1816.5 61.5h3v3h-3zM1813 59h2v1h1v2h-1v1h-2v-1h-1v-2h1zM1816.5 60.5h3v3h-3zM1825 59h2v1h1v2h-1v1h-2v-1h-1v-2h1zM1836 58h2v1h1v2h-1v1h-2v-1h-1v-2h1zM1816.5 59.5h3v3h-3zM1832 61h2v1h1v2h-1v1h-2v-1h-1v-2h1z"/><line x1="1826" y1="70" x2="1836" y2="58" stroke="#2b241c" stroke-width="2"/><polygon points="1847,66 1868,32 1912,36 1920,38 1920,110 1847,110" fill="#4b3d2e"/><polygon points="1868,32 1920,36 1920,72 1905,76 1884,64 1874,48" fill="#3b5d4b"/><polygon points="1870,34 1920,38 1920,46 1876,42" fill="#4b725c"/><polygon points="1847,66 1868,32 1872,36 1852,70" fill="#2f4a3c"/><rect x="1910" y="31" width="10" height="20" fill="#8a4a34"/><rect x="1908" y="29" width="12" height="3" fill="#a05a40"/><rect x="1852" y="76" width="22" height="4" fill="#7a4630"/><polygon points="1850,74 1876,70 1876,74 1850,80" fill="#8a5238"/><rect x="1856" y="80" width="12" height="30" fill="#2a221c"/><rect x="1872" y="76" width="48" height="1" fill="#33291f"/><rect x="1872" y="81" width="48" height="1" fill="#33291f"/><rect x="1872" y="86" width="48" height="1" fill="#33291f"/><rect x="1872" y="91" width="48" height="1" fill="#33291f"/><rect x="1872" y="96" width="48" height="1" fill="#33291f"/><rect x="1872" y="101" width="48" height="1" fill="#33291f"/><rect x="1872" y="106" width="48" height="1" fill="#33291f"/><rect x="1884" y="74" width="14" height="10" fill="#6d6d64"/><rect x="1900" y="80" width="20" height="10" fill="#5a5a52"/><rect x="1890" y="90" width="18" height="8" fill="#3a3028"/><line x1="1880" y1="70" x2="1908" y2="110" stroke="#6a4a30" stroke-width="2.5"/><rect x="1896" y="96" width="24" height="14" fill="#5a4632"/><rect x="1906" y="102" width="14" height="8" fill="#7a5c3a"/><rect x="1806" y="70" width="8" height="30" fill="#a27cc4"/><rect x="1838" y="70" width="8" height="30" fill="#a27cc4"/><rect x="1808" y="70" width="2" height="30" fill="#c9a8e2"/><rect x="1840" y="70" width="2" height="30" fill="#c9a8e2"/><rect x="1813" y="66" width="24" height="22" fill="#a48436"/><rect x="1815" y="68" width="20" height="18" fill="#4c3444"/><rect x="1812" y="90" width="28" height="5" fill="#8a8ea0"/><rect x="1822" y="95" width="8" height="15" fill="#7a7e90"/><rect x="1805" y="92" width="10" height="18" fill="#8e92a6"/><polygon points="1805,100 1815,96 1815,98 1805,102" fill="#e0b030"/><polygon points="1805,104 1815,100 1815,102 1805,106" fill="#e0b030"/><polygon points="1805,108 1815,104 1815,106 1805,110" fill="#e0b030"/><rect x="1805" y="106" width="10" height="4" fill="#7a5aa0"/><rect x="1838" y="92" width="10" height="18" fill="#8e92a6"/><polygon points="1838,100 1848,96 1848,98 1838,102" fill="#e0b030"/><polygon points="1838,104 1848,100 1848,102 1838,106" fill="#e0b030"/><polygon points="1838,108 1848,104 1848,106 1838,110" fill="#e0b030"/><rect x="1838" y="106" width="10" height="4" fill="#7a5aa0"/><rect x="1756" y="91" width="12" height="2" fill="#2a2a3a"/><rect x="1760" y="89" width="4" height="3" fill="#2a2a3a"/><polygon points="1756,95 1768,95 1772,106 1768,110 1756,110 1753,106" fill="#3c4c80"/><polygon points="1760,95 1766,95 1762,104" fill="#c83a3a"/><rect x="1764" y="104" width="2" height="4" fill="#e8c030"/><rect x="1776" y="92" width="30" height="1.5" fill="#3a5a9a"/><rect x="1788" y="90" width="5" height="3" fill="#c84a2a"/><rect x="1786" y="94" width="9" height="14" fill="#ea6a3a"/><rect x="1788" y="96" width="3" height="8" fill="#ffa070"/><rect x="1782" y="100" width="18" height="6" fill="#8a9ab0"/><rect x="1784" y="106" width="3" height="4" fill="#5a6a80"/><rect x="1795" y="106" width="3" height="4" fill="#5a6a80"/></svg></div>

</body>
</html>
